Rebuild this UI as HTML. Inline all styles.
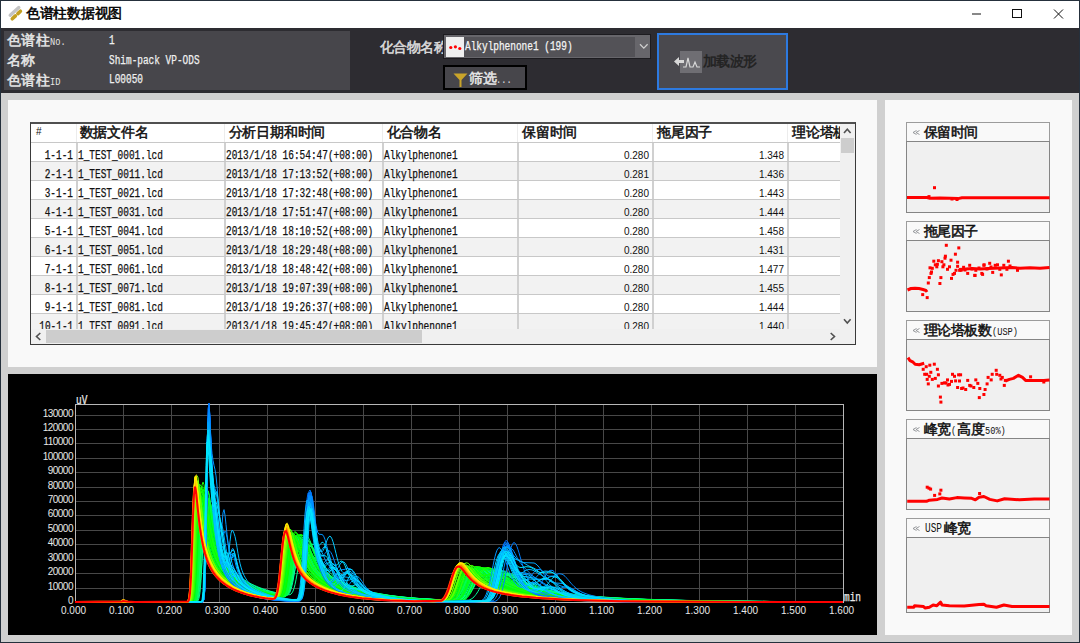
<!DOCTYPE html><html><head><meta charset="utf-8"><style>
*{margin:0;padding:0;box-sizing:border-box}
html,body{width:1080px;height:643px;overflow:hidden;background:#25303c;font-family:"Liberation Sans",sans-serif}
.a{position:absolute}
.t{position:absolute;white-space:pre;line-height:1}
.m{font-family:"Liberation Mono",monospace;font-size:12px;transform:scaleX(.786);transform-origin:0 0;-webkit-text-stroke:0.25px currentColor}
.mr{font-family:"Liberation Mono",monospace;font-size:12px;transform:scaleX(.786);transform-origin:100% 0;-webkit-text-stroke:0.25px currentColor}
.d{font-size:10px;letter-spacing:-0.5px}
.c{font-size:14.3px}
.lm{font-family:"Liberation Mono",monospace;display:inline-block;transform:scaleX(.786);transform-origin:0 100%}
.n{font-size:10px}
svg{position:absolute;left:0;top:0}
</style></head><body><div class="a" style="left:1px;top:1px;width:1078px;height:27px;background:#ffffff"></div><div class="a" style="left:1px;top:28px;width:1078px;height:65px;background:#2d2c31"></div><div class="a" style="left:4px;top:31px;width:346px;height:59px;background:#47464b"></div><div class="a" style="left:1px;top:93px;width:1078px;height:549px;background:#d0d0d0"></div><div class="a" style="left:8px;top:100px;width:869px;height:267px;background:#f9f9f9"></div><div class="a" style="left:8px;top:374px;width:869px;height:261px;background:#000000"></div><div class="a" style="left:885px;top:100px;width:187px;height:535px;background:#f9f9f9"></div><svg width="1080" height="30" style="left:0;top:0">
<line x1="10.2" y1="15.2" x2="18.8" y2="7.6" stroke="#c4c4c4" stroke-width="3.4" stroke-linecap="round"/>
<line x1="12.3" y1="18.8" x2="15.4" y2="15.9" stroke="#c4a021" stroke-width="3.6" stroke-linecap="round"/>
<line x1="17.9" y1="13.6" x2="20.4" y2="11.2" stroke="#c4a021" stroke-width="3.6" stroke-linecap="round"/>
<line x1="972" y1="14" x2="981" y2="14" stroke="#555" stroke-width="1.4"/>
<rect x="1012.5" y="9.5" width="9" height="8" fill="none" stroke="#111" stroke-width="1"/>
<path d="M1054 9.5L1063 18.5M1063 9.5L1054 18.5" stroke="#111" stroke-width="1"/>
</svg><div class="t" style="left:26.1px;top:6.2px;font-size:14.27px;letter-spacing:-0.30px;color:#000"><span style="-webkit-text-stroke:0.5px #000">色谱柱数据视图</span></div><div class="t" style="left:7.1px;top:34.1px;font-size:13.87px;letter-spacing:0.40px;color:#e6e6e6"><span style="-webkit-text-stroke:0.5px #e6e6e6">色谱柱</span><span class="lm" style="font-size:11px;letter-spacing:0">No.</span></div><div class="t" style="left:7.1px;top:54.0px;font-size:13.87px;letter-spacing:0.40px;color:#e6e6e6"><span style="-webkit-text-stroke:0.5px #e6e6e6">名称</span></div><div class="t" style="left:7.1px;top:73.6px;font-size:13.87px;letter-spacing:0.40px;color:#e6e6e6"><span style="-webkit-text-stroke:0.5px #e6e6e6">色谱柱</span><span class="lm" style="font-size:11px;letter-spacing:0">ID</span></div><div class="t m" style="left:109px;top:35px;color:#f0f0f0">1</div><div class="t m" style="left:109px;top:54.5px;color:#f0f0f0">Shim-pack VP-ODS</div><div class="t m" style="left:109px;top:74px;color:#f0f0f0">L00050</div><div class="t" style="left:379.6px;top:39.8px;font-size:14.13px;letter-spacing:-0.40px;color:#dcdcdc"><span style="-webkit-text-stroke:0.5px #dcdcdc">化合物名称</span></div><div class="a" style="left:443px;top:34px;width:208px;height:25px;background:#67666b;border:1px solid #1d1c20"></div><div class="a" style="left:464px;top:37px;width:171px;height:20px;background:#535257"></div><div class="a" style="left:446px;top:37px;width:18px;height:20px;background:#efefef"></div><svg width="1080" height="100" style="left:0;top:0">
<circle cx="450.8" cy="47.5" r="1.6" fill="#f00"/><circle cx="455.4" cy="46.8" r="1.6" fill="#f00"/><circle cx="459.8" cy="48.5" r="1.6" fill="#f00"/>
<path d="M640 44.3L643.8 48.1L647.6 44.3" fill="none" stroke="#d0d0d0" stroke-width="1.3"/>
</svg><div class="t m" style="left:465px;top:41px;color:#f4f4f4">Alkylphenone1 (199)</div><div class="a" style="left:443px;top:65px;width:84px;height:25px;background:#47464b;border:2px solid #000"></div><svg width="1080" height="100" style="left:0;top:0">
<path d="M453.5 73.5H467.5L461.5 80V87H459.5V80Z" fill="#c9a42a"/>
</svg><div class="t" style="left:469.1px;top:70.8px;font-size:14.13px;letter-spacing:-0.40px;color:#e8e8e8"><span style="-webkit-text-stroke:0.5px #e8e8e8">筛选</span><span class="lm" style="font-size:11px;letter-spacing:0">...</span></div><div class="a" style="left:657px;top:33px;width:131px;height:57px;background:#4a494e;border:2px solid #2d7ae0"></div><div class="a" style="left:680px;top:51px;width:22px;height:22px;background:#6f6e73"></div><svg width="1080" height="100" style="left:0;top:0">
<path d="M674 61.5L679 57V60H684V63H679V66Z" fill="#d8d8d8"/>
<path d="M683 67H686L688 58L690 67H693L695 62L697 67H700" fill="none" stroke="#d8d8d8" stroke-width="1.2"/>
</svg><div class="t" style="left:702.6px;top:53.8px;font-size:14.13px;letter-spacing:-0.40px;color:#222"><span style="-webkit-text-stroke:0.5px #222">加载波形</span></div><div class="a" style="left:30px;top:122px;width:826px;height:223px;background:#ffffff;border:1px solid #3a3a3a;border-top:2px solid #505050"></div><div class="a" style="left:31px;top:124px;width:809px;height:205px;overflow:hidden"><div class="a" style="left:0px;top:18px;width:809px;height:1px;background:#c8c8c8"></div><div class="a" style="left:45px;top:0px;width:1px;height:18px;background:#ececec"></div><div class="a" style="left:193px;top:0px;width:1px;height:18px;background:#ececec"></div><div class="a" style="left:351px;top:0px;width:1px;height:18px;background:#ececec"></div><div class="a" style="left:486px;top:0px;width:1px;height:18px;background:#ececec"></div><div class="a" style="left:621px;top:0px;width:1px;height:18px;background:#ececec"></div><div class="a" style="left:756px;top:0px;width:1px;height:18px;background:#ececec"></div><div class="a" style="left:0px;top:37px;width:809px;height:1px;background:#c8c8c8"></div><div class="a" style="left:45px;top:19px;width:2px;height:18px;background:#d0d0d0"></div><div class="a" style="left:193px;top:19px;width:2px;height:18px;background:#d0d0d0"></div><div class="a" style="left:351px;top:19px;width:2px;height:18px;background:#d0d0d0"></div><div class="a" style="left:486px;top:19px;width:2px;height:18px;background:#d0d0d0"></div><div class="a" style="left:621px;top:19px;width:2px;height:18px;background:#d0d0d0"></div><div class="a" style="left:756px;top:19px;width:2px;height:18px;background:#d0d0d0"></div><div class="t mr" style="right:767px;top:26px;color:#111">1-1-1</div><div class="t m" style="left:47px;top:26px;color:#111">1_TEST_0001.lcd</div><div class="t m" style="left:195px;top:26px;color:#111">2013/1/18 16:54:47(+08:00)</div><div class="t m" style="left:353px;top:26px;color:#111">Alkylphenone1</div><div class="t n" style="right:191px;top:27px;color:#111">0.280</div><div class="t n" style="right:56px;top:27px;color:#111">1.348</div><div class="a" style="left:0px;top:38px;width:809px;height:18px;background:#f2f2f2"></div><div class="a" style="left:0px;top:56px;width:809px;height:1px;background:#c8c8c8"></div><div class="a" style="left:45px;top:38px;width:2px;height:18px;background:#d0d0d0"></div><div class="a" style="left:193px;top:38px;width:2px;height:18px;background:#d0d0d0"></div><div class="a" style="left:351px;top:38px;width:2px;height:18px;background:#d0d0d0"></div><div class="a" style="left:486px;top:38px;width:2px;height:18px;background:#d0d0d0"></div><div class="a" style="left:621px;top:38px;width:2px;height:18px;background:#d0d0d0"></div><div class="a" style="left:756px;top:38px;width:2px;height:18px;background:#d0d0d0"></div><div class="t mr" style="right:767px;top:45px;color:#111">2-1-1</div><div class="t m" style="left:47px;top:45px;color:#111">1_TEST_0011.lcd</div><div class="t m" style="left:195px;top:45px;color:#111">2013/1/18 17:13:52(+08:00)</div><div class="t m" style="left:353px;top:45px;color:#111">Alkylphenone1</div><div class="t n" style="right:191px;top:46px;color:#111">0.281</div><div class="t n" style="right:56px;top:46px;color:#111">1.436</div><div class="a" style="left:0px;top:75px;width:809px;height:1px;background:#c8c8c8"></div><div class="a" style="left:45px;top:57px;width:2px;height:18px;background:#d0d0d0"></div><div class="a" style="left:193px;top:57px;width:2px;height:18px;background:#d0d0d0"></div><div class="a" style="left:351px;top:57px;width:2px;height:18px;background:#d0d0d0"></div><div class="a" style="left:486px;top:57px;width:2px;height:18px;background:#d0d0d0"></div><div class="a" style="left:621px;top:57px;width:2px;height:18px;background:#d0d0d0"></div><div class="a" style="left:756px;top:57px;width:2px;height:18px;background:#d0d0d0"></div><div class="t mr" style="right:767px;top:64px;color:#111">3-1-1</div><div class="t m" style="left:47px;top:64px;color:#111">1_TEST_0021.lcd</div><div class="t m" style="left:195px;top:64px;color:#111">2013/1/18 17:32:48(+08:00)</div><div class="t m" style="left:353px;top:64px;color:#111">Alkylphenone1</div><div class="t n" style="right:191px;top:65px;color:#111">0.280</div><div class="t n" style="right:56px;top:65px;color:#111">1.443</div><div class="a" style="left:0px;top:76px;width:809px;height:18px;background:#f2f2f2"></div><div class="a" style="left:0px;top:94px;width:809px;height:1px;background:#c8c8c8"></div><div class="a" style="left:45px;top:76px;width:2px;height:18px;background:#d0d0d0"></div><div class="a" style="left:193px;top:76px;width:2px;height:18px;background:#d0d0d0"></div><div class="a" style="left:351px;top:76px;width:2px;height:18px;background:#d0d0d0"></div><div class="a" style="left:486px;top:76px;width:2px;height:18px;background:#d0d0d0"></div><div class="a" style="left:621px;top:76px;width:2px;height:18px;background:#d0d0d0"></div><div class="a" style="left:756px;top:76px;width:2px;height:18px;background:#d0d0d0"></div><div class="t mr" style="right:767px;top:83px;color:#111">4-1-1</div><div class="t m" style="left:47px;top:83px;color:#111">1_TEST_0031.lcd</div><div class="t m" style="left:195px;top:83px;color:#111">2013/1/18 17:51:47(+08:00)</div><div class="t m" style="left:353px;top:83px;color:#111">Alkylphenone1</div><div class="t n" style="right:191px;top:84px;color:#111">0.280</div><div class="t n" style="right:56px;top:84px;color:#111">1.444</div><div class="a" style="left:0px;top:113px;width:809px;height:1px;background:#c8c8c8"></div><div class="a" style="left:45px;top:95px;width:2px;height:18px;background:#d0d0d0"></div><div class="a" style="left:193px;top:95px;width:2px;height:18px;background:#d0d0d0"></div><div class="a" style="left:351px;top:95px;width:2px;height:18px;background:#d0d0d0"></div><div class="a" style="left:486px;top:95px;width:2px;height:18px;background:#d0d0d0"></div><div class="a" style="left:621px;top:95px;width:2px;height:18px;background:#d0d0d0"></div><div class="a" style="left:756px;top:95px;width:2px;height:18px;background:#d0d0d0"></div><div class="t mr" style="right:767px;top:102px;color:#111">5-1-1</div><div class="t m" style="left:47px;top:102px;color:#111">1_TEST_0041.lcd</div><div class="t m" style="left:195px;top:102px;color:#111">2013/1/18 18:10:52(+08:00)</div><div class="t m" style="left:353px;top:102px;color:#111">Alkylphenone1</div><div class="t n" style="right:191px;top:103px;color:#111">0.280</div><div class="t n" style="right:56px;top:103px;color:#111">1.458</div><div class="a" style="left:0px;top:114px;width:809px;height:18px;background:#f2f2f2"></div><div class="a" style="left:0px;top:132px;width:809px;height:1px;background:#c8c8c8"></div><div class="a" style="left:45px;top:114px;width:2px;height:18px;background:#d0d0d0"></div><div class="a" style="left:193px;top:114px;width:2px;height:18px;background:#d0d0d0"></div><div class="a" style="left:351px;top:114px;width:2px;height:18px;background:#d0d0d0"></div><div class="a" style="left:486px;top:114px;width:2px;height:18px;background:#d0d0d0"></div><div class="a" style="left:621px;top:114px;width:2px;height:18px;background:#d0d0d0"></div><div class="a" style="left:756px;top:114px;width:2px;height:18px;background:#d0d0d0"></div><div class="t mr" style="right:767px;top:121px;color:#111">6-1-1</div><div class="t m" style="left:47px;top:121px;color:#111">1_TEST_0051.lcd</div><div class="t m" style="left:195px;top:121px;color:#111">2013/1/18 18:29:48(+08:00)</div><div class="t m" style="left:353px;top:121px;color:#111">Alkylphenone1</div><div class="t n" style="right:191px;top:122px;color:#111">0.280</div><div class="t n" style="right:56px;top:122px;color:#111">1.431</div><div class="a" style="left:0px;top:151px;width:809px;height:1px;background:#c8c8c8"></div><div class="a" style="left:45px;top:133px;width:2px;height:18px;background:#d0d0d0"></div><div class="a" style="left:193px;top:133px;width:2px;height:18px;background:#d0d0d0"></div><div class="a" style="left:351px;top:133px;width:2px;height:18px;background:#d0d0d0"></div><div class="a" style="left:486px;top:133px;width:2px;height:18px;background:#d0d0d0"></div><div class="a" style="left:621px;top:133px;width:2px;height:18px;background:#d0d0d0"></div><div class="a" style="left:756px;top:133px;width:2px;height:18px;background:#d0d0d0"></div><div class="t mr" style="right:767px;top:140px;color:#111">7-1-1</div><div class="t m" style="left:47px;top:140px;color:#111">1_TEST_0061.lcd</div><div class="t m" style="left:195px;top:140px;color:#111">2013/1/18 18:48:42(+08:00)</div><div class="t m" style="left:353px;top:140px;color:#111">Alkylphenone1</div><div class="t n" style="right:191px;top:141px;color:#111">0.280</div><div class="t n" style="right:56px;top:141px;color:#111">1.477</div><div class="a" style="left:0px;top:152px;width:809px;height:18px;background:#f2f2f2"></div><div class="a" style="left:0px;top:170px;width:809px;height:1px;background:#c8c8c8"></div><div class="a" style="left:45px;top:152px;width:2px;height:18px;background:#d0d0d0"></div><div class="a" style="left:193px;top:152px;width:2px;height:18px;background:#d0d0d0"></div><div class="a" style="left:351px;top:152px;width:2px;height:18px;background:#d0d0d0"></div><div class="a" style="left:486px;top:152px;width:2px;height:18px;background:#d0d0d0"></div><div class="a" style="left:621px;top:152px;width:2px;height:18px;background:#d0d0d0"></div><div class="a" style="left:756px;top:152px;width:2px;height:18px;background:#d0d0d0"></div><div class="t mr" style="right:767px;top:159px;color:#111">8-1-1</div><div class="t m" style="left:47px;top:159px;color:#111">1_TEST_0071.lcd</div><div class="t m" style="left:195px;top:159px;color:#111">2013/1/18 19:07:39(+08:00)</div><div class="t m" style="left:353px;top:159px;color:#111">Alkylphenone1</div><div class="t n" style="right:191px;top:160px;color:#111">0.280</div><div class="t n" style="right:56px;top:160px;color:#111">1.455</div><div class="a" style="left:0px;top:189px;width:809px;height:1px;background:#c8c8c8"></div><div class="a" style="left:45px;top:171px;width:2px;height:18px;background:#d0d0d0"></div><div class="a" style="left:193px;top:171px;width:2px;height:18px;background:#d0d0d0"></div><div class="a" style="left:351px;top:171px;width:2px;height:18px;background:#d0d0d0"></div><div class="a" style="left:486px;top:171px;width:2px;height:18px;background:#d0d0d0"></div><div class="a" style="left:621px;top:171px;width:2px;height:18px;background:#d0d0d0"></div><div class="a" style="left:756px;top:171px;width:2px;height:18px;background:#d0d0d0"></div><div class="t mr" style="right:767px;top:178px;color:#111">9-1-1</div><div class="t m" style="left:47px;top:178px;color:#111">1_TEST_0081.lcd</div><div class="t m" style="left:195px;top:178px;color:#111">2013/1/18 19:26:37(+08:00)</div><div class="t m" style="left:353px;top:178px;color:#111">Alkylphenone1</div><div class="t n" style="right:191px;top:179px;color:#111">0.280</div><div class="t n" style="right:56px;top:179px;color:#111">1.444</div><div class="a" style="left:0px;top:190px;width:809px;height:18px;background:#f2f2f2"></div><div class="a" style="left:0px;top:208px;width:809px;height:1px;background:#c8c8c8"></div><div class="a" style="left:45px;top:190px;width:2px;height:18px;background:#d0d0d0"></div><div class="a" style="left:193px;top:190px;width:2px;height:18px;background:#d0d0d0"></div><div class="a" style="left:351px;top:190px;width:2px;height:18px;background:#d0d0d0"></div><div class="a" style="left:486px;top:190px;width:2px;height:18px;background:#d0d0d0"></div><div class="a" style="left:621px;top:190px;width:2px;height:18px;background:#d0d0d0"></div><div class="a" style="left:756px;top:190px;width:2px;height:18px;background:#d0d0d0"></div><div class="t mr" style="right:767px;top:197px;color:#111">10-1-1</div><div class="t m" style="left:47px;top:197px;color:#111">1_TEST_0091.lcd</div><div class="t m" style="left:195px;top:197px;color:#111">2013/1/18 19:45:42(+08:00)</div><div class="t m" style="left:353px;top:197px;color:#111">Alkylphenone1</div><div class="t n" style="right:191px;top:198px;color:#111">0.280</div><div class="t n" style="right:56px;top:198px;color:#111">1.440</div></div><div class="a" style="left:31px;top:124px;width:809px;height:18px;overflow:hidden"><div class="t" style="left:48.6px;top:1.2px;font-size:14.40px;letter-spacing:-0.20px;color:#111"><span style="-webkit-text-stroke:0.5px #111">数据文件名</span></div><div class="t" style="left:197.6px;top:1.2px;font-size:14.40px;letter-spacing:-0.20px;color:#111"><span style="-webkit-text-stroke:0.5px #111">分析日期和时间</span></div><div class="t" style="left:355.6px;top:1.2px;font-size:14.40px;letter-spacing:-0.20px;color:#111"><span style="-webkit-text-stroke:0.5px #111">化合物名</span></div><div class="t" style="left:491.1px;top:1.2px;font-size:14.40px;letter-spacing:-0.20px;color:#111"><span style="-webkit-text-stroke:0.5px #111">保留时间</span></div><div class="t" style="left:626.1px;top:1.2px;font-size:14.40px;letter-spacing:-0.20px;color:#111"><span style="-webkit-text-stroke:0.5px #111">拖尾因子</span></div><div class="t" style="left:761.1px;top:1.2px;font-size:14.40px;letter-spacing:-0.20px;color:#111"><span style="-webkit-text-stroke:0.5px #111">理论塔板数</span></div><div class="t" style="left:5px;top:3px;font-size:10px;color:#111">#</div></div><div class="a" style="left:840px;top:124px;width:15px;height:205px;background:#f0f0f0"></div><div class="a" style="left:841px;top:138px;width:13px;height:15px;background:#cdcdcd"></div><div class="a" style="left:31px;top:329px;width:824px;height:15px;background:#f0f0f0"></div><div class="a" style="left:46px;top:330px;width:376px;height:13px;background:#cdcdcd"></div><svg width="1080" height="400" style="left:0;top:0">
<path d="M844 133L847.3 129.2L850.6 133" fill="none" stroke="#505050" stroke-width="1.6"/>
<path d="M844 319.2L847.3 323L850.6 319.2" fill="none" stroke="#505050" stroke-width="1.6"/>
<path d="M40.3 333L36.5 336.5L40.3 340" fill="none" stroke="#505050" stroke-width="1.6"/>
<path d="M830.7 333L834.5 336.5L830.7 340" fill="none" stroke="#505050" stroke-width="1.6"/>
</svg><svg width="1080" height="643" style="left:0;top:0"><rect x="75.5" y="404.5" width="768" height="198" fill="none" stroke="#b8b8b8" stroke-width="1"/><line x1="123.5" y1="405" x2="123.5" y2="602" stroke="#484848"/><line x1="171.5" y1="405" x2="171.5" y2="602" stroke="#484848"/><line x1="219.5" y1="405" x2="219.5" y2="602" stroke="#484848"/><line x1="267.5" y1="405" x2="267.5" y2="602" stroke="#484848"/><line x1="315.5" y1="405" x2="315.5" y2="602" stroke="#484848"/><line x1="363.5" y1="405" x2="363.5" y2="602" stroke="#484848"/><line x1="411.5" y1="405" x2="411.5" y2="602" stroke="#484848"/><line x1="459.5" y1="405" x2="459.5" y2="602" stroke="#484848"/><line x1="507.5" y1="405" x2="507.5" y2="602" stroke="#484848"/><line x1="555.5" y1="405" x2="555.5" y2="602" stroke="#484848"/><line x1="603.5" y1="405" x2="603.5" y2="602" stroke="#484848"/><line x1="651.5" y1="405" x2="651.5" y2="602" stroke="#484848"/><line x1="699.5" y1="405" x2="699.5" y2="602" stroke="#484848"/><line x1="747.5" y1="405" x2="747.5" y2="602" stroke="#484848"/><line x1="795.5" y1="405" x2="795.5" y2="602" stroke="#484848"/><line x1="76" y1="588.5" x2="843" y2="588.5" stroke="#484848"/><line x1="76" y1="573.5" x2="843" y2="573.5" stroke="#484848"/><line x1="76" y1="559.5" x2="843" y2="559.5" stroke="#484848"/><line x1="76" y1="544.5" x2="843" y2="544.5" stroke="#484848"/><line x1="76" y1="530.5" x2="843" y2="530.5" stroke="#484848"/><line x1="76" y1="515.5" x2="843" y2="515.5" stroke="#484848"/><line x1="76" y1="501.5" x2="843" y2="501.5" stroke="#484848"/><line x1="76" y1="487.5" x2="843" y2="487.5" stroke="#484848"/><line x1="76" y1="472.5" x2="843" y2="472.5" stroke="#484848"/><line x1="76" y1="458.5" x2="843" y2="458.5" stroke="#484848"/><line x1="76" y1="443.5" x2="843" y2="443.5" stroke="#484848"/><line x1="76" y1="429.5" x2="843" y2="429.5" stroke="#484848"/><line x1="76" y1="415.5" x2="843" y2="415.5" stroke="#484848"/></svg><svg width="1080" height="643" style="left:0;top:0"><defs><clipPath id="pc"><rect x="75" y="403" width="769" height="201"/></clipPath></defs><g clip-path="url(#pc)" fill="none" stroke-width="1"><path d="M75 602.0L195 601.7L196 601.0L197 598.6L198 593.1L199 582.5L200 566.2L201 546.5L202 527.8L203 514.3L204 507.1L205 504.1L206 502.3L207 500.2L208 498.7L209 499.4L210 502.9L211 508.4L212 514.6L213 520.8L214 526.5L215 531.5L216 536.0L217 540.1L218 543.7L219 546.9L220 549.8L221 552.5L222 554.9L223 557.1L224 559.1L225 561.0L226 562.7L227 564.3L228 565.8L229 567.2L230 568.5L231 569.7L232 570.8L233 571.9L234 572.9L235 573.8L236 574.7L237 575.6L238 576.4L239 577.2L240 578.0L241 578.7L242 579.4L243 580.0L244 580.7L245 581.3L246 581.9L247 582.4L248 583.0L249 583.5L250 584.0L251 584.5L252 585.0L253 585.5L254 585.9L255 586.3L256 586.8L257 587.2L259 587.9L261 588.7L263 589.4L265 590.0L267 590.6L269 591.2L271 591.8L273 592.3L275 592.8L277 593.2L279 593.7L282 594.2L285 594.2L286 593.8L287 592.9L288 591.3L289 588.9L290 585.4L291 580.9L292 575.3L293 569.0L294 562.4L295 556.1L296 550.5L297 546.1L298 543.2L299 541.7L300 541.6L301 542.5L302 544.1L303 546.1L304 548.3L305 550.3L306 552.1L307 553.6L308 554.6L309 555.3L311 555.9L312 556.1L313 556.6L314 557.3L315 558.2L316 559.5L317 561.0L318 562.6L319 564.2L320 565.8L321 567.3L322 568.7L323 570.1L324 571.3L325 572.5L326 573.6L327 574.6L328 575.5L329 576.4L330 577.2L331 578.0L332 578.7L333 579.4L334 580.0L335 580.7L336 581.2L337 581.8L338 582.3L339 582.9L340 583.3L341 583.8L342 584.3L343 584.7L344 585.1L345 585.5L347 586.3L349 587.0L351 587.7L353 588.3L355 588.9L357 589.5L359 590.0L361 590.5L363 591.0L365 591.5L367 591.9L369 592.3L372 592.9L375 593.5L378 594.0L381 594.5L384 594.9L387 595.3L391 595.8L395 596.3L399 596.8L403 597.2L408 597.6L413 598.0L419 598.5L426 598.9L434 599.4L443 599.8L455 600.2L462 599.6L463 599.3L464 598.9L465 598.3L466 597.5L467 596.6L468 595.5L469 594.2L470 592.7L471 591.1L472 589.2L473 587.3L474 585.3L475 583.3L476 581.4L477 579.6L478 577.9L479 576.4L480 575.1L481 574.0L482 573.1L483 572.5L484 572.1L492 572.7L494 573.4L495 573.9L496 574.3L497 574.9L498 575.5L499 576.1L500 576.7L501 577.4L502 578.1L503 578.7L504 579.4L505 580.0L506 580.7L507 581.3L508 581.9L509 582.5L510 583.0L511 583.6L512 584.1L513 584.5L514 585.0L515 585.4L516 585.9L517 586.3L519 587.0L521 587.7L523 588.4L525 588.9L527 589.5L529 590.0L531 590.5L533 590.9L535 591.3L538 591.9L541 592.4L544 592.9L547 593.4L550 593.8L554 594.3L558 594.8L562 595.2L567 595.7L572 596.1L578 596.6L584 597.0L591 597.4L598 597.9L606 598.3L615 598.7L625 599.1L637 599.5L651 599.9L668 600.3L690 600.7L721 601.1L771 601.5L843 601.8" stroke="#00ffa1"/><path d="M75 602.0L122 601.6L123 601.0L127 601.6L195 601.8L196 601.1L197 599.1L198 594.3L199 585.2L200 571.5L201 555.0L202 539.7L203 529.0L204 523.8L205 522.4L206 521.6L207 519.4L208 515.5L209 511.4L210 509.4L211 510.3L212 514.0L213 519.4L214 525.2L215 530.7L216 535.7L217 540.2L218 544.2L219 547.7L220 550.9L221 553.7L222 556.3L223 558.6L224 560.7L225 562.6L226 564.3L227 566.0L228 567.4L229 568.8L230 570.1L231 571.3L232 572.5L233 573.5L234 574.5L235 575.5L236 576.3L237 577.2L238 578.0L239 578.8L240 579.5L241 580.2L242 580.9L243 581.5L244 582.1L245 582.7L246 583.3L247 583.8L248 584.4L249 584.9L250 585.4L251 585.9L252 586.3L253 586.8L254 587.2L255 587.6L256 588.0L258 588.8L260 589.5L262 590.2L264 590.8L266 591.4L268 592.0L270 592.5L272 593.0L274 593.5L276 593.9L278 594.3L281 594.9L284 595.4L287 595.2L288 594.7L289 593.7L290 592.0L291 589.4L292 585.7L293 581.0L294 575.2L295 568.8L296 562.1L297 555.8L298 550.4L299 546.3L300 543.6L301 542.4L302 542.5L303 543.6L304 545.3L305 547.5L306 549.9L307 552.3L308 554.7L309 556.9L310 559.1L311 561.0L312 562.9L313 564.6L314 566.2L315 567.6L316 569.0L317 570.3L318 571.5L319 572.7L320 573.7L321 574.7L322 575.7L323 576.5L324 577.4L325 578.1L326 578.9L327 579.6L328 580.3L329 580.9L330 581.5L331 582.1L332 582.6L333 583.1L334 583.6L335 584.1L336 584.6L337 585.0L338 585.4L339 585.8L341 586.6L343 587.3L345 587.9L347 588.6L349 589.1L351 589.7L353 590.2L355 590.7L357 591.1L359 591.6L361 592.0L364 592.6L367 593.1L370 593.6L373 594.1L376 594.6L379 595.0L383 595.5L387 596.0L391 596.4L395 596.9L400 597.3L405 597.8L411 598.2L417 598.6L424 599.0L432 599.5L442 599.9L462 599.3L463 598.9L464 598.2L465 597.5L466 596.5L467 595.3L468 594.0L469 592.4L470 590.6L471 588.7L472 586.6L473 584.5L474 582.4L475 580.3L476 578.4L477 576.6L478 575.0L479 573.7L480 572.7L481 572.0L482 571.5L486 571.8L487 572.3L488 572.8L489 573.4L490 573.9L491 574.5L492 575.0L493 575.4L495 575.9L500 575.4L502 574.7L504 574.0L506 573.4L513 574.1L514 574.6L515 575.1L516 575.7L517 576.3L518 577.0L519 577.7L520 578.3L521 579.0L522 579.7L523 580.3L524 581.0L525 581.6L526 582.2L527 582.7L528 583.3L529 583.8L530 584.2L531 584.7L532 585.1L533 585.6L535 586.3L537 587.1L539 587.7L541 588.3L543 588.9L545 589.4L547 589.9L549 590.3L551 590.8L553 591.2L556 591.7L559 592.2L562 592.7L565 593.2L568 593.6L572 594.1L576 594.6L580 595.0L584 595.4L589 595.9L594 596.3L600 596.8L606 597.2L613 597.7L620 598.1L628 598.5L637 598.9L648 599.3L660 599.7L675 600.1L694 600.6L719 601.0L757 601.4L835 601.8L843 601.8" stroke="#00ff9e"/><path d="M75 602.0L194 601.6L195 600.6L196 597.5L197 590.4L198 577.4L199 558.5L200 536.9L201 517.8L202 505.6L203 501.3L204 503.1L205 508.0L206 514.0L207 519.9L208 525.4L209 530.5L210 535.0L211 539.1L212 542.8L213 546.2L214 549.3L215 552.1L216 554.7L217 557.0L218 559.2L219 561.2L220 563.0L221 564.7L222 566.2L223 567.7L224 569.0L225 570.3L226 571.4L227 572.5L228 573.6L229 574.5L230 575.4L231 576.3L232 577.1L233 577.9L234 578.6L235 579.3L236 580.0L237 580.6L238 581.2L239 581.8L240 582.3L241 582.9L242 583.4L243 583.9L244 584.4L245 584.8L246 585.3L247 585.7L248 586.1L249 586.5L251 587.3L253 588.0L255 588.7L257 589.3L259 589.9L261 590.5L263 591.1L265 591.6L267 592.1L269 592.5L271 593.0L273 593.4L275 593.8L278 594.4L281 594.9L286 594.8L287 594.2L288 593.1L289 591.5L290 589.2L291 586.2L292 582.6L293 578.4L294 573.9L295 569.4L296 565.1L297 561.1L298 557.5L299 554.4L300 551.8L301 549.6L302 548.0L303 546.9L305 546.9L306 547.9L307 549.5L308 551.5L309 553.7L310 556.1L311 558.5L312 560.7L313 562.9L314 564.9L315 566.7L316 568.4L317 569.9L318 571.3L319 572.6L320 573.8L321 575.0L322 576.0L323 577.0L324 577.9L325 578.7L326 579.5L327 580.2L328 580.9L329 581.6L330 582.2L331 582.8L332 583.4L333 583.9L334 584.4L335 584.9L336 585.4L337 585.9L338 586.3L339 586.7L340 587.1L342 587.9L344 588.6L346 589.2L348 589.9L350 590.4L352 591.0L354 591.5L356 592.0L358 592.4L360 592.9L362 593.3L365 593.9L368 594.4L371 594.9L374 595.4L377 595.8L380 596.2L384 596.7L388 597.2L392 597.6L397 598.0L402 598.4L408 598.9L415 599.3L423 599.7L433 600.2L445 600.6L469 600.1L470 599.7L471 599.2L472 598.6L473 597.8L474 596.9L475 595.7L476 594.4L477 593.0L478 591.4L479 589.6L480 587.8L481 585.9L482 584.1L483 582.2L484 580.4L485 578.7L486 577.2L487 575.8L488 574.6L489 573.5L490 572.7L491 572.1L492 571.7L496 571.8L497 572.3L498 572.8L499 573.4L500 574.0L501 574.7L502 575.4L503 576.0L504 576.6L505 577.1L506 577.6L508 578.1L514 577.5L517 577.0L521 577.6L522 577.9L523 578.4L524 578.9L525 579.5L526 580.1L527 580.7L528 581.3L529 581.9L530 582.5L531 583.1L532 583.6L533 584.2L534 584.7L535 585.2L536 585.6L537 586.1L538 586.5L539 586.9L541 587.6L543 588.3L545 588.9L547 589.5L549 590.1L551 590.5L553 591.0L555 591.4L557 591.8L560 592.4L563 592.9L566 593.4L569 593.8L572 594.2L576 594.7L580 595.2L584 595.6L589 596.1L594 596.5L599 596.9L605 597.4L612 597.8L619 598.2L627 598.6L636 599.0L647 599.5L660 599.9L676 600.3L696 600.7L724 601.1L771 601.5L843 601.8" stroke="#00ff9c"/><path d="M75 602.0L193 601.8L194 601.1L195 598.8L196 593.3L197 582.4L198 565.2L199 544.0L200 523.6L201 508.9L202 502.4L203 502.6L204 506.9L205 512.7L206 518.7L207 524.4L208 529.5L209 534.2L210 538.4L211 542.2L212 545.7L213 548.8L214 551.7L215 554.3L216 556.7L217 558.9L218 560.9L219 562.8L220 564.5L221 566.1L222 567.6L223 568.9L224 570.2L225 571.4L226 572.5L227 573.5L228 574.5L229 575.4L230 576.3L231 577.1L232 577.9L233 578.6L234 579.3L235 580.0L236 580.6L237 581.2L238 581.8L239 582.4L240 582.9L241 583.4L242 583.9L243 584.4L244 584.9L245 585.3L246 585.7L247 586.2L248 586.6L250 587.3L252 588.1L254 588.7L256 589.4L258 590.0L260 590.6L262 591.1L264 591.6L266 592.1L268 592.6L270 593.0L272 593.5L274 593.9L277 594.4L280 594.9L284 594.8L285 594.2L286 593.1L287 591.3L288 588.7L289 585.0L290 580.3L291 574.7L292 568.5L293 562.2L294 556.2L295 550.9L296 546.6L297 543.5L298 541.6L299 540.7L300 540.8L301 541.5L302 542.5L303 543.8L304 545.0L305 546.0L306 546.9L307 547.7L308 548.6L309 549.5L310 550.7L311 552.1L312 553.8L313 555.7L314 557.7L315 559.7L316 561.6L317 563.4L318 565.1L319 566.7L320 568.2L321 569.5L322 570.8L323 571.9L324 573.0L325 574.0L326 575.0L327 575.9L328 576.7L329 577.5L330 578.3L331 579.0L332 579.6L333 580.3L334 580.9L335 581.5L336 582.0L337 582.6L338 583.1L339 583.6L340 584.0L341 584.5L342 584.9L343 585.3L344 585.7L346 586.5L348 587.2L350 587.9L352 588.6L354 589.2L356 589.8L358 590.3L360 590.8L362 591.3L364 591.8L366 592.2L368 592.6L370 593.0L373 593.6L376 594.1L379 594.6L382 595.1L385 595.5L388 595.9L392 596.4L396 596.9L400 597.3L405 597.7L410 598.2L416 598.6L423 599.1L431 599.5L440 599.9L452 600.3L459 599.9L461 599.2L462 598.7L463 598.1L464 597.3L465 596.4L466 595.4L467 594.2L468 592.9L469 591.5L470 590.0L471 588.5L472 587.0L473 585.5L474 584.1L475 582.7L476 581.5L477 580.4L478 579.4L479 578.5L480 577.7L481 576.9L482 576.1L483 575.4L484 574.6L485 573.9L486 573.2L487 572.4L488 571.8L489 571.2L490 570.8L492 570.3L495 570.7L496 571.1L497 571.7L498 572.3L499 573.1L500 573.9L501 574.7L502 575.6L503 576.5L504 577.3L505 578.1L506 578.9L507 579.7L508 580.4L509 581.1L510 581.8L511 582.4L512 583.0L513 583.6L514 584.1L515 584.6L516 585.1L517 585.6L518 586.0L519 586.4L520 586.8L522 587.6L524 588.3L526 588.9L528 589.5L530 590.0L532 590.5L534 591.0L536 591.4L538 591.8L541 592.4L544 592.9L547 593.4L550 593.8L553 594.2L557 594.8L561 595.2L565 595.6L570 596.1L575 596.6L580 597.0L586 597.4L593 597.9L600 598.3L608 598.7L617 599.1L628 599.5L641 599.9L657 600.3L678 600.8L707 601.2L756 601.6L843 601.9" stroke="#00ff99"/><path d="M75 602.0L195 601.9L196 601.5L197 600.0L198 596.0L199 587.5L200 572.7L201 552.7L202 531.3L203 514.1L204 504.5L205 502.4L206 505.5L207 511.0L208 517.0L209 522.8L210 528.1L211 532.9L212 537.3L213 541.3L214 544.8L215 548.1L216 551.0L217 553.7L218 556.2L219 558.5L220 560.5L221 562.4L222 564.2L223 565.8L224 567.3L225 568.7L226 570.0L227 571.2L228 572.3L229 573.4L230 574.4L231 575.3L232 576.2L233 577.0L234 577.8L235 578.6L236 579.3L237 580.0L238 580.6L239 581.2L240 581.8L241 582.4L242 582.9L243 583.4L244 583.9L245 584.4L246 584.9L247 585.3L248 585.7L249 586.2L250 586.6L252 587.3L254 588.1L256 588.8L258 589.4L260 590.0L262 590.6L264 591.1L266 591.7L268 592.2L270 592.6L272 593.1L274 593.5L276 593.9L279 594.4L283 594.5L284 594.0L285 593.1L286 591.5L287 588.9L288 585.3L289 580.6L290 574.7L291 568.2L292 561.3L293 554.7L294 549.0L295 544.5L296 541.6L297 540.2L298 540.2L299 541.2L300 542.8L301 544.7L302 546.4L303 547.9L304 548.8L306 548.7L307 547.9L308 547.0L309 546.2L311 546.1L312 546.9L313 548.3L314 550.1L315 552.2L316 554.5L317 556.7L318 558.8L319 560.8L320 562.7L321 564.4L322 566.0L323 567.5L324 568.8L325 570.0L326 571.2L327 572.3L328 573.3L329 574.2L330 575.1L331 576.0L332 576.8L333 577.5L334 578.2L335 578.9L336 579.5L337 580.1L338 580.7L339 581.3L340 581.8L341 582.3L342 582.8L343 583.3L344 583.8L345 584.2L346 584.7L347 585.1L348 585.5L350 586.2L352 587.0L354 587.7L356 588.3L358 588.9L360 589.5L362 590.0L364 590.6L366 591.1L368 591.5L370 592.0L372 592.4L374 592.8L377 593.4L380 593.9L383 594.4L386 594.9L389 595.4L392 595.8L396 596.3L400 596.7L404 597.2L409 597.6L414 598.1L420 598.5L426 598.9L433 599.4L441 599.8L452 600.2L459 599.7L461 599.1L462 598.5L463 597.9L464 597.0L465 596.0L466 594.8L467 593.4L468 591.8L469 590.1L470 588.3L471 586.4L472 584.5L473 582.6L474 580.8L475 579.2L476 577.7L477 576.5L478 575.6L479 574.9L480 574.4L491 574.2L492 573.8L493 573.3L494 572.7L495 572.1L496 571.6L497 571.1L499 570.4L503 571.0L504 571.5L505 572.1L506 572.8L507 573.6L508 574.4L509 575.3L510 576.1L511 576.9L512 577.7L513 578.5L514 579.2L515 580.0L516 580.6L517 581.3L518 581.9L519 582.5L520 583.0L521 583.6L522 584.1L523 584.5L524 585.0L525 585.4L526 585.8L528 586.6L530 587.3L532 588.0L534 588.6L536 589.1L538 589.6L540 590.1L542 590.6L544 591.0L546 591.4L549 592.0L552 592.5L555 593.0L558 593.4L561 593.8L565 594.3L569 594.8L573 595.2L577 595.6L582 596.1L587 596.5L593 597.0L599 597.4L606 597.8L614 598.3L623 598.7L633 599.2L644 599.6L658 600.0L675 600.4L697 600.8L728 601.2L782 601.6L843 601.8" stroke="#00ff97"/><path d="M75 602.0L196 601.8L197 601.1L198 599.2L199 594.8L200 586.6L201 574.4L202 559.5L203 544.6L204 531.6L205 521.1L206 512.9L207 507.2L208 504.5L209 505.2L210 509.0L211 514.8L212 521.3L213 527.5L214 533.2L215 538.2L216 542.6L217 546.5L218 550.0L219 553.1L220 555.9L221 558.4L222 560.7L223 562.8L224 564.7L225 566.4L226 568.0L227 569.4L228 570.8L229 572.0L230 573.2L231 574.3L232 575.4L233 576.3L234 577.2L235 578.1L236 578.9L237 579.7L238 580.5L239 581.2L240 581.8L241 582.5L242 583.1L243 583.7L244 584.3L245 584.8L246 585.4L247 585.9L248 586.3L249 586.8L250 587.3L251 587.7L252 588.1L253 588.5L255 589.3L257 590.0L259 590.7L261 591.4L263 592.0L265 592.5L267 593.1L269 593.5L271 594.0L273 594.5L275 594.9L278 595.4L281 595.9L284 595.6L285 595.0L286 593.8L287 591.9L288 589.1L289 585.3L290 580.5L291 574.9L292 568.9L293 562.9L294 557.4L295 552.8L296 549.4L297 547.2L298 545.9L299 545.3L301 544.5L302 544.1L303 543.6L305 543.2L306 543.6L307 544.5L308 546.1L309 548.0L310 550.3L311 552.7L312 555.2L313 557.5L314 559.7L315 561.7L316 563.6L317 565.4L318 567.0L319 568.5L320 569.8L321 571.1L322 572.2L323 573.3L324 574.4L325 575.3L326 576.2L327 577.0L328 577.8L329 578.6L330 579.3L331 580.0L332 580.6L333 581.2L334 581.8L335 582.3L336 582.9L337 583.4L338 583.9L339 584.3L340 584.8L341 585.2L342 585.6L343 586.0L345 586.8L347 587.5L349 588.2L351 588.8L353 589.4L355 590.0L357 590.5L359 591.0L361 591.5L363 592.0L365 592.4L367 592.8L370 593.4L373 594.0L376 594.5L379 595.0L382 595.4L385 595.8L389 596.3L393 596.8L397 597.2L402 597.7L407 598.1L413 598.6L419 599.0L426 599.4L435 599.8L445 600.2L462 599.8L463 599.4L464 599.0L465 598.4L466 597.6L467 596.7L468 595.6L469 594.3L470 592.9L471 591.4L472 589.8L473 588.1L474 586.4L475 584.7L476 583.1L477 581.6L478 580.3L479 579.1L480 578.0L481 577.2L482 576.4L483 575.8L484 575.3L485 574.9L486 574.4L488 573.7L490 573.1L492 572.7L502 573.2L504 573.8L505 574.2L506 574.6L507 575.1L508 575.7L509 576.3L510 576.9L511 577.6L512 578.3L513 578.9L514 579.6L515 580.3L516 581.0L517 581.6L518 582.2L519 582.8L520 583.4L521 583.9L522 584.4L523 584.9L524 585.4L525 585.8L526 586.2L527 586.6L529 587.4L531 588.1L533 588.7L535 589.3L537 589.8L539 590.3L541 590.8L543 591.2L545 591.6L548 592.2L551 592.7L554 593.2L557 593.7L560 594.1L564 594.6L568 595.0L572 595.5L577 596.0L582 596.4L587 596.8L593 597.3L599 597.7L606 598.1L614 598.5L623 598.9L633 599.4L645 599.8L660 600.2L679 600.6L704 601.0L743 601.4L831 601.8L843 601.8" stroke="#00ff94"/><path d="M75 602.0L197 601.7L198 600.9L199 598.4L200 592.4L201 580.7L202 562.8L203 541.5L204 521.8L205 508.6L206 503.2L207 503.7L208 506.6L209 508.9L210 509.5L212 509.4L213 511.7L214 515.8L215 521.1L216 526.5L217 531.6L218 536.2L219 540.3L220 543.9L221 547.2L222 550.2L223 552.9L224 555.3L225 557.6L226 559.6L227 561.4L228 563.2L229 564.7L230 566.2L231 567.6L232 568.9L233 570.1L234 571.2L235 572.2L236 573.2L237 574.2L238 575.1L239 575.9L240 576.8L241 577.5L242 578.3L243 579.0L244 579.7L245 580.3L246 580.9L247 581.5L248 582.1L249 582.7L250 583.2L251 583.8L252 584.3L253 584.7L254 585.2L255 585.7L256 586.1L257 586.5L258 587.0L259 587.4L261 588.1L263 588.9L265 589.5L267 590.2L269 590.8L271 591.4L273 591.9L275 592.4L277 592.9L279 593.4L281 593.8L283 594.2L286 594.8L290 594.7L291 594.1L292 592.9L293 591.1L294 588.3L295 584.5L296 579.8L297 574.2L298 568.3L299 562.3L300 556.9L301 552.4L302 549.1L303 546.8L304 545.5L305 544.9L309 545.1L310 545.6L311 546.6L312 547.9L313 549.5L314 551.5L315 553.7L316 555.9L317 558.1L318 560.3L319 562.3L320 564.1L321 565.8L322 567.4L323 568.9L324 570.2L325 571.5L326 572.7L327 573.7L328 574.8L329 575.7L330 576.6L331 577.4L332 578.2L333 579.0L334 579.7L335 580.3L336 581.0L337 581.6L338 582.1L339 582.7L340 583.2L341 583.7L342 584.2L343 584.6L344 585.1L345 585.5L346 585.9L348 586.7L350 587.4L352 588.1L354 588.7L356 589.3L358 589.9L360 590.4L362 591.0L364 591.4L366 591.9L368 592.3L370 592.7L373 593.3L376 593.9L379 594.4L382 594.9L385 595.3L388 595.7L392 596.2L396 596.7L400 597.1L405 597.6L410 598.0L416 598.5L422 598.9L429 599.3L437 599.7L447 600.2L461 599.4L462 599.0L463 598.4L464 597.6L465 596.6L466 595.5L467 594.1L468 592.4L469 590.6L470 588.6L471 586.5L472 584.3L473 582.1L474 580.0L475 578.0L476 576.1L477 574.5L478 573.2L479 572.2L480 571.4L481 570.9L484 571.0L485 571.5L486 572.0L487 572.7L488 573.3L489 574.1L490 574.8L491 575.5L492 576.1L493 576.7L494 577.2L496 577.8L501 577.3L502 576.9L503 576.4L504 576.0L505 575.5L507 574.9L512 575.4L513 575.9L514 576.4L515 577.0L516 577.7L517 578.3L518 579.0L519 579.7L520 580.4L521 581.0L522 581.6L523 582.2L524 582.8L525 583.4L526 583.9L527 584.4L528 584.9L529 585.3L530 585.7L531 586.1L533 586.9L535 587.6L537 588.2L539 588.8L541 589.4L543 589.9L545 590.3L547 590.8L549 591.2L552 591.8L555 592.3L558 592.8L561 593.2L564 593.6L568 594.2L572 594.6L576 595.1L580 595.5L585 595.9L590 596.4L596 596.8L602 597.3L609 597.7L616 598.1L624 598.5L633 598.9L644 599.4L657 599.8L672 600.2L691 600.6L717 601.0L757 601.4L843 601.8" stroke="#00ff91"/><path d="M75 602.0L194 601.8L195 601.3L196 599.5L197 595.0L198 586.1L199 572.1L200 554.6L201 537.3L202 523.7L203 514.9L204 509.7L205 507.3L206 507.5L207 510.3L208 515.2L209 521.0L210 526.9L211 532.3L212 537.2L213 541.6L214 545.5L215 549.0L216 552.1L217 554.9L218 557.4L219 559.7L220 561.8L221 563.7L222 565.5L223 567.1L224 568.6L225 569.9L226 571.2L227 572.4L228 573.5L229 574.6L230 575.5L231 576.5L232 577.3L233 578.2L234 578.9L235 579.7L236 580.4L237 581.1L238 581.7L239 582.3L240 582.9L241 583.5L242 584.0L243 584.6L244 585.1L245 585.6L246 586.0L247 586.5L248 586.9L249 587.3L250 587.7L252 588.5L254 589.2L256 589.9L258 590.6L260 591.2L262 591.7L264 592.3L266 592.8L268 593.3L270 593.7L272 594.1L274 594.5L277 595.1L280 595.6L284 595.7L285 595.3L286 594.5L287 593.0L288 590.6L289 587.1L290 582.4L291 576.5L292 569.8L293 562.6L294 555.7L295 549.5L296 544.6L297 541.3L298 539.6L299 539.4L300 540.4L301 542.2L302 544.6L303 547.1L304 549.7L305 552.3L306 554.7L307 557.0L308 559.1L309 561.1L310 562.9L311 564.6L312 566.2L313 567.7L314 569.1L315 570.3L316 571.5L317 572.7L318 573.7L319 574.7L320 575.6L321 576.5L322 577.3L323 578.1L324 578.9L325 579.6L326 580.2L327 580.8L328 581.4L329 582.0L330 582.6L331 583.1L332 583.6L333 584.0L334 584.5L335 584.9L336 585.4L337 585.8L339 586.5L341 587.2L343 587.9L345 588.5L347 589.1L349 589.6L351 590.2L353 590.7L355 591.1L357 591.6L359 592.0L361 592.4L364 593.0L367 593.5L370 594.0L373 594.5L376 594.9L379 595.3L383 595.8L387 596.3L391 596.7L396 597.2L401 597.7L406 598.1L412 598.5L419 599.0L427 599.4L436 599.8L447 600.2L461 599.6L462 599.2L463 598.6L464 597.9L465 597.0L466 595.9L467 594.6L468 593.1L469 591.4L470 589.5L471 587.5L472 585.4L473 583.3L474 581.2L475 579.3L476 577.5L477 575.9L478 574.5L479 573.4L480 572.6L481 572.0L483 571.4L488 572.0L490 572.4L492 572.9L495 573.4L498 573.9L505 574.3L508 574.8L510 575.5L511 576.0L512 576.5L513 577.1L514 577.7L515 578.3L516 579.0L517 579.6L518 580.3L519 580.9L520 581.5L521 582.1L522 582.7L523 583.2L524 583.7L525 584.2L526 584.7L527 585.2L528 585.6L529 586.0L531 586.8L533 587.5L535 588.1L537 588.7L539 589.2L541 589.8L543 590.2L545 590.7L547 591.1L550 591.7L553 592.2L556 592.7L559 593.2L562 593.6L566 594.1L570 594.6L574 595.0L578 595.5L583 595.9L588 596.4L594 596.8L600 597.3L607 597.7L614 598.1L622 598.5L631 599.0L642 599.4L655 599.8L670 600.2L689 600.6L715 601.0L756 601.4L843 601.8" stroke="#00ff8f"/><path d="M75 602.0L195 601.8L196 601.2L197 599.1L198 593.8L199 583.3L200 566.6L201 545.8L202 526.0L203 512.1L204 506.1L205 506.7L206 511.2L207 517.0L208 522.8L209 528.3L210 533.3L211 537.7L212 541.8L213 545.5L214 548.8L215 551.8L216 554.5L217 557.0L218 559.3L219 561.4L220 563.3L221 565.1L222 566.7L223 568.2L224 569.6L225 570.9L226 572.1L227 573.2L228 574.3L229 575.2L230 576.2L231 577.0L232 577.9L233 578.6L234 579.4L235 580.1L236 580.7L237 581.4L238 582.0L239 582.5L240 583.1L241 583.6L242 584.1L243 584.6L244 585.1L245 585.5L246 586.0L247 586.4L248 586.8L250 587.6L252 588.3L254 589.0L256 589.7L258 590.3L260 590.8L262 591.4L264 591.9L266 592.4L268 592.9L270 593.3L272 593.7L275 594.3L278 594.9L281 595.4L286 595.3L287 594.6L288 593.4L289 591.4L290 588.4L291 584.4L292 579.2L293 573.1L294 566.6L295 560.1L296 554.2L297 549.4L298 546.1L299 544.2L300 543.8L301 544.4L302 545.7L303 547.4L304 548.9L305 550.1L306 550.8L307 550.6L308 549.8L309 548.5L310 546.9L311 545.4L312 544.4L313 544.1L314 544.5L315 545.7L316 547.5L317 549.7L318 552.1L319 554.5L320 556.9L321 559.1L322 561.2L323 563.1L324 564.8L325 566.4L326 567.9L327 569.2L328 570.5L329 571.7L330 572.7L331 573.7L332 574.7L333 575.6L334 576.4L335 577.2L336 578.0L337 578.7L338 579.3L339 580.0L340 580.6L341 581.2L342 581.7L343 582.3L344 582.8L345 583.3L346 583.8L347 584.2L348 584.7L349 585.1L350 585.5L351 585.9L353 586.7L355 587.4L357 588.1L359 588.7L361 589.3L363 589.9L365 590.5L367 591.0L369 591.5L371 591.9L373 592.4L375 592.8L377 593.2L380 593.8L383 594.3L386 594.8L389 595.3L392 595.7L395 596.1L399 596.6L403 597.1L407 597.5L412 597.9L417 598.4L423 598.8L430 599.2L438 599.7L447 600.1L460 599.6L461 599.2L462 598.8L463 598.2L464 597.4L465 596.5L466 595.5L467 594.2L468 592.8L469 591.3L470 589.7L471 588.0L472 586.2L473 584.4L474 582.7L475 581.0L476 579.4L477 577.8L478 576.4L479 575.1L480 573.9L481 572.9L482 572.0L483 571.3L484 570.7L485 570.3L490 570.7L491 571.2L492 571.8L493 572.6L494 573.3L495 574.2L496 575.0L497 575.9L498 576.8L499 577.6L500 578.4L501 579.2L502 580.0L503 580.7L504 581.4L505 582.0L506 582.7L507 583.2L508 583.8L509 584.3L510 584.8L511 585.3L512 585.8L513 586.2L514 586.6L516 587.4L518 588.1L520 588.8L522 589.4L524 590.0L526 590.5L528 591.0L530 591.4L532 591.8L535 592.4L538 592.9L541 593.4L544 593.9L547 594.3L551 594.8L555 595.3L559 595.7L564 596.2L569 596.6L575 597.1L581 597.5L588 597.9L596 598.4L605 598.8L615 599.3L627 599.7L641 600.1L659 600.5L682 600.9L717 601.3L785 601.7L843 601.9" stroke="#00ff8c"/><path d="M75 602.0L122 601.6L136 602.0L193 601.7L194 600.7L195 598.2L196 592.5L197 582.6L198 568.8L199 553.5L200 539.5L201 528.7L202 521.1L203 515.8L204 511.7L205 508.6L206 506.7L207 507.1L208 510.2L209 515.4L210 521.4L211 527.5L212 533.1L213 538.1L214 542.5L215 546.4L216 549.8L217 552.9L218 555.7L219 558.2L220 560.4L221 562.5L222 564.3L223 566.0L224 567.6L225 569.1L226 570.4L227 571.7L228 572.9L229 574.0L230 575.0L231 576.0L232 576.9L233 577.8L234 578.6L235 579.4L236 580.1L237 580.9L238 581.6L239 582.2L240 582.8L241 583.4L242 584.0L243 584.6L244 585.1L245 585.6L246 586.1L247 586.6L248 587.1L249 587.5L250 588.0L251 588.4L252 588.8L254 589.6L256 590.3L258 590.9L260 591.6L262 592.2L264 592.7L266 593.3L268 593.7L270 594.2L272 594.6L274 595.1L277 595.6L280 596.1L285 596.2L286 595.6L287 594.6L288 593.0L289 590.5L290 587.2L291 583.0L292 578.1L293 572.8L294 567.4L295 562.3L296 557.7L297 553.9L298 550.8L299 548.5L300 546.8L301 545.7L303 545.7L304 546.6L305 548.1L306 550.1L307 552.4L308 554.8L309 557.2L310 559.6L311 561.8L312 563.8L313 565.7L314 567.5L315 569.1L316 570.6L317 571.9L318 573.2L319 574.3L320 575.4L321 576.4L322 577.3L323 578.2L324 579.0L325 579.8L326 580.5L327 581.2L328 581.9L329 582.5L330 583.1L331 583.6L332 584.1L333 584.7L334 585.1L335 585.6L336 586.0L337 586.5L338 586.9L340 587.6L342 588.4L344 589.0L346 589.6L348 590.2L350 590.8L352 591.3L354 591.8L356 592.3L358 592.7L360 593.1L363 593.7L366 594.2L369 594.7L372 595.2L375 595.6L378 596.1L382 596.6L386 597.0L390 597.4L395 597.9L400 598.3L406 598.8L413 599.2L421 599.6L430 600.1L441 600.5L459 599.9L460 599.5L461 598.9L462 598.2L463 597.2L464 596.1L465 594.8L466 593.2L467 591.4L468 589.4L469 587.3L470 585.1L471 582.8L472 580.6L473 578.5L474 576.6L475 574.9L476 573.5L477 572.4L478 571.6L479 571.0L482 571.0L483 571.4L484 572.0L485 572.6L486 573.4L487 574.1L488 574.9L489 575.7L490 576.4L491 577.1L492 577.8L493 578.3L494 578.8L496 579.5L501 578.9L502 578.4L503 577.8L504 577.1L505 576.5L506 575.9L507 575.4L508 575.0L510 574.5L513 575.0L514 575.4L515 576.0L516 576.6L517 577.2L518 577.9L519 578.6L520 579.3L521 580.0L522 580.7L523 581.3L524 582.0L525 582.5L526 583.1L527 583.7L528 584.2L529 584.7L530 585.1L531 585.6L532 586.0L533 586.4L535 587.1L537 587.8L539 588.4L541 589.0L543 589.6L545 590.1L547 590.5L549 591.0L551 591.4L554 591.9L557 592.4L560 592.9L563 593.4L566 593.8L570 594.3L574 594.8L578 595.2L582 595.6L587 596.1L592 596.5L598 597.0L604 597.4L611 597.8L619 598.3L627 598.7L637 599.1L648 599.5L661 599.9L677 600.3L698 600.8L727 601.2L776 601.6L843 601.8" stroke="#00ff89"/><path d="M75 602.0L195 601.5L196 600.1L197 596.4L198 588.1L199 573.8L200 554.4L201 533.7L202 516.2L203 504.4L204 497.7L205 494.4L206 494.0L207 496.5L208 501.5L209 507.9L210 514.7L211 521.0L212 526.8L213 532.0L214 536.5L215 540.6L216 544.3L217 547.6L218 550.6L219 553.3L220 555.7L221 557.9L222 560.0L223 561.9L224 563.6L225 565.2L226 566.7L227 568.0L228 569.3L229 570.5L230 571.7L231 572.7L232 573.8L233 574.7L234 575.6L235 576.5L236 577.3L237 578.1L238 578.8L239 579.5L240 580.2L241 580.8L242 581.5L243 582.1L244 582.7L245 583.2L246 583.8L247 584.3L248 584.8L249 585.3L250 585.7L251 586.2L252 586.6L253 587.0L254 587.5L256 588.2L258 589.0L260 589.7L262 590.3L264 590.9L266 591.5L268 592.1L270 592.6L272 593.1L274 593.6L276 594.0L278 594.4L281 595.0L285 594.8L286 594.1L287 592.9L288 590.8L289 587.6L290 583.1L291 577.4L292 570.7L293 563.3L294 556.0L295 549.3L296 543.8L297 539.9L298 537.7L299 537.2L300 538.0L301 539.7L302 542.0L303 544.7L304 547.4L305 550.1L306 552.6L307 555.0L308 557.3L309 559.4L310 561.3L311 563.1L312 564.8L313 566.3L314 567.8L315 569.1L316 570.4L317 571.6L318 572.7L319 573.7L320 574.7L321 575.6L322 576.5L323 577.3L324 578.1L325 578.8L326 579.5L327 580.1L328 580.8L329 581.4L330 581.9L331 582.5L332 583.0L333 583.5L334 583.9L335 584.4L336 584.8L337 585.3L338 585.7L340 586.4L342 587.1L344 587.8L346 588.4L348 589.0L350 589.6L352 590.1L354 590.6L356 591.1L358 591.5L360 592.0L362 592.4L365 593.0L368 593.5L371 594.0L374 594.5L377 594.9L380 595.3L384 595.8L388 596.3L392 596.8L396 597.2L401 597.6L406 598.0L412 598.5L419 598.9L427 599.4L436 599.8L447 600.2L458 599.8L459 599.5L460 599.0L461 598.5L462 597.7L463 596.8L464 595.8L465 594.5L466 593.1L467 591.5L468 589.8L469 588.0L470 586.2L471 584.4L472 582.7L473 581.1L474 579.7L475 578.5L476 577.6L477 576.8L478 576.4L490 575.8L491 575.4L492 574.9L493 574.3L494 573.7L495 573.1L496 572.6L497 572.0L498 571.6L500 570.9L505 571.1L506 571.5L507 572.0L508 572.6L509 573.3L510 574.0L511 574.8L512 575.6L513 576.4L514 577.2L515 578.0L516 578.8L517 579.5L518 580.2L519 580.9L520 581.5L521 582.1L522 582.7L523 583.3L524 583.8L525 584.3L526 584.8L527 585.2L528 585.7L529 586.1L531 586.8L533 587.5L535 588.2L537 588.8L539 589.4L541 589.9L543 590.4L545 590.8L547 591.2L550 591.8L553 592.4L556 592.9L559 593.3L562 593.8L565 594.2L569 594.7L573 595.1L577 595.6L582 596.0L587 596.5L592 596.9L598 597.4L604 597.8L611 598.2L619 598.6L628 599.0L638 599.4L650 599.9L665 600.3L684 600.7L710 601.1L752 601.5L843 601.9" stroke="#00ff86"/><path d="M75 602.0L191 601.5L192 600.2L193 596.4L194 588.0L195 573.2L196 552.8L197 531.2L198 514.0L199 504.8L200 503.3L201 506.8L202 512.2L203 517.4L204 521.2L205 523.3L206 524.3L207 525.3L208 527.3L209 530.5L210 534.6L211 538.8L212 542.7L213 546.4L214 549.6L215 552.6L216 555.2L217 557.6L218 559.8L219 561.7L220 563.6L221 565.2L222 566.7L223 568.2L224 569.5L225 570.7L226 571.9L227 572.9L228 573.9L229 574.9L230 575.8L231 576.6L232 577.5L233 578.2L234 579.0L235 579.7L236 580.3L237 581.0L238 581.6L239 582.2L240 582.7L241 583.3L242 583.8L243 584.3L244 584.8L245 585.3L246 585.8L247 586.2L248 586.6L249 587.0L250 587.5L252 588.2L254 588.9L256 589.6L258 590.3L260 590.9L262 591.5L264 592.0L266 592.5L268 593.0L270 593.5L272 593.9L274 594.3L277 594.9L280 595.4L283 595.9L286 595.6L287 595.0L288 593.9L289 592.0L290 589.1L291 585.1L292 580.0L293 573.8L294 567.0L295 560.2L296 554.0L297 548.8L298 545.1L299 543.0L300 542.4L301 542.8L302 544.0L303 545.5L304 546.9L305 547.9L306 548.4L307 548.4L308 547.9L309 547.2L310 546.6L312 546.6L313 547.4L314 548.9L315 550.7L316 552.9L317 555.1L318 557.4L319 559.5L320 561.6L321 563.4L322 565.2L323 566.8L324 568.2L325 569.6L326 570.9L327 572.0L328 573.1L329 574.1L330 575.1L331 575.9L332 576.8L333 577.6L334 578.3L335 579.0L336 579.7L337 580.3L338 580.9L339 581.5L340 582.1L341 582.6L342 583.1L343 583.6L344 584.1L345 584.5L346 585.0L347 585.4L348 585.8L350 586.6L352 587.3L354 588.0L356 588.6L358 589.2L360 589.8L362 590.4L364 590.9L366 591.4L368 591.9L370 592.3L372 592.7L374 593.1L377 593.7L380 594.2L383 594.7L386 595.2L389 595.6L392 596.0L396 596.5L400 597.0L404 597.4L409 597.9L414 598.3L420 598.8L427 599.2L435 599.6L444 600.0L458 599.5L459 599.1L460 598.5L461 597.8L462 596.9L463 595.7L464 594.4L465 592.8L466 591.0L467 589.0L468 586.9L469 584.7L470 582.5L471 580.3L472 578.2L473 576.4L474 574.7L475 573.3L476 572.2L477 571.4L478 570.8L484 571.3L486 572.1L488 572.8L490 573.5L492 574.2L493 574.7L494 575.1L495 575.6L496 576.2L497 576.7L498 577.4L499 578.0L500 578.6L501 579.3L502 579.9L503 580.6L504 581.2L505 581.8L506 582.4L507 582.9L508 583.5L509 584.0L510 584.5L511 584.9L512 585.4L513 585.8L514 586.2L516 587.0L518 587.7L520 588.3L522 588.9L524 589.5L526 590.0L528 590.5L530 590.9L532 591.3L535 591.9L538 592.4L541 592.9L544 593.4L547 593.8L551 594.3L555 594.8L559 595.2L564 595.7L569 596.1L574 596.5L580 597.0L586 597.4L593 597.8L601 598.3L610 598.7L620 599.1L632 599.5L646 599.9L663 600.4L685 600.8L716 601.2L768 601.6L843 601.8" stroke="#00ff83"/><path d="M75 602.0L194 601.8L195 601.2L196 599.1L197 593.7L198 582.6L199 564.8L200 542.5L201 521.1L202 506.2L203 500.0L204 500.9L205 505.8L206 512.1L207 518.4L208 524.3L209 529.6L210 534.4L211 538.7L212 542.6L213 546.1L214 549.3L215 552.2L216 554.9L217 557.3L218 559.5L219 561.5L220 563.4L221 565.1L222 566.7L223 568.1L224 569.5L225 570.7L226 571.9L227 573.0L228 574.0L229 575.0L230 575.9L231 576.8L232 577.6L233 578.4L234 579.1L235 579.8L236 580.5L237 581.1L238 581.7L239 582.3L240 582.9L241 583.4L242 583.9L243 584.4L244 584.9L245 585.3L246 585.8L247 586.2L248 586.6L249 587.0L251 587.8L253 588.5L255 589.2L257 589.9L259 590.5L261 591.0L263 591.6L265 592.1L267 592.6L269 593.1L271 593.5L273 593.9L276 594.5L279 595.0L282 595.5L285 595.0L286 594.1L287 592.7L288 590.3L289 586.8L290 582.0L291 576.1L292 569.3L293 562.1L294 555.1L295 549.0L296 544.2L297 541.0L298 539.6L299 539.6L300 540.8L301 542.7L302 545.1L303 547.8L304 550.4L305 553.0L306 555.4L307 557.7L308 559.8L309 561.7L310 563.5L311 565.2L312 566.8L313 568.3L314 569.6L315 570.9L316 572.1L317 573.2L318 574.2L319 575.2L320 576.1L321 577.0L322 577.8L323 578.5L324 579.3L325 579.9L326 580.6L327 581.2L328 581.8L329 582.4L330 582.9L331 583.4L332 583.9L333 584.4L334 584.8L335 585.3L336 585.7L338 586.4L340 587.2L342 587.9L344 588.5L346 589.1L348 589.6L350 590.2L352 590.7L354 591.2L356 591.6L358 592.0L360 592.5L363 593.0L366 593.6L369 594.1L372 594.6L375 595.0L378 595.4L382 595.9L386 596.4L390 596.8L394 597.2L399 597.7L404 598.1L410 598.6L417 599.0L425 599.5L434 599.9L445 600.3L456 599.9L457 599.5L458 599.1L459 598.5L460 597.7L461 596.7L462 595.5L463 594.0L464 592.3L465 590.4L466 588.3L467 586.0L468 583.7L469 581.3L470 579.0L471 576.8L472 574.9L473 573.2L474 571.8L475 570.7L476 569.9L477 569.4L480 569.7L481 570.1L482 570.8L483 571.5L484 572.3L485 573.1L486 574.0L487 574.8L488 575.6L489 576.5L490 577.3L491 578.0L492 578.7L493 579.4L494 580.1L495 580.8L496 581.4L497 582.0L498 582.5L499 583.1L500 583.6L501 584.1L502 584.5L503 585.0L504 585.4L505 585.8L507 586.6L509 587.4L511 588.0L513 588.6L515 589.2L517 589.8L519 590.2L521 590.7L523 591.1L525 591.6L528 592.1L531 592.6L534 593.1L537 593.6L540 594.0L544 594.4L548 594.9L552 595.3L557 595.8L562 596.2L568 596.7L574 597.1L581 597.5L589 598.0L598 598.4L608 598.9L619 599.3L632 599.7L647 600.1L666 600.5L691 600.9L728 601.3L798 601.7L843 601.8" stroke="#00ff81"/><path d="M75 602.0L193 601.8L194 601.2L195 599.1L196 594.0L197 583.9L198 568.1L199 548.4L200 528.9L201 513.2L202 503.2L203 498.7L204 499.2L205 503.2L206 509.3L207 516.0L208 522.5L209 528.4L210 533.7L211 538.4L212 542.5L213 546.3L214 549.6L215 552.6L216 555.3L217 557.8L218 560.0L219 562.1L220 563.9L221 565.6L222 567.2L223 568.7L224 570.0L225 571.3L226 572.5L227 573.6L228 574.6L229 575.6L230 576.5L231 577.4L232 578.2L233 579.0L234 579.7L235 580.4L236 581.1L237 581.8L238 582.4L239 583.0L240 583.5L241 584.1L242 584.6L243 585.1L244 585.6L245 586.1L246 586.5L247 587.0L248 587.4L249 587.8L251 588.6L253 589.3L255 590.0L257 590.7L259 591.3L261 591.9L263 592.4L265 592.9L267 593.4L269 593.9L271 594.3L273 594.7L276 595.3L279 595.8L284 595.6L285 594.7L286 593.3L287 590.9L288 587.4L289 582.7L290 576.8L291 569.9L292 562.7L293 555.6L294 549.4L295 544.6L296 541.4L297 539.9L298 539.9L299 541.1L300 543.0L301 545.5L302 548.1L303 550.7L304 553.3L305 555.8L306 558.0L307 560.1L308 562.1L309 563.9L310 565.6L311 567.2L312 568.6L313 570.0L314 571.2L315 572.4L316 573.5L317 574.6L318 575.5L319 576.4L320 577.3L321 578.1L322 578.9L323 579.6L324 580.3L325 580.9L326 581.5L327 582.1L328 582.7L329 583.2L330 583.7L331 584.2L332 584.7L333 585.1L334 585.5L335 585.9L337 586.7L339 587.4L341 588.1L343 588.7L345 589.3L347 589.9L349 590.4L351 590.9L353 591.4L355 591.8L357 592.2L359 592.6L362 593.2L365 593.7L368 594.2L371 594.7L374 595.1L377 595.5L381 596.0L385 596.5L389 596.9L394 597.4L399 597.9L405 598.3L411 598.8L418 599.2L426 599.6L436 600.0L449 599.5L450 599.1L451 598.6L452 598.0L453 597.1L454 596.1L455 594.9L456 593.5L457 591.8L458 590.1L459 588.2L460 586.3L461 584.3L462 582.4L463 580.6L464 579.0L465 577.5L466 576.3L467 575.3L468 574.5L469 573.8L470 573.4L472 572.8L475 572.2L477 571.8L480 571.3L485 572.0L486 572.5L487 573.1L488 573.7L489 574.4L490 575.2L491 576.0L492 576.8L493 577.6L494 578.4L495 579.1L496 579.8L497 580.5L498 581.2L499 581.8L500 582.5L501 583.0L502 583.6L503 584.1L504 584.6L505 585.1L506 585.5L507 586.0L508 586.4L510 587.1L512 587.8L514 588.5L516 589.1L518 589.6L520 590.1L522 590.6L524 591.1L526 591.5L529 592.1L532 592.6L535 593.1L538 593.5L541 594.0L545 594.5L549 594.9L553 595.4L557 595.8L562 596.2L567 596.7L573 597.1L579 597.5L586 598.0L594 598.4L603 598.8L613 599.3L625 599.7L639 600.1L657 600.5L680 600.9L715 601.3L782 601.7L843 601.9" stroke="#00ff7e"/><path d="M75 602.0L192 601.7L193 600.8L194 598.0L195 591.1L196 577.7L197 557.7L198 534.3L199 513.7L200 500.9L201 497.0L202 499.6L203 505.3L204 512.0L205 518.4L206 524.3L207 529.6L208 534.3L209 538.6L210 542.5L211 546.0L212 549.2L213 552.1L214 554.7L215 557.1L216 559.3L217 561.4L218 563.2L219 564.9L220 566.5L221 567.9L222 569.3L223 570.6L224 571.7L225 572.8L226 573.9L227 574.8L228 575.8L229 576.6L230 577.4L231 578.2L232 578.9L233 579.7L234 580.3L235 581.0L236 581.6L237 582.2L238 582.7L239 583.3L240 583.8L241 584.3L242 584.8L243 585.2L244 585.7L245 586.1L246 586.5L247 586.9L249 587.7L251 588.5L253 589.2L255 589.8L257 590.4L259 591.0L261 591.6L263 592.1L265 592.6L267 593.0L269 593.5L271 593.9L273 594.3L276 594.9L279 595.4L282 595.9L286 595.7L287 595.1L288 594.0L289 592.0L290 589.0L291 584.8L292 579.3L293 572.8L294 565.6L295 558.3L296 551.7L297 546.1L298 542.1L299 539.7L300 538.7L301 538.6L302 539.2L303 539.9L304 540.4L308 540.8L309 541.3L310 542.4L311 543.9L312 545.9L313 548.2L314 550.7L315 553.1L316 555.5L317 557.8L318 559.9L319 561.8L320 563.6L321 565.3L322 566.8L323 568.2L324 569.5L325 570.7L326 571.8L327 572.9L328 573.9L329 574.8L330 575.7L331 576.5L332 577.3L333 578.0L334 578.7L335 579.4L336 580.0L337 580.6L338 581.2L339 581.8L340 582.3L341 582.8L342 583.3L343 583.8L344 584.2L345 584.7L346 585.1L347 585.5L349 586.3L351 587.1L353 587.7L355 588.4L357 589.0L359 589.6L361 590.2L363 590.7L365 591.2L367 591.7L369 592.1L371 592.6L373 593.0L376 593.6L379 594.1L382 594.6L385 595.1L388 595.5L391 595.9L395 596.4L399 596.9L403 597.3L408 597.8L413 598.2L419 598.7L426 599.2L434 599.6L443 600.0L456 599.4L457 599.0L458 598.4L459 597.6L460 596.7L461 595.5L462 594.1L463 592.6L464 590.8L465 588.8L466 586.7L467 584.5L468 582.4L469 580.2L470 578.2L471 576.3L472 574.5L473 573.1L474 571.8L475 570.8L476 570.0L477 569.5L479 569.0L482 569.5L483 569.9L484 570.5L485 571.1L486 571.8L487 572.5L488 573.3L489 574.1L490 575.0L491 575.8L492 576.6L493 577.4L494 578.2L495 578.9L496 579.7L497 580.4L498 581.0L499 581.6L500 582.3L501 582.8L502 583.4L503 583.9L504 584.4L505 584.9L506 585.3L507 585.8L508 586.2L510 587.0L512 587.7L514 588.3L516 588.9L518 589.5L520 590.0L522 590.5L524 591.0L526 591.4L529 592.0L532 592.5L535 593.0L538 593.5L541 593.9L545 594.4L549 594.9L553 595.3L558 595.8L563 596.3L568 596.7L574 597.1L580 597.5L587 597.9L595 598.4L604 598.8L614 599.2L626 599.6L640 600.0L657 600.4L680 600.8L713 601.3L772 601.7L843 601.9" stroke="#00ff7b"/><path d="M75 602.0L124 601.5L129 601.9L192 601.6L193 600.5L194 597.4L195 590.5L196 578.3L197 561.7L198 543.4L199 527.2L200 515.4L201 508.2L202 504.5L203 503.6L204 505.2L205 508.9L206 514.1L207 520.2L208 526.2L209 531.8L210 536.9L211 541.4L212 545.3L213 548.9L214 552.1L215 554.9L216 557.5L217 559.8L218 561.9L219 563.8L220 565.6L221 567.2L222 568.7L223 570.1L224 571.3L225 572.5L226 573.7L227 574.7L228 575.7L229 576.6L230 577.5L231 578.4L232 579.2L233 579.9L234 580.6L235 581.3L236 582.0L237 582.6L238 583.2L239 583.8L240 584.4L241 584.9L242 585.4L243 585.9L244 586.4L245 586.8L246 587.3L247 587.7L248 588.1L249 588.5L251 589.3L253 590.0L255 590.7L257 591.3L259 591.9L261 592.5L263 593.0L265 593.5L267 594.0L269 594.4L271 594.8L274 595.4L277 596.0L280 596.4L285 596.3L286 595.6L287 594.4L288 592.4L289 589.4L290 585.4L291 580.3L292 574.4L293 568.0L294 561.7L295 555.8L296 550.9L297 547.1L298 544.5L299 543.1L300 542.7L301 543.2L302 544.4L303 546.1L304 548.3L305 550.6L306 553.1L307 555.6L308 558.0L309 560.2L310 562.4L311 564.3L312 566.1L313 567.8L314 569.3L315 570.7L316 572.0L317 573.3L318 574.4L319 575.4L320 576.4L321 577.3L322 578.2L323 579.0L324 579.8L325 580.5L326 581.2L327 581.8L328 582.4L329 583.0L330 583.5L331 584.0L332 584.5L333 585.0L334 585.5L335 585.9L336 586.3L337 586.7L339 587.5L341 588.2L343 588.9L345 589.5L347 590.1L349 590.6L351 591.2L353 591.6L355 592.1L357 592.5L359 593.0L362 593.6L365 594.1L368 594.6L371 595.1L374 595.5L377 595.9L381 596.4L385 596.9L389 597.3L394 597.8L399 598.2L405 598.7L412 599.1L420 599.6L429 600.0L440 600.4L453 599.7L454 599.3L455 598.8L456 598.0L457 597.1L458 596.0L459 594.7L460 593.3L461 591.6L462 589.8L463 587.9L464 585.9L465 583.9L466 582.0L467 580.2L468 578.6L469 577.2L470 575.9L471 574.9L472 574.0L473 573.4L474 572.8L475 572.4L477 571.9L480 571.3L487 571.9L488 572.4L489 572.9L490 573.4L491 574.1L492 574.8L493 575.5L494 576.3L495 577.0L496 577.8L497 578.5L498 579.3L499 580.0L500 580.7L501 581.3L502 582.0L503 582.6L504 583.2L505 583.7L506 584.2L507 584.7L508 585.2L509 585.7L510 586.1L511 586.5L513 587.3L515 588.0L517 588.6L519 589.2L521 589.8L523 590.3L525 590.7L527 591.2L529 591.6L532 592.2L535 592.7L538 593.2L541 593.6L544 594.1L548 594.6L552 595.0L556 595.5L561 596.0L566 596.4L571 596.8L577 597.3L583 597.7L590 598.1L598 598.5L607 598.9L617 599.3L629 599.8L644 600.2L662 600.6L687 601.0L725 601.4L809 601.8L843 601.9" stroke="#00ff78"/><path d="M75 602.0L194 601.8L195 601.2L196 599.2L197 593.9L198 583.0L199 565.3L200 543.2L201 522.1L202 507.8L203 502.0L204 503.2L205 507.7L206 512.5L207 515.6L208 516.6L210 516.3L211 518.0L212 521.6L213 526.3L214 531.3L215 536.0L216 540.3L217 544.2L218 547.6L219 550.7L220 553.4L221 555.9L222 558.2L223 560.3L224 562.1L225 563.9L226 565.5L227 567.0L228 568.3L229 569.6L230 570.8L231 571.9L232 573.0L233 574.0L234 574.9L235 575.8L236 576.7L237 577.5L238 578.3L239 579.0L240 579.7L241 580.4L242 581.0L243 581.6L244 582.2L245 582.8L246 583.4L247 583.9L248 584.4L249 584.9L250 585.4L251 585.9L252 586.3L253 586.8L254 587.2L255 587.6L257 588.4L259 589.1L261 589.8L263 590.5L265 591.1L267 591.7L269 592.2L271 592.8L273 593.3L275 593.7L277 594.2L280 594.7L283 594.6L284 594.0L285 592.9L286 590.9L287 588.0L288 583.9L289 578.6L290 572.5L291 565.7L292 559.1L293 553.2L294 548.4L295 545.2L296 543.6L297 543.4L298 544.4L299 546.2L300 548.5L301 551.0L302 553.5L303 555.9L304 558.2L305 560.4L306 562.4L307 564.3L308 566.0L309 567.6L310 569.1L311 570.5L312 571.8L313 572.9L314 574.1L315 575.1L316 576.1L317 577.0L318 577.9L319 578.7L320 579.5L321 580.2L322 580.9L323 581.5L324 582.1L325 582.7L326 583.3L327 583.8L328 584.3L329 584.8L330 585.2L331 585.7L332 586.1L333 586.5L335 587.3L337 588.0L339 588.6L341 589.2L343 589.8L345 590.4L347 590.9L349 591.4L351 591.8L353 592.3L355 592.7L358 593.3L361 593.8L364 594.3L367 594.8L370 595.2L373 595.6L377 596.1L381 596.6L385 597.0L390 597.5L395 598.0L401 598.4L407 598.9L414 599.3L422 599.7L432 600.1L444 600.5L463 600.1L464 599.7L465 599.2L466 598.5L467 597.7L468 596.6L469 595.4L470 594.0L471 592.5L472 590.7L473 588.9L474 587.0L475 585.1L476 583.3L477 581.5L478 579.9L479 578.5L480 577.2L481 576.2L482 575.3L483 574.6L484 574.0L485 573.5L486 573.1L488 572.4L490 571.8L492 571.2L494 570.8L502 571.4L503 571.9L504 572.5L505 573.1L506 573.8L507 574.5L508 575.3L509 576.1L510 576.9L511 577.7L512 578.4L513 579.2L514 579.9L515 580.6L516 581.3L517 581.9L518 582.5L519 583.1L520 583.6L521 584.2L522 584.6L523 585.1L524 585.6L525 586.0L526 586.4L528 587.2L530 587.9L532 588.5L534 589.1L536 589.7L538 590.2L540 590.6L542 591.1L544 591.5L547 592.1L550 592.6L553 593.1L556 593.6L559 594.0L563 594.5L567 595.0L571 595.4L575 595.8L580 596.3L585 596.7L591 597.2L597 597.6L604 598.1L612 598.5L621 598.9L631 599.4L643 599.8L657 600.2L675 600.6L699 601.0L736 601.4L819 601.8L843 601.9" stroke="#00ff75"/><path d="M75 602.0L195 601.6L196 600.6L197 597.6L198 591.4L199 580.8L200 566.9L201 552.3L202 539.6L203 529.4L204 520.5L205 512.6L206 507.1L207 505.5L208 508.3L209 513.8L210 520.4L211 526.9L212 532.9L213 538.1L214 542.7L215 546.8L216 550.4L217 553.6L218 556.5L219 559.0L220 561.3L221 563.4L222 565.3L223 567.1L224 568.7L225 570.1L226 571.5L227 572.8L228 573.9L229 575.0L230 576.1L231 577.0L232 577.9L233 578.8L234 579.6L235 580.4L236 581.1L237 581.8L238 582.5L239 583.1L240 583.7L241 584.3L242 584.9L243 585.4L244 586.0L245 586.5L246 586.9L247 587.4L248 587.9L249 588.3L250 588.7L251 589.1L253 589.9L255 590.6L257 591.3L259 591.9L261 592.5L263 593.0L265 593.6L267 594.0L269 594.5L271 594.9L273 595.3L276 595.9L279 596.4L282 596.8L285 596.5L286 595.9L287 594.7L288 592.7L289 589.7L290 585.5L291 580.1L292 573.6L293 566.6L294 559.6L295 553.4L296 548.3L297 544.9L298 543.1L299 542.8L300 543.8L301 545.6L302 547.9L303 550.5L304 553.1L305 555.6L306 557.9L307 560.2L308 562.2L309 564.1L310 565.9L311 567.5L312 569.1L313 570.5L314 571.8L315 573.0L316 574.1L317 575.2L318 576.2L319 577.1L320 578.0L321 578.8L322 579.6L323 580.3L324 581.0L325 581.6L326 582.3L327 582.8L328 583.4L329 583.9L330 584.4L331 584.9L332 585.4L333 585.8L334 586.2L335 586.6L337 587.4L339 588.1L341 588.8L343 589.4L345 589.9L347 590.5L349 591.0L351 591.5L353 591.9L355 592.4L357 592.8L360 593.3L363 593.9L366 594.4L369 594.8L372 595.3L375 595.7L379 596.2L383 596.7L387 597.1L392 597.6L397 598.0L403 598.5L409 598.9L416 599.3L424 599.7L434 600.1L447 600.5L455 600.0L456 599.6L457 599.2L458 598.6L459 597.8L460 596.9L461 595.8L462 594.5L463 593.1L464 591.5L465 589.7L466 587.9L467 586.0L468 584.1L469 582.2L470 580.4L471 578.8L472 577.3L473 576.0L474 574.8L475 573.8L476 573.0L477 572.4L478 571.9L480 571.3L491 571.8L493 572.2L495 572.9L496 573.4L497 573.9L498 574.5L499 575.2L500 575.9L501 576.6L502 577.4L503 578.2L504 578.9L505 579.6L506 580.3L507 581.0L508 581.7L509 582.3L510 582.9L511 583.5L512 584.0L513 584.5L514 585.0L515 585.5L516 585.9L517 586.3L518 586.7L520 587.5L522 588.2L524 588.8L526 589.4L528 589.9L530 590.4L532 590.9L534 591.4L536 591.8L539 592.3L542 592.9L545 593.4L548 593.8L551 594.2L555 594.7L559 595.2L563 595.6L567 596.0L572 596.5L577 596.9L583 597.4L589 597.8L596 598.2L604 598.7L613 599.1L623 599.5L635 599.9L650 600.3L669 600.7L696 601.1L740 601.5L843 601.9" stroke="#00ff72"/><path d="M75 602.0L195 601.7L196 600.8L197 597.9L198 591.0L199 578.0L200 558.9L201 537.5L202 519.4L203 508.7L204 505.2L205 505.5L206 506.3L208 506.7L209 508.6L210 512.5L211 517.8L212 523.6L213 529.2L214 534.2L215 538.8L216 542.8L217 546.4L218 549.6L219 552.5L220 555.2L221 557.5L222 559.7L223 561.7L224 563.5L225 565.1L226 566.7L227 568.1L228 569.4L229 570.7L230 571.8L231 572.9L232 573.9L233 574.9L234 575.8L235 576.7L236 577.5L237 578.3L238 579.1L239 579.8L240 580.5L241 581.1L242 581.8L243 582.4L244 583.0L245 583.5L246 584.1L247 584.6L248 585.1L249 585.6L250 586.0L251 586.5L252 586.9L253 587.4L254 587.8L255 588.2L257 588.9L259 589.7L261 590.3L263 591.0L265 591.6L267 592.1L269 592.7L271 593.2L273 593.6L275 594.1L277 594.5L280 595.1L285 594.9L286 594.1L287 592.6L288 590.4L289 587.3L290 583.2L291 578.3L292 573.0L293 567.5L294 562.4L295 557.9L296 554.2L297 551.4L298 549.2L299 547.5L300 546.1L301 544.8L302 543.8L303 543.0L304 542.5L305 542.5L306 543.1L307 544.2L308 545.9L309 547.9L310 550.3L311 552.7L312 555.2L313 557.7L314 560.0L315 562.1L316 564.1L317 565.9L318 567.5L319 569.1L320 570.5L321 571.7L322 572.9L323 574.1L324 575.1L325 576.1L326 577.0L327 577.8L328 578.6L329 579.4L330 580.1L331 580.8L332 581.4L333 582.0L334 582.6L335 583.2L336 583.7L337 584.2L338 584.7L339 585.2L340 585.6L341 586.1L342 586.5L343 586.9L345 587.7L347 588.4L349 589.1L351 589.7L353 590.3L355 590.9L357 591.4L359 591.9L361 592.4L363 592.8L365 593.3L367 593.7L370 594.2L373 594.8L376 595.3L379 595.7L382 596.2L386 596.7L390 597.2L394 597.6L399 598.1L404 598.5L410 599.0L417 599.4L425 599.8L435 600.3L447 600.7L461 600.2L462 599.9L463 599.4L464 598.7L465 597.8L466 596.8L467 595.5L468 593.9L469 592.1L470 590.1L471 587.9L472 585.6L473 583.2L474 580.9L475 578.6L476 576.5L477 574.7L478 573.1L479 571.8L480 570.9L481 570.3L484 570.2L485 570.7L486 571.2L487 571.9L488 572.7L489 573.6L490 574.4L491 575.3L492 576.1L493 576.9L494 577.7L495 578.5L496 579.3L497 580.0L498 580.6L499 581.3L500 581.9L501 582.5L502 583.1L503 583.6L504 584.1L505 584.6L506 585.1L507 585.5L508 586.0L509 586.4L511 587.1L513 587.9L515 588.5L517 589.1L519 589.7L521 590.2L523 590.7L525 591.2L527 591.6L530 592.2L533 592.7L536 593.2L539 593.6L542 594.1L546 594.6L550 595.0L554 595.4L559 595.9L564 596.3L570 596.8L576 597.2L583 597.7L591 598.1L600 598.6L610 599.0L621 599.4L634 599.8L650 600.2L670 600.6L697 601.0L738 601.4L832 601.8L843 601.9" stroke="#00ff6f"/><path d="M75 602.0L192 601.9L193 601.5L194 600.0L195 595.8L196 586.3L197 569.8L198 547.8L199 525.4L200 508.7L201 500.8L202 500.9L203 505.6L204 512.0L205 518.6L206 524.6L207 530.1L208 535.0L209 539.4L210 543.4L211 546.9L212 550.2L213 553.1L214 555.8L215 558.2L216 560.4L217 562.4L218 564.3L219 566.0L220 567.5L221 569.0L222 570.3L223 571.6L224 572.7L225 573.8L226 574.8L227 575.8L228 576.7L229 577.5L230 578.3L231 579.1L232 579.8L233 580.5L234 581.2L235 581.8L236 582.4L237 583.0L238 583.5L239 584.0L240 584.6L241 585.0L242 585.5L243 586.0L244 586.4L245 586.8L246 587.2L248 588.0L250 588.8L252 589.5L254 590.1L256 590.7L258 591.3L260 591.9L262 592.4L264 592.9L266 593.3L268 593.8L270 594.2L273 594.8L276 595.3L279 595.7L281 595.6L282 595.1L283 594.2L284 592.6L285 590.0L286 586.1L287 581.1L288 574.8L289 567.8L290 560.6L291 553.8L292 548.1L293 543.9L294 541.5L295 540.7L296 541.3L297 542.9L298 545.2L299 547.8L300 550.4L301 553.1L302 555.6L303 557.9L304 560.1L305 562.1L306 564.0L307 565.7L308 567.4L309 568.8L310 570.2L311 571.5L312 572.7L313 573.8L314 574.9L315 575.9L316 576.8L317 577.6L318 578.4L319 579.2L320 579.9L321 580.6L322 581.3L323 581.9L324 582.5L325 583.0L326 583.6L327 584.1L328 584.5L329 585.0L330 585.5L331 585.9L332 586.3L334 587.1L336 587.8L338 588.4L340 589.1L342 589.7L344 590.2L346 590.7L348 591.2L350 591.7L352 592.1L354 592.6L356 593.0L359 593.5L362 594.0L365 594.5L368 595.0L371 595.4L374 595.8L378 596.3L382 596.8L386 597.2L391 597.7L396 598.1L402 598.6L408 599.0L415 599.4L423 599.8L433 600.2L447 600.6L453 600.0L454 599.7L455 599.3L456 598.7L457 597.9L458 597.0L459 595.8L460 594.4L461 592.9L462 591.1L463 589.2L464 587.1L465 585.0L466 582.9L467 580.8L468 578.7L469 576.9L470 575.1L471 573.6L472 572.2L473 571.0L474 570.1L475 569.3L476 568.6L477 568.2L479 567.7L482 568.2L483 568.7L484 569.3L485 570.0L486 570.7L487 571.6L488 572.5L489 573.4L490 574.3L491 575.2L492 576.1L493 576.9L494 577.8L495 578.6L496 579.4L497 580.1L498 580.8L499 581.4L500 582.1L501 582.7L502 583.2L503 583.8L504 584.3L505 584.8L506 585.2L507 585.7L508 586.1L509 586.5L511 587.3L513 588.0L515 588.6L517 589.2L519 589.7L521 590.3L523 590.7L525 591.2L527 591.6L530 592.2L533 592.7L536 593.2L539 593.7L542 594.1L546 594.6L550 595.1L554 595.5L559 596.0L564 596.4L569 596.8L575 597.3L581 597.7L588 598.1L596 598.5L605 599.0L615 599.4L627 599.8L642 600.2L660 600.6L685 601.0L724 601.4L813 601.8L843 601.9" stroke="#00ff6c"/><path d="M75 602.0L193 601.8L194 601.2L195 599.2L196 594.2L197 584.3L198 569.4L199 552.1L200 537.1L201 527.7L202 524.1L203 523.2L204 521.0L205 515.7L206 508.1L207 501.4L208 498.7L209 500.8L210 506.2L211 513.1L212 520.1L213 526.4L214 532.0L215 537.0L216 541.3L217 545.2L218 548.6L219 551.7L220 554.4L221 556.9L222 559.2L223 561.2L224 563.1L225 564.8L226 566.4L227 567.9L228 569.2L229 570.5L230 571.7L231 572.9L232 573.9L233 574.9L234 575.9L235 576.8L236 577.6L237 578.5L238 579.2L239 580.0L240 580.7L241 581.4L242 582.1L243 582.7L244 583.3L245 583.9L246 584.5L247 585.0L248 585.5L249 586.0L250 586.5L251 587.0L252 587.5L253 587.9L254 588.3L255 588.7L257 589.5L259 590.3L261 590.9L263 591.6L265 592.2L267 592.8L269 593.3L271 593.8L273 594.3L275 594.7L277 595.1L280 595.7L284 595.4L285 594.6L286 593.2L287 590.9L288 587.5L289 582.9L290 577.3L291 570.9L292 564.3L293 557.9L294 552.5L295 548.3L296 545.3L297 543.4L298 542.3L299 541.5L300 540.7L301 539.7L302 538.6L303 537.4L304 536.4L305 535.7L306 535.5L307 536.0L308 537.0L309 538.7L310 540.8L311 543.2L312 545.8L313 548.5L314 551.2L315 553.8L316 556.2L317 558.5L318 560.6L319 562.5L320 564.2L321 565.9L322 567.3L323 568.7L324 570.0L325 571.2L326 572.3L327 573.3L328 574.3L329 575.2L330 576.1L331 576.9L332 577.7L333 578.4L334 579.1L335 579.8L336 580.4L337 581.0L338 581.6L339 582.2L340 582.7L341 583.2L342 583.7L343 584.2L344 584.7L345 585.1L346 585.6L347 586.0L348 586.4L350 587.2L352 587.9L354 588.6L356 589.2L358 589.9L360 590.4L362 591.0L364 591.5L366 592.0L368 592.5L370 592.9L372 593.3L374 593.8L377 594.3L380 594.8L383 595.3L386 595.8L389 596.2L393 596.7L397 597.2L401 597.6L406 598.1L411 598.5L417 599.0L424 599.4L432 599.9L442 600.3L457 599.8L458 599.4L459 598.8L460 598.0L461 597.1L462 595.9L463 594.4L464 592.7L465 590.8L466 588.7L467 586.4L468 584.1L469 581.7L470 579.4L471 577.2L472 575.2L473 573.4L474 572.0L475 570.9L476 570.0L477 569.5L479 569.1L483 569.5L495 570.0L496 570.5L497 571.0L498 571.6L499 572.2L500 573.0L501 573.8L502 574.6L503 575.4L504 576.2L505 577.0L506 577.8L507 578.5L508 579.3L509 580.0L510 580.6L511 581.2L512 581.9L513 582.4L514 583.0L515 583.5L516 584.0L517 584.5L518 584.9L519 585.3L520 585.7L522 586.5L524 587.2L526 587.9L528 588.5L530 589.0L532 589.6L534 590.1L536 590.5L538 590.9L540 591.3L543 591.9L546 592.4L549 592.9L552 593.4L555 593.8L559 594.3L563 594.8L567 595.2L571 595.6L576 596.1L581 596.5L587 597.0L593 597.4L600 597.9L607 598.3L615 598.7L624 599.1L635 599.5L648 599.9L664 600.4L684 600.8L712 601.2L759 601.6L843 601.9" stroke="#00ff69"/><path d="M75 602.0L192 601.9L193 601.4L194 599.6L195 594.7L196 584.0L197 566.0L198 542.9L199 520.4L200 504.7L201 498.3L202 499.6L203 505.0L204 511.7L205 518.3L206 524.4L207 529.9L208 534.8L209 539.3L210 543.2L211 546.8L212 550.0L213 553.0L214 555.6L215 558.1L216 560.3L217 562.3L218 564.1L219 565.8L220 567.4L221 568.9L222 570.2L223 571.4L224 572.6L225 573.7L226 574.7L227 575.7L228 576.6L229 577.4L230 578.2L231 579.0L232 579.7L233 580.4L234 581.1L235 581.7L236 582.3L237 582.9L238 583.5L239 584.0L240 584.5L241 585.0L242 585.5L243 585.9L244 586.4L245 586.8L246 587.2L247 587.6L249 588.4L251 589.1L253 589.8L255 590.4L257 591.0L259 591.6L261 592.1L263 592.6L265 593.1L267 593.6L269 594.0L271 594.4L274 595.0L277 595.4L279 595.3L280 594.9L281 594.0L282 592.5L283 590.1L284 586.7L285 582.2L286 576.7L287 570.3L288 563.7L289 557.1L290 551.0L291 545.7L292 541.4L293 538.3L294 536.5L295 535.7L296 536.1L297 537.3L298 539.4L299 541.9L300 544.7L301 547.7L302 550.6L303 553.4L304 556.1L305 558.5L306 560.7L307 562.8L308 564.7L309 566.4L310 568.0L311 569.4L312 570.8L313 572.0L314 573.2L315 574.3L316 575.3L317 576.2L318 577.1L319 578.0L320 578.7L321 579.5L322 580.2L323 580.9L324 581.5L325 582.1L326 582.7L327 583.2L328 583.8L329 584.3L330 584.8L331 585.2L332 585.7L333 586.1L334 586.5L335 586.9L337 587.7L339 588.4L341 589.1L343 589.7L345 590.3L347 590.8L349 591.4L351 591.9L353 592.4L355 592.8L357 593.2L359 593.6L362 594.2L365 594.7L368 595.2L371 595.7L374 596.1L378 596.6L382 597.1L386 597.5L391 598.0L396 598.5L402 598.9L409 599.4L417 599.8L426 600.2L438 600.6L454 600.0L455 599.5L456 598.9L457 598.1L458 597.1L459 595.9L460 594.4L461 592.6L462 590.7L463 588.5L464 586.2L465 583.9L466 581.5L467 579.2L468 577.1L469 575.1L470 573.5L471 572.2L472 571.2L473 570.5L475 570.0L477 570.4L478 570.8L479 571.3L480 571.8L481 572.2L483 572.9L495 573.6L496 574.0L497 574.5L498 575.1L499 575.7L500 576.4L501 577.1L502 577.8L503 578.6L504 579.3L505 580.0L506 580.7L507 581.3L508 581.9L509 582.5L510 583.1L511 583.6L512 584.1L513 584.6L514 585.1L515 585.5L516 585.9L517 586.4L519 587.1L521 587.8L523 588.4L525 589.0L527 589.6L529 590.1L531 590.5L533 591.0L535 591.4L538 592.0L541 592.5L544 593.0L547 593.4L550 593.9L554 594.4L558 594.8L562 595.3L566 595.7L571 596.2L576 596.6L582 597.0L588 597.5L595 597.9L603 598.4L612 598.8L622 599.2L633 599.6L647 600.1L664 600.5L686 600.9L718 601.3L778 601.7L843 601.9" stroke="#00ff66"/><path d="M75 602.0L194 601.8L195 601.2L196 599.1L197 593.7L198 583.2L199 567.1L200 548.5L201 532.3L202 522.6L203 519.7L204 520.8L205 522.1L206 520.8L207 516.2L208 509.8L209 504.5L210 502.6L211 504.6L212 509.6L213 516.0L214 522.4L215 528.4L216 533.8L217 538.5L218 542.6L219 546.3L220 549.6L221 552.5L222 555.2L223 557.6L224 559.7L225 561.7L226 563.5L227 565.2L228 566.7L229 568.2L230 569.5L231 570.8L232 571.9L233 573.0L234 574.1L235 575.1L236 576.0L237 576.9L238 577.7L239 578.5L240 579.3L241 580.1L242 580.8L243 581.4L244 582.1L245 582.7L246 583.3L247 583.9L248 584.5L249 585.0L250 585.5L251 586.1L252 586.5L253 587.0L254 587.5L255 587.9L256 588.3L257 588.7L259 589.5L261 590.3L263 590.9L265 591.6L267 592.2L269 592.8L271 593.3L273 593.8L275 594.3L277 594.7L279 595.1L282 595.6L284 595.5L285 595.0L286 594.0L287 592.2L288 589.4L289 585.2L290 579.7L291 572.9L292 565.3L293 557.6L294 550.4L295 544.5L296 540.3L297 537.9L298 537.3L299 538.2L300 540.1L301 542.6L302 545.4L303 548.3L304 551.1L305 553.8L306 556.2L307 558.5L308 560.7L309 562.6L310 564.4L311 566.1L312 567.7L313 569.1L314 570.5L315 571.7L316 572.9L317 574.0L318 575.0L319 576.0L320 576.9L321 577.7L322 578.5L323 579.3L324 580.0L325 580.7L326 581.3L327 581.9L328 582.5L329 583.0L330 583.6L331 584.1L332 584.5L333 585.0L334 585.4L335 585.9L336 586.3L338 587.1L340 587.8L342 588.4L344 589.1L346 589.7L348 590.2L350 590.7L352 591.2L354 591.7L356 592.2L358 592.6L360 593.0L363 593.6L366 594.1L369 594.6L372 595.0L375 595.5L378 595.9L382 596.4L386 596.8L390 597.3L395 597.7L400 598.2L406 598.6L412 599.0L419 599.4L428 599.9L438 600.3L450 599.7L451 599.2L452 598.6L453 597.9L454 596.9L455 595.6L456 594.1L457 592.4L458 590.4L459 588.2L460 585.8L461 583.3L462 580.8L463 578.4L464 576.1L465 574.1L466 572.3L467 570.9L468 569.8L469 569.0L471 568.6L472 568.7L473 569.2L474 569.7L475 570.5L476 571.3L477 572.1L478 573.0L479 574.0L480 574.9L481 575.7L482 576.6L483 577.4L484 578.2L485 578.9L486 579.7L487 580.4L488 581.0L489 581.6L490 582.2L491 582.8L492 583.4L493 583.9L494 584.4L495 584.8L496 585.3L497 585.7L498 586.2L499 586.6L501 587.3L503 588.0L505 588.6L507 589.2L509 589.8L511 590.3L513 590.8L515 591.2L517 591.6L520 592.2L523 592.7L526 593.2L529 593.7L532 594.1L536 594.6L540 595.0L544 595.5L549 595.9L554 596.4L560 596.8L566 597.3L573 597.7L581 598.1L590 598.6L600 599.0L611 599.4L624 599.8L640 600.3L660 600.7L687 601.1L730 601.5L838 601.9L843 601.9" stroke="#00ff62"/><path d="M75 602.0L195 601.9L196 601.4L197 599.9L198 595.7L199 587.2L200 573.5L201 556.6L202 540.5L203 528.6L204 520.8L205 514.9L206 509.3L207 504.6L208 502.5L209 504.1L210 508.9L211 515.2L212 521.9L213 528.1L214 533.7L215 538.6L216 543.0L217 546.8L218 550.3L219 553.3L220 556.1L221 558.5L222 560.8L223 562.8L224 564.7L225 566.4L226 567.9L227 569.4L228 570.7L229 572.0L230 573.2L231 574.2L232 575.3L233 576.3L234 577.2L235 578.0L236 578.9L237 579.7L238 580.4L239 581.1L240 581.8L241 582.5L242 583.1L243 583.7L244 584.3L245 584.8L246 585.4L247 585.9L248 586.4L249 586.9L250 587.3L251 587.8L252 588.2L253 588.6L254 589.0L256 589.8L258 590.5L260 591.2L262 591.8L264 592.4L266 593.0L268 593.5L270 594.0L272 594.5L274 594.9L276 595.3L279 595.8L282 595.8L283 595.4L284 594.5L285 592.9L286 590.3L287 586.5L288 581.4L289 575.2L290 568.3L291 561.0L292 554.0L293 547.9L294 543.0L295 539.5L296 537.5L297 536.7L298 537.1L299 538.4L300 540.3L301 542.7L302 545.3L303 548.1L304 550.9L305 553.6L306 556.2L307 558.6L308 560.8L309 562.8L310 564.7L311 566.4L312 568.0L313 569.4L314 570.8L315 572.0L316 573.2L317 574.3L318 575.3L319 576.2L320 577.1L321 578.0L322 578.8L323 579.5L324 580.2L325 580.9L326 581.5L327 582.1L328 582.7L329 583.3L330 583.8L331 584.3L332 584.8L333 585.2L334 585.7L335 586.1L336 586.5L338 587.3L340 588.0L342 588.7L344 589.3L346 589.9L348 590.5L350 591.0L352 591.5L354 592.0L356 592.5L358 592.9L360 593.3L363 593.9L366 594.4L369 594.9L372 595.4L375 595.8L378 596.2L382 596.7L386 597.2L390 597.6L395 598.0L400 598.5L406 598.9L413 599.3L421 599.8L431 600.2L443 600.6L453 600.1L454 599.8L455 599.3L456 598.6L457 597.8L458 596.7L459 595.3L460 593.7L461 591.9L462 589.8L463 587.6L464 585.2L465 582.7L466 580.3L467 578.0L468 575.8L469 573.9L470 572.3L471 571.0L472 570.1L473 569.6L476 569.7L477 570.1L478 570.8L479 571.5L480 572.3L481 573.2L482 574.0L483 574.9L484 575.7L485 576.4L486 577.1L487 577.6L488 578.1L489 578.6L491 579.1L500 579.5L502 580.0L504 580.6L505 581.1L506 581.5L507 582.0L508 582.6L509 583.1L510 583.6L511 584.1L512 584.6L513 585.1L514 585.6L515 586.0L516 586.4L517 586.8L519 587.6L521 588.3L523 589.0L525 589.5L527 590.1L529 590.6L531 591.0L533 591.5L535 591.9L538 592.4L541 592.9L544 593.4L547 593.8L550 594.3L554 594.7L558 595.2L562 595.6L567 596.1L572 596.5L578 597.0L584 597.4L591 597.9L598 598.3L606 598.7L615 599.1L626 599.5L639 599.9L655 600.3L675 600.7L703 601.2L750 601.6L843 601.9" stroke="#00ff5f"/><path d="M75 602.0L192 601.9L193 601.5L194 600.0L195 595.6L196 585.6L197 568.4L198 545.5L199 522.6L200 506.1L201 499.0L202 499.9L203 505.2L204 511.9L205 518.7L206 524.8L207 530.4L208 535.3L209 539.8L210 543.8L211 547.3L212 550.6L213 553.5L214 556.2L215 558.6L216 560.8L217 562.8L218 564.6L219 566.3L220 567.9L221 569.3L222 570.7L223 571.9L224 573.1L225 574.1L226 575.2L227 576.1L228 577.0L229 577.8L230 578.6L231 579.4L232 580.1L233 580.8L234 581.5L235 582.1L236 582.7L237 583.3L238 583.8L239 584.3L240 584.8L241 585.3L242 585.8L243 586.3L244 586.7L245 587.1L246 587.5L248 588.3L250 589.1L252 589.7L254 590.4L256 591.0L258 591.6L260 592.1L262 592.7L264 593.1L266 593.6L268 594.1L270 594.5L273 595.0L276 595.6L279 596.1L284 596.0L285 595.3L286 594.1L287 592.1L288 589.3L289 585.4L290 580.7L291 575.4L292 569.9L293 564.8L294 560.6L295 557.6L296 555.7L297 554.8L300 554.4L301 553.6L302 552.2L303 550.0L304 547.4L305 544.7L306 542.4L307 540.8L308 540.1L309 540.5L310 541.8L311 543.8L312 546.3L313 549.1L314 551.9L315 554.6L316 557.2L317 559.6L318 561.8L319 563.8L320 565.6L321 567.3L322 568.8L323 570.2L324 571.5L325 572.7L326 573.8L327 574.9L328 575.8L329 576.8L330 577.6L331 578.4L332 579.2L333 579.9L334 580.6L335 581.2L336 581.8L337 582.4L338 583.0L339 583.5L340 584.1L341 584.6L342 585.0L343 585.5L344 585.9L345 586.4L346 586.8L347 587.2L349 588.0L351 588.7L353 589.3L355 590.0L357 590.6L359 591.2L361 591.7L363 592.2L365 592.7L367 593.1L369 593.6L371 594.0L374 594.5L377 595.1L380 595.6L383 596.0L386 596.5L390 597.0L394 597.4L398 597.9L403 598.3L408 598.7L414 599.2L421 599.6L429 600.0L439 600.4L452 599.7L453 599.2L454 598.6L455 597.7L456 596.6L457 595.3L458 593.7L459 591.9L460 589.8L461 587.6L462 585.2L463 582.7L464 580.3L465 578.0L466 575.8L467 573.9L468 572.4L469 571.1L470 570.2L471 569.7L474 569.8L475 570.3L476 571.0L477 571.7L478 572.6L479 573.4L480 574.3L481 575.2L482 576.1L483 576.9L484 577.8L485 578.6L486 579.3L487 580.0L488 580.7L489 581.4L490 582.0L491 582.6L492 583.2L493 583.7L494 584.2L495 584.7L496 585.2L497 585.7L498 586.1L499 586.5L501 587.3L503 588.0L505 588.7L507 589.3L509 589.8L511 590.4L513 590.9L515 591.3L517 591.7L520 592.3L523 592.8L526 593.3L529 593.8L532 594.2L536 594.7L540 595.1L544 595.6L549 596.0L554 596.5L560 596.9L566 597.3L573 597.8L581 598.2L590 598.7L600 599.1L611 599.5L624 599.9L640 600.3L661 600.7L690 601.1L737 601.5L843 601.9" stroke="#00ff5c"/><path d="M75 602.0L191 601.8L192 601.3L193 599.3L194 593.8L195 582.4L196 563.8L197 540.9L198 519.9L199 506.5L200 502.2L201 504.7L202 510.5L203 517.1L204 523.5L205 529.3L206 534.5L207 539.1L208 543.3L209 547.0L210 550.4L211 553.4L212 556.2L213 558.6L214 560.9L215 563.0L216 564.9L217 566.6L218 568.2L219 569.6L220 571.0L221 572.3L222 573.4L223 574.5L224 575.5L225 576.5L226 577.4L227 578.2L228 579.0L229 579.8L230 580.5L231 581.2L232 581.8L233 582.5L234 583.1L235 583.6L236 584.2L237 584.7L238 585.2L239 585.7L240 586.1L241 586.6L242 587.0L243 587.4L244 587.9L246 588.6L248 589.4L250 590.0L252 590.7L254 591.3L256 591.8L258 592.4L260 592.9L262 593.4L264 593.8L266 594.3L268 594.7L271 595.2L274 595.8L277 596.2L280 596.7L285 596.8L286 596.4L287 595.4L288 593.7L289 591.1L290 587.1L291 581.9L292 575.4L293 568.2L294 560.8L295 553.9L296 548.2L297 544.1L298 541.9L299 541.4L300 542.2L301 544.1L302 546.5L303 549.2L304 551.9L305 554.6L306 557.1L307 559.4L308 561.6L309 563.6L310 565.4L311 567.1L312 568.7L313 570.2L314 571.5L315 572.8L316 573.9L317 575.0L318 576.0L319 577.0L320 577.9L321 578.7L322 579.5L323 580.2L324 580.9L325 581.6L326 582.2L327 582.8L328 583.4L329 583.9L330 584.4L331 584.9L332 585.4L333 585.8L334 586.3L335 586.7L337 587.4L339 588.1L341 588.8L343 589.4L345 590.0L347 590.6L349 591.1L351 591.6L353 592.0L355 592.5L357 592.9L360 593.5L363 594.0L366 594.5L369 595.0L372 595.4L375 595.9L379 596.4L383 596.8L387 597.3L392 597.7L397 598.2L403 598.6L409 599.0L416 599.5L424 599.9L434 600.3L454 599.7L455 599.2L456 598.5L457 597.7L458 596.5L459 595.2L460 593.5L461 591.6L462 589.4L463 587.1L464 584.6L465 582.0L466 579.4L467 577.0L468 574.7L469 572.7L470 571.0L471 569.7L472 568.8L473 568.2L476 568.3L477 568.8L478 569.5L479 570.3L480 571.2L481 572.1L482 573.1L483 574.0L484 574.9L485 575.8L486 576.7L487 577.5L488 578.3L489 579.0L490 579.8L491 580.4L492 581.1L493 581.7L494 582.3L495 582.9L496 583.4L497 584.0L498 584.5L499 584.9L500 585.4L501 585.8L502 586.2L504 587.0L506 587.7L508 588.4L510 589.0L512 589.6L514 590.1L516 590.6L518 591.1L520 591.5L522 591.9L525 592.4L528 593.0L531 593.4L534 593.8L538 594.4L542 594.9L546 595.3L550 595.7L555 596.1L560 596.6L566 597.0L572 597.4L579 597.8L587 598.3L596 598.7L606 599.1L618 599.6L632 600.0L649 600.4L671 600.8L702 601.2L756 601.6L843 601.9" stroke="#00ff59"/><path d="M75 602.0L194 601.9L195 601.3L196 599.3L197 593.7L198 581.9L199 562.6L200 538.5L201 516.2L202 501.7L203 497.0L204 499.5L205 505.5L206 512.6L207 519.3L208 525.4L209 530.9L210 535.8L211 540.2L212 544.2L213 547.7L214 550.9L215 553.8L216 556.4L217 558.8L218 561.0L219 563.0L220 564.8L221 566.5L222 568.0L223 569.5L224 570.8L225 572.0L226 573.2L227 574.2L228 575.2L229 576.2L230 577.1L231 577.9L232 578.7L233 579.5L234 580.2L235 580.9L236 581.5L237 582.1L238 582.7L239 583.3L240 583.9L241 584.4L242 584.9L243 585.4L244 585.9L245 586.3L246 586.8L247 587.2L248 587.6L250 588.4L252 589.1L254 589.8L256 590.5L258 591.1L260 591.7L262 592.2L264 592.7L266 593.2L268 593.7L270 594.1L272 594.5L275 595.1L278 595.6L282 595.5L283 594.9L284 593.8L285 591.8L286 588.8L287 584.7L288 579.4L289 573.3L290 566.8L291 560.3L292 554.4L293 549.5L294 545.7L295 543.0L296 541.1L297 539.8L298 538.8L299 538.0L300 537.4L302 537.1L303 537.7L304 538.9L305 540.7L306 542.9L307 545.5L308 548.3L309 551.1L310 553.7L311 556.3L312 558.6L313 560.8L314 562.8L315 564.6L316 566.3L317 567.8L318 569.2L319 570.5L320 571.8L321 572.9L322 574.0L323 574.9L324 575.9L325 576.8L326 577.6L327 578.4L328 579.1L329 579.8L330 580.5L331 581.1L332 581.7L333 582.3L334 582.8L335 583.4L336 583.9L337 584.4L338 584.9L339 585.3L340 585.8L341 586.2L342 586.6L344 587.4L346 588.1L348 588.8L350 589.5L352 590.1L354 590.7L356 591.2L358 591.7L360 592.2L362 592.7L364 593.1L366 593.6L368 594.0L371 594.5L374 595.1L377 595.5L380 596.0L383 596.4L387 596.9L391 597.4L395 597.8L400 598.3L405 598.7L411 599.1L418 599.6L426 600.0L436 600.4L448 600.0L449 599.6L450 599.1L451 598.4L452 597.5L453 596.4L454 595.0L455 593.4L456 591.5L457 589.4L458 587.2L459 584.8L460 582.4L461 580.1L462 577.8L463 575.8L464 574.0L465 572.6L466 571.5L467 570.7L468 570.3L471 570.7L472 571.3L473 572.0L474 572.7L475 573.6L476 574.4L477 575.3L478 576.1L479 576.9L480 577.6L481 578.2L482 578.7L483 579.1L485 579.6L488 579.2L489 578.8L490 578.3L491 577.7L492 577.1L493 576.4L494 575.9L495 575.3L496 574.9L501 575.1L502 575.6L503 576.1L504 576.7L505 577.4L506 578.1L507 578.8L508 579.6L509 580.3L510 580.9L511 581.6L512 582.2L513 582.8L514 583.4L515 583.9L516 584.5L517 585.0L518 585.4L519 585.9L520 586.3L521 586.7L523 587.4L525 588.1L527 588.8L529 589.3L531 589.9L533 590.4L535 590.8L537 591.3L539 591.7L542 592.3L545 592.8L548 593.3L551 593.7L554 594.1L558 594.6L562 595.1L566 595.5L570 595.9L575 596.4L580 596.8L586 597.3L592 597.7L599 598.1L607 598.6L616 599.0L626 599.4L638 599.9L652 600.3L670 600.7L695 601.1L735 601.5L842 601.9L843 601.9" stroke="#00ff55"/><path d="M75 602.0L193 601.6L194 600.5L195 597.0L196 588.7L197 573.6L198 552.4L199 529.7L200 511.2L201 500.2L202 496.5L203 497.7L204 502.0L205 508.0L206 514.7L207 521.2L208 527.3L209 532.7L210 537.5L211 541.8L212 545.7L213 549.1L214 552.2L215 555.0L216 557.5L217 559.8L218 561.9L219 563.8L220 565.5L221 567.1L222 568.6L223 570.0L224 571.3L225 572.5L226 573.6L227 574.6L228 575.6L229 576.6L230 577.4L231 578.3L232 579.0L233 579.8L234 580.5L235 581.2L236 581.9L237 582.5L238 583.1L239 583.7L240 584.2L241 584.7L242 585.3L243 585.8L244 586.2L245 586.7L246 587.1L247 587.6L248 588.0L249 588.4L251 589.2L253 589.9L255 590.6L257 591.2L259 591.8L261 592.4L263 592.9L265 593.4L267 593.9L269 594.3L271 594.7L274 595.3L277 595.9L281 596.0L282 595.5L283 594.5L284 592.9L285 590.2L286 586.3L287 581.2L288 575.1L289 568.4L290 561.6L291 555.5L292 550.4L293 546.8L294 544.6L295 543.4L296 542.9L298 542.4L300 541.7L302 541.7L303 542.5L304 543.9L305 545.8L306 548.1L307 550.6L308 553.2L309 555.7L310 558.1L311 560.3L312 562.4L313 564.3L314 566.1L315 567.7L316 569.1L317 570.5L318 571.8L319 572.9L320 574.0L321 575.0L322 576.0L323 576.9L324 577.7L325 578.5L326 579.2L327 579.9L328 580.6L329 581.3L330 581.9L331 582.4L332 583.0L333 583.5L334 584.0L335 584.5L336 585.0L337 585.4L338 585.9L339 586.3L340 586.7L342 587.5L344 588.2L346 588.9L348 589.5L350 590.1L352 590.7L354 591.2L356 591.8L358 592.2L360 592.7L362 593.1L364 593.6L367 594.1L370 594.7L373 595.2L376 595.7L379 596.1L382 596.5L386 597.0L390 597.4L394 597.8L399 598.3L404 598.7L410 599.1L417 599.6L425 600.0L435 600.4L449 600.8L455 600.3L456 600.1L457 599.6L458 599.1L459 598.4L460 597.4L461 596.2L462 594.8L463 593.1L464 591.2L465 589.1L466 586.8L467 584.4L468 582.0L469 579.6L470 577.3L471 575.2L472 573.3L473 571.6L474 570.1L475 569.0L476 568.1L477 567.5L479 567.0L482 567.7L483 568.2L484 568.9L485 569.6L486 570.4L487 571.3L488 572.2L489 573.1L490 574.0L491 575.0L492 575.9L493 576.7L494 577.6L495 578.4L496 579.2L497 579.9L498 580.6L499 581.3L500 581.9L501 582.5L502 583.1L503 583.7L504 584.2L505 584.7L506 585.2L507 585.6L508 586.1L509 586.5L511 587.2L513 587.9L515 588.6L517 589.2L519 589.8L521 590.3L523 590.8L525 591.2L527 591.6L530 592.2L533 592.8L536 593.2L539 593.7L542 594.1L546 594.6L550 595.1L554 595.5L559 596.0L564 596.5L569 596.9L575 597.3L581 597.7L588 598.2L596 598.6L605 599.0L615 599.4L627 599.8L642 600.2L661 600.7L686 601.1L726 601.5L826 601.9L843 601.9" stroke="#00ff52"/><path d="M75 602.0L191 601.8L192 601.0L193 598.4L194 591.9L195 579.7L196 561.6L197 541.2L198 523.4L199 511.3L200 505.2L201 504.0L202 506.3L203 511.2L204 517.3L205 523.7L206 529.8L207 535.2L208 540.1L209 544.4L210 548.2L211 551.6L212 554.6L213 557.3L214 559.8L215 562.0L216 564.0L217 565.9L218 567.6L219 569.1L220 570.6L221 571.9L222 573.1L223 574.3L224 575.3L225 576.3L226 577.3L227 578.2L228 579.0L229 579.8L230 580.5L231 581.3L232 581.9L233 582.6L234 583.2L235 583.8L236 584.4L237 584.9L238 585.5L239 586.0L240 586.5L241 586.9L242 587.4L243 587.8L244 588.2L245 588.6L247 589.4L249 590.2L251 590.8L253 591.5L255 592.1L257 592.6L259 593.2L261 593.7L263 594.1L265 594.6L267 595.0L270 595.6L273 596.1L276 596.6L279 597.0L284 596.7L285 595.9L286 594.5L287 592.2L288 588.9L289 584.5L290 579.1L291 572.9L292 566.5L293 560.3L294 554.8L295 550.2L296 546.7L297 544.3L298 543.0L299 542.5L300 542.9L301 544.1L302 545.8L303 547.9L304 550.4L305 553.0L306 555.6L307 558.1L308 560.5L309 562.7L310 564.7L311 566.6L312 568.3L313 569.9L314 571.4L315 572.7L316 574.0L317 575.1L318 576.2L319 577.1L320 578.1L321 578.9L322 579.7L323 580.5L324 581.2L325 581.9L326 582.5L327 583.1L328 583.7L329 584.2L330 584.8L331 585.3L332 585.7L333 586.2L334 586.6L335 587.0L336 587.4L338 588.2L340 588.9L342 589.6L344 590.2L346 590.8L348 591.3L350 591.8L352 592.3L354 592.8L356 593.2L358 593.7L361 594.2L364 594.8L367 595.3L370 595.7L373 596.2L377 596.7L381 597.2L385 597.6L390 598.1L395 598.5L401 599.0L408 599.4L416 599.9L425 600.3L437 600.7L456 599.9L457 599.4L458 598.7L459 597.8L460 596.7L461 595.3L462 593.7L463 591.8L464 589.7L465 587.5L466 585.1L467 582.8L468 580.4L469 578.3L470 576.3L471 574.6L472 573.3L473 572.2L474 571.6L476 571.2L477 571.4L478 571.8L479 572.4L480 573.1L481 573.9L482 574.7L483 575.5L484 576.4L485 577.3L486 578.1L487 578.9L488 579.7L489 580.4L490 581.1L491 581.8L492 582.4L493 583.0L494 583.6L495 584.1L496 584.7L497 585.2L498 585.7L499 586.1L500 586.5L501 587.0L502 587.4L504 588.1L506 588.8L508 589.4L510 590.0L512 590.6L514 591.1L516 591.5L518 592.0L520 592.4L523 592.9L526 593.4L529 593.9L532 594.3L536 594.8L540 595.3L544 595.7L549 596.2L554 596.6L560 597.1L566 597.5L573 597.9L581 598.4L590 598.8L600 599.2L612 599.6L626 600.1L643 600.5L665 600.9L697 601.3L755 601.7L843 601.9" stroke="#00ff4e"/><path d="M75 602.0L123 601.3L127 601.8L193 601.7L194 600.5L195 597.2L196 589.5L197 575.9L198 557.6L199 539.3L200 526.1L201 520.5L202 520.6L203 522.7L204 523.2L205 520.0L206 513.7L207 506.4L208 501.5L209 500.9L210 504.4L211 510.3L212 517.1L213 523.7L214 529.6L215 534.9L216 539.5L217 543.5L218 547.1L219 550.4L220 553.2L221 555.8L222 558.2L223 560.3L224 562.3L225 564.0L226 565.7L227 567.2L228 568.6L229 569.9L230 571.2L231 572.3L232 573.4L233 574.5L234 575.5L235 576.4L236 577.3L237 578.1L238 578.9L239 579.7L240 580.4L241 581.2L242 581.8L243 582.5L244 583.1L245 583.7L246 584.3L247 584.9L248 585.4L249 585.9L250 586.4L251 586.9L252 587.4L253 587.9L254 588.3L255 588.7L256 589.1L258 589.9L260 590.6L262 591.3L264 592.0L266 592.6L268 593.1L270 593.7L272 594.2L274 594.6L276 595.1L280 595.0L281 594.2L282 592.8L283 590.4L284 586.8L285 581.8L286 575.6L287 568.4L288 560.9L289 553.8L290 547.9L291 543.5L292 541.0L293 540.2L294 540.7L295 542.0L296 543.5L297 544.8L298 545.6L299 545.5L300 544.7L301 543.4L302 541.7L303 540.2L304 539.3L305 539.1L306 539.8L307 541.3L308 543.4L309 546.0L310 548.7L311 551.4L312 554.0L313 556.5L314 558.8L315 560.9L316 562.8L317 564.6L318 566.2L319 567.7L320 569.1L321 570.4L322 571.5L323 572.7L324 573.7L325 574.7L326 575.6L327 576.4L328 577.2L329 578.0L330 578.7L331 579.4L332 580.1L333 580.7L334 581.3L335 581.9L336 582.5L337 583.0L338 583.5L339 584.0L340 584.5L341 585.0L342 585.4L343 585.8L344 586.3L345 586.7L347 587.4L349 588.2L351 588.9L353 589.5L355 590.1L357 590.7L359 591.2L361 591.8L363 592.3L365 592.7L367 593.2L369 593.6L371 594.0L374 594.6L377 595.1L380 595.6L383 596.0L386 596.4L390 596.9L394 597.4L398 597.8L403 598.3L408 598.7L414 599.1L421 599.6L429 600.0L439 600.4L458 600.1L459 599.7L460 599.1L461 598.4L462 597.4L463 596.2L464 594.8L465 593.0L466 591.1L467 588.9L468 586.6L469 584.2L470 581.7L471 579.4L472 577.2L473 575.2L474 573.5L475 572.2L476 571.2L477 570.5L480 570.5L481 571.0L482 571.6L483 572.3L484 573.2L485 574.1L486 574.9L487 575.8L488 576.7L489 577.6L490 578.4L491 579.2L492 579.9L493 580.6L494 581.3L495 582.0L496 582.6L497 583.2L498 583.8L499 584.3L500 584.8L501 585.3L502 585.8L503 586.2L504 586.6L505 587.0L507 587.8L509 588.5L511 589.2L513 589.8L515 590.3L517 590.8L519 591.3L521 591.7L523 592.1L526 592.7L529 593.2L532 593.7L535 594.1L539 594.7L543 595.1L547 595.6L552 596.1L557 596.5L563 597.0L569 597.4L576 597.8L584 598.3L593 598.7L603 599.2L614 599.6L627 600.0L643 600.4L664 600.8L693 601.2L742 601.6L843 601.9" stroke="#00ff4b"/><path d="M75 602.0L192 601.8L193 601.0L194 598.5L195 592.0L196 579.2L197 560.0L198 538.4L199 520.6L200 510.7L201 508.2L202 509.4L203 510.1L204 508.3L205 503.7L206 497.6L207 492.5L208 490.8L209 493.4L210 499.2L211 506.4L212 513.7L213 520.4L214 526.3L215 531.6L216 536.2L217 540.3L218 543.9L219 547.2L220 550.1L221 552.8L222 555.2L223 557.4L224 559.4L225 561.3L226 563.0L227 564.6L228 566.1L229 567.5L230 568.8L231 570.0L232 571.2L233 572.3L234 573.3L235 574.3L236 575.3L237 576.2L238 577.0L239 577.9L240 578.7L241 579.4L242 580.2L243 580.9L244 581.5L245 582.2L246 582.8L247 583.4L248 584.0L249 584.6L250 585.1L251 585.7L252 586.2L253 586.7L254 587.1L255 587.6L256 588.0L257 588.5L258 588.9L259 589.3L261 590.1L263 590.8L265 591.5L267 592.1L269 592.7L271 593.2L273 593.8L275 594.3L277 594.7L281 594.6L282 593.7L283 592.2L284 589.6L285 585.6L286 580.3L287 573.5L288 565.9L289 557.9L290 550.5L291 544.2L292 539.7L293 537.1L294 536.1L295 536.5L296 537.7L297 539.3L298 541.0L299 542.7L300 544.3L301 545.9L302 547.6L303 549.5L304 551.5L305 553.7L306 555.8L307 558.0L308 560.1L309 562.1L310 564.0L311 565.7L312 567.3L313 568.8L314 570.2L315 571.5L316 572.7L317 573.8L318 574.8L319 575.7L320 576.7L321 577.5L322 578.3L323 579.1L324 579.8L325 580.4L326 581.1L327 581.7L328 582.3L329 582.8L330 583.4L331 583.9L332 584.4L333 584.9L334 585.3L335 585.7L336 586.2L337 586.6L339 587.3L341 588.1L343 588.7L345 589.4L347 590.0L349 590.5L351 591.1L353 591.6L355 592.1L357 592.5L359 593.0L361 593.4L364 594.0L367 594.5L370 595.0L373 595.5L376 595.9L379 596.3L383 596.8L387 597.3L391 597.7L396 598.2L401 598.6L407 599.0L414 599.4L422 599.9L432 600.3L445 600.7L453 600.1L454 599.7L455 599.2L456 598.4L457 597.5L458 596.3L459 594.8L460 593.0L461 591.0L462 588.8L463 586.3L464 583.7L465 581.1L466 578.6L467 576.2L468 574.0L469 572.1L470 570.6L471 569.4L472 568.6L473 568.2L475 568.4L476 568.8L477 569.5L478 570.3L479 571.1L480 572.0L481 573.0L482 574.0L483 574.9L484 575.8L485 576.7L486 577.5L487 578.4L488 579.1L489 579.9L490 580.6L491 581.2L492 581.9L493 582.5L494 583.1L495 583.6L496 584.1L497 584.7L498 585.1L499 585.6L500 586.0L501 586.5L502 586.9L504 587.6L506 588.3L508 588.9L510 589.5L512 590.1L514 590.6L516 591.1L518 591.5L520 591.9L523 592.5L526 593.0L529 593.5L532 593.9L535 594.3L539 594.8L543 595.3L547 595.7L552 596.2L557 596.6L563 597.0L569 597.5L576 597.9L584 598.3L593 598.8L603 599.2L615 599.6L629 600.1L646 600.5L668 600.9L700 601.3L758 601.7L843 601.9" stroke="#00ff47"/><path d="M75 602.0L191 601.7L192 600.8L193 597.7L194 590.3L195 576.6L196 557.1L197 535.8L198 517.9L199 505.7L200 498.0L201 493.4L202 491.4L203 492.1L204 494.5L205 497.6L206 501.0L207 505.2L208 510.4L209 516.3L210 522.4L211 528.1L212 533.2L213 537.8L214 541.8L215 545.4L216 548.7L217 551.6L218 554.2L219 556.6L220 558.8L221 560.7L222 562.6L223 564.3L224 565.8L225 567.3L226 568.7L227 569.9L228 571.1L229 572.3L230 573.4L231 574.4L232 575.3L233 576.3L234 577.1L235 578.0L236 578.8L237 579.5L238 580.3L239 581.0L240 581.7L241 582.3L242 583.0L243 583.6L244 584.1L245 584.7L246 585.3L247 585.8L248 586.3L249 586.8L250 587.3L251 587.7L252 588.2L253 588.6L254 589.0L255 589.4L257 590.2L259 590.9L261 591.5L263 592.2L265 592.8L267 593.3L269 593.8L271 594.3L273 594.8L275 595.2L279 595.2L280 594.6L281 593.4L282 591.4L283 588.3L284 584.1L285 578.8L286 572.6L287 565.9L288 559.2L289 553.1L290 548.0L291 544.1L292 541.6L293 540.4L294 540.4L295 541.4L296 543.2L297 545.6L298 548.3L299 551.1L300 553.9L301 556.6L302 559.1L303 561.5L304 563.6L305 565.6L306 567.4L307 569.0L308 570.5L309 571.9L310 573.2L311 574.4L312 575.5L313 576.5L314 577.5L315 578.4L316 579.2L317 580.0L318 580.8L319 581.5L320 582.1L321 582.8L322 583.4L323 583.9L324 584.5L325 585.0L326 585.5L327 585.9L328 586.4L329 586.8L330 587.2L331 587.6L333 588.4L335 589.1L337 589.8L339 590.4L341 591.0L343 591.5L345 592.0L347 592.5L349 593.0L351 593.4L353 593.8L356 594.4L359 594.9L362 595.4L365 595.9L368 596.3L372 596.8L376 597.3L380 597.7L385 598.2L390 598.6L396 599.1L403 599.5L411 600.0L421 600.4L434 600.8L450 600.3L451 599.9L452 599.4L453 598.6L454 597.6L455 596.4L456 594.9L457 593.1L458 591.0L459 588.7L460 586.1L461 583.5L462 580.8L463 578.2L464 575.7L465 573.5L466 571.6L467 570.0L468 568.8L469 568.1L470 567.7L472 567.8L473 568.3L474 569.0L475 569.8L476 570.7L477 571.6L478 572.6L479 573.6L480 574.5L481 575.5L482 576.4L483 577.2L484 578.1L485 578.8L486 579.6L487 580.3L488 581.0L489 581.6L490 582.3L491 582.8L492 583.4L493 583.9L494 584.5L495 584.9L496 585.4L497 585.9L498 586.3L499 586.7L501 587.5L503 588.2L505 588.8L507 589.4L509 590.0L511 590.5L513 590.9L515 591.4L517 591.8L520 592.4L523 592.9L526 593.4L529 593.8L532 594.2L536 594.7L540 595.2L544 595.6L549 596.1L554 596.5L560 597.0L566 597.4L573 597.9L581 598.3L590 598.7L600 599.2L611 599.6L624 600.0L640 600.4L661 600.8L690 601.2L740 601.6L843 601.9" stroke="#00ff44"/><path d="M75 602.0L124 601.4L129 601.9L192 601.9L193 601.4L194 599.5L195 594.5L196 583.7L197 566.3L198 545.2L199 526.4L200 514.8L201 510.7L202 510.7L203 510.1L204 506.3L205 499.9L206 493.4L207 489.9L208 490.8L209 495.4L210 502.3L211 509.7L212 516.9L213 523.3L214 529.0L215 534.0L216 538.4L217 542.3L218 545.8L219 548.9L220 551.7L221 554.3L222 556.6L223 558.7L224 560.7L225 562.5L226 564.2L227 565.7L228 567.1L229 568.5L230 569.8L231 571.0L232 572.1L233 573.2L234 574.2L235 575.2L236 576.1L237 577.0L238 577.8L239 578.6L240 579.4L241 580.1L242 580.8L243 581.5L244 582.2L245 582.8L246 583.4L247 584.0L248 584.6L249 585.2L250 585.7L251 586.2L252 586.7L253 587.2L254 587.6L255 588.1L256 588.5L257 588.9L258 589.3L260 590.1L262 590.8L264 591.5L266 592.2L268 592.7L270 593.3L272 593.8L274 594.3L276 594.8L280 594.7L281 593.9L282 592.5L283 590.1L284 586.6L285 581.8L286 575.8L287 568.9L288 561.8L289 555.0L290 549.1L291 544.4L292 541.1L293 539.0L294 537.8L295 537.1L296 536.6L297 536.1L298 535.7L300 535.3L301 535.7L302 536.8L303 538.5L304 540.7L305 543.3L306 546.1L307 549.0L308 551.8L309 554.4L310 556.9L311 559.2L312 561.3L313 563.2L314 564.9L315 566.6L316 568.0L317 569.4L318 570.7L319 571.9L320 573.0L321 574.0L322 575.0L323 575.9L324 576.8L325 577.6L326 578.4L327 579.1L328 579.8L329 580.5L330 581.1L331 581.7L332 582.3L333 582.8L334 583.4L335 583.9L336 584.4L337 584.9L338 585.3L339 585.8L340 586.2L341 586.6L342 587.0L344 587.8L346 588.5L348 589.2L350 589.8L352 590.5L354 591.0L356 591.6L358 592.1L360 592.6L362 593.0L364 593.5L366 593.9L369 594.5L372 595.0L375 595.5L378 596.0L381 596.4L385 596.9L389 597.4L393 597.8L398 598.3L403 598.7L409 599.2L416 599.6L424 600.0L434 600.5L447 600.9L456 600.2L457 599.8L458 599.2L459 598.5L460 597.6L461 596.4L462 595.0L463 593.3L464 591.5L465 589.4L466 587.2L467 584.9L468 582.5L469 580.2L470 578.1L471 576.1L472 574.3L473 572.7L474 571.4L475 570.4L476 569.5L477 568.8L478 568.4L480 567.8L489 568.3L490 568.6L491 569.1L492 569.6L493 570.2L494 570.8L495 571.5L496 572.3L497 573.1L498 574.0L499 574.8L500 575.7L501 576.5L502 577.4L503 578.2L504 578.9L505 579.7L506 580.4L507 581.1L508 581.7L509 582.3L510 582.9L511 583.4L512 584.0L513 584.5L514 584.9L515 585.4L516 585.8L517 586.2L519 587.0L521 587.7L523 588.4L525 589.0L527 589.5L529 590.0L531 590.5L533 591.0L535 591.4L537 591.8L540 592.4L543 592.9L546 593.4L549 593.8L552 594.2L556 594.7L560 595.2L564 595.7L568 596.1L573 596.5L578 596.9L584 597.4L590 597.8L597 598.3L605 598.7L614 599.1L624 599.5L636 600.0L651 600.4L670 600.8L697 601.2L743 601.6L843 601.9" stroke="#00ff40"/><path d="M75 602.0L193 601.6L194 600.2L195 596.3L196 587.5L197 572.6L198 553.6L199 535.5L200 523.2L201 517.7L202 515.6L203 512.7L204 507.0L205 499.9L206 494.6L207 493.6L208 497.1L209 503.5L210 510.9L211 518.2L212 524.7L213 530.5L214 535.5L215 540.0L216 543.9L217 547.5L218 550.6L219 553.4L220 556.0L221 558.3L222 560.4L223 562.3L224 564.1L225 565.7L226 567.2L227 568.7L228 570.0L229 571.2L230 572.4L231 573.5L232 574.5L233 575.5L234 576.4L235 577.3L236 578.2L237 579.0L238 579.8L239 580.5L240 581.2L241 581.9L242 582.6L243 583.2L244 583.8L245 584.4L246 585.0L247 585.5L248 586.0L249 586.5L250 587.0L251 587.5L252 588.0L253 588.4L254 588.8L255 589.2L257 590.0L259 590.8L261 591.4L263 592.1L265 592.7L267 593.3L269 593.8L271 594.3L273 594.8L275 595.2L277 595.6L280 596.0L282 595.6L283 594.8L284 593.3L285 590.8L286 586.9L287 581.6L288 575.0L289 567.4L290 559.5L291 552.1L292 546.0L293 541.6L294 539.3L295 538.8L296 539.8L297 541.8L298 544.5L299 547.4L300 550.4L301 553.2L302 555.9L303 558.4L304 560.7L305 562.8L306 564.7L307 566.5L308 568.1L309 569.7L310 571.1L311 572.4L312 573.6L313 574.7L314 575.8L315 576.7L316 577.7L317 578.5L318 579.3L319 580.1L320 580.8L321 581.5L322 582.1L323 582.7L324 583.3L325 583.9L326 584.4L327 584.9L328 585.4L329 585.8L330 586.3L331 586.7L332 587.1L334 587.8L336 588.6L338 589.2L340 589.8L342 590.4L344 591.0L346 591.5L348 592.0L350 592.4L352 592.9L354 593.3L357 593.9L360 594.4L363 594.9L366 595.4L369 595.8L372 596.2L376 596.7L380 597.2L384 597.6L389 598.1L394 598.5L400 598.9L407 599.4L415 599.8L424 600.2L436 600.6L455 600.2L456 599.8L457 599.2L458 598.4L459 597.4L460 596.2L461 594.7L462 592.9L463 590.8L464 588.5L465 586.1L466 583.5L467 581.0L468 578.5L469 576.2L470 574.2L471 572.5L472 571.1L473 570.1L474 569.4L476 568.9L479 569.6L481 570.2L494 570.5L495 571.0L496 571.6L497 572.2L498 573.0L499 573.8L500 574.6L501 575.5L502 576.3L503 577.1L504 577.9L505 578.7L506 579.4L507 580.2L508 580.8L509 581.5L510 582.1L511 582.7L512 583.2L513 583.8L514 584.3L515 584.7L516 585.2L517 585.6L518 586.0L520 586.8L522 587.5L524 588.2L526 588.8L528 589.3L530 589.9L532 590.3L534 590.8L536 591.2L538 591.6L541 592.2L544 592.7L547 593.2L550 593.6L553 594.1L557 594.6L561 595.1L565 595.5L569 595.9L574 596.4L579 596.8L585 597.3L591 597.7L598 598.1L606 598.6L615 599.0L625 599.4L637 599.9L651 600.3L669 600.7L694 601.1L734 601.5L843 601.9" stroke="#00ff3c"/><path d="M75 602.0L192 601.7L193 600.8L194 598.0L195 591.5L196 579.5L197 563.2L198 545.9L199 531.6L200 521.7L201 515.1L202 510.5L203 507.0L204 504.1L205 502.4L206 502.7L207 505.6L208 511.0L209 517.4L210 524.0L211 530.0L212 535.4L213 540.2L214 544.4L215 548.1L216 551.3L217 554.3L218 556.9L219 559.3L220 561.5L221 563.4L222 565.2L223 566.9L224 568.4L225 569.8L226 571.1L227 572.4L228 573.5L229 574.6L230 575.6L231 576.6L232 577.5L233 578.4L234 579.2L235 580.0L236 580.8L237 581.5L238 582.2L239 582.9L240 583.5L241 584.1L242 584.7L243 585.3L244 585.8L245 586.4L246 586.9L247 587.4L248 587.8L249 588.3L250 588.7L251 589.2L252 589.6L254 590.4L256 591.1L258 591.8L260 592.4L262 593.0L264 593.6L266 594.1L268 594.6L270 595.0L272 595.5L274 595.9L277 596.4L281 596.2L282 595.4L283 593.8L284 591.3L285 587.4L286 582.0L287 575.2L288 567.4L289 559.3L290 551.6L291 545.2L292 540.6L293 537.8L294 536.7L295 536.9L296 537.7L297 538.8L298 539.8L299 540.5L301 540.9L303 541.2L304 541.7L305 542.6L306 543.9L307 545.7L308 547.8L309 550.2L310 552.6L311 555.0L312 557.4L313 559.6L314 561.6L315 563.5L316 565.3L317 566.9L318 568.3L319 569.7L320 571.0L321 572.1L322 573.2L323 574.3L324 575.2L325 576.1L326 577.0L327 577.8L328 578.5L329 579.3L330 579.9L331 580.6L332 581.2L333 581.8L334 582.4L335 582.9L336 583.5L337 584.0L338 584.4L339 584.9L340 585.4L341 585.8L342 586.2L343 586.6L345 587.4L347 588.2L349 588.8L351 589.5L353 590.1L355 590.7L357 591.2L359 591.8L361 592.3L363 592.7L365 593.2L367 593.6L369 594.0L372 594.6L375 595.1L378 595.6L381 596.0L384 596.4L388 597.0L392 597.4L396 597.8L401 598.3L406 598.7L412 599.2L419 599.6L427 600.0L437 600.4L450 599.9L451 599.5L452 599.0L453 598.2L454 597.3L455 596.1L456 594.8L457 593.2L458 591.3L459 589.4L460 587.3L461 585.2L462 583.1L463 581.2L464 579.4L465 577.9L466 576.6L467 575.7L468 575.1L472 575.3L473 575.8L474 576.4L475 577.0L476 577.6L477 578.2L478 578.8L479 579.2L481 579.7L484 579.1L485 578.6L486 577.8L487 577.0L488 576.0L489 574.9L490 573.9L491 572.9L492 572.0L493 571.2L494 570.6L496 570.1L498 570.4L499 570.8L500 571.4L501 572.1L502 572.9L503 573.7L504 574.6L505 575.5L506 576.4L507 577.3L508 578.1L509 578.9L510 579.7L511 580.4L512 581.1L513 581.8L514 582.4L515 583.0L516 583.6L517 584.1L518 584.6L519 585.1L520 585.6L521 586.0L522 586.4L524 587.2L526 587.9L528 588.6L530 589.2L532 589.7L534 590.3L536 590.7L538 591.2L540 591.6L542 592.0L545 592.6L548 593.1L551 593.6L554 594.0L557 594.4L561 594.9L565 595.4L569 595.8L573 596.2L578 596.7L583 597.1L589 597.6L595 598.0L602 598.4L610 598.9L619 599.3L629 599.7L641 600.1L656 600.5L676 600.9L706 601.3L764 601.7L843 601.9" stroke="#00ff39"/><path d="M75 602.0L194 601.8L195 601.2L196 599.0L197 593.0L198 580.9L199 562.3L200 540.8L201 522.3L202 511.0L203 505.9L204 504.1L205 503.5L206 504.4L207 507.4L208 512.5L209 518.7L210 525.0L211 530.9L212 536.1L213 540.8L214 544.9L215 548.6L216 551.8L217 554.7L218 557.4L219 559.7L220 561.9L221 563.8L222 565.6L223 567.3L224 568.8L225 570.2L226 571.5L227 572.7L228 573.8L229 574.9L230 575.9L231 576.9L232 577.7L233 578.6L234 579.4L235 580.2L236 580.9L237 581.6L238 582.3L239 582.9L240 583.5L241 584.1L242 584.7L243 585.2L244 585.7L245 586.2L246 586.7L247 587.2L248 587.7L249 588.1L250 588.5L251 588.9L253 589.7L255 590.4L257 591.1L259 591.8L261 592.4L263 592.9L265 593.5L267 594.0L269 594.4L271 594.9L273 595.3L276 595.9L279 596.4L283 596.1L284 595.3L285 593.9L286 591.5L287 588.2L288 583.7L289 578.3L290 572.2L291 566.1L292 560.3L293 555.2L294 551.0L295 547.7L296 545.2L297 543.2L298 541.8L299 541.0L300 540.8L301 541.3L302 542.6L303 544.5L304 546.9L305 549.6L306 552.3L307 555.1L308 557.7L309 560.1L310 562.4L311 564.4L312 566.3L313 568.1L314 569.6L315 571.1L316 572.4L317 573.6L318 574.8L319 575.8L320 576.8L321 577.8L322 578.6L323 579.4L324 580.2L325 580.9L326 581.6L327 582.2L328 582.9L329 583.4L330 584.0L331 584.5L332 585.0L333 585.5L334 586.0L335 586.4L336 586.9L337 587.3L338 587.7L340 588.4L342 589.2L344 589.8L346 590.4L348 591.0L350 591.6L352 592.1L354 592.6L356 593.1L358 593.5L360 593.9L363 594.5L366 595.1L369 595.6L372 596.0L375 596.5L379 597.0L383 597.5L387 597.9L392 598.4L397 598.8L403 599.2L410 599.7L418 600.1L428 600.5L441 600.9L455 600.4L456 600.1L457 599.5L458 598.8L459 597.9L460 596.8L461 595.3L462 593.6L463 591.7L464 589.4L465 587.0L466 584.5L467 581.9L468 579.3L469 576.9L470 574.6L471 572.6L472 570.9L473 569.6L474 568.6L475 567.9L478 567.8L479 568.2L480 568.7L481 569.4L482 570.2L483 571.1L484 572.0L485 573.0L486 573.9L487 574.9L488 575.8L489 576.7L490 577.5L491 578.4L492 579.2L493 579.9L494 580.7L495 581.4L496 582.0L497 582.6L498 583.2L499 583.8L500 584.3L501 584.8L502 585.3L503 585.8L504 586.2L505 586.7L506 587.1L508 587.8L510 588.5L512 589.1L514 589.7L516 590.3L518 590.8L520 591.3L522 591.7L524 592.1L527 592.7L530 593.2L533 593.7L536 594.1L539 594.5L543 595.0L547 595.4L551 595.9L556 596.3L561 596.8L567 597.2L573 597.6L580 598.1L588 598.5L597 599.0L607 599.4L619 599.8L633 600.2L651 600.6L675 601.0L712 601.4L798 601.8L843 601.9" stroke="#00ff35"/><path d="M75 602.0L189 601.9L190 601.4L191 599.4L192 593.6L193 580.8L194 559.5L195 532.9L196 508.6L197 493.7L198 489.7L199 493.3L200 499.7L201 505.6L202 509.3L203 510.3L204 510.2L205 510.6L206 512.9L207 517.2L208 522.5L209 528.0L210 533.1L211 537.7L212 541.8L213 545.5L214 548.7L215 551.7L216 554.3L217 556.7L218 558.9L219 560.9L220 562.7L221 564.4L222 565.9L223 567.4L224 568.7L225 570.0L226 571.2L227 572.3L228 573.4L229 574.4L230 575.3L231 576.2L232 577.1L233 577.9L234 578.7L235 579.4L236 580.2L237 580.9L238 581.5L239 582.2L240 582.8L241 583.4L242 584.0L243 584.5L244 585.0L245 585.6L246 586.1L247 586.5L248 587.0L249 587.5L250 587.9L251 588.3L252 588.7L254 589.5L256 590.3L258 590.9L260 591.6L262 592.2L264 592.8L266 593.3L268 593.8L270 594.3L272 594.7L274 595.2L277 595.7L280 596.3L283 596.2L284 595.8L285 594.8L286 593.0L287 590.0L288 585.7L289 579.9L290 572.9L291 565.1L292 557.1L293 549.8L294 543.6L295 539.0L296 536.1L297 534.7L298 534.6L299 535.4L300 536.9L301 538.9L302 541.0L303 543.2L304 545.1L305 546.8L306 548.2L307 549.3L308 550.3L309 551.2L310 552.3L311 553.7L312 555.2L313 557.0L314 558.8L315 560.8L316 562.6L317 564.5L318 566.2L319 567.8L320 569.2L321 570.6L322 571.9L323 573.0L324 574.1L325 575.1L326 576.1L327 577.0L328 577.8L329 578.6L330 579.4L331 580.1L332 580.7L333 581.4L334 582.0L335 582.6L336 583.1L337 583.7L338 584.2L339 584.7L340 585.1L341 585.6L342 586.0L343 586.5L344 586.9L346 587.6L348 588.4L350 589.1L352 589.7L354 590.3L356 590.9L358 591.5L360 592.0L362 592.5L364 592.9L366 593.4L368 593.8L371 594.4L374 594.9L377 595.4L380 595.9L383 596.3L386 596.7L390 597.2L394 597.7L398 598.1L403 598.5L409 599.0L415 599.4L422 599.8L431 600.2L442 600.6L458 600.2L459 599.8L460 599.2L461 598.5L462 597.5L463 596.2L464 594.7L465 592.9L466 590.9L467 588.6L468 586.2L469 583.7L470 581.1L471 578.7L472 576.4L473 574.3L474 572.5L475 571.0L476 569.9L477 569.1L478 568.6L482 568.8L483 569.3L484 569.8L485 570.5L486 571.1L487 571.8L488 572.6L489 573.3L490 574.0L491 574.7L492 575.3L493 575.8L494 576.3L496 576.9L504 577.4L507 578.0L508 578.3L509 578.7L510 579.2L511 579.7L512 580.3L513 580.9L514 581.5L515 582.1L516 582.6L517 583.2L518 583.8L519 584.3L520 584.8L521 585.3L522 585.7L523 586.2L524 586.6L525 587.0L527 587.8L529 588.4L531 589.1L533 589.6L535 590.2L537 590.7L539 591.1L541 591.6L543 592.0L546 592.5L549 593.1L552 593.5L555 594.0L558 594.4L562 594.9L566 595.4L570 595.8L575 596.3L580 596.7L585 597.1L591 597.6L597 598.0L604 598.4L612 598.8L621 599.2L632 599.7L645 600.1L661 600.5L682 600.9L713 601.3L774 601.7L843 601.9" stroke="#00ff31"/><path d="M75 602.0L192 601.8L193 601.0L194 598.3L195 591.1L196 576.6L197 554.6L198 530.0L199 510.2L200 500.2L201 499.6L202 504.7L203 511.8L204 519.0L205 525.5L206 531.4L207 536.5L208 541.2L209 545.3L210 549.0L211 552.3L212 555.2L213 557.9L214 560.3L215 562.5L216 564.5L217 566.3L218 568.0L219 569.5L220 570.9L221 572.2L222 573.4L223 574.6L224 575.6L225 576.6L226 577.5L227 578.4L228 579.2L229 580.0L230 580.8L231 581.5L232 582.1L233 582.8L234 583.4L235 584.0L236 584.5L237 585.1L238 585.6L239 586.1L240 586.6L241 587.0L242 587.5L243 587.9L244 588.3L245 588.7L247 589.5L249 590.2L251 590.9L253 591.5L255 592.1L257 592.6L259 593.2L261 593.7L263 594.1L265 594.6L267 595.0L270 595.6L273 596.1L276 596.6L279 597.0L284 597.1L285 596.7L286 595.6L287 593.8L288 591.0L289 586.9L290 581.5L291 575.0L292 567.9L293 560.5L294 553.7L295 547.7L296 542.9L297 539.3L298 536.8L299 535.3L300 534.6L302 535.0L303 535.6L304 536.4L305 537.2L306 538.1L307 539.1L308 540.4L309 542.0L310 544.0L311 546.3L312 548.7L313 551.3L314 553.9L315 556.3L316 558.6L317 560.8L318 562.8L319 564.6L320 566.3L321 567.8L322 569.2L323 570.5L324 571.8L325 572.9L326 574.0L327 575.0L328 575.9L329 576.8L330 577.6L331 578.4L332 579.1L333 579.9L334 580.5L335 581.2L336 581.8L337 582.4L338 582.9L339 583.5L340 584.0L341 584.5L342 585.0L343 585.5L344 585.9L345 586.3L346 586.8L347 587.2L349 587.9L351 588.7L353 589.4L355 590.0L357 590.6L359 591.2L361 591.8L363 592.3L365 592.8L367 593.2L369 593.7L371 594.1L374 594.7L377 595.2L380 595.7L383 596.2L386 596.6L390 597.1L394 597.6L398 598.0L403 598.5L408 598.9L414 599.3L421 599.8L429 600.2L439 600.6L453 600.1L454 599.6L455 599.0L456 598.2L457 597.2L458 595.8L459 594.2L460 592.3L461 590.2L462 587.8L463 585.2L464 582.6L465 580.0L466 577.5L467 575.1L468 573.1L469 571.4L470 570.1L471 569.2L472 568.7L475 569.0L476 569.5L477 570.2L478 571.0L479 571.7L480 572.5L481 573.2L482 573.8L483 574.3L484 574.8L486 575.4L489 575.9L492 576.5L494 577.1L495 577.5L496 578.0L497 578.5L498 579.0L499 579.6L500 580.2L501 580.8L502 581.4L503 582.1L504 582.6L505 583.2L506 583.8L507 584.3L508 584.8L509 585.3L510 585.8L511 586.2L512 586.6L513 587.0L515 587.8L517 588.5L519 589.1L521 589.7L523 590.2L525 590.7L527 591.2L529 591.6L531 592.0L534 592.6L537 593.1L540 593.6L543 594.0L546 594.4L550 594.9L554 595.4L558 595.8L563 596.3L568 596.7L573 597.1L579 597.6L586 598.0L593 598.4L601 598.8L610 599.2L621 599.7L634 600.1L650 600.5L671 600.9L702 601.3L761 601.7L843 601.9" stroke="#00ff2d"/><path d="M75 602.0L193 601.8L194 600.9L195 598.2L196 591.3L197 578.4L198 560.0L199 539.6L200 521.5L201 507.5L202 497.5L203 491.3L204 489.4L205 492.1L206 498.3L207 506.0L208 513.9L209 521.1L210 527.5L211 533.1L212 538.1L213 542.4L214 546.3L215 549.7L216 552.8L217 555.5L218 558.0L219 560.3L220 562.3L221 564.2L222 565.9L223 567.5L224 569.0L225 570.4L226 571.6L227 572.8L228 574.0L229 575.0L230 576.0L231 577.0L232 577.9L233 578.7L234 579.5L235 580.3L236 581.1L237 581.8L238 582.4L239 583.1L240 583.7L241 584.3L242 584.9L243 585.5L244 586.0L245 586.5L246 587.0L247 587.5L248 588.0L249 588.4L250 588.9L251 589.3L252 589.7L254 590.4L256 591.2L258 591.8L260 592.5L262 593.1L264 593.6L266 594.1L268 594.6L270 595.1L272 595.5L275 596.1L278 596.5L281 596.1L282 595.3L283 593.6L284 591.0L285 587.0L286 581.5L287 574.8L288 567.4L289 559.8L290 552.9L291 547.3L292 543.5L293 541.4L294 540.8L295 541.0L296 541.7L297 542.3L300 542.3L301 541.6L302 541.0L303 540.4L305 540.4L306 541.2L307 542.5L308 544.3L309 546.5L310 548.9L311 551.5L312 554.0L313 556.5L314 558.8L315 560.9L316 562.9L317 564.7L318 566.4L319 567.9L320 569.3L321 570.6L322 571.8L323 573.0L324 574.0L325 575.0L326 575.9L327 576.8L328 577.6L329 578.4L330 579.2L331 579.9L332 580.5L333 581.2L334 581.8L335 582.4L336 582.9L337 583.5L338 584.0L339 584.5L340 585.0L341 585.4L342 585.9L343 586.3L344 586.7L345 587.1L347 587.9L349 588.6L351 589.3L353 589.9L355 590.6L357 591.1L359 591.7L361 592.2L363 592.7L365 593.2L367 593.6L369 594.0L372 594.6L375 595.1L378 595.6L381 596.1L384 596.5L388 597.1L392 597.5L396 597.9L401 598.4L406 598.8L412 599.3L419 599.7L427 600.1L437 600.5L451 600.1L452 599.7L453 599.1L454 598.4L455 597.4L456 596.1L457 594.5L458 592.7L459 590.5L460 588.2L461 585.6L462 582.9L463 580.2L464 577.6L465 575.2L466 573.1L467 571.3L468 569.9L469 568.9L470 568.3L473 568.5L474 569.1L475 569.9L476 570.8L477 571.7L478 572.7L479 573.7L480 574.7L481 575.7L482 576.6L483 577.5L484 578.3L485 579.1L486 579.9L487 580.6L488 581.3L489 582.0L490 582.6L491 583.2L492 583.8L493 584.3L494 584.8L495 585.3L496 585.8L497 586.3L498 586.7L499 587.1L501 587.9L503 588.6L505 589.2L507 589.8L509 590.3L511 590.9L513 591.3L515 591.8L517 592.2L520 592.7L523 593.3L526 593.7L529 594.2L532 594.6L536 595.1L540 595.5L544 595.9L549 596.4L554 596.8L560 597.3L566 597.7L573 598.1L581 598.5L590 599.0L600 599.4L612 599.8L626 600.2L644 600.6L668 601.0L705 601.4L789 601.8L843 601.9" stroke="#00ff29"/><path d="M75 602.0L122 601.9L123 601.5L124 600.9L127 601.5L131 601.9L191 601.7L192 600.6L193 597.0L194 588.4L195 572.6L196 551.0L197 528.9L198 512.1L199 501.9L200 496.2L201 492.5L202 490.9L203 492.5L204 497.3L205 504.2L206 511.8L207 518.9L208 525.4L209 531.1L210 536.1L211 540.6L212 544.5L213 548.0L214 551.1L215 554.0L216 556.5L217 558.8L218 560.9L219 562.9L220 564.6L221 566.3L222 567.8L223 569.2L224 570.5L225 571.7L226 572.9L227 573.9L228 575.0L229 575.9L230 576.9L231 577.7L232 578.6L233 579.4L234 580.1L235 580.9L236 581.6L237 582.2L238 582.9L239 583.5L240 584.1L241 584.7L242 585.2L243 585.8L244 586.3L245 586.8L246 587.3L247 587.7L248 588.2L249 588.6L250 589.0L251 589.4L253 590.2L255 590.9L257 591.6L259 592.2L261 592.8L263 593.4L265 593.9L267 594.4L269 594.8L271 595.3L273 595.7L276 596.2L281 596.4L282 595.8L283 594.6L284 592.5L285 589.2L286 584.6L287 578.6L288 571.5L289 563.9L290 556.3L291 549.6L292 544.1L293 540.2L294 537.8L295 536.9L296 537.3L297 538.6L298 540.6L299 543.2L300 546.0L301 549.0L302 551.9L303 554.7L304 557.3L305 559.8L306 562.0L307 564.1L308 566.0L309 567.7L310 569.3L311 570.8L312 572.1L313 573.4L314 574.5L315 575.6L316 576.6L317 577.6L318 578.4L319 579.3L320 580.0L321 580.8L322 581.4L323 582.1L324 582.7L325 583.3L326 583.9L327 584.4L328 584.9L329 585.4L330 585.9L331 586.3L332 586.8L333 587.2L334 587.6L336 588.3L338 589.0L340 589.7L342 590.3L344 590.9L346 591.5L348 592.0L350 592.5L352 593.0L354 593.4L356 593.8L359 594.4L362 594.9L365 595.4L368 595.9L371 596.3L374 596.7L378 597.2L382 597.7L386 598.1L391 598.5L397 599.0L403 599.4L410 599.8L419 600.2L430 600.6L448 600.1L449 599.7L450 599.1L451 598.3L452 597.3L453 596.0L454 594.5L455 592.7L456 590.7L457 588.5L458 586.1L459 583.7L460 581.3L461 579.0L462 576.8L463 574.9L464 573.2L465 571.7L466 570.5L467 569.6L468 568.9L469 568.4L471 568.0L474 568.5L475 568.9L476 569.4L477 570.1L478 570.8L479 571.5L480 572.4L481 573.2L482 574.1L483 575.0L484 575.9L485 576.8L486 577.7L487 578.5L488 579.3L489 580.1L490 580.8L491 581.5L492 582.2L493 582.8L494 583.4L495 584.0L496 584.5L497 585.0L498 585.5L499 585.9L500 586.4L501 586.8L502 587.2L504 588.0L506 588.6L508 589.3L510 589.8L512 590.4L514 590.9L516 591.3L518 591.8L520 592.2L523 592.8L526 593.3L529 593.7L532 594.2L535 594.6L539 595.1L543 595.5L547 596.0L552 596.4L557 596.9L563 597.4L569 597.8L576 598.2L584 598.7L593 599.1L603 599.5L615 599.9L630 600.4L649 600.8L676 601.2L722 601.6L843 601.9" stroke="#00ff25"/><path d="M75 602.0L192 601.5L193 600.0L194 595.2L195 583.9L196 564.0L197 537.9L198 513.1L199 497.0L200 491.8L201 494.2L202 499.0L203 502.5L204 503.4L205 502.8L206 503.0L207 505.4L208 510.1L209 516.1L210 522.3L211 528.1L212 533.3L213 537.9L214 542.0L215 545.6L216 548.9L217 551.8L218 554.4L219 556.8L220 559.0L221 561.0L222 562.8L223 564.5L224 566.0L225 567.5L226 568.9L227 570.1L228 571.3L229 572.4L230 573.5L231 574.5L232 575.5L233 576.4L234 577.3L235 578.1L236 578.9L237 579.6L238 580.4L239 581.1L240 581.7L241 582.4L242 583.0L243 583.6L244 584.2L245 584.8L246 585.3L247 585.8L248 586.3L249 586.8L250 587.3L251 587.7L252 588.2L253 588.6L254 589.0L256 589.8L258 590.5L260 591.2L262 591.9L264 592.5L266 593.0L268 593.6L270 594.1L272 594.6L274 595.0L276 595.4L280 595.7L281 595.3L282 594.4L283 592.6L284 589.7L285 585.3L286 579.5L287 572.3L288 564.2L289 556.2L290 549.0L291 543.5L292 539.9L293 538.4L294 538.7L295 540.4L296 542.9L297 545.9L298 549.0L299 552.0L300 554.8L301 557.5L302 559.9L303 562.1L304 564.2L305 566.0L306 567.8L307 569.4L308 570.8L309 572.2L310 573.4L311 574.6L312 575.7L313 576.7L314 577.6L315 578.5L316 579.4L317 580.1L318 580.9L319 581.6L320 582.2L321 582.8L322 583.4L323 584.0L324 584.5L325 585.0L326 585.5L327 586.0L328 586.4L329 586.8L330 587.3L332 588.0L334 588.7L336 589.4L338 590.0L340 590.6L342 591.2L344 591.7L346 592.2L348 592.7L350 593.1L352 593.5L355 594.1L358 594.7L361 595.2L364 595.6L367 596.1L370 596.5L374 597.0L378 597.4L382 597.8L387 598.3L392 598.7L398 599.1L405 599.6L413 600.0L423 600.4L436 600.8L448 600.3L449 599.9L450 599.4L451 598.7L452 597.8L453 596.6L454 595.2L455 593.5L456 591.5L457 589.4L458 587.0L459 584.6L460 582.2L461 579.9L462 577.8L463 575.9L464 574.3L465 573.0L466 572.0L467 571.4L469 570.8L478 570.2L480 569.4L482 568.8L487 569.3L488 569.8L489 570.4L490 571.1L491 571.9L492 572.8L493 573.7L494 574.6L495 575.4L496 576.3L497 577.2L498 578.0L499 578.8L500 579.6L501 580.3L502 581.0L503 581.6L504 582.2L505 582.8L506 583.4L507 583.9L508 584.4L509 584.9L510 585.4L511 585.8L512 586.2L514 587.0L516 587.7L518 588.4L520 589.0L522 589.5L524 590.1L526 590.5L528 591.0L530 591.4L532 591.8L535 592.4L538 592.9L541 593.4L544 593.9L547 594.3L551 594.8L555 595.3L559 595.7L563 596.1L568 596.6L573 597.0L579 597.5L585 597.9L592 598.4L600 598.8L609 599.2L619 599.6L631 600.1L646 600.5L666 600.9L695 601.3L749 601.7L843 601.9" stroke="#00ff21"/><path d="M75 602.0L189 601.9L190 601.4L191 599.3L192 593.4L193 580.3L194 558.7L195 532.4L196 509.4L197 496.2L198 493.8L199 498.5L200 505.9L201 513.6L202 520.8L203 527.1L204 532.8L205 537.8L206 542.2L207 546.2L208 549.7L209 552.9L210 555.8L211 558.3L212 560.7L213 562.8L214 564.7L215 566.5L216 568.1L217 569.6L218 571.0L219 572.3L220 573.5L221 574.6L222 575.6L223 576.6L224 577.5L225 578.4L226 579.2L227 580.0L228 580.7L229 581.4L230 582.1L231 582.7L232 583.4L233 583.9L234 584.5L235 585.0L236 585.6L237 586.1L238 586.6L239 587.0L240 587.5L241 587.9L242 588.3L243 588.7L245 589.5L247 590.2L249 590.9L251 591.6L253 592.2L255 592.7L257 593.3L259 593.8L261 594.2L263 594.7L265 595.1L268 595.7L271 596.2L274 596.7L277 597.1L281 596.8L282 596.0L283 594.4L284 591.9L285 588.1L286 582.9L287 576.5L288 569.4L289 562.1L290 555.4L291 549.9L292 545.8L293 543.1L294 541.4L295 540.5L296 539.8L297 539.1L298 538.3L299 537.3L300 536.4L301 535.6L303 535.5L304 536.4L305 538.1L306 540.3L307 542.9L308 545.7L309 548.7L310 551.5L311 554.2L312 556.8L313 559.1L314 561.2L315 563.2L316 565.0L317 566.6L318 568.1L319 569.5L320 570.8L321 572.0L322 573.1L323 574.2L324 575.1L325 576.1L326 576.9L327 577.8L328 578.5L329 579.3L330 580.0L331 580.6L332 581.3L333 581.9L334 582.5L335 583.0L336 583.6L337 584.1L338 584.6L339 585.1L340 585.5L341 586.0L342 586.4L343 586.9L344 587.3L346 588.0L348 588.8L350 589.5L352 590.1L354 590.7L356 591.3L358 591.8L360 592.4L362 592.8L364 593.3L366 593.7L368 594.2L371 594.8L374 595.3L377 595.8L380 596.3L383 596.7L387 597.2L391 597.7L395 598.1L400 598.6L405 599.0L411 599.4L418 599.8L427 600.3L438 600.7L452 600.3L453 599.9L454 599.3L455 598.6L456 597.7L457 596.4L458 594.9L459 593.2L460 591.1L461 588.8L462 586.4L463 583.8L464 581.2L465 578.7L466 576.3L467 574.2L468 572.4L469 570.8L470 569.7L471 568.8L472 568.2L477 568.6L478 569.1L479 569.6L480 570.2L481 570.9L482 571.7L483 572.4L484 573.2L485 574.1L486 574.9L487 575.8L488 576.6L489 577.5L490 578.3L491 579.1L492 579.9L493 580.6L494 581.3L495 582.0L496 582.6L497 583.2L498 583.8L499 584.3L500 584.8L501 585.3L502 585.8L503 586.2L504 586.7L505 587.1L507 587.8L509 588.5L511 589.2L513 589.8L515 590.3L517 590.8L519 591.3L521 591.7L523 592.1L526 592.7L529 593.2L532 593.7L535 594.1L538 594.5L542 595.0L546 595.5L550 595.9L555 596.4L560 596.8L566 597.3L572 597.7L579 598.2L587 598.6L596 599.1L606 599.5L618 599.9L632 600.3L650 600.7L675 601.1L716 601.5L843 601.9" stroke="#00ff1d"/><path d="M75 602.0L192 601.7L193 600.6L194 597.3L195 589.5L196 575.6L197 557.2L198 538.6L199 523.7L200 513.3L201 506.2L202 502.0L203 501.4L204 504.6L205 510.5L206 517.6L207 524.5L208 530.8L209 536.4L210 541.3L211 545.6L212 549.4L213 552.7L214 555.7L215 558.4L216 560.8L217 563.0L218 565.0L219 566.8L220 568.4L221 570.0L222 571.4L223 572.7L224 573.9L225 575.0L226 576.1L227 577.1L228 578.0L229 578.9L230 579.7L231 580.5L232 581.3L233 582.0L234 582.7L235 583.4L236 584.0L237 584.6L238 585.2L239 585.7L240 586.3L241 586.8L242 587.3L243 587.8L244 588.2L245 588.7L246 589.1L247 589.5L248 589.9L250 590.7L252 591.4L254 592.1L256 592.7L258 593.3L260 593.8L262 594.3L264 594.8L266 595.2L268 595.7L271 596.2L274 596.8L279 596.9L280 596.2L281 594.9L282 592.5L283 588.7L284 583.2L285 576.1L286 567.6L287 558.4L288 549.6L289 542.1L290 536.6L291 533.4L292 532.5L293 533.5L294 535.8L295 538.8L296 542.2L297 545.6L298 548.9L299 552.0L300 554.8L301 557.4L302 559.8L303 561.9L304 563.9L305 565.8L306 567.5L307 569.0L308 570.4L309 571.8L310 573.0L311 574.2L312 575.2L313 576.2L314 577.2L315 578.0L316 578.9L317 579.6L318 580.4L319 581.1L320 581.7L321 582.3L322 582.9L323 583.5L324 584.0L325 584.5L326 585.0L327 585.5L328 586.0L329 586.4L330 586.8L331 587.2L333 588.0L335 588.7L337 589.3L339 590.0L341 590.6L343 591.1L345 591.6L347 592.1L349 592.6L351 593.0L353 593.5L355 593.9L358 594.4L361 594.9L364 595.4L367 595.9L370 596.3L374 596.8L378 597.3L382 597.7L387 598.2L392 598.6L398 599.1L405 599.5L413 599.9L423 600.4L435 600.8L458 600.1L459 599.6L460 598.8L461 597.9L462 596.6L463 595.2L464 593.4L465 591.3L466 589.0L467 586.6L468 584.0L469 581.4L470 578.9L471 576.6L472 574.5L473 572.6L474 571.1L475 569.9L476 569.0L477 568.4L479 567.8L486 568.2L489 568.6L492 569.3L494 570.0L495 570.5L496 571.0L497 571.6L498 572.3L499 573.0L500 573.8L501 574.6L502 575.4L503 576.2L504 577.0L505 577.8L506 578.6L507 579.3L508 580.0L509 580.7L510 581.4L511 582.0L512 582.6L513 583.2L514 583.7L515 584.2L516 584.7L517 585.2L518 585.6L519 586.1L520 586.5L522 587.2L524 587.9L526 588.6L528 589.1L530 589.7L532 590.2L534 590.7L536 591.1L538 591.6L541 592.2L544 592.7L547 593.2L550 593.7L553 594.1L556 594.5L560 595.0L564 595.5L568 595.9L573 596.4L578 596.8L583 597.2L589 597.7L595 598.1L602 598.5L610 598.9L619 599.3L630 599.8L643 600.2L659 600.6L681 601.0L714 601.4L787 601.8L843 601.9" stroke="#00ff18"/><path d="M75 602.0L122 601.8L123 601.2L124 600.6L125 600.7L126 601.1L128 601.6L191 601.8L192 601.2L193 598.8L194 592.3L195 578.9L196 558.2L197 534.1L198 513.0L199 498.8L200 491.0L201 487.3L202 486.3L203 488.0L204 492.7L205 499.6L206 507.4L207 514.9L208 521.8L209 528.0L210 533.3L211 538.1L212 542.3L213 546.0L214 549.3L215 552.3L216 555.0L217 557.4L218 559.7L219 561.7L220 563.5L221 565.2L222 566.8L223 568.3L224 569.7L225 571.0L226 572.2L227 573.3L228 574.4L229 575.4L230 576.4L231 577.3L232 578.1L233 579.0L234 579.8L235 580.5L236 581.3L237 582.0L238 582.6L239 583.3L240 583.9L241 584.5L242 585.1L243 585.6L244 586.1L245 586.7L246 587.2L247 587.6L248 588.1L249 588.6L250 589.0L251 589.4L252 589.8L254 590.6L256 591.3L258 592.0L260 592.6L262 593.2L264 593.7L266 594.2L268 594.7L270 595.2L272 595.6L275 596.2L280 596.2L281 595.5L282 593.9L283 591.3L284 587.2L285 581.5L286 574.3L287 565.9L288 557.2L289 549.2L290 542.7L291 538.2L292 536.0L293 535.9L294 537.3L295 539.8L296 542.9L297 546.2L298 549.4L299 552.4L300 555.3L301 557.9L302 560.3L303 562.5L304 564.5L305 566.3L306 568.0L307 569.6L308 571.0L309 572.4L310 573.6L311 574.8L312 575.8L313 576.8L314 577.8L315 578.6L316 579.4L317 580.2L318 580.9L319 581.6L320 582.3L321 582.9L322 583.5L323 584.0L324 584.6L325 585.1L326 585.5L327 586.0L328 586.4L329 586.9L330 587.3L332 588.1L334 588.8L336 589.4L338 590.1L340 590.7L342 591.2L344 591.7L346 592.2L348 592.7L350 593.1L352 593.6L355 594.2L358 594.7L361 595.2L364 595.7L367 596.1L370 596.5L374 597.0L378 597.5L382 597.9L387 598.3L392 598.8L398 599.2L405 599.6L413 600.0L423 600.4L436 600.9L446 600.4L447 600.0L448 599.5L449 598.8L450 597.8L451 596.6L452 595.1L453 593.3L454 591.1L455 588.8L456 586.2L457 583.5L458 580.8L459 578.1L460 575.6L461 573.4L462 571.6L463 570.1L464 569.1L465 568.5L468 568.8L469 569.4L470 570.2L471 571.1L472 572.1L473 573.1L474 574.1L475 575.1L476 576.1L477 577.0L478 577.9L479 578.7L480 579.6L481 580.3L482 581.1L483 581.8L484 582.4L485 583.0L486 583.6L487 584.2L488 584.7L489 585.2L490 585.7L491 586.2L492 586.6L493 587.1L494 587.5L496 588.2L498 588.9L500 589.5L502 590.1L504 590.7L506 591.2L508 591.6L510 592.1L512 592.5L515 593.0L518 593.5L521 594.0L524 594.4L528 594.9L532 595.4L536 595.8L541 596.3L546 596.8L552 597.2L558 597.7L565 598.1L573 598.6L582 599.0L592 599.4L604 599.8L618 600.3L636 600.7L660 601.1L698 601.5L793 601.9L843 601.9" stroke="#00ff14"/><path d="M75 602.0L188 601.6L189 600.1L190 595.2L191 583.7L192 563.3L193 536.7L194 511.5L195 495.7L196 491.4L197 495.3L198 502.8L199 510.8L200 518.3L201 525.0L202 530.9L203 536.2L204 540.8L205 544.9L206 548.6L207 551.9L208 554.9L209 557.5L210 560.0L211 562.1L212 564.1L213 566.0L214 567.6L215 569.2L216 570.6L217 571.9L218 573.1L219 574.2L220 575.3L221 576.3L222 577.2L223 578.1L224 579.0L225 579.8L226 580.5L227 581.2L228 581.9L229 582.6L230 583.2L231 583.8L232 584.4L233 584.9L234 585.5L235 586.0L236 586.5L237 587.0L238 587.4L239 587.9L240 588.3L241 588.7L242 589.1L244 589.9L246 590.6L248 591.3L250 591.9L252 592.5L254 593.0L256 593.6L258 594.1L260 594.5L262 595.0L264 595.4L267 595.9L270 596.5L273 596.9L277 597.0L278 596.6L279 595.6L280 593.8L281 590.7L282 586.1L283 579.9L284 572.2L285 563.6L286 555.0L287 547.3L288 541.3L289 537.6L290 536.1L291 536.5L292 538.3L293 541.1L294 544.3L295 547.5L296 550.7L297 553.7L298 556.5L299 559.0L300 561.3L301 563.5L302 565.4L303 567.2L304 568.8L305 570.3L306 571.7L307 573.0L308 574.2L309 575.3L310 576.4L311 577.3L312 578.2L313 579.1L314 579.9L315 580.6L316 581.3L317 582.0L318 582.6L319 583.2L320 583.8L321 584.3L322 584.9L323 585.3L324 585.8L325 586.3L326 586.7L327 587.1L328 587.5L330 588.3L332 589.0L334 589.6L336 590.3L338 590.8L340 591.4L342 591.9L344 592.4L346 592.8L348 593.3L350 593.7L353 594.3L356 594.8L359 595.3L362 595.8L365 596.2L368 596.6L372 597.1L376 597.6L380 598.0L385 598.4L390 598.8L396 599.2L403 599.7L411 600.1L421 600.5L434 600.9L457 600.4L458 599.9L459 599.3L460 598.4L461 597.2L462 595.8L463 594.0L464 591.9L465 589.5L466 586.8L467 584.0L468 581.1L469 578.2L470 575.5L471 573.0L472 570.8L473 569.1L474 567.8L475 566.9L476 566.5L478 566.8L479 567.3L480 568.1L481 569.0L482 570.0L483 571.1L484 572.1L485 573.2L486 574.3L487 575.3L488 576.2L489 577.2L490 578.0L491 578.9L492 579.7L493 580.4L494 581.1L495 581.8L496 582.4L497 583.1L498 583.6L499 584.2L500 584.7L501 585.2L502 585.7L503 586.1L504 586.6L505 587.0L507 587.8L509 588.5L511 589.1L513 589.7L515 590.3L517 590.8L519 591.3L521 591.7L523 592.1L526 592.7L529 593.2L532 593.7L535 594.1L538 594.6L542 595.1L546 595.5L550 595.9L555 596.4L560 596.8L566 597.3L572 597.7L579 598.1L587 598.6L596 599.0L606 599.4L618 599.9L632 600.3L650 600.7L675 601.1L714 601.5L819 601.9L843 601.9" stroke="#00ff0f"/><path d="M75 602.0L122 601.7L123 601.0L127 601.5L133 602.0L190 601.9L191 601.3L192 599.2L193 593.0L194 579.5L195 557.5L196 530.7L197 506.6L198 491.1L199 484.8L200 484.4L201 486.4L202 489.0L203 492.3L204 497.0L205 503.0L206 509.9L207 516.9L208 523.3L209 529.1L210 534.2L211 538.7L212 542.7L213 546.2L214 549.4L215 552.3L216 554.9L217 557.3L218 559.4L219 561.4L220 563.2L221 564.9L222 566.5L223 567.9L224 569.3L225 570.5L226 571.7L227 572.9L228 573.9L229 575.0L230 575.9L231 576.8L232 577.7L233 578.5L234 579.3L235 580.1L236 580.8L237 581.5L238 582.2L239 582.9L240 583.5L241 584.1L242 584.7L243 585.2L244 585.8L245 586.3L246 586.8L247 587.3L248 587.8L249 588.2L250 588.7L251 589.1L252 589.5L254 590.3L256 591.0L258 591.7L260 592.3L262 592.9L264 593.5L266 594.0L268 594.5L270 595.0L272 595.4L275 596.0L278 595.7L279 594.8L280 593.2L281 590.3L282 585.9L283 579.9L284 572.3L285 563.6L286 554.8L287 546.8L288 540.5L289 536.3L290 534.5L291 534.7L292 536.5L293 539.2L294 542.5L295 545.8L296 549.1L297 552.2L298 555.1L299 557.7L300 560.1L301 562.3L302 564.3L303 566.2L304 567.9L305 569.4L306 570.9L307 572.2L308 573.4L309 574.6L310 575.7L311 576.7L312 577.6L313 578.5L314 579.3L315 580.1L316 580.8L317 581.5L318 582.1L319 582.8L320 583.3L321 583.9L322 584.4L323 584.9L324 585.4L325 585.9L326 586.3L327 586.8L328 587.2L330 588.0L332 588.7L334 589.4L336 590.0L338 590.6L340 591.2L342 591.7L344 592.2L346 592.7L348 593.1L350 593.6L352 594.0L355 594.5L358 595.1L361 595.5L364 596.0L367 596.4L371 596.9L375 597.4L379 597.8L384 598.3L389 598.7L395 599.2L402 599.6L410 600.0L420 600.4L433 600.9L452 601.3L460 600.7L461 600.3L462 599.8L463 599.1L464 598.2L465 597.0L466 595.5L467 593.6L468 591.5L469 589.1L470 586.5L471 583.8L472 581.0L473 578.3L474 575.7L475 573.5L476 571.5L477 570.0L478 568.8L479 568.0L480 567.5L485 568.0L487 568.5L496 569.1L497 569.4L498 569.8L499 570.4L500 571.0L501 571.7L502 572.5L503 573.3L504 574.1L505 575.0L506 575.8L507 576.7L508 577.5L509 578.3L510 579.0L511 579.8L512 580.5L513 581.2L514 581.8L515 582.4L516 583.0L517 583.5L518 584.0L519 584.5L520 585.0L521 585.4L522 585.9L523 586.3L525 587.1L527 587.8L529 588.4L531 589.0L533 589.6L535 590.1L537 590.6L539 591.0L541 591.4L543 591.9L546 592.4L549 592.9L552 593.4L555 593.9L558 594.3L562 594.8L566 595.3L570 595.7L574 596.1L579 596.6L584 597.0L590 597.5L596 597.9L603 598.4L611 598.8L620 599.2L630 599.6L642 600.1L657 600.5L677 600.9L706 601.3L760 601.7L843 601.9" stroke="#00ff0b"/><path d="M75 602.0L190 601.8L191 600.8L192 597.6L193 589.0L194 572.2L195 547.8L196 522.2L197 503.8L198 496.6L199 498.5L200 505.1L201 512.9L202 520.3L203 527.0L204 532.9L205 538.0L206 542.7L207 546.7L208 550.4L209 553.6L210 556.5L211 559.2L212 561.5L213 563.7L214 565.6L215 567.4L216 569.0L217 570.5L218 571.9L219 573.1L220 574.3L221 575.4L222 576.5L223 577.4L224 578.3L225 579.2L226 580.0L227 580.8L228 581.5L229 582.2L230 582.9L231 583.5L232 584.1L233 584.7L234 585.2L235 585.8L236 586.3L237 586.8L238 587.3L239 587.7L240 588.2L241 588.6L242 589.0L244 589.8L246 590.5L248 591.2L250 591.8L252 592.4L254 593.0L256 593.5L258 594.0L260 594.5L262 594.9L264 595.4L267 595.9L270 596.5L273 596.9L277 597.4L279 597.1L280 596.4L281 595.0L282 592.7L283 589.1L284 583.9L285 577.2L286 569.4L287 561.1L288 553.0L289 545.8L290 540.3L291 536.6L292 534.8L293 534.7L294 535.9L295 538.1L296 541.0L297 544.1L298 547.4L299 550.6L300 553.6L301 556.4L302 559.0L303 561.4L304 563.6L305 565.5L306 567.3L307 569.0L308 570.5L309 571.9L310 573.2L311 574.4L312 575.5L313 576.5L314 577.5L315 578.4L316 579.2L317 580.0L318 580.8L319 581.5L320 582.1L321 582.8L322 583.4L323 583.9L324 584.5L325 585.0L326 585.5L327 586.0L328 586.4L329 586.9L330 587.3L331 587.7L333 588.5L335 589.2L337 589.9L339 590.5L341 591.1L343 591.7L345 592.2L347 592.7L349 593.2L351 593.6L353 594.0L356 594.6L359 595.2L362 595.7L365 596.1L368 596.6L372 597.1L376 597.6L380 598.0L385 598.5L390 598.9L396 599.3L403 599.7L411 600.2L421 600.6L435 601.0L463 600.7L464 600.2L465 599.7L466 598.9L467 597.8L468 596.5L469 594.8L470 592.9L471 590.7L472 588.2L473 585.6L474 582.8L475 580.1L476 577.6L477 575.2L478 573.2L479 571.5L480 570.3L481 569.4L482 569.0L484 569.3L485 569.8L486 570.5L487 571.4L488 572.3L489 573.3L490 574.3L491 575.3L492 576.3L493 577.2L494 578.1L495 579.0L496 579.8L497 580.6L498 581.3L499 582.0L500 582.7L501 583.3L502 583.9L503 584.5L504 585.0L505 585.6L506 586.0L507 586.5L508 587.0L509 587.4L510 587.8L512 588.5L514 589.2L516 589.8L518 590.4L520 591.0L522 591.5L524 591.9L526 592.3L529 592.9L532 593.5L535 593.9L538 594.4L541 594.8L545 595.3L549 595.7L553 596.1L558 596.6L563 597.0L569 597.5L575 597.9L582 598.3L590 598.7L599 599.2L609 599.6L621 600.0L636 600.4L655 600.8L682 601.2L728 601.6L843 601.9" stroke="#00ff06"/><path d="M75 602.0L191 601.6L192 600.0L193 595.1L194 583.3L195 562.5L196 535.6L197 511.0L198 496.2L199 492.7L200 496.6L201 502.7L202 506.7L203 506.7L204 502.8L205 497.6L206 494.5L207 495.6L208 500.4L209 507.2L210 514.3L211 521.0L212 526.9L213 532.1L214 536.8L215 540.9L216 544.5L217 547.8L218 550.7L219 553.3L220 555.8L221 557.9L222 560.0L223 561.8L224 563.5L225 565.1L226 566.6L227 568.0L228 569.3L229 570.6L230 571.7L231 572.8L232 573.9L233 574.9L234 575.8L235 576.7L236 577.6L237 578.5L238 579.3L239 580.0L240 580.8L241 581.5L242 582.1L243 582.8L244 583.4L245 584.0L246 584.6L247 585.2L248 585.8L249 586.3L250 586.8L251 587.3L252 587.8L253 588.2L254 588.7L255 589.1L256 589.5L257 589.9L259 590.7L261 591.4L263 592.1L265 592.7L267 593.3L269 593.8L271 594.3L273 594.8L275 595.3L277 595.7L280 596.2L282 596.0L283 595.5L284 594.3L285 592.1L286 588.6L287 583.5L288 576.8L289 569.0L290 560.7L291 552.7L292 545.9L293 540.9L294 537.6L295 535.9L296 535.2L299 534.8L302 534.9L303 535.8L304 537.4L305 539.6L306 542.2L307 545.1L308 548.0L309 550.9L310 553.7L311 556.3L312 558.7L313 560.9L314 562.8L315 564.7L316 566.4L317 567.9L318 569.3L319 570.6L320 571.9L321 573.0L322 574.1L323 575.1L324 576.0L325 576.9L326 577.7L327 578.5L328 579.3L329 580.0L330 580.7L331 581.3L332 581.9L333 582.5L334 583.1L335 583.6L336 584.1L337 584.6L338 585.1L339 585.6L340 586.1L341 586.5L342 586.9L343 587.3L345 588.1L347 588.8L349 589.5L351 590.2L353 590.8L355 591.4L357 591.9L359 592.4L361 592.9L363 593.4L365 593.8L367 594.2L370 594.8L373 595.3L376 595.8L379 596.3L382 596.7L386 597.2L390 597.7L394 598.1L399 598.6L404 599.0L410 599.4L417 599.9L426 600.3L437 600.7L446 600.2L447 599.7L448 599.2L449 598.4L450 597.4L451 596.1L452 594.4L453 592.5L454 590.3L455 587.9L456 585.2L457 582.5L458 579.9L459 577.3L460 575.0L461 573.0L462 571.3L463 570.1L464 569.3L466 568.9L467 569.2L468 569.8L469 570.5L470 571.4L471 572.3L472 573.3L473 574.4L474 575.4L475 576.3L476 577.3L477 578.2L478 579.1L479 579.9L480 580.7L481 581.4L482 582.1L483 582.8L484 583.4L485 584.0L486 584.5L487 585.1L488 585.6L489 586.1L490 586.5L491 587.0L492 587.4L493 587.8L495 588.6L497 589.2L499 589.9L501 590.5L503 591.0L505 591.5L507 591.9L509 592.4L512 593.0L515 593.5L518 594.0L521 594.4L524 594.8L528 595.3L532 595.8L536 596.2L541 596.6L546 597.1L552 597.5L558 597.9L565 598.4L573 598.8L582 599.2L592 599.6L604 600.0L619 600.4L639 600.8L667 601.2L716 601.6L843 601.9" stroke="#00ff02"/><path d="M75 602.0L192 601.8L193 600.9L194 598.1L195 591.2L196 578.3L197 560.0L198 540.0L199 522.2L200 508.6L201 500.0L202 496.9L203 499.1L204 505.0L205 512.6L206 520.2L207 527.2L208 533.3L209 538.7L210 543.4L211 547.6L212 551.2L213 554.5L214 557.4L215 560.0L216 562.3L217 564.4L218 566.3L219 568.0L220 569.6L221 571.1L222 572.5L223 573.7L224 574.9L225 576.0L226 577.0L227 578.0L228 578.9L229 579.8L230 580.6L231 581.4L232 582.1L233 582.8L234 583.5L235 584.2L236 584.8L237 585.4L238 585.9L239 586.5L240 587.0L241 587.5L242 588.0L243 588.5L244 588.9L245 589.4L246 589.8L247 590.2L249 591.0L251 591.7L253 592.4L255 593.0L257 593.6L259 594.1L261 594.6L263 595.1L265 595.5L267 596.0L270 596.5L273 597.0L277 597.2L278 596.8L279 595.7L280 593.8L281 590.6L282 585.8L283 579.3L284 571.3L285 562.5L286 553.7L287 546.1L288 540.2L289 536.6L290 535.1L291 535.2L292 536.4L293 538.0L294 539.5L295 540.8L296 541.7L297 542.4L298 543.2L299 544.1L300 545.5L301 547.2L302 549.3L303 551.6L304 554.1L305 556.5L306 558.8L307 561.0L308 563.1L309 565.0L310 566.7L311 568.3L312 569.8L313 571.1L314 572.4L315 573.5L316 574.6L317 575.6L318 576.6L319 577.5L320 578.3L321 579.1L322 579.8L323 580.5L324 581.2L325 581.8L326 582.4L327 583.0L328 583.6L329 584.1L330 584.6L331 585.1L332 585.6L333 586.0L334 586.5L335 586.9L336 587.3L338 588.1L340 588.8L342 589.5L344 590.1L346 590.8L348 591.3L350 591.9L352 592.4L354 592.9L356 593.3L358 593.8L360 594.2L363 594.8L366 595.3L369 595.8L372 596.2L375 596.7L379 597.2L383 597.7L387 598.1L392 598.5L397 599.0L403 599.4L410 599.8L418 600.2L429 600.6L451 600.0L452 599.5L453 598.7L454 597.6L455 596.3L456 594.7L457 592.7L458 590.4L459 587.9L460 585.1L461 582.3L462 579.4L463 576.7L464 574.1L465 571.9L466 570.1L467 568.8L468 567.9L469 567.4L471 567.6L472 568.1L473 568.9L474 569.8L475 570.8L476 571.8L477 572.9L478 573.9L479 575.0L480 576.0L481 576.9L482 577.9L483 578.7L484 579.6L485 580.3L486 581.1L487 581.8L488 582.4L489 583.1L490 583.7L491 584.2L492 584.8L493 585.3L494 585.8L495 586.3L496 586.7L497 587.1L498 587.5L500 588.3L502 589.0L504 589.6L506 590.2L508 590.7L510 591.2L512 591.7L514 592.1L516 592.5L519 593.1L522 593.6L525 594.1L528 594.5L532 595.0L536 595.5L540 595.9L545 596.4L550 596.8L555 597.2L561 597.7L568 598.1L575 598.5L583 598.9L593 599.4L604 599.8L617 600.2L634 600.6L657 601.0L692 601.4L771 601.8L843 601.9" stroke="#02ff00"/><path d="M75 602.0L188 601.7L189 600.7L190 596.8L191 586.8L192 567.4L193 540.1L194 512.3L195 493.2L196 486.7L197 489.9L198 497.5L199 506.2L200 514.3L201 521.5L202 527.9L203 533.5L204 538.4L205 542.8L206 546.7L207 550.2L208 553.3L209 556.2L210 558.7L211 561.0L212 563.1L213 565.0L214 566.7L215 568.3L216 569.8L217 571.1L218 572.4L219 573.6L220 574.7L221 575.7L222 576.7L223 577.6L224 578.5L225 579.3L226 580.1L227 580.9L228 581.6L229 582.3L230 582.9L231 583.5L232 584.1L233 584.7L234 585.3L235 585.8L236 586.3L237 586.8L238 587.3L239 587.7L240 588.2L241 588.6L242 589.0L243 589.4L245 590.2L247 590.9L249 591.6L251 592.2L253 592.8L255 593.3L257 593.9L259 594.4L261 594.8L263 595.2L265 595.6L268 596.2L271 596.7L274 597.2L277 597.6L281 597.6L282 597.0L283 595.8L284 593.7L285 590.2L286 585.2L287 578.4L288 570.3L289 561.5L290 552.8L291 545.0L292 538.9L293 534.7L294 532.4L295 531.7L296 532.2L297 533.6L298 535.7L299 538.2L300 541.1L301 544.2L302 547.3L303 550.3L304 553.2L305 556.0L306 558.5L307 560.8L308 563.0L309 564.9L310 566.7L311 568.3L312 569.8L313 571.2L314 572.5L315 573.7L316 574.8L317 575.8L318 576.8L319 577.7L320 578.5L321 579.3L322 580.1L323 580.8L324 581.4L325 582.1L326 582.7L327 583.3L328 583.8L329 584.4L330 584.9L331 585.4L332 585.8L333 586.3L334 586.7L335 587.1L336 587.5L338 588.3L340 589.0L342 589.7L344 590.3L346 590.9L348 591.5L350 592.0L352 592.5L354 593.0L356 593.5L358 593.9L360 594.3L363 594.9L366 595.4L369 595.9L372 596.3L375 596.8L379 597.3L383 597.7L387 598.1L392 598.6L397 599.0L403 599.4L410 599.8L419 600.3L430 600.7L443 600.2L444 599.8L445 599.3L446 598.4L447 597.4L448 596.0L449 594.3L450 592.3L451 590.0L452 587.4L453 584.6L454 581.7L455 578.8L456 576.0L457 573.5L458 571.3L459 569.5L460 568.2L461 567.4L462 566.9L464 567.2L465 567.8L466 568.6L467 569.5L468 570.5L469 571.6L470 572.7L471 573.8L472 574.8L473 575.8L474 576.8L475 577.7L476 578.6L477 579.4L478 580.2L479 581.0L480 581.7L481 582.3L482 583.0L483 583.6L484 584.2L485 584.7L486 585.2L487 585.7L488 586.2L489 586.6L490 587.1L491 587.5L493 588.2L495 588.9L497 589.6L499 590.1L501 590.7L503 591.2L505 591.7L507 592.1L509 592.5L512 593.1L515 593.6L518 594.0L521 594.5L525 595.0L529 595.5L533 595.9L538 596.4L543 596.8L548 597.2L554 597.7L561 598.1L568 598.5L576 598.9L585 599.3L596 599.8L609 600.2L625 600.6L647 601.0L680 601.4L750 601.8L843 602.0" stroke="#07ff00"/><path d="M75 602.0L190 601.7L191 600.6L192 596.8L193 586.9L194 567.8L195 541.0L196 514.1L197 496.0L198 490.2L199 493.6L200 501.2L201 509.6L202 517.4L203 524.4L204 530.6L205 536.0L206 540.8L207 545.0L208 548.8L209 552.1L210 555.1L211 557.8L212 560.3L213 562.5L214 564.5L215 566.3L216 568.0L217 569.5L218 571.0L219 572.3L220 573.5L221 574.7L222 575.7L223 576.7L224 577.7L225 578.5L226 579.4L227 580.2L228 580.9L229 581.7L230 582.4L231 583.0L232 583.6L233 584.2L234 584.8L235 585.4L236 585.9L237 586.4L238 586.9L239 587.4L240 587.9L241 588.3L242 588.7L243 589.1L244 589.5L246 590.3L248 591.0L250 591.7L252 592.3L254 592.9L256 593.5L258 594.0L260 594.5L262 594.9L264 595.3L266 595.7L269 596.3L272 596.8L275 597.3L279 597.7L281 597.3L282 596.7L283 595.3L284 593.0L285 589.5L286 584.6L287 578.4L288 571.2L289 563.5L290 555.8L291 548.9L292 543.0L293 538.3L294 535.1L295 533.2L296 532.6L297 533.2L298 534.9L299 537.4L300 540.4L301 543.7L302 547.1L303 550.4L304 553.4L305 556.3L306 558.9L307 561.3L308 563.5L309 565.4L310 567.2L311 568.9L312 570.4L313 571.8L314 573.1L315 574.2L316 575.4L317 576.4L318 577.3L319 578.2L320 579.1L321 579.9L322 580.6L323 581.3L324 582.0L325 582.6L326 583.2L327 583.8L328 584.4L329 584.9L330 585.4L331 585.9L332 586.4L333 586.8L334 587.3L335 587.7L336 588.1L338 588.8L340 589.6L342 590.2L344 590.9L346 591.5L348 592.0L350 592.5L352 593.0L354 593.5L356 594.0L358 594.4L361 595.0L364 595.5L367 596.0L370 596.5L373 596.9L377 597.4L381 597.9L385 598.3L390 598.7L395 599.1L401 599.6L408 600.0L417 600.4L428 600.8L446 600.5L447 600.1L448 599.5L449 598.7L450 597.6L451 596.3L452 594.6L453 592.5L454 590.2L455 587.5L456 584.7L457 581.7L458 578.7L459 575.9L460 573.3L461 571.0L462 569.1L463 567.6L464 566.6L465 566.1L468 566.4L469 566.9L470 567.6L471 568.2L472 568.9L473 569.6L474 570.2L475 570.7L476 571.2L477 571.7L478 572.2L479 572.7L480 573.2L481 573.7L482 574.3L483 574.9L484 575.5L485 576.2L486 576.9L487 577.6L488 578.3L489 579.1L490 579.8L491 580.5L492 581.2L493 581.8L494 582.4L495 583.0L496 583.6L497 584.1L498 584.7L499 585.2L500 585.6L501 586.1L502 586.5L503 586.9L505 587.7L507 588.4L509 589.0L511 589.6L513 590.2L515 590.7L517 591.1L519 591.6L521 592.0L524 592.6L527 593.1L530 593.6L533 594.0L536 594.5L540 595.0L544 595.4L548 595.9L552 596.3L557 596.7L562 597.2L568 597.6L574 598.0L581 598.5L589 598.9L598 599.3L608 599.7L620 600.1L635 600.5L655 600.9L684 601.3L740 601.7L843 601.9" stroke="#0cff00"/><path d="M75 602.0L188 601.9L189 601.4L190 599.3L191 593.1L192 579.0L193 555.8L194 527.4L195 502.2L196 486.7L197 481.8L198 484.3L199 490.9L200 499.1L201 507.6L202 515.4L203 522.5L204 528.7L205 534.2L206 539.0L207 543.2L208 547.0L209 550.4L210 553.4L211 556.2L212 558.6L213 560.8L214 562.9L215 564.7L216 566.4L217 568.0L218 569.5L219 570.8L220 572.1L221 573.3L222 574.4L223 575.4L224 576.4L225 577.3L226 578.2L227 579.1L228 579.9L229 580.6L230 581.4L231 582.1L232 582.8L233 583.4L234 584.0L235 584.6L236 585.2L237 585.7L238 586.3L239 586.8L240 587.3L241 587.7L242 588.2L243 588.7L244 589.1L245 589.5L246 589.9L248 590.7L250 591.4L252 592.0L254 592.7L256 593.2L258 593.8L260 594.3L262 594.8L264 595.2L266 595.7L269 596.2L272 596.8L275 597.2L278 597.3L279 596.9L280 595.9L281 594.2L282 591.3L283 587.0L284 581.2L285 574.0L286 566.0L287 557.9L288 550.4L289 544.1L290 539.3L291 536.0L292 534.2L293 533.6L294 534.0L295 535.2L296 537.2L297 539.7L298 542.5L299 545.6L300 548.8L301 551.8L302 554.7L303 557.4L304 559.9L305 562.2L306 564.2L307 566.1L308 567.8L309 569.4L310 570.9L311 572.2L312 573.5L313 574.6L314 575.7L315 576.7L316 577.6L317 578.5L318 579.3L319 580.1L320 580.8L321 581.5L322 582.2L323 582.8L324 583.4L325 583.9L326 584.5L327 585.0L328 585.5L329 586.0L330 586.4L331 586.9L332 587.3L333 587.7L335 588.5L337 589.2L339 589.9L341 590.6L343 591.2L345 591.7L347 592.3L349 592.8L351 593.3L353 593.7L355 594.1L357 594.5L360 595.1L363 595.6L366 596.1L369 596.6L372 597.0L376 597.5L380 597.9L384 598.3L389 598.8L395 599.2L402 599.7L410 600.1L420 600.6L433 601.0L446 600.5L447 600.2L448 599.6L449 598.9L450 598.0L451 596.8L452 595.3L453 593.5L454 591.5L455 589.2L456 586.8L457 584.2L458 581.6L459 579.2L460 576.8L461 574.7L462 572.9L463 571.4L464 570.2L465 569.4L466 568.9L470 569.2L471 569.7L472 570.3L473 571.0L474 571.8L475 572.5L476 573.2L477 573.9L478 574.5L479 574.9L481 575.5L486 575.1L488 574.6L494 575.1L495 575.6L496 576.2L497 576.8L498 577.5L499 578.2L500 578.9L501 579.6L502 580.3L503 581.0L504 581.7L505 582.3L506 583.0L507 583.5L508 584.1L509 584.6L510 585.1L511 585.6L512 586.1L513 586.5L514 586.9L516 587.7L518 588.4L520 589.0L522 589.6L524 590.2L526 590.7L528 591.2L530 591.6L532 592.1L535 592.6L538 593.2L541 593.7L544 594.1L547 594.6L551 595.1L555 595.6L559 596.0L563 596.4L568 596.9L573 597.3L579 597.8L585 598.2L592 598.6L600 599.1L609 599.5L620 599.9L633 600.3L650 600.7L673 601.1L711 601.6L843 601.9" stroke="#12ff00"/><path d="M75 602.0L191 601.6L192 600.2L193 595.5L194 583.8L195 562.6L196 534.7L197 508.8L198 493.3L199 490.1L200 495.0L201 503.2L202 511.6L203 519.3L204 526.2L205 532.2L206 537.4L207 542.1L208 546.2L209 549.9L210 553.2L211 556.1L212 558.7L213 561.1L214 563.3L215 565.2L216 567.0L217 568.6L218 570.1L219 571.5L220 572.8L221 574.0L222 575.1L223 576.2L224 577.2L225 578.1L226 579.0L227 579.8L228 580.6L229 581.3L230 582.0L231 582.7L232 583.4L233 584.0L234 584.6L235 585.2L236 585.7L237 586.2L238 586.7L239 587.2L240 587.7L241 588.2L242 588.6L243 589.0L244 589.4L246 590.2L248 590.9L250 591.6L252 592.3L254 592.9L256 593.4L258 593.9L260 594.4L262 594.9L264 595.3L266 595.7L269 596.3L272 596.8L275 597.2L278 597.0L279 596.4L280 595.0L281 592.6L282 588.7L283 583.2L284 576.1L285 567.9L286 559.4L287 551.6L288 545.4L289 541.3L290 539.5L291 539.7L292 541.5L293 544.1L294 547.3L295 550.5L296 553.7L297 556.6L298 559.3L299 561.8L300 564.0L301 566.1L302 567.9L303 569.6L304 571.2L305 572.7L306 574.0L307 575.2L308 576.3L309 577.4L310 578.4L311 579.3L312 580.1L313 580.9L314 581.7L315 582.4L316 583.0L317 583.7L318 584.2L319 584.8L320 585.3L321 585.8L322 586.3L323 586.8L324 587.2L325 587.7L326 588.1L328 588.8L330 589.5L332 590.2L334 590.8L336 591.4L338 591.9L340 592.5L342 592.9L344 593.4L346 593.8L348 594.2L351 594.8L354 595.3L357 595.8L360 596.3L363 596.7L367 597.2L371 597.7L375 598.1L380 598.5L385 598.9L391 599.4L398 599.8L406 600.2L417 600.6L431 601.0L448 600.5L449 600.1L450 599.5L451 598.7L452 597.6L453 596.2L454 594.5L455 592.4L456 590.1L457 587.5L458 584.7L459 581.8L460 579.0L461 576.3L462 573.9L463 571.9L464 570.2L465 569.0L466 568.3L469 568.4L470 569.1L471 569.9L472 570.9L473 571.9L474 573.0L475 574.0L476 575.1L477 576.1L478 577.1L479 578.0L480 578.9L481 579.8L482 580.6L483 581.3L484 582.0L485 582.7L486 583.3L487 584.0L488 584.5L489 585.1L490 585.6L491 586.1L492 586.6L493 587.0L494 587.4L495 587.8L497 588.6L499 589.3L501 589.9L503 590.5L505 591.0L507 591.5L509 592.0L511 592.4L514 593.0L517 593.5L520 594.0L523 594.5L526 594.9L530 595.4L534 595.8L538 596.2L543 596.7L548 597.1L554 597.6L560 598.0L567 598.4L575 598.9L584 599.3L595 599.7L608 600.1L624 600.6L645 601.0L676 601.4L739 601.8L843 602.0" stroke="#17ff00"/><path d="M75 602.0L124 601.6L131 602.0L188 601.9L189 601.3L190 599.1L191 592.6L192 578.8L193 557.6L194 533.9L195 515.4L196 506.2L197 503.4L198 501.4L199 497.1L200 491.5L201 487.7L202 488.3L203 493.2L204 500.6L205 508.7L206 516.3L207 523.0L208 529.0L209 534.2L210 538.8L211 542.9L212 546.5L213 549.7L214 552.6L215 555.3L216 557.6L217 559.8L218 561.8L219 563.6L220 565.3L221 566.9L222 568.3L223 569.7L224 571.0L225 572.2L226 573.3L227 574.4L228 575.4L229 576.4L230 577.3L231 578.2L232 579.1L233 579.9L234 580.6L235 581.4L236 582.1L237 582.8L238 583.4L239 584.1L240 584.7L241 585.3L242 585.8L243 586.4L244 586.9L245 587.4L246 587.9L247 588.4L248 588.8L249 589.3L250 589.7L251 590.1L253 590.9L255 591.6L257 592.3L259 592.9L261 593.5L263 594.1L265 594.6L267 595.1L269 595.5L271 596.0L274 596.5L278 596.7L279 596.2L280 595.0L281 592.9L282 589.3L283 583.9L284 576.7L285 568.0L286 558.6L287 549.5L288 541.9L289 536.4L290 533.5L291 533.0L292 534.4L293 537.1L294 540.5L295 544.0L296 547.6L297 550.9L298 554.0L299 556.8L300 559.4L301 561.8L302 563.9L303 565.8L304 567.6L305 569.3L306 570.8L307 572.2L308 573.4L309 574.6L310 575.7L311 576.8L312 577.7L313 578.6L314 579.5L315 580.3L316 581.0L317 581.7L318 582.4L319 583.0L320 583.6L321 584.2L322 584.7L323 585.2L324 585.7L325 586.2L326 586.6L327 587.1L328 587.5L329 587.9L331 588.7L333 589.4L335 590.0L337 590.7L339 591.2L341 591.8L343 592.3L345 592.8L347 593.3L349 593.7L351 594.1L354 594.7L357 595.2L360 595.7L363 596.2L366 596.6L370 597.1L374 597.6L378 598.0L383 598.5L388 598.9L394 599.3L401 599.8L409 600.2L419 600.6L433 601.0L447 600.5L448 600.2L449 599.6L450 598.9L451 598.0L452 596.8L453 595.4L454 593.6L455 591.7L456 589.5L457 587.2L458 584.7L459 582.3L460 579.9L461 577.7L462 575.6L463 573.8L464 572.2L465 570.8L466 569.7L467 568.8L468 568.1L469 567.5L470 567.1L472 566.6L480 566.9L481 567.3L482 567.9L483 568.5L484 569.2L485 570.0L486 570.8L487 571.8L488 572.7L489 573.7L490 574.6L491 575.5L492 576.5L493 577.3L494 578.2L495 579.0L496 579.8L497 580.5L498 581.2L499 581.9L500 582.5L501 583.1L502 583.6L503 584.2L504 584.7L505 585.2L506 585.6L507 586.1L508 586.5L509 586.9L511 587.6L513 588.3L515 589.0L517 589.6L519 590.1L521 590.6L523 591.1L525 591.5L527 592.0L530 592.6L533 593.1L536 593.6L539 594.1L542 594.5L545 594.9L549 595.4L553 595.9L557 596.3L562 596.8L567 597.2L572 597.6L578 598.1L585 598.5L592 598.9L600 599.3L610 599.7L622 600.2L637 600.6L657 601.0L687 601.4L751 601.8L843 602.0" stroke="#1cff00"/><path d="M75 602.0L189 601.9L190 601.3L191 598.9L192 592.4L193 578.9L194 558.8L195 537.1L196 521.2L197 513.7L198 511.4L199 508.7L200 502.3L201 493.1L202 485.2L203 482.1L204 484.7L205 491.4L206 499.8L207 508.3L208 516.0L209 522.7L210 528.7L211 533.9L212 538.4L213 542.5L214 546.1L215 549.3L216 552.2L217 554.8L218 557.2L219 559.4L220 561.4L221 563.2L222 564.9L223 566.5L224 567.9L225 569.3L226 570.6L227 571.9L228 573.0L229 574.1L230 575.1L231 576.1L232 577.1L233 578.0L234 578.8L235 579.7L236 580.5L237 581.2L238 582.0L239 582.7L240 583.3L241 584.0L242 584.6L243 585.2L244 585.8L245 586.3L246 586.9L247 587.4L248 587.9L249 588.4L250 588.8L251 589.3L252 589.7L253 590.1L254 590.5L256 591.3L258 592.0L260 592.7L262 593.3L264 593.9L266 594.4L268 594.9L270 595.4L272 595.8L275 596.4L278 596.2L279 595.5L280 593.9L281 591.0L282 586.5L283 580.0L284 571.7L285 562.1L286 552.2L287 543.1L288 535.9L289 531.3L290 529.4L291 529.7L292 531.7L293 534.7L294 538.0L295 541.1L296 543.7L297 545.6L298 546.8L299 547.4L302 547.6L303 548.0L304 548.9L305 550.2L306 552.0L307 554.0L308 556.2L309 558.4L310 560.6L311 562.6L312 564.5L313 566.3L314 567.9L315 569.4L316 570.8L317 572.0L318 573.2L319 574.3L320 575.3L321 576.3L322 577.2L323 578.0L324 578.8L325 579.6L326 580.3L327 581.0L328 581.6L329 582.2L330 582.8L331 583.4L332 583.9L333 584.5L334 585.0L335 585.5L336 585.9L337 586.4L338 586.8L339 587.2L340 587.6L342 588.4L344 589.1L346 589.8L348 590.5L350 591.1L352 591.6L354 592.2L356 592.7L358 593.2L360 593.6L362 594.1L364 594.5L367 595.0L370 595.6L373 596.1L376 596.5L379 596.9L383 597.4L387 597.9L391 598.3L396 598.8L402 599.2L408 599.6L416 600.1L425 600.5L441 600.2L442 599.8L443 599.2L444 598.4L445 597.3L446 595.9L447 594.1L448 592.0L449 589.6L450 586.8L451 583.9L452 580.8L453 577.8L454 574.9L455 572.3L456 570.1L457 568.2L458 566.9L459 566.1L462 566.2L463 566.8L464 567.7L465 568.7L466 569.9L467 571.0L468 572.2L469 573.3L470 574.4L471 575.4L472 576.5L473 577.4L474 578.3L475 579.2L476 580.0L477 580.7L478 581.5L479 582.2L480 582.8L481 583.4L482 584.0L483 584.6L484 585.1L485 585.6L486 586.1L487 586.5L488 587.0L489 587.4L491 588.1L493 588.9L495 589.5L497 590.1L499 590.6L501 591.2L503 591.6L505 592.1L507 592.5L510 593.0L513 593.6L516 594.0L519 594.5L522 594.9L526 595.4L530 595.8L534 596.2L539 596.7L544 597.1L550 597.6L556 598.0L563 598.4L571 598.9L580 599.3L590 599.7L602 600.1L617 600.5L637 600.9L666 601.3L722 601.7L843 602.0" stroke="#22ff00"/><path d="M75 602.0L190 601.9L191 601.4L192 599.3L193 592.8L194 577.9L195 553.1L196 523.3L197 498.9L198 486.9L199 487.0L200 493.8L201 502.7L202 511.4L203 519.2L204 526.0L205 532.0L206 537.3L207 542.0L208 546.1L209 549.7L210 553.0L211 555.9L212 558.5L213 560.9L214 563.1L215 565.0L216 566.8L217 568.4L218 569.9L219 571.3L220 572.6L221 573.8L222 574.9L223 576.0L224 577.0L225 577.9L226 578.8L227 579.6L228 580.4L229 581.2L230 581.9L231 582.6L232 583.3L233 583.9L234 584.5L235 585.1L236 585.6L237 586.2L238 586.7L239 587.2L240 587.7L241 588.1L242 588.6L243 589.0L244 589.4L245 589.8L247 590.6L249 591.3L251 592.0L253 592.6L255 593.2L257 593.7L259 594.3L261 594.7L263 595.2L265 595.6L268 596.2L271 596.7L274 597.2L278 597.1L279 596.5L280 595.1L281 592.6L282 588.8L283 583.3L284 576.2L285 568.1L286 559.6L287 551.8L288 545.2L289 540.4L290 537.3L291 535.6L292 535.0L293 535.0L294 535.6L295 536.7L296 538.2L297 540.1L298 542.5L299 545.3L300 548.2L301 551.1L302 553.9L303 556.6L304 559.1L305 561.5L306 563.6L307 565.5L308 567.3L309 568.9L310 570.4L311 571.7L312 573.0L313 574.2L314 575.3L315 576.3L316 577.2L317 578.1L318 579.0L319 579.7L320 580.5L321 581.2L322 581.9L323 582.5L324 583.1L325 583.7L326 584.2L327 584.8L328 585.3L329 585.8L330 586.2L331 586.7L332 587.1L333 587.5L334 587.9L336 588.7L338 589.4L340 590.1L342 590.7L344 591.3L346 591.9L348 592.4L350 592.9L352 593.4L354 593.9L356 594.3L358 594.7L361 595.3L364 595.8L367 596.2L370 596.7L373 597.1L377 597.6L381 598.0L386 598.5L391 599.0L397 599.4L404 599.8L412 600.2L422 600.7L436 601.1L449 600.3L450 599.9L451 599.2L452 598.3L453 597.1L454 595.7L455 594.0L456 592.1L457 589.9L458 587.6L459 585.2L460 582.8L461 580.6L462 578.6L463 576.9L464 575.5L465 574.5L466 573.9L471 574.5L473 575.1L477 574.8L478 574.3L479 573.6L480 572.7L481 571.8L482 570.9L483 570.0L484 569.1L485 568.4L486 567.9L488 567.4L490 567.9L491 568.3L492 569.0L493 569.8L494 570.7L495 571.6L496 572.6L497 573.6L498 574.6L499 575.5L500 576.5L501 577.4L502 578.2L503 579.0L504 579.8L505 580.5L506 581.2L507 581.9L508 582.5L509 583.1L510 583.7L511 584.2L512 584.7L513 585.2L514 585.6L515 586.1L516 586.5L518 587.3L520 588.0L522 588.7L524 589.3L526 589.8L528 590.4L530 590.8L532 591.3L534 591.7L536 592.1L539 592.7L542 593.2L545 593.7L548 594.2L551 594.6L555 595.1L559 595.6L563 596.1L567 596.5L572 596.9L577 597.4L583 597.8L589 598.2L596 598.7L604 599.1L613 599.5L624 600.0L637 600.4L654 600.8L678 601.2L719 601.6L843 602.0" stroke="#28ff00"/><path d="M75 602.0L190 601.6L191 600.2L192 595.3L193 583.3L194 561.8L195 534.0L196 509.1L197 495.2L198 493.2L199 498.8L200 507.1L201 515.4L202 522.9L203 529.5L204 535.3L205 540.4L206 544.9L207 548.9L208 552.4L209 555.5L210 558.3L211 560.9L212 563.1L213 565.2L214 567.0L215 568.7L216 570.3L217 571.7L218 573.1L219 574.3L220 575.4L221 576.5L222 577.5L223 578.4L224 579.3L225 580.2L226 581.0L227 581.7L228 582.4L229 583.1L230 583.8L231 584.4L232 585.0L233 585.6L234 586.1L235 586.6L236 587.1L237 587.6L238 588.1L239 588.6L240 589.0L241 589.4L242 589.8L244 590.6L246 591.3L248 592.0L250 592.6L252 593.2L254 593.8L256 594.3L258 594.8L260 595.2L262 595.6L265 596.2L268 596.8L271 597.2L274 597.7L277 597.5L278 597.0L279 595.7L280 593.5L281 589.7L282 584.2L283 576.9L284 568.2L285 558.9L286 550.1L287 542.9L288 538.0L289 535.6L290 535.6L291 537.3L292 540.1L293 543.5L294 547.0L295 550.4L296 553.7L297 556.6L298 559.3L299 561.7L300 564.0L301 566.0L302 567.8L303 569.5L304 571.1L305 572.5L306 573.8L307 575.0L308 576.2L309 577.2L310 578.2L311 579.1L312 579.9L313 580.7L314 581.5L315 582.2L316 582.8L317 583.5L318 584.0L319 584.6L320 585.2L321 585.7L322 586.2L323 586.6L324 587.1L325 587.5L326 587.9L328 588.7L330 589.4L332 590.1L334 590.7L336 591.3L338 591.9L340 592.4L342 592.9L344 593.4L346 593.8L348 594.2L351 594.8L354 595.3L357 595.8L360 596.3L363 596.7L367 597.2L371 597.7L375 598.1L380 598.6L385 599.0L391 599.4L398 599.8L407 600.3L418 600.7L433 601.1L447 600.5L448 600.0L449 599.4L450 598.4L451 597.2L452 595.7L453 593.9L454 591.6L455 589.1L456 586.3L457 583.4L458 580.3L459 577.4L460 574.7L461 572.3L462 570.2L463 568.7L464 567.6L465 567.0L467 567.1L468 567.6L469 568.4L470 569.4L471 570.4L472 571.5L473 572.7L474 573.8L475 574.9L476 575.9L477 576.9L478 577.9L479 578.8L480 579.6L481 580.4L482 581.2L483 581.9L484 582.6L485 583.3L486 583.9L487 584.5L488 585.0L489 585.5L490 586.0L491 586.5L492 587.0L493 587.4L494 587.8L496 588.6L498 589.2L500 589.9L502 590.5L504 591.0L506 591.5L508 592.0L510 592.4L512 592.8L515 593.3L518 593.9L521 594.3L524 594.7L528 595.3L532 595.7L536 596.2L541 596.6L546 597.1L552 597.6L558 598.0L565 598.4L573 598.9L582 599.3L592 599.7L604 600.1L619 600.5L639 600.9L668 601.3L724 601.7L843 602.0" stroke="#2eff00"/><path d="M75 602.0L191 601.9L192 601.4L193 599.2L194 592.6L195 577.5L196 552.7L197 523.8L198 500.8L199 490.4L200 491.3L201 498.4L202 507.2L203 515.6L204 523.0L205 529.6L206 535.3L207 540.4L208 544.8L209 548.7L210 552.2L211 555.3L212 558.1L213 560.6L214 562.9L215 564.9L216 566.8L217 568.5L218 570.0L219 571.5L220 572.8L221 574.0L222 575.2L223 576.2L224 577.3L225 578.2L226 579.1L227 579.9L228 580.7L229 581.5L230 582.2L231 582.9L232 583.6L233 584.2L234 584.8L235 585.4L236 586.0L237 586.5L238 587.0L239 587.5L240 588.0L241 588.4L242 588.9L243 589.3L244 589.7L246 590.5L248 591.2L250 591.9L252 592.5L254 593.1L256 593.7L258 594.2L260 594.7L262 595.2L264 595.6L266 596.0L269 596.6L272 597.1L275 597.5L278 597.3L279 596.5L280 595.0L281 592.3L282 587.9L283 581.7L284 573.6L285 564.2L286 554.5L287 545.6L288 538.6L289 534.1L290 532.3L291 532.8L292 535.0L293 538.2L294 541.8L295 545.5L296 549.1L297 552.4L298 555.4L299 558.2L300 560.7L301 562.9L302 565.0L303 566.9L304 568.6L305 570.2L306 571.7L307 573.0L308 574.2L309 575.4L310 576.5L311 577.4L312 578.4L313 579.2L314 580.1L315 580.8L316 581.5L317 582.2L318 582.9L319 583.5L320 584.1L321 584.6L322 585.1L323 585.6L324 586.1L325 586.6L326 587.0L327 587.5L328 587.9L330 588.7L332 589.4L334 590.1L336 590.7L338 591.3L340 591.8L342 592.4L344 592.9L346 593.3L348 593.8L350 594.2L353 594.8L356 595.3L359 595.8L362 596.3L365 596.7L369 597.2L373 597.7L377 598.1L382 598.6L387 599.0L393 599.4L400 599.9L409 600.3L420 600.7L435 601.1L448 600.5L449 600.0L450 599.4L451 598.5L452 597.3L453 595.7L454 593.8L455 591.6L456 588.9L457 586.1L458 583.0L459 579.9L460 576.8L461 573.9L462 571.4L463 569.2L464 567.5L465 566.4L466 565.7L468 565.7L469 566.3L470 567.0L471 568.0L472 569.1L473 570.3L474 571.5L475 572.6L476 573.8L477 574.9L478 575.9L479 576.9L480 577.9L481 578.8L482 579.6L483 580.4L484 581.2L485 581.9L486 582.6L487 583.2L488 583.8L489 584.4L490 584.9L491 585.4L492 585.9L493 586.4L494 586.9L495 587.3L496 587.7L498 588.4L500 589.1L502 589.8L504 590.3L506 590.9L508 591.4L510 591.8L512 592.3L514 592.7L517 593.2L520 593.7L523 594.2L526 594.6L530 595.2L534 595.6L538 596.1L543 596.6L548 597.0L553 597.4L559 597.9L566 598.3L573 598.7L581 599.1L591 599.6L602 600.0L616 600.4L634 600.8L659 601.2L701 601.6L843 602.0" stroke="#34ff00"/><path d="M75 602.0L190 601.9L191 601.5L192 599.5L193 593.2L194 578.3L195 553.0L196 522.4L197 497.1L198 484.8L199 485.0L200 492.2L201 501.4L202 510.4L203 518.4L204 525.4L205 531.5L206 536.9L207 541.6L208 545.8L209 549.5L210 552.8L211 555.7L212 558.4L213 560.8L214 562.9L215 564.9L216 566.7L217 568.4L218 569.9L219 571.3L220 572.6L221 573.8L222 574.9L223 576.0L224 577.0L225 577.9L226 578.8L227 579.7L228 580.5L229 581.2L230 582.0L231 582.7L232 583.3L233 584.0L234 584.6L235 585.2L236 585.7L237 586.3L238 586.8L239 587.3L240 587.8L241 588.3L242 588.7L243 589.1L244 589.6L245 590.0L247 590.7L249 591.5L251 592.1L253 592.8L255 593.3L257 593.9L259 594.4L261 594.9L263 595.3L265 595.8L268 596.3L271 596.9L274 597.3L276 597.2L277 596.7L278 595.6L279 593.5L280 590.0L281 584.7L282 577.6L283 568.9L284 559.6L285 550.5L286 543.0L287 537.7L288 535.1L289 534.8L290 536.4L291 539.2L292 542.6L293 546.2L294 549.7L295 553.0L296 556.0L297 558.8L298 561.3L299 563.6L300 565.6L301 567.5L302 569.2L303 570.8L304 572.3L305 573.6L306 574.8L307 576.0L308 577.0L309 578.0L310 578.9L311 579.8L312 580.6L313 581.3L314 582.0L315 582.7L316 583.4L317 584.0L318 584.5L319 585.1L320 585.6L321 586.1L322 586.6L323 587.0L324 587.5L325 587.9L326 588.3L328 589.0L330 589.7L332 590.4L334 591.0L336 591.6L338 592.1L340 592.7L342 593.1L344 593.6L346 594.0L348 594.4L351 595.0L354 595.5L357 596.0L360 596.5L363 596.9L367 597.4L371 597.9L375 598.3L380 598.7L386 599.2L392 599.6L400 600.1L409 600.5L421 600.9L438 601.3L452 600.7L453 600.3L454 599.7L455 598.8L456 597.6L457 596.1L458 594.3L459 592.1L460 589.5L461 586.6L462 583.5L463 580.3L464 577.2L465 574.2L466 571.6L467 569.3L468 567.5L469 566.2L470 565.5L472 565.4L473 565.9L474 566.6L475 567.6L476 568.7L477 569.9L478 571.1L479 572.2L480 573.4L481 574.5L482 575.6L483 576.6L484 577.6L485 578.5L486 579.4L487 580.2L488 581.0L489 581.7L490 582.4L491 583.0L492 583.6L493 584.2L494 584.8L495 585.3L496 585.8L497 586.3L498 586.7L499 587.2L500 587.6L502 588.3L504 589.0L506 589.7L508 590.3L510 590.8L512 591.3L514 591.8L516 592.2L518 592.6L521 593.2L524 593.7L527 594.2L530 594.6L533 595.0L537 595.5L541 595.9L545 596.4L550 596.8L555 597.2L561 597.7L567 598.1L574 598.5L582 599.0L591 599.4L602 599.8L615 600.2L631 600.6L653 601.1L687 601.5L769 601.9L843 602.0" stroke="#3aff00"/><path d="M75 602.0L189 601.8L190 600.8L191 597.0L192 586.6L193 566.2L194 537.4L195 508.9L196 490.7L197 486.1L198 490.9L199 499.5L200 508.6L201 516.9L202 524.2L203 530.6L204 536.2L205 541.1L206 545.4L207 549.2L208 552.6L209 555.6L210 558.4L211 560.8L212 563.0L213 565.0L214 566.8L215 568.5L216 570.1L217 571.5L218 572.8L219 574.0L220 575.2L221 576.2L222 577.2L223 578.2L224 579.1L225 579.9L226 580.7L227 581.5L228 582.2L229 582.9L230 583.6L231 584.2L232 584.8L233 585.4L234 585.9L235 586.5L236 587.0L237 587.5L238 588.0L239 588.4L240 588.9L241 589.3L242 589.7L243 590.1L245 590.9L247 591.6L249 592.3L251 592.9L253 593.5L255 594.0L257 594.5L259 595.0L261 595.5L263 595.9L266 596.5L269 597.0L272 597.4L276 597.9L278 597.4L279 596.4L280 594.6L281 591.4L282 586.4L283 579.5L284 571.0L285 561.4L286 552.0L287 543.9L288 538.0L289 534.7L290 533.9L291 535.2L292 537.9L293 541.3L294 544.9L295 548.6L296 552.0L297 555.1L298 557.9L299 560.5L300 562.9L301 565.0L302 567.0L303 568.7L304 570.3L305 571.8L306 573.2L307 574.5L308 575.6L309 576.7L310 577.7L311 578.7L312 579.5L313 580.4L314 581.1L315 581.8L316 582.5L317 583.2L318 583.8L319 584.4L320 584.9L321 585.5L322 586.0L323 586.4L324 586.9L325 587.3L326 587.8L327 588.2L329 588.9L331 589.7L333 590.3L335 590.9L337 591.5L339 592.1L341 592.6L343 593.1L345 593.6L347 594.0L349 594.4L352 595.0L355 595.5L358 596.0L361 596.5L364 596.9L368 597.4L372 597.8L376 598.3L381 598.7L386 599.1L392 599.5L399 599.9L408 600.4L419 600.8L440 600.4L441 599.9L442 599.2L443 598.3L444 597.0L445 595.4L446 593.5L447 591.1L448 588.5L449 585.6L450 582.5L451 579.4L452 576.4L453 573.6L454 571.2L455 569.2L456 567.6L457 566.6L458 566.1L460 566.3L461 567.0L462 567.8L463 568.8L464 570.0L465 571.1L466 572.3L467 573.5L468 574.6L469 575.7L470 576.7L471 577.7L472 578.6L473 579.5L474 580.3L475 581.1L476 581.8L477 582.5L478 583.1L479 583.8L480 584.4L481 584.9L482 585.4L483 585.9L484 586.4L485 586.9L486 587.3L487 587.7L489 588.5L491 589.2L493 589.8L495 590.4L497 591.0L499 591.5L501 591.9L503 592.4L505 592.8L508 593.3L511 593.8L514 594.3L517 594.7L521 595.3L525 595.7L529 596.2L534 596.7L539 597.1L544 597.5L550 597.9L557 598.4L565 598.8L574 599.3L584 599.7L596 600.1L611 600.5L631 600.9L660 601.3L717 601.7L843 602.0" stroke="#41ff00"/><path d="M75 602.0L122 601.8L123 601.2L124 600.6L125 600.5L126 601.0L128 601.6L137 602.0L190 601.7L191 600.2L192 595.2L193 582.3L194 558.5L195 527.2L196 498.7L197 482.6L198 480.4L199 486.9L200 496.4L201 505.9L202 514.4L203 521.9L204 528.4L205 534.1L206 539.1L207 543.6L208 547.5L209 551.0L210 554.1L211 556.9L212 559.4L213 561.6L214 563.7L215 565.6L216 567.3L217 568.9L218 570.4L219 571.7L220 573.0L221 574.2L222 575.3L223 576.3L224 577.3L225 578.2L226 579.1L227 579.9L228 580.7L229 581.5L230 582.2L231 582.9L232 583.5L233 584.2L234 584.8L235 585.4L236 585.9L237 586.5L238 587.0L239 587.5L240 588.0L241 588.4L242 588.9L243 589.3L244 589.7L245 590.1L247 590.9L249 591.6L251 592.3L253 592.9L255 593.5L257 594.0L259 594.6L261 595.0L263 595.5L265 595.9L268 596.5L271 597.0L274 597.5L278 597.5L279 596.9L280 595.6L281 593.1L282 589.1L283 583.1L284 575.1L285 565.5L286 555.4L287 545.9L288 538.1L289 533.0L290 530.6L291 530.8L292 532.9L293 536.1L294 539.8L295 543.7L296 547.5L297 550.9L298 554.1L299 557.0L300 559.6L301 562.0L302 564.1L303 566.1L304 567.9L305 569.5L306 571.0L307 572.4L308 573.7L309 574.9L310 576.0L311 577.0L312 578.0L313 578.9L314 579.7L315 580.5L316 581.2L317 581.9L318 582.6L319 583.2L320 583.8L321 584.4L322 584.9L323 585.5L324 585.9L325 586.4L326 586.9L327 587.3L328 587.7L329 588.1L331 588.9L333 589.6L335 590.3L337 590.9L339 591.5L341 592.1L343 592.6L345 593.1L347 593.5L349 594.0L351 594.4L354 595.0L357 595.5L360 596.0L363 596.5L366 596.9L370 597.4L374 597.9L378 598.3L383 598.7L388 599.1L394 599.5L401 600.0L410 600.4L421 600.8L437 601.2L445 600.5L446 600.1L447 599.5L448 598.6L449 597.4L450 595.9L451 594.0L452 591.8L453 589.3L454 586.4L455 583.4L456 580.4L457 577.4L458 574.6L459 572.1L460 570.1L461 568.5L462 567.4L463 566.9L465 567.0L466 567.6L467 568.4L468 569.4L469 570.5L470 571.6L471 572.8L472 573.9L473 575.0L474 576.1L475 577.1L476 578.1L477 579.0L478 579.9L479 580.7L480 581.5L481 582.2L482 582.9L483 583.5L484 584.1L485 584.7L486 585.3L487 585.8L488 586.3L489 586.7L490 587.2L491 587.6L492 588.0L494 588.8L496 589.5L498 590.1L500 590.7L502 591.2L504 591.7L506 592.2L508 592.6L511 593.2L514 593.7L517 594.2L520 594.6L523 595.0L527 595.5L531 596.0L535 596.4L540 596.9L545 597.3L551 597.8L557 598.2L564 598.6L572 599.0L581 599.4L592 599.9L605 600.3L622 600.7L645 601.1L682 601.5L792 601.9L843 602.0" stroke="#48ff00"/><path d="M75 602.0L189 601.8L190 600.6L191 596.4L192 585.2L193 563.3L194 533.2L195 504.5L196 487.2L197 483.8L198 489.5L199 498.7L200 508.0L201 516.4L202 523.8L203 530.2L204 535.8L205 540.8L206 545.1L207 549.0L208 552.4L209 555.4L210 558.2L211 560.6L212 562.8L213 564.8L214 566.7L215 568.4L216 569.9L217 571.3L218 572.7L219 573.9L220 575.0L221 576.1L222 577.1L223 578.1L224 579.0L225 579.8L226 580.6L227 581.4L228 582.1L229 582.8L230 583.5L231 584.2L232 584.8L233 585.4L234 585.9L235 586.5L236 587.0L237 587.5L238 588.0L239 588.5L240 588.9L241 589.4L242 589.8L243 590.2L245 590.9L247 591.7L249 592.3L251 593.0L253 593.5L255 594.1L257 594.6L259 595.1L261 595.5L263 595.9L266 596.5L269 597.0L274 597.2L275 596.5L276 595.1L277 592.5L278 588.4L279 582.4L280 574.6L281 565.5L282 556.2L283 547.8L284 541.3L285 537.3L286 535.8L287 536.6L288 538.9L289 542.1L290 545.6L291 549.2L292 552.6L293 555.7L294 558.6L295 561.2L296 563.5L297 565.7L298 567.6L299 569.4L300 571.0L301 572.5L302 573.8L303 575.1L304 576.2L305 577.3L306 578.3L307 579.2L308 580.1L309 580.9L310 581.7L311 582.4L312 583.0L313 583.7L314 584.3L315 584.9L316 585.4L317 585.9L318 586.4L319 586.9L320 587.3L321 587.8L322 588.2L323 588.6L325 589.3L327 590.0L329 590.7L331 591.3L333 591.9L335 592.4L337 592.9L339 593.4L341 593.9L343 594.3L345 594.7L348 595.3L351 595.8L354 596.3L357 596.7L360 597.1L364 597.6L368 598.0L373 598.5L378 599.0L384 599.4L391 599.8L399 600.3L409 600.7L423 601.1L448 600.5L449 599.9L450 599.1L451 598.1L452 596.7L453 595.0L454 592.9L455 590.4L456 587.7L457 584.7L458 581.6L459 578.5L460 575.6L461 573.0L462 570.7L463 568.9L464 567.7L465 566.9L467 566.7L468 567.2L469 567.9L470 568.9L471 570.0L472 571.1L473 572.3L474 573.4L475 574.6L476 575.7L477 576.7L478 577.7L479 578.6L480 579.5L481 580.4L482 581.2L483 581.9L484 582.6L485 583.3L486 583.9L487 584.5L488 585.1L489 585.6L490 586.1L491 586.6L492 587.0L493 587.5L494 587.9L496 588.7L498 589.4L500 590.0L502 590.6L504 591.1L506 591.6L508 592.1L510 592.5L512 592.9L515 593.5L518 594.0L521 594.5L524 594.9L528 595.4L532 595.9L536 596.3L541 596.8L546 597.2L552 597.7L558 598.1L565 598.5L573 599.0L582 599.4L592 599.8L605 600.2L621 600.6L643 601.1L677 601.5L762 601.9L843 602.0" stroke="#4fff00"/><path d="M75 602.0L188 601.9L189 601.5L190 599.6L191 593.3L192 578.3L193 552.9L194 522.4L195 497.7L196 486.4L197 487.5L198 495.1L199 504.4L200 513.3L201 521.2L202 528.0L203 534.0L204 539.3L205 543.9L206 547.9L207 551.5L208 554.7L209 557.6L210 560.1L211 562.4L212 564.5L213 566.4L214 568.2L215 569.8L216 571.2L217 572.6L218 573.8L219 575.0L220 576.1L221 577.1L222 578.1L223 579.0L224 579.9L225 580.7L226 581.5L227 582.2L228 582.9L229 583.6L230 584.2L231 584.9L232 585.4L233 586.0L234 586.6L235 587.1L236 587.6L237 588.1L238 588.5L239 589.0L240 589.4L241 589.9L242 590.3L244 591.0L246 591.7L248 592.4L250 593.0L252 593.6L254 594.2L256 594.7L258 595.2L260 595.6L262 596.0L265 596.6L268 597.1L271 597.6L276 597.8L277 597.2L278 596.0L279 593.6L280 589.7L281 583.9L282 576.0L283 566.6L284 556.6L285 547.2L286 539.6L287 534.6L288 532.3L289 532.5L290 534.6L291 537.8L292 541.5L293 545.4L294 549.0L295 552.5L296 555.6L297 558.4L298 560.9L299 563.3L300 565.4L301 567.3L302 569.0L303 570.6L304 572.1L305 573.4L306 574.7L307 575.8L308 576.9L309 577.9L310 578.8L311 579.7L312 580.5L313 581.3L314 582.0L315 582.7L316 583.3L317 583.9L318 584.5L319 585.0L320 585.6L321 586.1L322 586.5L323 587.0L324 587.4L325 587.9L326 588.3L328 589.0L330 589.8L332 590.4L334 591.1L336 591.6L338 592.2L340 592.7L342 593.2L344 593.7L346 594.1L348 594.5L351 595.1L354 595.6L357 596.1L360 596.6L363 597.0L367 597.5L371 598.0L375 598.4L380 598.8L386 599.3L393 599.8L401 600.2L411 600.6L424 601.0L448 600.6L449 600.1L450 599.4L451 598.4L452 597.1L453 595.5L454 593.4L455 591.0L456 588.3L457 585.3L458 582.2L459 579.0L460 575.9L461 573.1L462 570.6L463 568.6L464 567.1L465 566.2L466 565.7L468 566.1L469 566.8L470 567.7L471 568.8L472 570.0L473 571.2L474 572.4L475 573.6L476 574.7L477 575.8L478 576.8L479 577.8L480 578.7L481 579.6L482 580.5L483 581.2L484 582.0L485 582.7L486 583.3L487 583.9L488 584.5L489 585.1L490 585.6L491 586.1L492 586.6L493 587.0L494 587.5L495 587.9L497 588.6L499 589.3L501 590.0L503 590.6L505 591.1L507 591.6L509 592.1L511 592.5L513 592.9L516 593.4L519 593.9L522 594.4L525 594.8L529 595.4L533 595.8L537 596.3L542 596.8L547 597.2L552 597.6L558 598.0L565 598.5L573 598.9L582 599.4L592 599.8L604 600.2L619 600.6L639 601.0L669 601.4L733 601.8L843 602.0" stroke="#56ff00"/><path d="M75 602.0L190 601.9L191 601.4L192 599.3L193 592.4L194 576.4L195 549.8L196 518.8L197 494.7L198 484.4L199 486.3L200 494.4L201 504.0L202 513.0L203 520.9L204 527.7L205 533.7L206 539.0L207 543.6L208 547.7L209 551.3L210 554.5L211 557.4L212 559.9L213 562.3L214 564.4L215 566.3L216 568.0L217 569.6L218 571.1L219 572.4L220 573.7L221 574.9L222 576.0L223 577.0L224 578.0L225 578.9L226 579.8L227 580.6L228 581.4L229 582.1L230 582.8L231 583.5L232 584.2L233 584.8L234 585.4L235 586.0L236 586.5L237 587.0L238 587.5L239 588.0L240 588.5L241 589.0L242 589.4L243 589.8L244 590.2L246 591.0L248 591.7L250 592.4L252 593.0L254 593.6L256 594.2L258 594.7L260 595.2L262 595.6L264 596.0L267 596.6L270 597.1L273 597.6L276 597.4L277 596.8L278 595.4L279 592.8L280 588.6L281 582.5L282 574.6L283 565.5L284 556.0L285 547.5L286 541.0L287 537.0L288 535.6L289 536.5L290 538.9L291 542.1L292 545.8L293 549.4L294 552.8L295 556.0L296 558.8L297 561.4L298 563.8L299 565.9L300 567.8L301 569.6L302 571.2L303 572.7L304 574.1L305 575.3L306 576.5L307 577.5L308 578.5L309 579.4L310 580.3L311 581.1L312 581.9L313 582.6L314 583.2L315 583.9L316 584.5L317 585.0L318 585.6L319 586.1L320 586.6L321 587.1L322 587.5L323 587.9L324 588.3L326 589.1L328 589.9L330 590.5L332 591.2L334 591.8L336 592.3L338 592.8L340 593.3L342 593.8L344 594.2L346 594.6L349 595.2L352 595.7L355 596.2L358 596.7L361 597.1L365 597.6L369 598.0L373 598.4L378 598.9L384 599.4L391 599.8L399 600.2L409 600.6L423 601.1L448 600.6L449 600.1L450 599.3L451 598.3L452 597.0L453 595.2L454 593.1L455 590.5L456 587.6L457 584.4L458 581.0L459 577.5L460 574.2L461 571.1L462 568.4L463 566.2L464 564.5L465 563.4L466 562.9L467 562.9L468 563.3L469 564.0L470 565.0L471 566.2L472 567.4L473 568.8L474 570.1L475 571.3L476 572.6L477 573.8L478 574.9L479 576.0L480 577.0L481 577.9L482 578.8L483 579.6L484 580.4L485 581.2L486 581.9L487 582.6L488 583.2L489 583.8L490 584.4L491 584.9L492 585.4L493 585.9L494 586.4L495 586.8L496 587.2L497 587.6L499 588.4L501 589.1L503 589.7L505 590.3L507 590.8L509 591.3L511 591.8L513 592.2L515 592.6L518 593.2L521 593.7L524 594.2L527 594.6L530 595.0L534 595.5L538 596.0L542 596.4L547 596.9L552 597.3L558 597.8L564 598.2L571 598.6L579 599.0L588 599.5L599 599.9L612 600.3L628 600.7L650 601.1L686 601.5L790 601.9L843 602.0" stroke="#5eff00"/><path d="M75 602.0L189 601.7L190 600.5L191 596.1L192 584.2L193 561.5L194 531.1L195 503.1L196 487.4L197 485.4L198 491.9L199 501.3L200 510.5L201 518.8L202 526.0L203 532.3L204 537.8L205 542.6L206 546.9L207 550.6L208 553.9L209 556.9L210 559.5L211 561.9L212 564.1L213 566.0L214 567.8L215 569.4L216 570.9L217 572.3L218 573.6L219 574.8L220 575.9L221 577.0L222 577.9L223 578.9L224 579.8L225 580.6L226 581.4L227 582.1L228 582.8L229 583.5L230 584.2L231 584.8L232 585.4L233 586.0L234 586.5L235 587.1L236 587.6L237 588.1L238 588.6L239 589.0L240 589.5L241 589.9L242 590.3L244 591.1L246 591.8L248 592.5L250 593.1L252 593.7L254 594.2L256 594.7L258 595.2L260 595.7L262 596.1L265 596.7L268 597.2L271 597.6L275 597.6L276 596.8L277 595.3L278 592.5L279 588.0L280 581.5L281 573.1L282 563.5L283 553.7L284 544.9L285 538.3L286 534.4L287 533.3L288 534.3L289 537.0L290 540.4L291 544.2L292 548.0L293 551.5L294 554.8L295 557.7L296 560.4L297 562.8L298 565.0L299 567.0L300 568.8L301 570.5L302 572.0L303 573.4L304 574.6L305 575.8L306 576.9L307 577.9L308 578.9L309 579.8L310 580.6L311 581.4L312 582.1L313 582.8L314 583.4L315 584.0L316 584.6L317 585.2L318 585.7L319 586.2L320 586.7L321 587.2L322 587.6L323 588.0L324 588.4L326 589.2L328 589.9L330 590.6L332 591.2L334 591.8L336 592.4L338 592.9L340 593.4L342 593.8L344 594.3L346 594.7L349 595.3L352 595.8L355 596.3L358 596.7L361 597.1L365 597.6L369 598.1L373 598.5L378 598.9L384 599.4L391 599.8L399 600.3L409 600.7L423 601.1L447 600.8L448 600.3L449 599.7L450 598.8L451 597.7L452 596.2L453 594.3L454 592.0L455 589.3L456 586.4L457 583.3L458 580.1L459 576.9L460 574.0L461 571.4L462 569.2L463 567.6L464 566.5L465 565.9L467 566.1L468 566.7L469 567.6L470 568.6L471 569.8L472 571.0L473 572.2L474 573.4L475 574.6L476 575.7L477 576.8L478 577.8L479 578.7L480 579.6L481 580.4L482 581.2L483 582.0L484 582.7L485 583.3L486 584.0L487 584.6L488 585.1L489 585.7L490 586.2L491 586.6L492 587.1L493 587.5L494 587.9L496 588.7L498 589.4L500 590.0L502 590.6L504 591.2L506 591.7L508 592.1L510 592.6L512 593.0L515 593.5L518 594.0L521 594.5L524 594.9L528 595.4L532 595.9L536 596.3L541 596.8L546 597.3L552 597.7L558 598.2L565 598.6L573 599.0L582 599.5L593 599.9L606 600.3L622 600.7L644 601.1L680 601.5L787 601.9L843 602.0" stroke="#66ff00"/><path d="M75 602.0L188 601.9L189 601.4L190 598.9L191 591.2L192 573.6L193 545.5L194 514.1L195 490.9L196 482.4L197 485.7L198 494.4L199 504.2L200 513.2L201 521.2L202 528.0L203 534.0L204 539.3L205 543.9L206 547.9L207 551.5L208 554.7L209 557.5L210 560.1L211 562.4L212 564.5L213 566.4L214 568.1L215 569.7L216 571.2L217 572.5L218 573.8L219 575.0L220 576.1L221 577.1L222 578.1L223 579.0L224 579.9L225 580.7L226 581.5L227 582.2L228 582.9L229 583.6L230 584.3L231 584.9L232 585.5L233 586.1L234 586.6L235 587.2L236 587.7L237 588.2L238 588.6L239 589.1L240 589.5L241 590.0L242 590.4L244 591.1L246 591.9L248 592.5L250 593.2L252 593.8L254 594.3L256 594.8L258 595.3L260 595.7L262 596.2L265 596.7L268 597.2L271 597.7L276 597.9L277 597.3L278 596.0L279 593.6L280 589.5L281 583.4L282 575.4L283 565.8L284 555.7L285 546.4L286 539.1L287 534.4L288 532.6L289 533.2L290 535.6L291 539.0L292 542.8L293 546.6L294 550.3L295 553.7L296 556.7L297 559.5L298 562.0L299 564.3L300 566.3L301 568.2L302 569.9L303 571.5L304 572.9L305 574.2L306 575.4L307 576.5L308 577.6L309 578.5L310 579.4L311 580.3L312 581.1L313 581.8L314 582.5L315 583.2L316 583.8L317 584.4L318 585.0L319 585.5L320 586.0L321 586.5L322 587.0L323 587.4L324 587.9L325 588.3L326 588.7L328 589.5L330 590.2L332 590.8L334 591.4L336 592.0L338 592.6L340 593.1L342 593.5L344 594.0L346 594.4L348 594.8L351 595.4L354 595.9L357 596.4L360 596.8L363 597.2L367 597.7L371 598.2L376 598.7L381 599.1L387 599.5L394 600.0L403 600.4L414 600.8L430 601.2L442 600.8L443 600.5L444 599.9L445 599.2L446 598.1L447 596.7L448 595.0L449 592.8L450 590.3L451 587.4L452 584.2L453 581.0L454 577.7L455 574.6L456 571.7L457 569.3L458 567.4L459 566.0L460 565.2L462 565.0L463 565.6L464 566.4L465 567.4L466 568.6L467 569.8L468 571.1L469 572.3L470 573.5L471 574.7L472 575.8L473 576.8L474 577.8L475 578.8L476 579.6L477 580.5L478 581.2L479 582.0L480 582.7L481 583.3L482 584.0L483 584.6L484 585.1L485 585.6L486 586.1L487 586.6L488 587.1L489 587.5L490 587.9L492 588.7L494 589.4L496 590.0L498 590.6L500 591.1L502 591.6L504 592.1L506 592.5L508 592.9L511 593.5L514 594.0L517 594.4L520 594.9L524 595.4L528 595.9L532 596.3L537 596.8L542 597.2L547 597.6L553 598.1L560 598.5L568 599.0L577 599.4L587 599.8L599 600.2L614 600.6L635 601.0L667 601.4L743 601.9L843 602.0" stroke="#6eff00"/><path d="M75 602.0L189 601.9L190 601.5L191 599.5L192 592.6L193 576.0L194 547.7L195 514.0L196 487.2L197 475.7L198 477.6L199 486.5L200 496.9L201 506.7L202 515.3L203 522.8L204 529.3L205 534.9L206 539.9L207 544.3L208 548.2L209 551.6L210 554.7L211 557.4L212 559.9L213 562.1L214 564.1L215 566.0L216 567.7L217 569.3L218 570.7L219 572.1L220 573.3L221 574.5L222 575.6L223 576.6L224 577.6L225 578.6L226 579.4L227 580.3L228 581.1L229 581.8L230 582.6L231 583.3L232 583.9L233 584.6L234 585.2L235 585.8L236 586.3L237 586.9L238 587.4L239 587.9L240 588.4L241 588.8L242 589.3L243 589.7L244 590.2L245 590.6L247 591.3L249 592.0L251 592.7L253 593.3L255 593.9L257 594.4L259 595.0L261 595.4L263 595.9L265 596.3L268 596.8L271 597.3L274 597.3L275 596.8L276 595.7L277 593.4L278 589.5L279 583.7L280 575.9L281 566.5L282 556.5L283 547.2L284 539.8L285 534.9L286 532.9L287 533.4L288 535.7L289 539.1L290 542.9L291 546.7L292 550.4L293 553.8L294 556.8L295 559.6L296 562.1L297 564.4L298 566.4L299 568.3L300 570.0L301 571.6L302 573.0L303 574.3L304 575.5L305 576.6L306 577.7L307 578.6L308 579.6L309 580.4L310 581.2L311 581.9L312 582.6L313 583.3L314 583.9L315 584.5L316 585.1L317 585.6L318 586.1L319 586.6L320 587.1L321 587.5L322 588.0L323 588.4L325 589.2L327 589.9L329 590.6L331 591.2L333 591.8L335 592.4L337 592.9L339 593.4L341 593.9L343 594.3L345 594.7L348 595.3L351 595.8L354 596.3L357 596.8L360 597.2L364 597.7L368 598.1L372 598.5L377 599.0L383 599.4L390 599.9L398 600.3L408 600.7L422 601.1L445 600.8L446 600.3L447 599.7L448 598.8L449 597.6L450 596.0L451 594.0L452 591.6L453 588.7L454 585.6L455 582.2L456 578.8L457 575.4L458 572.2L459 569.4L460 567.1L461 565.3L462 564.1L463 563.4L465 563.6L466 564.3L467 565.3L468 566.4L469 567.7L470 569.0L471 570.3L472 571.6L473 572.9L474 574.1L475 575.2L476 576.3L477 577.3L478 578.2L479 579.1L480 580.0L481 580.8L482 581.5L483 582.2L484 582.9L485 583.5L486 584.1L487 584.7L488 585.2L489 585.8L490 586.2L491 586.7L492 587.1L493 587.6L495 588.3L497 589.0L499 589.7L501 590.3L503 590.8L505 591.3L507 591.8L509 592.3L511 592.7L514 593.2L517 593.8L520 594.2L523 594.7L526 595.1L530 595.6L534 596.1L538 596.5L543 596.9L548 597.4L554 597.8L560 598.3L567 598.7L575 599.1L584 599.5L595 600.0L608 600.4L625 600.8L649 601.2L690 601.6L843 602.0" stroke="#77ff00"/><path d="M75 602.0L188 601.8L189 600.7L190 596.6L191 585.0L192 562.1L193 530.5L194 500.7L195 483.4L196 481.0L197 487.8L198 497.6L199 507.4L200 516.1L201 523.7L202 530.3L203 536.0L204 541.0L205 545.4L206 549.3L207 552.7L208 555.8L209 558.5L210 561.0L211 563.2L212 565.2L213 567.0L214 568.7L215 570.3L216 571.7L217 573.0L218 574.3L219 575.4L220 576.5L221 577.5L222 578.5L223 579.4L224 580.2L225 581.0L226 581.8L227 582.5L228 583.3L229 583.9L230 584.6L231 585.2L232 585.8L233 586.4L234 586.9L235 587.4L236 587.9L237 588.4L238 588.9L239 589.4L240 589.8L241 590.2L242 590.6L244 591.4L246 592.1L248 592.8L250 593.4L252 594.0L254 594.5L256 595.0L258 595.5L260 595.9L262 596.3L265 596.9L268 597.4L271 597.9L275 598.3L277 598.1L278 597.5L279 596.1L280 593.6L281 589.4L282 583.3L283 575.3L284 565.9L285 556.2L286 547.5L287 540.9L288 536.9L289 535.6L290 536.6L291 539.2L292 542.6L293 546.3L294 550.0L295 553.5L296 556.7L297 559.6L298 562.2L299 564.5L300 566.6L301 568.6L302 570.3L303 571.9L304 573.4L305 574.7L306 575.9L307 577.1L308 578.1L309 579.1L310 580.0L311 580.9L312 581.6L313 582.4L314 583.1L315 583.7L316 584.4L317 585.0L318 585.5L319 586.0L320 586.6L321 587.0L322 587.5L323 587.9L324 588.4L325 588.8L327 589.5L329 590.3L331 590.9L333 591.5L335 592.1L337 592.7L339 593.2L341 593.7L343 594.1L345 594.6L347 595.0L350 595.5L353 596.0L356 596.5L359 596.9L362 597.3L366 597.8L370 598.3L375 598.8L380 599.2L386 599.6L393 600.0L402 600.5L413 600.9L429 601.3L443 600.7L444 600.3L445 599.7L446 598.8L447 597.7L448 596.1L449 594.2L450 592.0L451 589.3L452 586.4L453 583.3L454 580.2L455 577.1L456 574.3L457 571.9L458 569.8L459 568.3L460 567.4L461 566.9L463 567.3L464 568.0L465 568.9L466 570.0L467 571.2L468 572.4L469 573.6L470 574.8L471 575.9L472 577.0L473 578.0L474 578.9L475 579.8L476 580.7L477 581.5L478 582.3L479 583.0L480 583.6L481 584.3L482 584.9L483 585.4L484 586.0L485 586.5L486 587.0L487 587.4L488 587.9L489 588.3L491 589.0L493 589.7L495 590.4L497 590.9L499 591.5L501 592.0L503 592.4L505 592.9L508 593.4L511 594.0L514 594.5L517 594.9L520 595.3L524 595.8L528 596.3L532 596.7L537 597.1L542 597.6L548 598.0L554 598.4L561 598.8L569 599.2L578 599.6L589 600.1L603 600.5L621 600.9L647 601.3L695 601.7L843 602.0" stroke="#80ff00"/><path d="M75 602.0L189 601.9L190 601.4L191 598.9L192 591.3L193 574.1L194 546.8L195 516.9L196 495.9L197 489.0L198 493.0L199 501.7L200 511.1L201 519.6L202 527.0L203 533.4L204 539.0L205 543.9L206 548.2L207 552.0L208 555.3L209 558.3L210 560.9L211 563.3L212 565.4L213 567.3L214 569.1L215 570.7L216 572.2L217 573.5L218 574.8L219 576.0L220 577.0L221 578.1L222 579.0L223 579.9L224 580.8L225 581.6L226 582.4L227 583.1L228 583.8L229 584.5L230 585.1L231 585.7L232 586.3L233 586.9L234 587.4L235 587.9L236 588.4L237 588.9L238 589.3L239 589.8L240 590.2L241 590.6L243 591.4L245 592.1L247 592.8L249 593.4L251 594.0L253 594.5L255 595.0L257 595.5L259 596.0L261 596.4L264 596.9L267 597.4L270 597.9L274 598.4L276 598.3L277 597.8L278 596.7L279 594.5L280 590.7L281 584.9L282 576.9L283 567.2L284 556.6L285 546.7L286 538.5L287 533.1L288 530.8L289 531.0L290 533.3L291 536.8L292 540.7L293 544.8L294 548.6L295 552.2L296 555.4L297 558.3L298 561.0L299 563.3L300 565.5L301 567.4L302 569.2L303 570.8L304 572.3L305 573.7L306 574.9L307 576.1L308 577.1L309 578.1L310 579.1L311 579.9L312 580.8L313 581.5L314 582.2L315 582.9L316 583.6L317 584.2L318 584.8L319 585.3L320 585.8L321 586.3L322 586.8L323 587.3L324 587.7L325 588.2L326 588.6L328 589.3L330 590.1L332 590.7L334 591.4L336 592.0L338 592.5L340 593.0L342 593.5L344 594.0L346 594.4L348 594.8L351 595.4L354 595.9L357 596.4L360 596.9L363 597.3L367 597.8L371 598.2L376 598.7L381 599.1L387 599.6L394 600.0L403 600.4L414 600.9L430 601.3L443 600.8L444 600.4L445 599.8L446 598.9L447 597.7L448 596.2L449 594.3L450 592.1L451 589.4L452 586.5L453 583.4L454 580.2L455 577.0L456 574.1L457 571.6L458 569.5L459 567.9L460 566.9L461 566.4L463 566.8L464 567.5L465 568.4L466 569.5L467 570.7L468 571.9L469 573.2L470 574.4L471 575.5L472 576.6L473 577.6L474 578.6L475 579.5L476 580.4L477 581.2L478 582.0L479 582.7L480 583.4L481 584.1L482 584.7L483 585.2L484 585.8L485 586.3L486 586.8L487 587.3L488 587.7L489 588.1L491 588.9L493 589.6L495 590.2L497 590.8L499 591.4L501 591.9L503 592.3L505 592.8L507 593.2L510 593.7L513 594.2L516 594.7L519 595.1L523 595.6L527 596.1L531 596.5L536 597.0L541 597.4L547 597.9L553 598.3L560 598.8L568 599.2L577 599.6L588 600.0L601 600.4L618 600.8L642 601.2L684 601.6L843 602.0" stroke="#8aff00"/><path d="M75 602.0L189 601.6L190 599.9L191 593.7L192 578.7L193 552.4L194 520.8L195 495.5L196 484.7L197 486.8L198 495.2L199 505.1L200 514.3L201 522.3L202 529.3L203 535.3L204 540.6L205 545.2L206 549.2L207 552.8L208 555.9L209 558.8L210 561.3L211 563.6L212 565.6L213 567.5L214 569.2L215 570.7L216 572.2L217 573.5L218 574.7L219 575.9L220 577.0L221 578.0L222 578.9L223 579.9L224 580.7L225 581.5L226 582.3L227 583.0L228 583.7L229 584.4L230 585.0L231 585.6L232 586.2L233 586.8L234 587.3L235 587.9L236 588.4L237 588.8L238 589.3L239 589.7L240 590.2L241 590.6L243 591.4L245 592.1L247 592.8L249 593.4L251 594.0L253 594.5L255 595.0L257 595.5L259 596.0L261 596.4L264 596.9L267 597.4L270 597.9L274 598.4L276 598.3L277 597.7L278 596.6L279 594.2L280 590.2L281 584.2L282 575.9L283 565.9L284 555.3L285 545.3L286 537.3L287 532.2L288 530.1L289 530.7L290 533.2L291 536.8L292 540.9L293 544.9L294 548.8L295 552.4L296 555.6L297 558.5L298 561.1L299 563.5L300 565.6L301 567.5L302 569.3L303 570.9L304 572.4L305 573.7L306 575.0L307 576.1L308 577.2L309 578.2L310 579.1L311 580.0L312 580.8L313 581.6L314 582.3L315 583.0L316 583.6L317 584.2L318 584.8L319 585.4L320 585.9L321 586.4L322 586.9L323 587.3L324 587.8L325 588.2L326 588.6L328 589.4L330 590.1L332 590.8L334 591.4L336 592.0L338 592.6L340 593.1L342 593.6L344 594.0L346 594.5L348 594.9L351 595.5L354 596.0L357 596.5L360 596.9L363 597.3L367 597.8L371 598.3L376 598.8L381 599.2L387 599.6L394 600.0L403 600.5L414 600.9L430 601.3L443 600.7L444 600.2L445 599.5L446 598.6L447 597.3L448 595.6L449 593.6L450 591.1L451 588.2L452 585.0L453 581.7L454 578.2L455 574.9L456 571.9L457 569.3L458 567.1L459 565.6L460 564.6L461 564.2L462 564.3L463 564.7L464 565.6L465 566.6L466 567.8L467 569.1L468 570.4L469 571.7L470 573.0L471 574.2L472 575.3L473 576.4L474 577.5L475 578.4L476 579.3L477 580.2L478 581.0L479 581.8L480 582.5L481 583.2L482 583.8L483 584.4L484 585.0L485 585.5L486 586.0L487 586.5L488 587.0L489 587.4L490 587.8L492 588.6L494 589.3L496 590.0L498 590.6L500 591.1L502 591.6L504 592.1L506 592.5L508 592.9L511 593.5L514 594.0L517 594.5L520 594.9L523 595.3L527 595.8L531 596.3L535 596.7L540 597.1L545 597.6L551 598.0L557 598.4L564 598.8L572 599.3L581 599.7L592 600.1L606 600.5L624 600.9L650 601.3L700 601.7L843 602.0" stroke="#94ff00"/><path d="M75 602.0L189 601.6L190 599.8L191 593.5L192 578.1L193 551.4L194 519.4L195 494.3L196 484.0L197 486.4L198 495.1L199 505.1L200 514.3L201 522.4L202 529.3L203 535.4L204 540.7L205 545.3L206 549.3L207 552.9L208 556.0L209 558.8L210 561.4L211 563.6L212 565.7L213 567.5L214 569.2L215 570.8L216 572.2L217 573.6L218 574.8L219 576.0L220 577.0L221 578.1L222 579.0L223 579.9L224 580.8L225 581.6L226 582.4L227 583.1L228 583.8L229 584.5L230 585.1L231 585.7L232 586.3L233 586.9L234 587.4L235 587.9L236 588.4L237 588.9L238 589.4L239 589.8L240 590.2L241 590.7L243 591.4L245 592.2L247 592.8L249 593.5L251 594.1L253 594.6L255 595.1L257 595.6L259 596.0L261 596.4L264 597.0L267 597.5L270 598.0L275 598.2L276 597.7L277 596.5L278 594.2L279 590.2L280 584.1L281 575.9L282 565.9L283 555.3L284 545.4L285 537.5L286 532.5L287 530.5L288 531.2L289 533.7L290 537.3L291 541.4L292 545.5L293 549.3L294 552.9L295 556.1L296 558.9L297 561.5L298 563.9L299 566.0L300 567.9L301 569.7L302 571.3L303 572.7L304 574.1L305 575.3L306 576.4L307 577.5L308 578.5L309 579.4L310 580.3L311 581.1L312 581.8L313 582.5L314 583.2L315 583.8L316 584.4L317 585.0L318 585.6L319 586.1L320 586.6L321 587.1L322 587.5L323 588.0L324 588.4L325 588.8L327 589.6L329 590.3L331 590.9L333 591.6L335 592.2L337 592.7L339 593.2L341 593.7L343 594.2L345 594.6L347 595.0L350 595.6L353 596.1L356 596.6L359 597.0L362 597.4L366 597.9L370 598.3L375 598.8L380 599.2L386 599.7L393 600.1L402 600.5L414 600.9L431 601.3L442 600.6L443 600.1L444 599.4L445 598.4L446 597.0L447 595.3L448 593.1L449 590.5L450 587.5L451 584.3L452 580.9L453 577.5L454 574.2L455 571.2L456 568.7L457 566.7L458 565.2L459 564.4L461 564.3L462 564.9L463 565.8L464 566.9L465 568.1L466 569.4L467 570.7L468 572.0L469 573.3L470 574.5L471 575.6L472 576.7L473 577.7L474 578.7L475 579.6L476 580.4L477 581.2L478 582.0L479 582.7L480 583.4L481 584.0L482 584.6L483 585.2L484 585.7L485 586.2L486 586.7L487 587.1L488 587.6L489 588.0L491 588.8L493 589.5L495 590.1L497 590.7L499 591.2L501 591.7L503 592.2L505 592.6L507 593.0L510 593.6L513 594.1L516 594.6L519 595.0L523 595.5L527 596.0L531 596.4L536 596.9L541 597.4L546 597.8L552 598.2L559 598.7L567 599.1L576 599.5L586 599.9L599 600.4L615 600.8L638 601.2L676 601.6L843 602.0" stroke="#a0ff00"/><path d="M75 602.0L188 601.9L189 601.4L190 599.0L191 591.0L192 572.7L193 543.1L194 510.4L195 487.2L196 479.7L197 484.2L198 493.9L199 504.2L200 513.5L201 521.6L202 528.6L203 534.7L204 539.9L205 544.6L206 548.6L207 552.2L208 555.4L209 558.2L210 560.8L211 563.0L212 565.1L213 567.0L214 568.7L215 570.3L216 571.7L217 573.1L218 574.3L219 575.5L220 576.6L221 577.6L222 578.6L223 579.5L224 580.4L225 581.2L226 582.0L227 582.8L228 583.5L229 584.2L230 584.8L231 585.4L232 586.0L233 586.6L234 587.2L235 587.7L236 588.2L237 588.7L238 589.2L239 589.6L240 590.1L241 590.5L242 590.9L244 591.7L246 592.4L248 593.1L250 593.7L252 594.2L254 594.8L256 595.3L258 595.7L260 596.2L262 596.6L265 597.1L268 597.6L271 598.1L276 598.2L277 597.5L278 596.1L279 593.4L280 589.0L281 582.5L282 574.1L283 564.3L284 554.3L285 545.5L286 538.9L287 535.2L288 534.3L289 535.7L290 538.6L291 542.3L292 546.2L293 550.0L294 553.6L295 556.8L296 559.7L297 562.3L298 564.7L299 566.8L300 568.8L301 570.5L302 572.1L303 573.6L304 574.9L305 576.1L306 577.3L307 578.3L308 579.3L309 580.2L310 581.0L311 581.8L312 582.6L313 583.3L314 583.9L315 584.5L316 585.1L317 585.7L318 586.2L319 586.7L320 587.2L321 587.7L322 588.1L323 588.5L324 589.0L326 589.7L328 590.4L330 591.1L332 591.7L334 592.3L336 592.9L338 593.4L340 593.9L342 594.3L344 594.7L346 595.2L349 595.7L352 596.2L355 596.7L358 597.1L362 597.7L366 598.1L370 598.5L375 599.0L381 599.5L388 599.9L396 600.3L406 600.7L420 601.2L444 600.5L445 600.0L446 599.1L447 598.0L448 596.5L449 594.6L450 592.2L451 589.5L452 586.4L453 583.0L454 579.6L455 576.2L456 573.0L457 570.1L458 567.8L459 566.0L460 564.8L461 564.1L463 564.4L464 565.1L465 566.1L466 567.3L467 568.6L468 569.9L469 571.2L470 572.5L471 573.8L472 575.0L473 576.1L474 577.2L475 578.2L476 579.1L477 580.0L478 580.8L479 581.6L480 582.3L481 583.0L482 583.7L483 584.3L484 584.9L485 585.4L486 586.0L487 586.5L488 586.9L489 587.4L490 587.8L491 588.2L493 589.0L495 589.6L497 590.3L499 590.8L501 591.4L503 591.9L505 592.3L507 592.7L510 593.3L513 593.9L516 594.4L519 594.8L522 595.2L526 595.7L530 596.2L534 596.6L539 597.1L544 597.5L550 598.0L556 598.4L563 598.8L571 599.3L580 599.7L591 600.1L605 600.5L623 600.9L649 601.3L699 601.7L843 602.0" stroke="#acff00"/><path d="M75 602.0L188 601.7L189 600.5L190 595.8L191 583.0L192 558.7L193 527.0L194 499.6L195 486.1L196 486.7L197 494.7L198 504.7L199 514.1L200 522.3L201 529.4L202 535.6L203 540.9L204 545.6L205 549.7L206 553.3L207 556.5L208 559.3L209 561.8L210 564.1L211 566.1L212 568.0L213 569.7L214 571.3L215 572.7L216 574.0L217 575.2L218 576.4L219 577.5L220 578.5L221 579.4L222 580.3L223 581.2L224 582.0L225 582.7L226 583.5L227 584.2L228 584.8L229 585.5L230 586.1L231 586.6L232 587.2L233 587.7L234 588.3L235 588.8L236 589.2L237 589.7L238 590.1L239 590.6L240 591.0L242 591.7L244 592.4L246 593.1L248 593.7L250 594.3L252 594.8L254 595.3L256 595.8L258 596.2L260 596.6L263 597.2L266 597.7L269 598.1L273 598.6L275 598.4L276 597.9L277 596.6L278 594.2L279 590.0L280 583.5L281 574.8L282 564.2L283 553.1L284 542.7L285 534.6L286 529.5L287 527.7L288 528.6L289 531.4L290 535.3L291 539.6L292 543.9L293 547.9L294 551.6L295 554.9L296 557.8L297 560.5L298 562.9L299 565.1L300 567.1L301 568.9L302 570.5L303 572.0L304 573.4L305 574.7L306 575.9L307 576.9L308 578.0L309 578.9L310 579.8L311 580.6L312 581.4L313 582.1L314 582.8L315 583.4L316 584.1L317 584.7L318 585.2L319 585.8L320 586.3L321 586.8L322 587.2L323 587.7L324 588.1L325 588.5L326 588.9L328 589.7L330 590.4L332 591.1L334 591.7L336 592.3L338 592.8L340 593.3L342 593.8L344 594.3L346 594.7L348 595.1L351 595.7L354 596.2L357 596.7L360 597.1L364 597.6L368 598.1L372 598.5L377 599.0L383 599.5L390 599.9L398 600.3L408 600.8L422 601.2L442 600.6L443 600.0L444 599.2L445 598.1L446 596.6L447 594.7L448 592.4L449 589.6L450 586.5L451 583.1L452 579.5L453 576.0L454 572.6L455 569.6L456 567.1L457 565.1L458 563.8L459 563.0L461 563.2L462 563.9L463 564.9L464 566.1L465 567.4L466 568.8L467 570.1L468 571.5L469 572.8L470 574.0L471 575.2L472 576.3L473 577.4L474 578.3L475 579.3L476 580.1L477 580.9L478 581.7L479 582.4L480 583.1L481 583.7L482 584.3L483 584.9L484 585.5L485 586.0L486 586.5L487 586.9L488 587.4L489 587.8L491 588.6L493 589.3L495 589.9L497 590.5L499 591.1L501 591.6L503 592.0L505 592.5L507 592.9L510 593.5L513 594.0L516 594.5L519 594.9L522 595.3L526 595.8L530 596.3L534 596.7L539 597.2L544 597.6L550 598.0L556 598.5L563 598.9L571 599.3L580 599.7L591 600.1L605 600.5L623 600.9L650 601.3L704 601.8L843 602.0" stroke="#b9ff00"/><path d="M75 602.0L188 601.8L189 600.7L190 596.3L191 583.8L192 559.6L193 527.1L194 497.8L195 482.6L196 482.4L197 490.4L198 500.8L199 510.6L200 519.2L201 526.7L202 533.1L203 538.7L204 543.6L205 547.8L206 551.6L207 554.9L208 557.8L209 560.5L210 562.8L211 565.0L212 566.9L213 568.7L214 570.3L215 571.8L216 573.1L217 574.4L218 575.6L219 576.7L220 577.8L221 578.7L222 579.7L223 580.5L224 581.4L225 582.2L226 582.9L227 583.6L228 584.3L229 585.0L230 585.6L231 586.2L232 586.8L233 587.3L234 587.9L235 588.4L236 588.9L237 589.4L238 589.8L239 590.3L240 590.7L241 591.1L243 591.8L245 592.6L247 593.2L249 593.8L251 594.4L253 594.9L255 595.4L257 595.9L259 596.3L262 596.9L265 597.4L268 597.9L271 598.3L275 598.4L276 597.8L277 596.5L278 593.9L279 589.6L280 583.0L281 574.1L282 563.5L283 552.4L284 542.3L285 534.5L286 529.8L287 528.3L288 529.5L289 532.5L290 536.4L291 540.7L292 545.0L293 548.9L294 552.5L295 555.8L296 558.7L297 561.3L298 563.7L299 565.8L300 567.7L301 569.5L302 571.1L303 572.6L304 573.9L305 575.2L306 576.3L307 577.4L308 578.4L309 579.3L310 580.2L311 581.0L312 581.7L313 582.5L314 583.1L315 583.8L316 584.4L317 585.0L318 585.5L319 586.1L320 586.6L321 587.0L322 587.5L323 588.0L324 588.4L325 588.8L327 589.6L329 590.3L331 591.0L333 591.6L335 592.2L337 592.8L339 593.3L341 593.8L343 594.2L345 594.7L347 595.1L350 595.7L353 596.2L356 596.7L359 597.1L362 597.5L366 598.0L370 598.4L375 598.9L380 599.3L386 599.7L393 600.2L402 600.6L414 601.0L432 601.4L443 600.8L444 600.4L445 599.8L446 598.9L447 597.7L448 596.1L449 594.1L450 591.7L451 588.9L452 585.8L453 582.5L454 579.1L455 575.9L456 572.9L457 570.3L458 568.2L459 566.6L460 565.7L462 565.4L463 565.9L464 566.8L465 567.8L466 569.0L467 570.3L468 571.6L469 572.9L470 574.2L471 575.3L472 576.5L473 577.5L474 578.5L475 579.5L476 580.4L477 581.2L478 582.0L479 582.7L480 583.4L481 584.1L482 584.7L483 585.3L484 585.8L485 586.4L486 586.8L487 587.3L488 587.8L489 588.2L490 588.6L492 589.3L494 590.0L496 590.6L498 591.2L500 591.7L502 592.2L504 592.6L506 593.1L509 593.6L512 594.2L515 594.6L518 595.1L521 595.5L525 596.0L529 596.4L533 596.8L538 597.3L543 597.7L549 598.2L555 598.6L562 599.0L570 599.4L580 599.8L592 600.3L607 600.7L627 601.1L659 601.5L741 601.9L843 602.0" stroke="#c8ff00"/><path d="M75 602.0L124 601.6L132 602.0L188 601.8L189 600.5L190 595.6L191 582.1L192 555.9L193 521.4L194 491.3L195 476.4L196 477.0L197 485.8L198 496.8L199 507.1L200 516.1L201 523.8L202 530.5L203 536.3L204 541.3L205 545.8L206 549.7L207 553.1L208 556.2L209 558.9L210 561.3L211 563.5L212 565.5L213 567.4L214 569.1L215 570.6L216 572.0L217 573.3L218 574.6L219 575.7L220 576.8L221 577.9L222 578.8L223 579.7L224 580.6L225 581.4L226 582.2L227 583.0L228 583.7L229 584.4L230 585.0L231 585.6L232 586.3L233 586.8L234 587.4L235 587.9L236 588.4L237 588.9L238 589.4L239 589.9L240 590.3L241 590.7L242 591.1L244 591.9L246 592.6L248 593.3L250 593.9L252 594.5L254 595.0L256 595.5L258 595.9L260 596.4L263 597.0L266 597.5L269 597.9L273 598.4L275 598.1L276 597.3L277 595.6L278 592.5L279 587.4L280 580.1L281 570.7L282 560.1L283 549.5L284 540.6L285 534.3L286 531.1L287 530.9L288 533.0L289 536.4L290 540.5L291 544.7L292 548.7L293 552.4L294 555.7L295 558.7L296 561.4L297 563.8L298 566.0L299 568.0L300 569.8L301 571.4L302 572.9L303 574.3L304 575.5L305 576.7L306 577.7L307 578.7L308 579.7L309 580.5L310 581.3L311 582.1L312 582.8L313 583.5L314 584.1L315 584.7L316 585.3L317 585.9L318 586.4L319 586.9L320 587.4L321 587.8L322 588.3L323 588.7L324 589.1L326 589.9L328 590.6L330 591.2L332 591.9L334 592.5L336 593.0L338 593.5L340 594.0L342 594.5L344 594.9L346 595.3L349 595.8L352 596.4L355 596.8L358 597.3L362 597.8L366 598.2L370 598.7L375 599.1L381 599.6L388 600.0L396 600.4L407 600.8L422 601.3L442 600.8L443 600.4L444 599.7L445 598.8L446 597.5L447 595.8L448 593.7L449 591.1L450 588.1L451 584.8L452 581.3L453 577.6L454 574.1L455 570.9L456 568.2L457 565.9L458 564.3L459 563.3L461 563.0L462 563.6L463 564.5L464 565.7L465 567.0L466 568.3L467 569.7L468 571.1L469 572.4L470 573.7L471 574.9L472 576.1L473 577.1L474 578.1L475 579.1L476 580.0L477 580.8L478 581.6L479 582.3L480 583.0L481 583.7L482 584.3L483 584.9L484 585.4L485 585.9L486 586.4L487 586.9L488 587.4L489 587.8L490 588.2L492 588.9L494 589.6L496 590.3L498 590.8L500 591.4L502 591.9L504 592.3L506 592.7L508 593.1L511 593.7L514 594.2L517 594.7L520 595.1L524 595.6L528 596.1L532 596.5L537 597.0L542 597.5L547 597.9L553 598.3L560 598.8L568 599.2L577 599.6L588 600.1L601 600.5L618 600.9L643 601.3L689 601.7L843 602.0" stroke="#d8ff00"/><path d="M75 602.0L122 601.8L123 601.1L124 600.3L125 600.2L126 600.8L127 601.2L129 601.7L188 601.6L189 599.9L190 593.8L191 578.1L192 550.8L193 518.4L194 493.5L195 484.1L196 487.6L197 496.9L198 507.1L199 516.4L200 524.4L201 531.4L202 537.3L203 542.5L204 547.1L205 551.0L206 554.5L207 557.6L208 560.3L209 562.8L210 565.0L211 567.0L212 568.8L213 570.4L214 572.0L215 573.4L216 574.7L217 575.9L218 577.0L219 578.0L220 579.0L221 580.0L222 580.8L223 581.7L224 582.5L225 583.2L226 583.9L227 584.6L228 585.3L229 585.9L230 586.5L231 587.1L232 587.6L233 588.2L234 588.7L235 589.2L236 589.6L237 590.1L238 590.5L239 590.9L240 591.3L242 592.1L244 592.8L246 593.5L248 594.1L250 594.6L252 595.2L254 595.6L256 596.1L258 596.5L261 597.1L264 597.6L267 598.1L270 598.5L275 598.4L276 597.7L277 596.0L278 592.9L279 587.9L280 580.6L281 571.2L282 560.5L283 549.9L284 540.8L285 534.4L286 531.2L287 531.0L288 533.0L289 536.5L290 540.6L291 544.8L292 548.8L293 552.5L294 555.9L295 558.9L296 561.6L297 564.0L298 566.2L299 568.1L300 569.9L301 571.6L302 573.1L303 574.4L304 575.7L305 576.8L306 577.9L307 578.9L308 579.8L309 580.7L310 581.5L311 582.2L312 583.0L313 583.6L314 584.3L315 584.9L316 585.4L317 586.0L318 586.5L319 587.0L320 587.5L321 587.9L322 588.4L323 588.8L324 589.2L326 590.0L328 590.7L330 591.4L332 592.0L334 592.6L336 593.1L338 593.6L340 594.1L342 594.5L344 595.0L346 595.4L349 595.9L352 596.4L355 596.9L358 597.3L362 597.8L366 598.3L370 598.7L375 599.2L381 599.6L388 600.0L396 600.5L407 600.9L423 601.3L441 600.6L442 600.0L443 599.2L444 598.1L445 596.6L446 594.7L447 592.3L448 589.5L449 586.4L450 583.1L451 579.6L452 576.2L453 573.1L454 570.3L455 568.0L456 566.3L457 565.2L458 564.7L459 564.8L460 565.2L461 566.0L462 567.1L463 568.3L464 569.6L465 571.0L466 572.3L467 573.6L468 574.8L469 576.0L470 577.1L471 578.1L472 579.1L473 580.0L474 580.9L475 581.7L476 582.4L477 583.1L478 583.8L479 584.4L480 585.0L481 585.6L482 586.1L483 586.6L484 587.1L485 587.6L486 588.0L487 588.4L489 589.2L491 589.9L493 590.5L495 591.1L497 591.6L499 592.1L501 592.6L503 593.0L506 593.6L509 594.1L512 594.6L515 595.0L518 595.4L522 595.9L526 596.4L530 596.8L535 597.3L540 597.7L546 598.2L552 598.6L559 599.0L567 599.4L577 599.8L589 600.3L604 600.7L624 601.1L656 601.5L743 601.9L843 602.0" stroke="#ebff00"/><path d="M75 602.0L188 601.6L189 600.0L190 593.7L191 577.6L192 549.2L193 515.3L194 489.1L195 479.1L196 482.8L197 492.6L198 503.3L199 513.0L200 521.4L201 528.7L202 534.9L203 540.3L204 545.0L205 549.1L206 552.8L207 556.0L208 558.8L209 561.4L210 563.6L211 565.7L212 567.6L213 569.3L214 570.9L215 572.3L216 573.7L217 574.9L218 576.1L219 577.2L220 578.2L221 579.2L222 580.1L223 581.0L224 581.8L225 582.6L226 583.3L227 584.1L228 584.7L229 585.4L230 586.0L231 586.6L232 587.2L233 587.7L234 588.3L235 588.8L236 589.3L237 589.7L238 590.2L239 590.6L240 591.0L241 591.4L243 592.2L245 592.9L247 593.5L249 594.1L251 594.7L253 595.2L255 595.7L257 596.2L259 596.6L262 597.2L265 597.7L268 598.1L272 598.6L275 598.2L276 597.3L277 595.3L278 591.7L279 586.0L280 577.8L281 567.5L282 556.1L283 545.0L284 535.9L285 529.8L286 527.2L287 527.5L288 530.1L289 534.0L290 538.4L291 542.8L292 547.0L293 550.8L294 554.3L295 557.4L296 560.2L297 562.7L298 564.9L299 567.0L300 568.8L301 570.5L302 572.0L303 573.4L304 574.7L305 575.9L306 577.0L307 578.0L308 579.0L309 579.9L310 580.7L311 581.5L312 582.2L313 582.9L314 583.6L315 584.2L316 584.8L317 585.4L318 585.9L319 586.4L320 586.9L321 587.4L322 587.9L323 588.3L324 588.7L325 589.1L327 589.9L329 590.6L331 591.3L333 591.9L335 592.5L337 593.1L339 593.6L341 594.1L343 594.5L345 594.9L347 595.3L350 595.9L353 596.4L356 596.9L359 597.3L363 597.8L367 598.3L371 598.7L376 599.2L382 599.6L389 600.1L397 600.5L408 600.9L424 601.3L442 600.6L443 600.0L444 599.2L445 598.0L446 596.5L447 594.5L448 592.1L449 589.3L450 586.1L451 582.7L452 579.1L453 575.6L454 572.4L455 569.5L456 567.2L457 565.5L458 564.4L459 563.8L460 563.9L461 564.4L462 565.2L463 566.3L464 567.6L465 568.9L466 570.3L467 571.7L468 573.0L469 574.3L470 575.5L471 576.6L472 577.7L473 578.7L474 579.6L475 580.5L476 581.3L477 582.1L478 582.8L479 583.5L480 584.1L481 584.7L482 585.3L483 585.9L484 586.4L485 586.9L486 587.3L487 587.8L488 588.2L490 589.0L492 589.7L494 590.3L496 590.9L498 591.4L500 591.9L502 592.4L504 592.8L506 593.2L509 593.8L512 594.3L515 594.8L518 595.2L522 595.7L526 596.2L530 596.6L535 597.1L540 597.6L546 598.1L552 598.5L559 598.9L567 599.3L576 599.7L587 600.2L601 600.6L619 601.0L647 601.4L706 601.8L843 602.0" stroke="#fffb00"/><path d="M75 602.0L188 601.6L189 599.8L190 593.1L191 576.2L192 546.9L193 512.5L194 486.8L195 477.7L196 482.0L197 492.1L198 503.0L199 512.8L200 521.2L201 528.5L202 534.7L203 540.1L204 544.9L205 549.0L206 552.6L207 555.8L208 558.7L209 561.2L210 563.5L211 565.6L212 567.5L213 569.2L214 570.8L215 572.3L216 573.6L217 574.9L218 576.0L219 577.1L220 578.2L221 579.2L222 580.1L223 581.0L224 581.8L225 582.6L226 583.3L227 584.0L228 584.7L229 585.4L230 586.0L231 586.6L232 587.2L233 587.7L234 588.3L235 588.8L236 589.3L237 589.7L238 590.2L239 590.6L240 591.1L241 591.5L243 592.2L245 592.9L247 593.6L249 594.2L251 594.7L253 595.3L255 595.8L257 596.2L259 596.6L262 597.2L265 597.7L268 598.2L272 598.7L275 598.2L276 597.3L277 595.3L278 591.8L279 586.1L280 578.3L281 568.7L282 558.2L283 548.4L284 540.5L285 535.5L286 533.7L287 534.5L288 537.1L289 540.8L290 544.9L291 549.0L292 552.7L293 556.1L294 559.2L295 562.0L296 564.5L297 566.7L298 568.7L299 570.5L300 572.2L301 573.7L302 575.0L303 576.3L304 577.5L305 578.5L306 579.5L307 580.4L308 581.3L309 582.1L310 582.8L311 583.5L312 584.2L313 584.8L314 585.4L315 586.0L316 586.5L317 587.0L318 587.5L319 588.0L320 588.5L321 588.9L322 589.3L324 590.1L326 590.8L328 591.5L330 592.1L332 592.7L334 593.2L336 593.7L338 594.2L340 594.7L342 595.1L345 595.7L348 596.2L351 596.7L354 597.2L357 597.6L361 598.1L365 598.5L370 599.0L375 599.4L381 599.8L388 600.2L397 600.6L409 601.0L428 601.5L442 600.8L443 600.3L444 599.5L445 598.4L446 597.0L447 595.2L448 592.9L449 590.1L450 587.0L451 583.6L452 580.0L453 576.5L454 573.1L455 570.2L456 567.7L457 565.8L458 564.5L459 563.9L460 563.8L461 564.2L462 565.0L463 566.0L464 567.3L465 568.6L466 570.0L467 571.4L468 572.7L469 574.0L470 575.2L471 576.4L472 577.5L473 578.5L474 579.4L475 580.3L476 581.2L477 582.0L478 582.7L479 583.4L480 584.1L481 584.7L482 585.3L483 585.8L484 586.3L485 586.8L486 587.3L487 587.7L488 588.2L489 588.6L491 589.3L493 590.0L495 590.6L497 591.2L499 591.7L501 592.2L503 592.6L505 593.0L508 593.6L511 594.2L514 594.6L517 595.1L520 595.5L524 596.0L528 596.5L532 596.9L537 597.3L542 597.8L548 598.2L554 598.6L561 599.0L569 599.5L579 599.9L591 600.3L606 600.7L627 601.1L661 601.5L774 601.9L843 602.0" stroke="#ffde00"/><path d="M75 602.0L203 601.7L204 599.1L205 586.1L206 547.3L207 481.0L208 421.0L209 403.0L210 418.2L211 446.1L212 471.8L213 492.7L214 509.2L215 522.4L216 532.9L217 541.5L218 548.4L219 554.2L220 558.9L221 562.9L222 566.2L223 569.1L224 571.6L225 573.7L226 575.7L227 577.4L228 578.9L229 580.3L230 581.6L231 582.7L232 583.8L233 584.8L234 585.7L235 586.6L236 587.4L237 588.2L238 588.9L239 589.6L240 590.2L241 590.9L242 591.4L243 592.0L244 592.5L245 593.0L246 593.4L247 593.9L248 594.3L250 595.0L252 595.7L254 596.4L256 596.9L258 597.4L260 597.9L262 598.3L265 598.8L268 599.3L272 599.8L276 600.2L281 600.6L288 601.0L299 601.2L300 600.6L301 599.3L302 596.4L303 590.9L304 581.7L305 568.2L306 550.9L307 531.8L308 513.8L309 500.0L310 492.5L311 491.8L312 496.7L313 505.2L314 515.3L315 525.4L316 534.7L317 542.9L318 549.9L319 555.7L320 560.7L321 564.8L322 568.4L323 571.4L324 574.0L325 576.2L326 578.1L327 579.8L328 581.3L329 582.6L330 583.8L331 584.8L332 585.8L333 586.7L334 587.4L335 588.2L336 588.9L337 589.5L338 590.1L339 590.6L340 591.1L341 591.6L342 592.1L343 592.5L344 592.9L346 593.7L348 594.3L350 595.0L352 595.5L354 596.1L356 596.5L358 597.0L360 597.4L363 597.9L366 598.4L369 598.8L373 599.3L377 599.7L382 600.2L388 600.6L396 601.0L408 601.4L433 601.8L488 601.0L489 600.4L490 599.5L491 598.3L492 596.6L493 594.3L494 591.4L495 587.8L496 583.5L497 578.5L498 573.1L499 567.3L500 561.5L501 555.9L502 550.9L503 546.6L504 543.4L505 541.4L506 540.6L507 540.9L508 542.3L509 544.6L510 547.6L511 551.0L512 554.7L513 558.5L514 562.1L515 565.7L516 568.9L517 571.9L518 574.6L519 577.1L520 579.2L521 581.1L522 582.8L523 584.3L524 585.6L525 586.8L526 587.8L527 588.8L528 589.6L529 590.3L530 591.0L531 591.6L532 592.2L533 592.7L534 593.1L535 593.6L537 594.3L539 595.0L541 595.5L543 596.1L545 596.5L547 596.9L550 597.5L553 597.9L556 598.3L560 598.8L564 599.2L569 599.7L575 600.1L582 600.5L592 601.0L607 601.4L638 601.8L843 602.0" stroke="#006aff"/><path d="M75 602.0L202 601.9L203 601.2L204 596.3L205 575.4L206 524.9L207 455.7L208 408.5L209 404.6L210 427.3L211 454.9L212 478.7L213 497.8L214 513.0L215 525.3L216 535.1L217 543.2L218 549.7L219 555.2L220 559.7L221 563.5L222 566.7L223 569.5L224 571.9L225 574.0L226 575.9L227 577.6L228 579.1L229 580.4L230 581.7L231 582.8L232 583.9L233 584.9L234 585.8L235 586.7L236 587.5L237 588.2L238 588.9L239 589.6L240 590.2L241 590.8L242 591.4L243 591.9L244 592.4L245 592.9L246 593.4L247 593.8L248 594.2L250 595.0L252 595.7L254 596.3L256 596.9L258 597.4L260 597.8L262 598.2L265 598.8L268 599.2L272 599.7L276 600.2L281 600.6L288 601.0L297 601.0L298 600.4L299 598.8L300 595.5L301 589.4L302 579.5L303 565.4L304 547.8L305 528.9L306 511.6L307 499.1L308 492.9L309 493.3L310 498.9L311 507.6L312 517.6L313 527.5L314 536.5L315 544.3L316 551.0L317 556.6L318 561.4L319 565.4L320 568.8L321 571.8L322 574.3L323 576.5L324 578.4L325 580.0L326 581.5L327 582.8L328 583.9L329 585.0L330 585.9L331 586.8L332 587.5L333 588.3L334 588.9L335 589.6L336 590.1L337 590.7L338 591.2L339 591.7L340 592.1L341 592.5L342 592.9L344 593.7L346 594.4L348 595.0L350 595.5L352 596.1L354 596.5L356 597.0L359 597.6L362 598.1L365 598.5L368 598.9L372 599.4L377 599.9L383 600.3L390 600.8L400 601.2L417 601.6L488 601.0L489 600.4L490 599.6L491 598.3L492 596.7L493 594.4L494 591.6L495 588.1L496 584.0L497 579.2L498 574.0L499 568.6L500 563.1L501 557.9L502 553.3L503 549.4L504 546.5L505 544.7L506 544.0L507 544.4L508 545.9L509 548.1L510 550.9L511 554.2L512 557.6L513 561.1L514 564.6L515 567.8L516 570.9L517 573.7L518 576.2L519 578.5L520 580.5L521 582.2L522 583.8L523 585.2L524 586.5L525 587.6L526 588.6L527 589.4L528 590.2L529 590.9L530 591.6L531 592.1L532 592.7L533 593.1L534 593.6L535 594.0L537 594.7L539 595.3L541 595.9L543 596.3L545 596.8L548 597.3L551 597.8L554 598.3L558 598.7L562 599.2L567 599.6L573 600.1L580 600.5L589 600.9L602 601.3L626 601.7L843 602.0" stroke="#006eff"/><path d="M75 602.0L203 601.7L204 599.5L205 587.5L206 551.2L207 487.4L208 427.3L209 405.7L210 419.6L211 446.0L212 471.0L213 491.4L214 507.8L215 521.0L216 531.6L217 540.3L218 547.4L219 553.2L220 558.1L221 562.2L222 565.6L223 568.6L224 571.1L225 573.4L226 575.3L227 577.1L228 578.6L229 580.0L230 581.3L231 582.5L232 583.6L233 584.6L234 585.5L235 586.4L236 587.2L237 588.0L238 588.7L239 589.4L240 590.0L241 590.6L242 591.2L243 591.7L244 592.2L245 592.7L246 593.2L247 593.6L248 594.0L250 594.8L252 595.5L254 596.1L256 596.7L258 597.2L260 597.7L262 598.1L265 598.6L268 599.1L271 599.5L275 600.0L280 600.4L286 600.8L295 601.3L299 601.0L300 600.3L301 598.7L302 595.3L303 589.0L304 578.9L305 564.5L306 546.7L307 527.6L308 510.4L309 498.0L310 492.0L311 492.5L312 498.2L313 506.9L314 516.9L315 526.8L316 535.7L317 543.5L318 550.2L319 555.9L320 560.7L321 564.8L322 568.2L323 571.2L324 573.8L325 576.0L326 577.9L327 579.6L328 581.1L329 582.4L330 583.6L331 584.7L332 585.6L333 586.5L334 587.3L335 588.0L336 588.7L337 589.3L338 589.9L339 590.5L340 591.0L341 591.5L342 591.9L343 592.3L344 592.8L346 593.5L348 594.2L350 594.8L352 595.4L354 595.9L356 596.4L358 596.8L360 597.2L363 597.8L366 598.3L369 598.7L373 599.2L377 599.6L382 600.0L388 600.5L396 600.9L408 601.3L430 601.7L489 601.0L490 600.5L491 599.7L492 598.5L493 596.9L494 594.7L495 592.0L496 588.6L497 584.6L498 580.0L499 574.9L500 569.6L501 564.2L502 559.0L503 554.4L504 550.5L505 547.5L506 545.7L507 544.9L508 545.2L509 546.5L510 548.6L511 551.3L512 554.5L513 557.8L514 561.3L515 564.6L516 567.9L517 570.9L518 573.6L519 576.1L520 578.4L521 580.4L522 582.2L523 583.7L524 585.2L525 586.4L526 587.5L527 588.5L528 589.4L529 590.2L530 590.9L531 591.5L532 592.1L533 592.6L534 593.1L535 593.6L536 594.0L538 594.7L540 595.3L542 595.9L544 596.3L546 596.8L549 597.3L552 597.8L555 598.2L559 598.7L563 599.2L568 599.6L574 600.0L581 600.5L590 600.9L603 601.3L627 601.7L843 602.0" stroke="#0073ff"/><path d="M75 602.0L203 601.7L204 599.4L205 587.5L206 551.0L207 486.9L208 426.2L209 404.0L210 417.5L211 443.7L212 468.7L213 489.2L214 505.7L215 519.1L216 529.9L217 538.7L218 546.0L219 552.0L220 556.9L221 561.1L222 564.7L223 567.7L224 570.4L225 572.7L226 574.7L227 576.5L228 578.1L229 579.5L230 580.8L231 582.0L232 583.2L233 584.2L234 585.1L235 586.0L236 586.8L237 587.6L238 588.3L239 589.0L240 589.7L241 590.3L242 590.9L243 591.4L244 592.0L245 592.4L246 592.9L247 593.4L248 593.8L249 594.2L251 594.9L253 595.6L255 596.2L257 596.8L259 597.3L261 597.7L263 598.1L266 598.7L269 599.1L273 599.6L277 600.1L282 600.5L289 600.9L300 601.0L301 600.4L302 598.9L303 595.8L304 589.9L305 580.4L306 566.8L307 549.8L308 531.4L309 514.6L310 502.2L311 496.0L312 496.1L313 501.1L314 509.3L315 518.8L316 528.3L317 536.9L318 544.5L319 551.1L320 556.6L321 561.3L322 565.3L323 568.7L324 571.7L325 574.2L326 576.4L327 578.3L328 580.0L329 581.5L330 582.8L331 583.9L332 585.0L333 585.9L334 586.8L335 587.6L336 588.3L337 589.0L338 589.6L339 590.2L340 590.7L341 591.2L342 591.7L343 592.1L344 592.5L346 593.3L348 594.0L350 594.6L352 595.2L354 595.8L356 596.2L358 596.7L360 597.1L363 597.7L366 598.1L369 598.6L373 599.1L377 599.5L382 600.0L388 600.4L396 600.8L407 601.3L427 601.7L487 601.1L488 600.6L489 599.8L490 598.7L491 597.1L492 595.1L493 592.4L494 589.0L495 585.0L496 580.4L497 575.2L498 569.7L499 564.1L500 558.7L501 553.7L502 549.4L503 546.1L504 543.9L505 542.8L506 542.8L507 543.9L508 545.8L509 548.4L510 551.6L511 555.0L512 558.5L513 562.0L514 565.4L515 568.6L516 571.5L517 574.2L518 576.6L519 578.7L520 580.7L521 582.4L522 583.9L523 585.2L524 586.4L525 587.5L526 588.5L527 589.3L528 590.1L529 590.8L530 591.4L531 592.0L532 592.5L533 593.0L534 593.4L535 593.8L537 594.6L539 595.2L541 595.7L543 596.2L545 596.7L548 597.2L551 597.7L554 598.1L558 598.6L562 599.1L567 599.5L573 600.0L580 600.4L589 600.8L602 601.2L625 601.6L843 602.0" stroke="#0078ff"/><path d="M75 602.0L203 601.6L204 598.3L205 583.0L206 540.6L207 473.5L208 417.6L209 403.3L210 420.1L211 446.6L212 470.7L213 490.5L214 506.5L215 519.5L216 530.1L217 538.7L218 545.8L219 551.8L220 556.7L221 560.9L222 564.4L223 567.5L224 570.1L225 572.4L226 574.4L227 576.2L228 577.8L229 579.3L230 580.6L231 581.8L232 582.9L233 584.0L234 584.9L235 585.8L236 586.6L237 587.4L238 588.2L239 588.8L240 589.5L241 590.1L242 590.7L243 591.3L244 591.8L245 592.3L246 592.7L247 593.2L248 593.6L249 594.0L251 594.8L253 595.5L255 596.1L257 596.6L259 597.1L261 597.6L263 598.0L266 598.5L269 599.0L272 599.4L276 599.9L281 600.3L287 600.8L296 601.2L298 600.9L299 600.3L300 598.8L301 595.7L302 589.8L303 580.2L304 566.4L305 549.0L306 530.2L307 512.8L308 499.8L309 493.0L310 492.7L311 497.6L312 505.9L313 515.5L314 525.2L315 534.1L316 541.9L317 548.7L318 554.4L319 559.3L320 563.5L321 567.1L322 570.2L323 572.8L324 575.1L325 577.1L326 578.9L327 580.5L328 581.8L329 583.1L330 584.2L331 585.2L332 586.1L333 586.9L334 587.7L335 588.4L336 589.0L337 589.6L338 590.2L339 590.7L340 591.2L341 591.7L342 592.1L343 592.5L345 593.3L347 594.0L349 594.6L351 595.2L353 595.7L355 596.2L357 596.6L359 597.0L362 597.6L365 598.1L368 598.5L372 599.0L376 599.5L381 599.9L387 600.4L395 600.8L406 601.2L425 601.6L495 601.3L496 600.9L497 600.3L498 599.4L499 598.1L500 596.3L501 594.0L502 591.0L503 587.3L504 583.0L505 578.2L506 572.8L507 567.3L508 561.7L509 556.4L510 551.7L511 547.8L512 545.0L513 543.2L514 542.6L515 543.1L516 544.5L517 546.7L518 549.6L519 552.8L520 556.3L521 559.8L522 563.3L523 566.5L524 569.6L525 572.4L526 575.0L527 577.3L528 579.3L529 581.2L530 582.8L531 584.2L532 585.5L533 586.7L534 587.7L535 588.6L536 589.5L537 590.2L538 590.9L539 591.5L540 592.1L541 592.6L542 593.1L543 593.5L545 594.3L547 594.9L549 595.5L551 596.0L553 596.5L555 596.9L558 597.4L561 597.9L564 598.3L568 598.7L572 599.2L577 599.6L583 600.0L590 600.4L599 600.8L612 601.2L635 601.6L843 602.0" stroke="#007dff"/><path d="M75 602.0L202 602.0L203 601.5L204 598.0L205 581.8L206 539.2L207 474.9L208 424.7L209 413.8L210 431.3L211 456.1L212 478.4L213 496.8L214 511.6L215 523.7L216 533.6L217 541.8L218 548.5L219 554.1L220 558.8L221 562.7L222 566.1L223 569.0L224 571.5L225 573.7L226 575.7L227 577.4L228 578.9L229 580.3L230 581.6L231 582.7L232 583.8L233 584.7L234 585.7L235 586.5L236 587.3L237 588.0L238 588.7L239 589.4L240 590.0L241 590.6L242 591.1L243 591.7L244 592.2L245 592.6L246 593.1L247 593.5L248 593.9L250 594.7L252 595.4L254 596.0L256 596.5L258 597.0L260 597.5L262 597.9L265 598.5L268 598.9L271 599.4L275 599.8L280 600.3L286 600.7L294 601.1L298 601.0L299 600.5L300 599.2L301 596.4L302 591.0L303 582.0L304 568.7L305 551.5L306 532.4L307 514.1L308 499.8L309 491.5L310 490.0L311 494.0L312 501.8L313 511.4L314 521.2L315 530.5L316 538.6L317 545.7L318 551.8L319 557.0L320 561.4L321 565.2L322 568.5L323 571.3L324 573.8L325 575.9L326 577.8L327 579.4L328 580.9L329 582.2L330 583.4L331 584.4L332 585.4L333 586.3L334 587.1L335 587.8L336 588.5L337 589.1L338 589.7L339 590.2L340 590.7L341 591.2L342 591.7L343 592.1L344 592.5L346 593.3L348 593.9L350 594.6L352 595.1L354 595.7L356 596.1L358 596.6L360 597.0L363 597.5L366 598.0L369 598.5L373 599.0L377 599.4L382 599.9L388 600.3L395 600.7L405 601.1L421 601.5L471 601.9L488 601.3L489 600.9L490 600.3L491 599.4L492 598.1L493 596.3L494 594.0L495 591.0L496 587.4L497 583.1L498 578.3L499 573.0L500 567.4L501 561.9L502 556.6L503 551.9L504 548.0L505 545.1L506 543.3L507 542.7L508 543.1L509 544.5L510 546.7L511 549.5L512 552.7L513 556.1L514 559.6L515 563.0L516 566.3L517 569.3L518 572.1L519 574.7L520 577.0L521 579.0L522 580.9L523 582.5L524 584.0L525 585.3L526 586.5L527 587.5L528 588.5L529 589.3L530 590.1L531 590.8L532 591.4L533 592.0L534 592.5L535 593.0L536 593.4L537 593.8L539 594.5L541 595.1L543 595.7L545 596.2L547 596.6L550 597.2L553 597.7L556 598.1L560 598.6L564 599.0L569 599.5L575 599.9L582 600.3L591 600.8L604 601.2L625 601.6L733 602.0L843 602.0" stroke="#0081ff"/><path d="M75 602.0L203 601.7L204 599.2L205 586.5L206 549.6L207 487.7L208 432.5L209 414.5L210 428.3L211 452.4L212 475.0L213 493.7L214 509.0L215 521.4L216 531.7L217 540.1L218 547.0L219 552.8L220 557.7L221 561.8L222 565.3L223 568.3L224 570.9L225 573.2L226 575.1L227 576.5L228 576.8L229 575.1L230 571.4L231 567.2L232 565.1L233 566.0L234 568.9L235 572.2L236 575.2L237 577.8L238 580.0L239 581.8L240 583.4L241 584.7L242 585.9L243 587.0L244 587.9L245 588.7L246 589.5L247 590.2L248 590.8L249 591.4L250 592.0L251 592.5L252 593.0L253 593.4L254 593.8L255 594.2L257 595.0L259 595.6L261 596.2L263 596.8L265 597.3L267 597.7L270 598.3L273 598.8L276 599.2L280 599.7L284 600.1L289 600.5L296 600.9L299 600.7L300 600.0L301 598.4L302 595.1L303 588.9L304 579.0L305 565.0L306 547.8L307 529.5L308 513.0L309 501.0L310 495.2L311 495.5L312 500.7L313 508.7L314 517.9L315 527.0L316 535.2L317 542.1L318 547.7L319 551.8L320 554.6L321 556.0L322 556.3L323 555.8L324 554.7L325 553.4L326 552.2L327 551.2L328 550.7L329 550.7L330 551.3L331 552.6L332 554.6L333 557.0L334 559.9L335 562.9L336 566.0L337 568.9L338 571.5L339 573.9L340 576.0L341 577.9L342 579.6L343 581.0L344 582.3L345 583.5L346 584.5L347 585.5L348 586.3L349 587.1L350 587.8L351 588.5L352 589.1L353 589.7L354 590.2L355 590.7L356 591.2L357 591.7L358 592.1L359 592.5L361 593.3L363 593.9L365 594.6L367 595.2L369 595.7L371 596.2L373 596.6L375 597.0L378 597.6L381 598.1L384 598.5L388 599.0L392 599.5L397 599.9L403 600.4L411 600.8L422 601.2L441 601.6L489 601.1L490 600.6L491 599.9L492 598.8L493 597.3L494 595.3L495 592.8L496 589.6L497 585.9L498 581.5L499 576.7L500 571.6L501 566.4L502 561.4L503 556.8L504 552.9L505 549.8L506 547.7L507 546.7L508 546.8L509 547.7L510 549.5L511 551.9L512 554.7L513 557.8L514 561.1L515 564.3L516 567.3L517 570.3L518 573.0L519 575.4L520 577.6L521 579.6L522 581.4L523 583.0L524 584.5L525 585.7L526 586.8L527 587.8L528 588.6L529 589.3L530 589.9L531 590.3L535 590.2L536 589.7L537 588.9L538 587.9L539 586.7L540 585.2L541 583.6L542 581.8L543 580.0L544 578.1L545 576.3L546 574.6L547 573.1L548 571.9L549 571.0L550 570.4L552 570.3L553 570.7L554 571.5L555 572.5L556 573.7L557 575.0L558 576.5L559 578.0L560 579.5L561 580.9L562 582.3L563 583.7L564 584.9L565 586.0L566 587.1L567 588.0L568 588.9L569 589.7L570 590.4L571 591.1L572 591.7L573 592.2L574 592.7L575 593.2L576 593.6L578 594.3L580 595.0L582 595.5L584 596.0L586 596.5L588 596.9L591 597.4L594 597.9L597 598.3L601 598.8L605 599.2L610 599.6L616 600.1L623 600.5L633 600.9L647 601.3L674 601.7L843 602.0" stroke="#0086ff"/><path d="M75 602.0L203 601.7L204 599.0L205 585.9L206 547.7L207 484.1L208 427.6L209 409.2L210 422.7L211 445.8L212 465.6L213 480.0L214 491.0L215 501.5L216 512.4L217 523.0L218 532.4L219 540.4L220 547.0L221 552.6L222 557.3L223 561.2L224 564.6L225 567.5L226 570.1L227 572.3L228 574.2L229 576.0L230 577.6L231 579.0L232 580.3L233 581.5L234 582.6L235 583.6L236 584.6L237 585.4L238 586.3L239 587.0L240 587.8L241 588.5L242 589.1L243 589.7L244 590.3L245 590.9L246 591.4L247 591.9L248 592.4L249 592.8L250 593.3L251 593.7L253 594.4L255 595.1L257 595.8L259 596.3L261 596.8L263 597.3L265 597.7L268 598.3L271 598.8L274 599.2L278 599.7L283 600.2L289 600.6L298 600.6L299 599.8L300 597.9L301 594.0L302 587.1L303 576.4L304 561.6L305 544.1L306 526.0L307 510.5L308 499.8L309 495.4L310 496.8L311 502.6L312 510.7L313 519.5L314 527.8L315 535.0L316 541.0L317 545.8L318 549.7L319 552.9L320 555.7L321 558.4L322 561.0L323 563.7L324 566.4L325 569.0L326 571.5L327 573.8L328 575.8L329 577.4L330 578.7L331 579.4L332 579.6L333 579.2L334 578.1L335 576.6L336 574.8L337 573.0L338 571.5L339 570.4L340 569.9L345 569.3L346 568.8L347 568.4L350 568.6L351 569.3L352 570.5L353 571.9L354 573.6L355 575.4L356 577.3L357 579.1L358 580.9L359 582.5L360 584.0L361 585.2L362 586.4L363 587.4L364 588.3L365 589.1L366 589.8L367 590.5L368 591.1L369 591.6L370 592.1L371 592.6L372 593.0L373 593.4L375 594.2L377 594.8L379 595.4L381 595.9L383 596.4L385 596.9L387 597.3L390 597.8L393 598.3L396 598.7L400 599.2L404 599.6L409 600.1L415 600.5L423 600.9L435 601.3L457 601.7L489 601.2L490 600.7L491 600.1L492 599.1L493 597.7L494 595.9L495 593.5L496 590.5L497 586.9L498 582.6L499 577.8L500 572.7L501 567.4L502 562.2L503 557.3L504 553.1L505 549.6L506 547.2L507 545.7L508 545.4L509 546.1L510 547.6L511 549.8L512 552.5L513 555.6L514 558.8L515 562.0L516 565.1L517 568.0L518 570.7L519 573.1L520 575.1L521 576.9L522 578.2L523 579.3L524 580.0L527 580.0L528 579.3L529 578.4L530 577.3L531 576.1L532 574.8L533 573.5L534 572.2L535 571.1L536 570.2L537 569.6L540 569.4L541 569.9L542 570.6L543 571.5L544 572.4L545 573.4L546 574.3L547 575.1L548 575.7L549 576.2L553 576.1L554 575.7L555 575.2L556 574.7L557 574.3L559 573.7L562 574.2L563 574.7L564 575.4L565 576.3L566 577.3L567 578.5L568 579.6L569 580.8L570 582.0L571 583.2L572 584.3L573 585.4L574 586.4L575 587.3L576 588.2L577 589.0L578 589.7L579 590.4L580 591.0L581 591.6L582 592.1L583 592.6L584 593.0L585 593.4L587 594.1L589 594.8L591 595.3L593 595.8L595 596.3L597 596.7L600 597.3L603 597.7L606 598.2L610 598.7L614 599.1L619 599.5L625 600.0L632 600.4L641 600.8L654 601.3L677 601.7L843 602.0" stroke="#008bff"/><path d="M75 602.0L202 602.0L203 601.5L204 597.6L205 580.4L206 536.1L207 471.2L208 422.1L209 412.5L210 429.9L211 453.9L212 475.2L213 491.6L214 502.1L215 507.1L216 509.2L217 512.5L218 518.8L219 527.2L220 535.7L221 543.2L222 549.5L223 554.7L224 559.1L225 562.6L226 565.0L227 565.8L228 564.9L229 562.5L230 559.2L231 555.6L232 553.5L233 554.1L234 557.2L235 561.5L236 565.7L237 569.3L238 572.4L239 574.9L240 577.1L241 579.0L242 580.6L243 582.1L244 583.3L245 584.5L246 585.5L247 586.4L248 587.3L249 588.1L250 588.8L251 589.5L252 590.1L253 590.7L254 591.3L255 591.8L256 592.3L257 592.8L258 593.2L259 593.6L260 594.0L262 594.8L264 595.5L266 596.1L268 596.6L270 597.1L272 597.6L274 598.0L277 598.5L280 599.0L283 599.4L287 599.9L292 600.3L298 600.4L299 599.7L300 598.2L301 595.0L302 589.0L303 579.4L304 565.7L305 548.8L306 530.8L307 514.4L308 502.3L309 496.2L310 496.2L311 501.0L312 508.7L313 517.7L314 526.7L315 535.0L316 542.3L317 548.7L318 554.2L319 559.0L320 563.1L321 566.6L322 569.7L323 572.3L324 574.6L325 576.6L326 578.4L327 579.9L328 581.1L329 581.9L330 582.5L332 582.3L333 581.6L334 580.7L335 579.7L336 578.9L337 578.3L342 577.8L343 577.2L344 576.3L345 575.2L346 574.0L347 573.0L348 572.3L349 572.2L350 572.7L351 573.8L352 575.2L353 577.0L354 578.8L355 580.7L356 582.4L357 584.0L358 585.4L359 586.7L360 587.7L361 588.7L362 589.6L363 590.3L364 591.0L365 591.6L366 592.1L367 592.6L368 593.1L369 593.5L371 594.3L373 594.9L375 595.5L377 596.1L379 596.5L381 597.0L384 597.5L387 598.0L390 598.5L394 599.0L398 599.5L403 599.9L409 600.4L417 600.8L428 601.2L447 601.6L492 601.1L493 600.6L494 599.8L495 598.7L496 597.2L497 595.3L498 592.8L499 589.7L500 586.0L501 581.8L502 577.2L503 572.3L504 567.4L505 562.7L506 558.4L507 554.7L508 551.8L509 549.8L510 548.6L511 548.4L512 548.9L513 550.0L514 551.6L515 553.4L516 555.3L517 557.3L518 559.1L519 560.8L520 562.4L521 563.7L522 565.0L523 566.1L524 567.2L525 568.2L526 569.2L527 570.3L528 571.3L529 572.3L530 573.3L531 574.3L532 575.3L533 576.3L534 577.1L535 578.0L536 578.7L537 579.5L538 580.2L539 580.9L540 581.6L541 582.3L542 583.0L543 583.7L544 584.4L545 585.1L546 585.8L547 586.5L548 587.2L549 587.8L550 588.3L551 588.8L553 589.5L559 588.9L561 588.1L563 587.4L565 586.9L570 587.7L571 588.1L572 588.6L573 589.2L574 589.8L575 590.5L576 591.1L577 591.7L578 592.3L579 592.8L580 593.4L581 593.9L582 594.3L583 594.7L585 595.5L587 596.1L589 596.7L591 597.1L594 597.7L597 598.2L600 598.6L604 599.0L609 599.5L615 600.0L622 600.4L631 600.8L644 601.2L667 601.6L843 602.0" stroke="#0090ff"/><path d="M75 602.0L202 601.9L203 601.2L204 596.1L205 575.4L206 526.8L207 462.3L208 419.2L209 414.9L210 434.0L211 457.6L212 478.5L213 495.7L214 510.0L215 521.7L216 531.4L217 539.4L218 545.8L219 549.4L220 547.9L221 539.0L222 524.8L223 512.8L224 509.6L225 515.1L226 524.6L227 534.2L228 542.4L229 549.1L230 554.3L231 557.4L232 558.2L233 556.9L234 555.7L235 556.4L236 559.1L237 562.7L238 566.4L239 569.6L240 572.4L241 574.7L242 576.7L243 578.5L244 580.0L245 581.4L246 582.6L247 583.8L248 584.8L249 585.7L250 586.6L251 587.4L252 588.1L253 588.8L254 589.5L255 590.1L256 590.7L257 591.3L258 591.8L259 592.3L260 592.7L261 593.2L262 593.6L263 594.0L265 594.8L267 595.4L269 596.0L271 596.6L273 597.1L275 597.6L277 598.0L280 598.5L283 599.0L286 599.4L290 599.9L295 600.3L300 600.0L301 598.9L302 596.5L303 591.8L304 583.8L305 571.9L306 556.3L307 538.5L308 521.2L309 507.1L310 498.5L311 495.9L312 498.5L313 504.5L314 512.0L315 519.4L316 525.6L317 530.1L318 532.9L319 534.2L322 534.5L323 535.2L324 536.9L325 539.5L326 543.0L327 547.0L328 551.2L329 555.5L330 559.4L331 563.1L332 566.3L333 569.2L334 571.7L335 573.7L336 575.5L337 576.8L338 577.7L340 577.9L341 577.2L342 576.0L343 574.6L344 573.2L345 572.1L346 571.6L347 571.7L348 572.4L349 573.6L350 574.9L351 576.3L352 577.5L353 578.4L354 579.0L355 579.4L357 580.1L358 580.5L359 581.2L360 582.1L361 583.1L362 584.2L363 585.3L364 586.4L365 587.5L366 588.4L367 589.3L368 590.0L369 590.7L370 591.3L371 591.9L372 592.4L373 592.9L374 593.3L375 593.7L377 594.4L379 595.1L381 595.6L383 596.1L385 596.6L387 597.0L390 597.6L393 598.1L396 598.5L400 599.1L404 599.5L409 599.9L415 600.4L423 600.8L434 601.2L453 601.6L481 600.9L482 600.4L483 599.6L484 598.4L485 596.8L486 594.8L487 592.1L488 588.9L489 585.0L490 580.6L491 575.8L492 570.8L493 565.8L494 560.9L495 556.6L496 553.0L497 550.2L498 548.5L499 547.7L500 547.9L501 549.0L502 550.9L503 553.3L504 556.0L505 559.0L506 562.1L507 565.2L508 568.1L509 570.9L510 573.4L511 575.7L512 577.8L513 579.7L514 581.4L515 582.8L516 584.0L517 585.1L518 586.0L519 586.6L520 587.1L522 587.5L525 586.8L526 586.3L527 585.7L528 585.1L529 584.4L530 583.8L531 583.3L532 582.8L534 582.4L537 583.0L538 583.5L539 584.2L540 584.9L541 585.7L542 586.5L543 587.4L544 588.2L545 589.0L546 589.8L547 590.6L548 591.3L549 591.9L550 592.5L551 593.0L552 593.5L553 594.0L554 594.4L556 595.1L558 595.8L560 596.3L562 596.7L564 597.1L567 597.7L570 598.1L574 598.6L578 599.1L583 599.5L589 600.0L596 600.4L605 600.8L618 601.2L640 601.6L843 602.0" stroke="#0094ff"/><path d="M75 602.0L203 601.6L204 598.8L205 585.3L206 548.0L207 488.4L208 437.6L209 420.7L210 429.1L211 442.8L212 453.2L213 460.4L214 465.4L215 469.6L216 475.9L217 486.1L218 498.7L219 511.4L220 522.2L221 530.5L222 535.2L223 535.7L224 533.2L225 531.1L226 532.6L227 537.4L228 543.6L229 549.5L230 554.7L231 559.0L232 562.7L233 565.8L234 568.5L235 570.9L236 572.9L237 574.8L238 576.4L239 577.9L240 579.2L241 580.5L242 581.6L243 582.7L244 583.7L245 584.6L246 585.5L247 586.3L248 587.1L249 587.8L250 588.5L251 589.1L252 589.7L253 590.3L254 590.9L255 591.4L256 591.9L257 592.4L258 592.8L259 593.3L260 593.7L262 594.4L264 595.1L266 595.8L268 596.3L270 596.9L272 597.3L274 597.8L277 598.3L280 598.8L283 599.2L287 599.7L292 600.2L298 600.3L299 599.6L300 598.0L301 594.8L302 588.8L303 579.2L304 565.6L305 548.9L306 531.3L307 515.3L308 503.7L309 497.9L310 498.0L311 502.7L312 510.1L313 518.8L314 527.4L315 535.4L316 542.6L317 548.8L318 554.1L319 558.7L320 562.6L321 565.8L322 568.3L323 570.0L324 571.0L325 571.2L326 570.7L327 569.8L328 568.7L329 567.7L330 567.2L331 567.4L332 568.2L333 569.7L334 571.5L335 573.6L336 575.7L337 577.7L338 579.6L339 581.2L340 582.7L341 584.0L342 585.1L343 586.0L344 586.6L346 587.0L347 586.7L348 585.9L349 584.8L350 583.4L351 582.1L352 581.0L353 580.3L355 580.5L356 581.4L357 582.5L358 583.9L359 585.2L360 586.5L361 587.7L362 588.8L363 589.7L364 590.6L365 591.3L366 592.0L367 592.6L368 593.1L369 593.6L370 594.0L372 594.7L374 595.4L376 596.0L378 596.5L380 596.9L382 597.3L385 597.8L388 598.3L391 598.7L395 599.2L399 599.6L404 600.0L410 600.4L418 600.9L430 601.3L452 601.7L487 601.1L488 600.6L489 599.9L490 598.9L491 597.5L492 595.6L493 593.2L494 590.3L495 586.7L496 582.6L497 578.1L498 573.3L499 568.4L500 563.7L501 559.3L502 555.6L503 552.7L504 550.6L505 549.6L506 549.4L507 550.2L508 551.6L509 553.5L510 555.8L511 558.3L512 560.8L513 563.2L514 565.4L515 567.3L516 568.9L517 570.2L518 571.1L519 571.8L520 572.3L522 572.7L527 573.3L528 573.6L529 574.0L530 574.5L531 575.1L532 575.7L533 576.3L534 576.9L535 577.6L536 578.3L537 578.9L538 579.6L539 580.2L540 580.9L541 581.5L542 582.2L543 582.8L544 583.4L545 584.0L546 584.6L547 585.0L548 585.5L550 586.2L552 586.7L554 587.1L556 587.6L558 588.1L560 588.9L561 589.3L562 589.7L563 590.2L564 590.7L565 591.2L566 591.8L567 592.3L568 592.7L569 593.2L570 593.7L571 594.1L573 594.8L575 595.5L577 596.1L579 596.6L581 597.0L584 597.6L587 598.0L590 598.4L594 598.9L599 599.4L604 599.8L611 600.3L619 600.7L630 601.1L648 601.5L694 601.9L843 602.0" stroke="#0099ff"/><path d="M75 602.0L202 601.9L203 601.1L204 595.8L205 574.7L206 526.5L207 464.4L208 424.5L209 421.6L210 439.2L211 458.9L212 473.1L213 481.1L214 485.4L215 488.6L216 492.4L217 498.0L218 505.6L219 513.7L220 519.7L221 523.0L222 525.6L223 529.7L224 535.7L225 542.3L226 548.4L227 553.6L228 558.1L229 561.8L230 565.0L231 567.7L232 570.1L233 572.3L234 574.1L235 575.8L236 577.3L237 578.7L238 580.0L239 581.1L240 582.2L241 583.2L242 584.2L243 585.0L244 585.9L245 586.6L246 587.4L247 588.1L248 588.7L249 589.4L250 590.0L251 590.5L252 591.1L253 591.6L254 592.1L255 592.5L256 593.0L257 593.4L259 594.2L261 594.9L263 595.5L265 596.1L267 596.6L269 597.1L271 597.5L273 597.9L276 598.5L279 598.9L282 599.3L286 599.8L291 600.3L298 600.5L299 600.1L300 599.0L301 596.7L302 592.1L303 584.5L304 573.1L305 558.4L306 541.9L307 525.9L308 513.2L309 505.5L310 503.4L311 506.0L312 511.9L313 519.1L314 526.5L315 533.0L316 538.3L317 542.3L318 545.2L319 547.3L320 549.0L321 550.6L322 552.5L323 554.6L324 556.9L325 559.3L326 561.5L327 563.3L328 564.7L329 565.8L330 566.7L331 567.5L332 568.6L333 569.9L334 571.4L335 573.2L336 575.0L337 576.8L338 578.6L339 580.2L340 581.7L341 583.0L342 584.2L343 585.2L344 586.2L345 587.0L346 587.8L347 588.5L348 589.1L349 589.7L350 590.3L351 590.8L352 591.3L353 591.7L354 592.2L355 592.6L357 593.3L359 594.0L361 594.6L363 595.1L365 595.7L367 596.1L369 596.6L371 597.0L374 597.5L377 598.0L380 598.4L384 598.9L388 599.4L393 599.8L399 600.3L406 600.7L416 601.1L432 601.5L475 601.9L485 601.4L486 601.0L487 600.5L488 599.7L489 598.6L490 597.1L491 595.1L492 592.5L493 589.4L494 585.6L495 581.3L496 576.6L497 571.7L498 566.7L499 561.9L500 557.6L501 553.9L502 551.1L503 549.2L504 548.3L505 548.4L506 549.3L507 551.0L508 553.3L509 556.0L510 558.9L511 561.9L512 564.9L513 567.7L514 570.5L515 573.0L516 575.3L517 577.5L518 579.4L519 581.1L520 582.7L521 584.1L522 585.4L523 586.5L524 587.5L525 588.4L526 589.3L527 590.0L528 590.7L529 591.2L530 591.7L531 592.2L533 592.8L536 593.3L542 592.8L551 593.3L553 593.9L555 594.6L557 595.4L559 596.0L561 596.6L563 597.1L565 597.6L568 598.1L571 598.6L575 599.1L580 599.5L586 600.0L593 600.4L603 600.8L617 601.2L642 601.7L843 602.0" stroke="#009eff"/><path d="M75 602.0L202 602.0L203 601.4L204 597.3L205 580.0L206 537.0L207 476.4L208 432.3L209 424.3L210 440.1L211 461.6L212 481.1L213 497.5L214 511.1L215 522.4L216 531.8L217 539.7L218 546.2L219 551.1L220 554.1L221 555.4L222 556.1L223 557.7L224 560.4L225 563.7L226 566.4L227 567.2L228 565.5L229 561.4L230 556.6L231 552.2L232 549.1L233 548.5L234 550.8L235 555.3L236 560.3L237 564.9L238 568.8L239 572.1L240 574.8L241 577.0L242 579.0L243 580.7L244 582.1L245 583.4L246 584.5L247 585.6L248 586.5L249 587.3L250 588.1L251 588.8L252 589.5L253 590.1L254 590.7L255 591.3L256 591.8L257 592.3L258 592.7L259 593.2L260 593.6L262 594.4L264 595.0L266 595.7L268 596.3L270 596.8L272 597.2L274 597.7L277 598.2L280 598.7L283 599.2L287 599.6L291 600.1L297 600.5L299 600.2L300 599.5L301 597.9L302 594.5L303 588.4L304 578.8L305 565.6L306 549.7L307 533.2L308 518.8L309 508.6L310 503.9L311 504.6L312 509.2L313 516.3L314 524.3L315 532.3L316 539.6L317 546.1L318 551.8L319 556.8L320 561.1L321 564.8L322 568.1L323 570.9L324 573.4L325 575.6L326 577.5L327 579.1L328 580.5L329 581.5L330 582.1L332 581.9L333 581.1L334 579.9L335 578.5L336 577.2L337 576.2L338 575.8L339 575.9L340 576.5L341 577.4L342 578.4L343 579.4L344 580.1L345 580.5L349 580.1L351 579.5L352 579.1L353 578.5L354 577.8L355 577.2L356 576.7L358 576.8L359 577.5L360 578.6L361 580.0L362 581.5L363 583.1L364 584.5L365 585.9L366 587.2L367 588.3L368 589.2L369 590.1L370 590.8L371 591.5L372 592.1L373 592.6L374 593.1L375 593.6L376 594.0L378 594.7L380 595.3L382 595.9L384 596.4L386 596.8L388 597.2L391 597.8L394 598.3L397 598.7L401 599.2L405 599.6L410 600.0L416 600.4L424 600.8L435 601.2L455 601.7L489 601.2L490 600.7L491 600.0L492 599.1L493 597.7L494 595.9L495 593.5L496 590.6L497 587.0L498 582.9L499 578.3L500 573.3L501 568.2L502 563.2L503 558.5L504 554.4L505 551.1L506 548.7L507 547.3L508 546.9L509 547.5L510 548.8L511 550.8L512 553.3L513 556.0L514 558.8L515 561.7L516 564.4L517 566.9L518 569.1L519 571.1L520 572.7L521 574.0L522 575.1L523 575.8L524 576.4L526 577.0L531 577.4L534 578.0L536 578.6L538 579.1L549 579.6L550 580.0L551 580.4L552 580.9L553 581.5L554 582.1L555 582.8L556 583.5L557 584.1L558 584.7L559 585.2L560 585.6L562 586.3L564 586.9L566 587.3L568 587.8L570 588.5L571 588.9L572 589.3L573 589.8L574 590.3L575 590.8L576 591.3L577 591.9L578 592.4L579 592.8L580 593.3L581 593.8L582 594.2L584 594.9L586 595.6L588 596.2L590 596.6L592 597.1L595 597.6L598 598.1L601 598.5L605 598.9L610 599.4L616 599.9L623 600.3L632 600.8L644 601.2L664 601.6L744 602.0L843 602.0" stroke="#00a2ff"/><path d="M75 602.0L202 601.8L203 599.9L204 589.7L205 558.0L206 501.4L207 445.6L208 422.3L209 430.3L210 449.8L211 467.8L212 481.0L213 490.8L214 499.9L215 509.8L216 520.0L217 529.6L218 537.8L219 544.7L220 550.6L221 555.5L222 559.5L223 562.6L224 564.3L227 564.8L228 566.3L229 568.8L230 571.5L231 573.9L232 576.1L233 577.9L234 579.5L235 580.9L236 582.2L237 583.4L238 584.4L239 585.3L240 586.2L241 587.0L242 587.7L243 588.4L244 589.1L245 589.7L246 590.3L247 590.8L248 591.3L249 591.8L250 592.3L251 592.7L252 593.1L254 593.9L256 594.6L258 595.2L260 595.8L262 596.4L264 596.9L266 597.3L268 597.7L271 598.2L274 598.7L277 599.1L281 599.6L286 600.1L292 600.5L297 600.5L298 600.0L299 598.7L300 595.9L301 590.8L302 582.3L303 570.2L304 554.9L305 538.2L306 522.7L307 510.9L308 504.3L309 503.2L310 506.7L311 513.1L312 520.9L313 528.9L314 536.5L315 543.2L316 549.1L317 554.0L318 558.1L319 561.2L320 563.4L321 564.5L322 564.7L323 564.0L324 562.9L325 561.5L326 560.5L327 559.9L328 559.9L329 560.4L330 561.3L331 562.3L332 563.3L333 564.1L334 565.0L335 566.0L336 567.3L337 568.8L338 570.6L339 572.5L340 574.5L341 576.5L342 578.4L343 580.1L344 581.6L345 583.0L346 584.2L347 585.3L348 586.2L349 587.1L350 587.9L351 588.6L352 589.2L353 589.8L354 590.4L355 590.9L356 591.4L357 591.8L358 592.3L360 593.0L362 593.7L364 594.4L366 594.9L368 595.5L370 596.0L372 596.4L374 596.8L377 597.4L380 597.9L383 598.3L387 598.8L391 599.3L396 599.7L402 600.2L409 600.6L419 601.0L434 601.5L470 601.9L486 601.4L487 601.1L488 600.6L489 599.8L490 598.8L491 597.3L492 595.4L493 593.0L494 589.9L495 586.3L496 582.2L497 577.6L498 572.7L499 567.8L500 563.0L501 558.6L502 554.7L503 551.6L504 549.3L505 547.8L506 547.1L507 547.2L508 547.9L509 548.9L510 550.3L511 551.7L512 553.2L513 554.6L514 555.9L515 557.0L516 558.0L517 558.9L518 559.7L519 560.4L520 561.0L521 561.5L522 562.0L524 562.6L534 563.0L535 563.4L536 564.1L537 564.9L538 566.0L539 567.1L540 568.4L541 569.9L542 571.3L543 572.8L544 574.3L545 575.7L546 577.0L547 578.3L548 579.4L549 580.3L550 581.1L551 581.8L552 582.3L554 582.9L562 583.4L564 584.1L565 584.5L566 585.1L567 585.7L568 586.3L569 587.0L570 587.7L571 588.4L572 589.1L573 589.8L574 590.4L575 591.0L576 591.6L577 592.1L578 592.6L579 593.1L580 593.5L582 594.2L584 594.9L586 595.5L588 596.0L590 596.4L592 596.8L595 597.4L598 597.8L601 598.2L605 598.7L609 599.1L614 599.6L620 600.0L627 600.4L636 600.8L649 601.2L672 601.6L843 602.0" stroke="#00a7ff"/><path d="M75 602.0L201 602.0L202 601.5L203 597.7L204 581.5L205 540.7L206 482.3L207 438.2L208 429.1L209 443.5L210 463.9L211 482.6L212 498.4L213 511.6L214 522.7L215 531.9L216 539.8L217 546.4L218 552.0L219 556.8L220 560.9L221 564.4L222 567.2L223 568.9L224 568.8L225 566.7L226 564.0L227 562.7L228 563.9L229 566.8L230 570.0L231 573.0L232 575.6L233 577.8L234 579.6L235 581.2L236 582.6L237 583.8L238 584.9L239 585.9L240 586.8L241 587.6L242 588.3L243 589.0L244 589.6L245 590.2L246 590.8L247 591.3L248 591.8L249 592.3L250 592.7L251 593.1L253 593.9L255 594.6L257 595.2L259 595.8L261 596.4L263 596.8L265 597.3L267 597.7L270 598.2L273 598.7L276 599.1L280 599.6L285 600.1L291 600.5L296 600.3L297 599.5L298 597.5L299 593.7L300 586.9L301 576.5L302 562.4L303 545.7L304 528.7L305 514.2L306 504.3L307 500.1L308 501.2L309 506.3L310 513.6L311 521.8L312 529.9L313 537.3L314 543.9L315 549.6L316 554.5L317 558.7L318 562.1L319 564.7L320 566.4L321 567.3L322 567.2L323 566.5L324 565.3L325 564.1L326 563.2L327 562.8L328 563.3L329 564.5L330 566.4L331 568.6L332 571.0L333 573.4L334 575.7L335 577.7L336 579.6L337 581.2L338 582.6L339 583.8L340 584.9L341 585.9L342 586.8L343 587.6L344 588.3L345 589.0L346 589.6L347 590.1L348 590.7L349 591.1L350 591.6L351 592.0L352 592.4L354 593.2L356 593.8L358 594.4L360 595.0L362 595.5L364 596.0L366 596.4L368 596.8L371 597.3L374 597.8L377 598.3L381 598.8L385 599.2L390 599.7L396 600.1L403 600.6L412 601.0L426 601.4L455 601.8L487 601.1L488 600.6L489 599.8L490 598.7L491 597.3L492 595.4L493 592.9L494 589.9L495 586.4L496 582.3L497 577.8L498 573.2L499 568.4L500 563.9L501 559.8L502 556.3L503 553.6L504 551.8L505 551.0L506 551.0L507 551.8L508 553.4L509 555.5L510 557.9L511 560.6L512 563.4L513 566.1L514 568.8L515 571.4L516 573.7L517 575.9L518 577.8L519 579.6L520 581.1L521 582.4L522 583.5L523 584.4L524 585.1L525 585.6L528 585.5L529 585.0L530 584.4L531 583.5L532 582.4L533 581.3L534 580.1L535 578.8L536 577.5L537 576.3L538 575.2L539 574.2L540 573.3L541 572.6L542 572.0L543 571.5L545 571.0L550 571.5L551 571.9L552 572.4L553 573.0L554 573.7L555 574.5L556 575.3L557 576.3L558 577.3L559 578.4L560 579.5L561 580.6L562 581.7L563 582.8L564 583.9L565 585.0L566 585.9L567 586.9L568 587.8L569 588.6L570 589.3L571 590.0L572 590.7L573 591.2L574 591.8L575 592.3L576 592.7L577 593.2L579 593.9L581 594.6L583 595.2L585 595.7L587 596.1L589 596.6L592 597.1L595 597.6L598 598.0L602 598.5L606 599.0L611 599.4L617 599.9L624 600.3L633 600.8L645 601.2L665 601.6L744 602.0L843 602.0" stroke="#00acff"/><path d="M75 602.0L202 601.8L203 600.3L204 591.8L205 564.3L206 512.7L207 458.7L208 433.4L209 438.7L210 457.1L211 476.4L212 493.0L213 507.0L214 518.7L215 528.6L216 536.9L217 544.0L218 549.9L219 555.0L220 559.4L221 563.2L222 566.4L223 569.2L224 571.7L225 573.9L226 575.8L227 577.5L228 579.0L229 580.2L230 581.0L231 580.7L232 579.2L233 577.0L234 575.6L235 575.8L236 577.4L237 579.5L238 581.5L239 583.2L240 584.7L241 585.9L242 587.0L243 588.0L244 588.8L245 589.6L246 590.3L247 590.9L248 591.5L249 592.0L250 592.5L251 592.9L252 593.3L254 594.1L256 594.8L258 595.4L260 596.0L262 596.5L264 597.0L266 597.4L269 598.0L272 598.5L275 598.9L279 599.4L283 599.8L288 600.2L294 600.6L298 600.4L299 599.8L300 598.2L301 594.9L302 589.1L303 579.9L304 567.3L305 552.1L306 536.3L307 522.4L308 512.6L309 508.0L310 508.4L311 512.7L312 519.2L313 526.7L314 534.1L315 541.0L316 547.1L317 552.6L318 557.3L319 561.5L320 565.1L321 568.3L322 571.1L323 573.6L324 575.7L325 577.7L326 579.4L327 580.9L328 582.2L329 583.4L330 584.5L331 585.4L332 586.1L333 586.5L335 586.3L336 585.6L337 584.4L338 582.8L339 581.1L340 579.5L341 578.1L342 577.2L343 576.8L348 577.3L350 577.8L351 578.4L352 579.3L353 580.4L354 581.8L355 583.2L356 584.6L357 585.9L358 587.1L359 588.2L360 589.1L361 590.0L362 590.7L363 591.4L364 592.0L365 592.5L366 593.0L367 593.5L368 593.9L370 594.6L372 595.2L374 595.8L376 596.3L378 596.7L380 597.1L383 597.6L386 598.1L389 598.5L393 599.0L397 599.4L402 599.9L408 600.3L416 600.7L427 601.2L445 601.6L487 601.2L488 600.8L489 600.2L490 599.3L491 598.1L492 596.5L493 594.3L494 591.6L495 588.4L496 584.6L497 580.4L498 575.9L499 571.2L500 566.6L501 562.3L502 558.5L503 555.4L504 553.2L505 551.8L506 551.3L507 551.7L508 552.8L509 554.5L510 556.5L511 558.8L512 561.2L513 563.6L514 565.8L515 567.9L516 569.6L517 571.0L518 572.2L519 573.0L520 573.6L522 574.2L528 574.8L529 575.2L530 575.8L531 576.5L532 577.4L533 578.4L534 579.4L535 580.5L536 581.7L537 582.8L538 583.9L539 585.0L540 586.1L541 587.0L542 587.9L543 588.8L544 589.6L545 590.3L546 590.9L547 591.5L548 592.0L549 592.5L550 593.0L551 593.4L553 594.1L555 594.8L557 595.3L559 595.8L561 596.3L564 596.9L567 597.4L570 597.8L574 598.3L578 598.8L583 599.2L588 599.6L594 600.0L602 600.5L612 600.9L627 601.3L655 601.7L843 602.0" stroke="#00b1ff"/><path d="M75 602.0L202 601.9L203 600.7L204 593.8L205 569.7L206 520.8L207 465.4L208 435.5L209 437.5L210 454.9L211 474.0L212 490.5L213 503.7L214 513.6L215 520.6L216 526.5L217 532.5L218 539.0L219 545.4L220 551.2L221 556.2L222 560.5L223 564.1L224 567.3L225 570.0L226 572.3L227 574.4L228 576.2L229 577.9L230 579.3L231 580.6L232 581.8L233 582.9L234 583.9L235 584.8L236 585.7L237 586.5L238 587.2L239 587.9L240 588.6L241 589.2L242 589.8L243 590.3L244 590.8L245 591.3L246 591.8L247 592.2L248 592.6L249 593.0L251 593.8L253 594.5L255 595.1L257 595.7L259 596.2L261 596.7L263 597.1L265 597.5L268 598.1L271 598.5L274 598.9L278 599.4L282 599.8L287 600.2L294 600.7L298 600.4L299 599.7L300 597.9L301 594.4L302 588.0L303 578.2L304 564.7L305 548.5L306 531.8L307 517.2L308 507.0L309 502.2L310 502.7L311 507.2L312 514.0L313 521.8L314 529.3L315 536.1L316 541.8L317 546.3L318 549.3L319 551.1L320 551.5L321 550.9L322 549.6L323 548.1L324 546.8L325 546.4L326 546.9L327 548.4L328 550.9L329 554.1L330 557.5L331 560.9L332 564.0L333 566.6L334 568.4L335 569.5L336 569.7L337 569.1L338 567.8L339 566.1L340 564.4L341 562.9L342 562.0L344 562.0L345 563.1L346 564.6L347 566.6L348 568.7L349 571.0L350 573.3L351 575.4L352 577.4L353 579.2L354 580.8L355 582.2L356 583.5L357 584.6L358 585.6L359 586.5L360 587.3L361 588.1L362 588.7L363 589.4L364 589.9L365 590.5L366 591.0L367 591.4L368 591.9L369 592.3L371 593.1L373 593.8L375 594.4L377 595.0L379 595.5L381 596.0L383 596.4L385 596.8L388 597.4L391 597.9L394 598.3L398 598.9L402 599.3L407 599.8L413 600.2L420 600.6L430 601.1L445 601.5L485 601.2L486 600.7L487 600.1L488 599.1L489 597.8L490 596.0L491 593.7L492 590.9L493 587.4L494 583.4L495 578.9L496 574.1L497 569.2L498 564.3L499 559.7L500 555.6L501 552.3L502 549.7L503 548.0L504 547.2L505 547.1L506 547.7L507 548.7L508 550.1L509 551.7L510 553.3L511 554.7L512 556.1L513 557.2L514 558.1L515 558.8L516 559.4L517 559.8L519 560.6L520 561.0L521 561.4L522 561.9L523 562.5L524 563.0L525 563.7L526 564.3L527 564.9L528 565.5L529 566.0L530 566.5L531 566.9L532 567.3L533 567.8L534 568.2L535 568.8L536 569.4L537 570.1L538 570.9L539 571.9L540 572.9L541 574.1L542 575.3L543 576.6L544 577.9L545 579.1L546 580.4L547 581.6L548 582.8L549 583.9L550 584.9L551 585.9L552 586.8L553 587.6L554 588.4L555 589.1L556 589.7L557 590.3L558 590.8L559 591.3L560 591.8L561 592.2L562 592.6L564 593.3L566 594.0L568 594.6L570 595.1L572 595.6L574 596.0L577 596.6L580 597.1L583 597.6L586 598.0L590 598.5L594 598.9L599 599.4L605 599.8L612 600.3L621 600.7L633 601.1L652 601.5L707 601.9L843 602.0" stroke="#00b5ff"/><path d="M75 602.0L202 601.9L203 600.7L204 593.7L205 569.2L206 519.6L207 463.3L208 432.8L209 434.6L210 451.9L211 471.2L212 488.2L213 502.5L214 514.6L215 524.6L216 532.5L217 537.5L218 538.7L219 536.0L220 531.9L221 530.2L222 532.6L223 538.2L224 544.9L225 551.2L226 556.5L227 561.0L228 564.7L229 567.8L230 570.4L231 572.1L232 572.6L233 572.0L234 571.1L235 571.1L236 572.3L237 574.4L238 576.6L239 578.6L240 580.3L241 581.8L242 583.2L243 584.3L244 585.4L245 586.3L246 587.1L247 587.9L248 588.6L249 589.3L250 589.9L251 590.5L252 591.0L253 591.5L254 592.0L255 592.5L256 592.9L257 593.3L259 594.1L261 594.7L263 595.4L265 595.9L267 596.4L269 596.9L271 597.4L274 597.9L277 598.4L280 598.9L284 599.4L288 599.8L293 600.2L299 600.1L300 599.3L301 597.3L302 593.5L303 586.8L304 576.6L305 563.1L306 547.2L307 531.4L308 517.9L309 509.0L310 505.4L311 506.7L312 511.5L313 518.3L314 525.8L315 533.2L316 540.1L317 546.2L318 551.6L319 556.3L320 560.4L321 564.1L322 567.3L323 570.1L324 572.6L325 574.8L326 576.8L327 578.5L328 580.1L329 581.5L330 582.7L331 583.9L332 584.9L333 585.8L334 586.7L335 587.5L336 588.2L337 588.8L338 589.4L339 590.0L340 590.5L341 591.0L342 591.5L343 591.9L344 592.3L346 593.0L348 593.6L352 593.8L353 593.4L354 592.8L355 591.9L356 590.8L357 589.7L358 588.8L359 588.1L361 587.9L362 588.3L363 589.0L364 589.8L365 590.7L366 591.6L367 592.4L368 593.1L369 593.8L370 594.4L371 594.9L372 595.3L374 596.0L376 596.6L378 597.1L380 597.5L383 598.1L386 598.5L390 599.0L394 599.4L399 599.8L405 600.3L413 600.7L424 601.1L442 601.5L484 600.9L485 600.3L486 599.5L487 598.4L488 596.8L489 594.7L490 592.1L491 589.0L492 585.2L493 581.0L494 576.5L495 571.7L496 567.0L497 562.5L498 558.5L499 555.2L500 552.6L501 551.0L502 550.3L503 550.5L504 551.4L505 553.0L506 555.0L507 557.4L508 559.9L509 562.5L510 564.9L511 567.2L512 569.3L513 571.0L514 572.4L515 573.5L516 574.2L517 574.6L520 574.2L521 573.7L522 573.0L523 572.3L524 571.6L525 570.9L526 570.3L527 569.9L529 569.5L532 569.9L533 570.3L534 570.8L535 571.4L536 571.9L537 572.5L538 573.2L539 573.8L540 574.4L541 574.9L542 575.5L543 576.0L544 576.6L545 577.1L546 577.6L547 578.1L548 578.7L549 579.3L550 579.9L551 580.6L552 581.3L553 582.1L554 582.9L555 583.8L556 584.6L557 585.5L558 586.3L559 587.1L560 587.9L561 588.7L562 589.4L563 590.0L564 590.7L565 591.2L566 591.8L567 592.3L568 592.7L569 593.1L571 593.9L573 594.6L575 595.1L577 595.6L579 596.1L581 596.5L584 597.1L587 597.6L590 598.0L594 598.5L598 598.9L603 599.4L609 599.8L616 600.3L625 600.7L637 601.1L657 601.5L721 601.9L843 602.0" stroke="#00baff"/><path d="M75 602.0L202 601.8L203 600.0L204 590.4L205 560.5L206 506.9L207 453.6L208 430.4L209 436.9L210 455.2L211 474.1L212 490.4L213 504.2L214 515.9L215 525.8L216 534.2L217 541.3L218 547.5L219 552.7L220 557.2L221 561.1L222 564.4L223 567.1L224 568.6L225 568.4L226 566.5L227 563.4L228 558.7L229 551.2L230 541.4L231 533.3L232 530.2L233 531.0L234 533.3L235 536.5L236 541.3L237 547.3L238 553.4L239 558.9L240 563.4L241 567.2L242 570.4L243 573.0L244 575.3L245 577.2L246 578.9L247 580.4L248 581.7L249 582.9L250 583.9L251 584.9L252 585.8L253 586.7L254 587.4L255 588.1L256 588.8L257 589.5L258 590.0L259 590.6L260 591.1L261 591.6L262 592.1L263 592.6L264 593.0L265 593.4L267 594.2L269 594.9L271 595.5L273 596.1L275 596.6L277 597.1L279 597.5L282 598.1L285 598.6L288 599.0L292 599.5L296 599.9L299 599.8L300 599.1L301 597.5L302 594.2L303 588.3L304 579.1L305 566.5L306 551.5L307 535.9L308 522.4L309 512.8L310 508.4L311 508.8L312 512.9L313 519.2L314 526.4L315 533.6L316 540.3L317 546.3L318 551.6L319 556.3L320 560.5L321 564.1L322 567.3L323 570.1L324 572.6L325 574.8L326 576.8L327 578.5L328 580.0L329 581.4L330 582.5L331 583.4L332 584.0L334 584.0L335 583.5L336 582.5L337 581.3L338 579.9L339 578.7L340 577.7L341 577.1L342 577.1L343 577.6L344 578.6L345 579.8L346 581.3L347 582.7L348 584.2L349 585.5L350 586.7L351 587.8L352 588.7L353 589.6L354 590.3L355 591.0L356 591.6L357 592.1L358 592.6L359 593.0L360 593.4L362 594.2L364 594.8L366 595.3L368 595.8L370 596.3L372 596.7L375 597.3L378 597.8L381 598.2L385 598.7L389 599.1L394 599.6L400 600.1L407 600.5L416 600.9L429 601.3L454 601.7L484 601.1L485 600.7L486 600.0L487 599.0L488 597.6L489 595.8L490 593.5L491 590.7L492 587.2L493 583.3L494 578.9L495 574.2L496 569.5L497 564.9L498 560.6L499 556.9L500 554.0L501 551.9L502 550.7L503 550.4L504 551.0L505 552.2L506 554.1L507 556.3L508 558.9L509 561.5L510 564.2L511 566.8L512 569.2L513 571.4L514 573.4L515 575.1L516 576.6L517 577.9L518 578.8L519 579.6L520 580.1L522 580.5L525 580.1L527 579.5L529 579.0L537 579.4L539 579.9L545 579.3L546 578.8L547 578.3L548 577.8L549 577.3L550 576.9L552 576.3L555 576.7L556 577.2L557 577.8L558 578.6L559 579.5L560 580.4L561 581.5L562 582.5L563 583.6L564 584.7L565 585.7L566 586.7L567 587.6L568 588.5L569 589.3L570 590.0L571 590.7L572 591.3L573 591.9L574 592.4L575 592.9L576 593.3L577 593.7L579 594.4L581 595.0L583 595.6L585 596.1L587 596.5L590 597.1L593 597.5L596 598.0L600 598.5L604 598.9L609 599.4L615 599.9L622 600.3L631 600.7L643 601.1L663 601.5L730 601.9L843 602.0" stroke="#00bfff"/><path d="M75 602.0L202 601.8L203 599.9L204 590.0L205 560.1L206 508.2L207 458.8L208 438.9L209 446.2L210 463.7L211 481.2L212 496.5L213 509.4L214 520.3L215 529.5L216 537.4L217 544.0L218 549.1L219 552.0L220 551.8L221 549.1L222 546.7L223 547.0L224 550.4L225 555.2L226 560.0L227 564.2L228 567.7L229 570.7L230 573.2L231 575.4L232 577.3L233 578.9L234 580.4L235 581.7L236 582.8L237 583.9L238 584.8L239 585.7L240 586.5L241 587.2L242 587.9L243 588.6L244 589.2L245 589.8L246 590.3L247 590.8L248 591.3L249 591.8L250 592.2L251 592.7L253 593.4L255 594.1L257 594.8L259 595.4L261 595.9L263 596.4L265 596.9L267 597.3L270 597.9L273 598.4L276 598.8L280 599.3L284 599.7L289 600.1L296 600.6L298 600.1L299 599.2L300 597.2L301 593.3L302 586.5L303 576.4L304 563.0L305 547.5L306 532.3L307 519.5L308 511.2L309 508.0L310 509.5L311 514.2L312 520.8L313 528.0L314 535.0L315 541.5L316 547.4L317 552.5L318 557.1L319 561.1L320 564.6L321 567.7L322 570.4L323 572.9L324 575.0L325 576.9L326 578.5L327 579.8L328 580.8L329 581.3L330 581.4L331 580.9L332 579.9L333 578.6L334 577.1L335 575.7L336 574.7L337 574.1L338 574.2L339 574.6L340 575.2L341 575.7L343 575.7L344 575.0L345 574.2L346 573.4L347 573.0L348 573.0L349 573.6L350 574.8L351 576.3L352 578.0L353 579.8L354 581.6L355 583.2L356 584.6L357 585.9L358 587.0L359 588.0L360 588.9L361 589.6L362 590.3L363 590.9L364 591.5L365 592.0L366 592.5L367 592.9L368 593.3L370 594.0L372 594.7L374 595.2L376 595.8L378 596.2L380 596.6L383 597.2L386 597.7L389 598.2L392 598.6L396 599.1L400 599.5L405 599.9L411 600.3L419 600.7L430 601.1L448 601.6L484 601.1L485 600.7L486 600.1L487 599.1L488 597.9L489 596.2L490 594.0L491 591.3L492 588.1L493 584.4L494 580.3L495 576.0L496 571.5L497 567.2L498 563.3L499 559.8L500 557.1L501 555.2L502 554.1L503 553.8L504 554.4L505 555.6L506 557.3L507 559.4L508 561.8L509 564.3L510 566.8L511 569.3L512 571.7L513 573.9L514 576.0L515 577.9L516 579.7L517 581.3L518 582.7L519 584.0L520 585.2L521 586.2L522 587.2L523 588.0L524 588.7L525 589.2L526 589.7L528 590.3L534 589.7L536 589.1L538 588.7L544 589.4L545 589.8L546 590.3L547 590.8L548 591.3L549 591.8L550 592.4L551 592.9L552 593.4L553 593.9L554 594.3L555 594.8L557 595.5L559 596.1L561 596.7L563 597.1L566 597.7L569 598.1L573 598.6L577 599.1L582 599.5L588 599.9L596 600.4L606 600.8L620 601.2L644 601.6L843 602.0" stroke="#00c3ff"/><path d="M75 602.0L202 601.9L203 600.9L204 594.9L205 572.5L206 524.7L207 466.5L208 431.3L209 429.5L210 445.6L211 464.8L212 482.0L213 496.7L214 509.1L215 519.7L216 528.8L217 536.5L218 543.1L219 548.8L220 553.6L221 557.2L222 559.2L223 559.2L224 557.9L225 557.2L226 558.4L227 561.4L228 564.9L229 568.3L230 571.2L231 573.5L232 575.2L233 575.7L234 575.0L235 573.7L236 573.0L237 573.7L238 575.5L239 577.7L240 579.7L241 581.4L242 582.9L243 584.2L244 585.4L245 586.4L246 587.3L247 588.1L248 588.8L249 589.4L250 590.1L251 590.6L252 591.2L253 591.7L254 592.1L255 592.6L256 593.0L258 593.7L260 594.4L262 595.1L264 595.6L266 596.2L268 596.6L270 597.1L272 597.5L275 598.0L278 598.5L281 598.9L285 599.4L289 599.8L294 600.2L300 600.3L301 599.7L302 598.3L303 595.5L304 590.2L305 581.7L306 569.8L307 555.2L308 539.5L309 525.2L310 514.6L311 508.8L312 508.1L313 511.3L314 517.1L315 523.9L316 530.9L317 537.2L318 542.6L319 546.9L320 549.9L321 551.6L322 551.8L323 550.8L324 548.8L325 546.1L326 543.1L327 540.3L328 538.0L329 536.6L330 536.2L331 537.0L332 538.9L333 541.8L334 545.3L335 549.3L336 553.4L337 557.5L338 561.2L339 564.5L340 567.4L341 569.7L342 571.5L343 572.6L344 573.1L345 573.1L346 572.6L347 572.0L348 571.4L350 571.1L351 571.7L352 572.8L353 574.3L354 575.9L355 577.6L356 579.3L357 580.9L358 582.3L359 583.5L360 584.7L361 585.7L362 586.6L363 587.4L364 588.2L365 588.8L366 589.5L367 590.0L368 590.6L369 591.1L370 591.5L371 592.0L372 592.4L374 593.1L376 593.8L378 594.4L380 595.0L382 595.5L384 596.0L386 596.4L388 596.8L391 597.4L394 597.9L397 598.3L401 598.8L405 599.3L410 599.7L416 600.2L423 600.6L433 601.0L448 601.4L488 600.9L489 600.4L490 599.7L491 598.6L492 597.1L493 595.2L494 592.8L495 589.9L496 586.5L497 582.6L498 578.4L499 574.1L500 569.7L501 565.6L502 561.9L503 558.8L504 556.4L505 554.8L506 554.1L507 554.2L508 555.0L509 556.4L510 558.2L511 560.2L512 562.5L513 564.7L514 566.9L515 568.9L516 570.7L517 572.3L518 573.6L519 574.6L520 575.3L521 575.9L523 576.4L529 577.0L530 577.3L531 577.8L532 578.5L533 579.2L534 580.1L535 581.0L536 582.0L537 583.1L538 584.1L539 585.1L540 586.1L541 587.1L542 588.0L543 588.8L544 589.6L545 590.3L546 591.0L547 591.6L548 592.1L549 592.6L550 593.1L551 593.5L553 594.2L555 594.9L557 595.4L559 595.9L561 596.4L564 596.9L567 597.4L570 597.8L574 598.3L578 598.8L583 599.2L589 599.7L596 600.1L605 600.6L617 601.0L635 601.4L674 601.8L843 602.0" stroke="#00c8ff"/><path d="M75 602.0L202 601.7L203 599.6L204 589.0L205 557.6L206 504.3L207 454.4L208 434.4L209 440.4L210 454.1L211 465.2L212 473.7L213 482.5L214 493.4L215 505.3L216 516.5L217 526.4L218 534.7L219 541.7L220 547.6L221 552.5L222 556.1L223 558.0L224 558.0L225 557.2L226 557.3L227 559.1L228 562.0L229 564.5L230 564.8L231 562.1L232 557.3L233 553.6L234 553.5L235 556.5L236 560.9L237 565.2L238 568.9L239 572.0L240 574.6L241 576.8L242 578.7L243 580.3L244 581.7L245 583.0L246 584.1L247 585.1L248 586.0L249 586.8L250 587.6L251 588.3L252 588.9L253 589.6L254 590.1L255 590.7L256 591.2L257 591.7L258 592.1L259 592.6L260 593.0L262 593.8L264 594.5L266 595.1L268 595.7L270 596.2L272 596.7L274 597.2L276 597.6L279 598.1L282 598.6L285 599.0L289 599.5L294 600.0L299 599.9L300 599.1L301 597.3L302 593.7L303 587.4L304 577.8L305 564.9L306 549.9L307 534.6L308 521.5L309 512.6L310 508.7L311 509.5L312 513.7L313 519.9L314 526.9L315 533.9L316 540.3L317 546.2L318 551.3L319 555.9L320 559.9L321 563.5L322 566.5L323 569.1L324 571.3L325 572.8L326 573.8L327 574.1L328 573.6L329 572.6L330 571.2L331 569.8L332 568.6L333 567.9L334 568.0L335 568.9L336 570.3L337 572.2L338 574.3L339 576.4L340 578.3L341 580.2L342 581.8L343 583.2L344 584.5L345 585.6L346 586.6L347 587.5L348 588.3L349 589.0L350 589.6L351 590.2L352 590.7L353 591.2L354 591.7L355 592.1L356 592.5L358 593.2L360 593.9L362 594.5L364 595.0L366 595.5L368 596.0L370 596.4L373 596.9L376 597.4L379 597.9L382 598.3L386 598.8L390 599.2L395 599.6L401 600.1L408 600.5L418 600.9L432 601.3L460 601.7L481 601.3L482 601.0L483 600.5L484 599.7L485 598.7L486 597.3L487 595.4L488 593.0L489 590.1L490 586.7L491 582.8L492 578.6L493 574.2L494 569.8L495 565.5L496 561.7L497 558.5L498 555.9L499 554.2L500 553.2L501 553.0L502 553.5L503 554.6L504 556.0L505 557.6L506 559.4L507 561.2L508 562.8L509 564.3L510 565.7L511 566.8L512 567.8L513 568.6L514 569.3L515 570.0L516 570.7L517 571.4L518 572.1L519 572.9L520 573.7L521 574.7L522 575.6L523 576.6L524 577.6L525 578.5L526 579.4L527 580.2L528 580.9L529 581.6L530 582.1L531 582.6L532 583.0L534 583.7L536 584.3L538 585.0L539 585.4L540 585.8L541 586.2L542 586.6L543 587.0L545 587.8L547 588.4L549 588.9L551 589.4L553 589.9L555 590.4L557 591.1L559 591.9L560 592.3L561 592.7L562 593.1L563 593.5L564 593.9L566 594.7L568 595.3L570 595.9L572 596.5L574 596.9L577 597.5L580 597.9L583 598.4L587 598.8L592 599.3L598 599.8L605 600.2L614 600.6L626 601.1L645 601.5L693 601.9L843 602.0" stroke="#00cdff"/><path d="M75 602.0L201 602.0L202 601.5L203 597.8L204 582.2L205 543.9L206 489.5L207 448.2L208 436.8L209 443.3L210 451.8L211 458.6L212 466.6L213 477.4L214 488.5L215 497.4L216 504.5L217 511.4L218 519.4L219 527.8L220 535.8L221 542.6L222 548.5L223 553.4L224 557.6L225 561.2L226 564.3L227 566.7L228 568.3L229 568.8L231 568.7L232 569.7L233 571.6L234 573.8L235 575.8L236 577.6L237 579.2L238 580.7L239 581.9L240 583.0L241 584.1L242 585.0L243 585.8L244 586.6L245 587.4L246 588.0L247 588.7L248 589.3L249 589.9L250 590.4L251 590.9L252 591.4L253 591.8L254 592.3L255 592.7L257 593.5L259 594.2L261 594.8L263 595.4L265 595.9L267 596.4L269 596.9L271 597.3L274 597.9L277 598.4L280 598.8L284 599.3L288 599.7L293 600.1L298 599.8L299 598.8L300 596.6L301 592.3L302 585.3L303 575.1L304 561.9L305 547.2L306 533.1L307 521.8L308 514.9L309 512.8L310 514.8L311 519.5L312 525.8L313 532.4L314 538.9L315 544.8L316 550.1L317 554.8L318 559.0L319 562.7L320 566.0L321 568.9L322 571.5L323 573.8L324 575.8L325 577.7L326 579.3L327 580.8L328 582.1L329 583.3L330 584.4L331 585.4L332 586.3L333 587.1L334 587.9L335 588.6L336 589.2L337 589.8L338 590.2L340 590.8L342 590.4L343 589.5L344 588.2L345 586.3L346 584.0L347 581.5L348 579.1L349 577.0L350 575.7L351 575.1L352 575.3L353 576.2L354 577.6L355 579.3L356 581.1L357 582.9L358 584.5L359 586.0L360 587.3L361 588.4L362 589.4L363 590.3L364 591.0L365 591.7L366 592.3L367 592.8L368 593.3L369 593.7L371 594.5L373 595.1L375 595.7L377 596.2L379 596.6L382 597.2L385 597.7L388 598.2L392 598.7L396 599.1L401 599.6L407 600.1L414 600.5L423 600.9L436 601.3L461 601.7L485 601.1L486 600.7L487 600.1L488 599.2L489 597.9L490 596.2L491 594.0L492 591.3L493 588.0L494 584.2L495 580.0L496 575.5L497 570.9L498 566.4L499 562.2L500 558.6L501 555.6L502 553.5L503 552.2L504 551.7L505 552.1L506 553.2L507 554.9L508 557.0L509 559.3L510 561.9L511 564.5L512 567.0L513 569.5L514 571.8L515 574.0L516 576.0L517 577.8L518 579.5L519 581.1L520 582.5L521 583.8L522 585.0L523 586.0L524 587.0L525 587.9L526 588.6L527 589.3L528 589.9L529 590.4L530 590.8L532 591.3L536 590.9L537 590.5L538 590.0L539 589.4L540 588.8L541 588.2L542 587.6L543 587.0L544 586.5L546 585.9L550 586.5L551 586.9L552 587.4L553 588.1L554 588.7L555 589.4L556 590.1L557 590.8L558 591.4L559 592.1L560 592.7L561 593.2L562 593.7L563 594.2L564 594.6L566 595.4L568 596.0L570 596.5L572 597.0L575 597.5L578 598.0L582 598.5L586 598.9L591 599.4L597 599.8L604 600.2L613 600.7L625 601.1L644 601.5L691 601.9L843 602.0" stroke="#00d2ff"/><path d="M75 602.0L202 601.6L203 599.0L204 586.3L205 551.2L206 495.2L207 446.6L208 430.0L209 439.2L210 456.8L211 473.2L212 485.5L213 493.1L214 498.0L215 503.2L216 510.5L217 519.5L218 528.4L219 536.3L220 543.1L221 548.9L222 553.8L223 557.9L224 561.3L225 563.2L226 562.9L227 560.0L228 556.1L229 553.5L230 552.9L231 552.5L232 551.0L233 549.8L234 550.6L235 553.9L236 558.4L237 562.9L238 566.8L239 570.1L240 572.9L241 575.2L242 577.2L243 578.9L244 580.4L245 581.7L246 582.9L247 583.9L248 584.9L249 585.8L250 586.6L251 587.3L252 588.0L253 588.7L254 589.3L255 589.9L256 590.4L257 590.9L258 591.4L259 591.9L260 592.3L261 592.8L262 593.2L264 593.9L266 594.6L268 595.2L270 595.8L272 596.3L274 596.8L276 597.2L279 597.8L282 598.3L285 598.7L289 599.3L293 599.7L298 599.8L299 599.2L300 597.8L301 594.9L302 589.7L303 581.3L304 569.6L305 555.1L306 539.8L307 525.9L308 515.6L309 510.1L310 509.3L311 512.4L312 518.0L313 524.6L314 531.3L315 537.7L316 543.3L317 548.1L318 552.2L319 555.5L320 558.1L321 560.3L322 562.1L323 563.7L324 565.4L325 567.0L326 568.5L327 569.8L328 570.8L329 571.2L330 571.1L331 570.5L332 569.5L333 568.5L334 567.8L335 567.6L336 568.0L337 569.0L338 570.4L339 571.9L340 573.3L341 574.3L342 574.9L343 574.9L344 574.4L345 573.5L346 572.4L347 571.3L348 570.4L349 569.6L351 569.3L352 569.7L353 570.6L354 572.0L355 573.6L356 575.4L357 577.3L358 579.2L359 580.9L360 582.5L361 583.9L362 585.1L363 586.2L364 587.2L365 588.1L366 588.9L367 589.6L368 590.2L369 590.8L370 591.3L371 591.8L372 592.2L373 592.6L375 593.4L377 594.1L379 594.7L381 595.2L383 595.7L385 596.2L387 596.6L390 597.2L393 597.7L396 598.2L399 598.6L403 599.0L407 599.4L412 599.9L418 600.3L426 600.7L437 601.1L455 601.5L487 601.1L488 600.7L489 600.0L490 599.1L491 597.8L492 596.0L493 593.8L494 591.1L495 587.8L496 583.9L497 579.7L498 575.2L499 570.5L500 566.0L501 561.8L502 558.2L503 555.2L504 553.1L505 551.8L506 551.4L507 551.8L508 552.9L509 554.6L510 556.7L511 559.0L512 561.6L513 564.1L514 566.7L515 569.1L516 571.5L517 573.6L518 575.7L519 577.5L520 579.2L521 580.8L522 582.2L523 583.5L524 584.7L525 585.8L526 586.8L527 587.7L528 588.5L529 589.3L530 590.0L531 590.6L532 591.1L533 591.6L535 592.3L540 592.1L541 591.6L542 591.0L543 590.1L544 589.1L545 587.9L546 586.6L547 585.2L548 583.8L549 582.4L550 581.0L551 579.7L552 578.6L553 577.8L554 577.1L556 576.7L557 576.9L558 577.3L559 578.0L560 578.8L561 579.8L562 580.9L563 582.0L564 583.2L565 584.3L566 585.4L567 586.5L568 587.5L569 588.5L570 589.3L571 590.1L572 590.8L573 591.5L574 592.1L575 592.7L576 593.2L577 593.6L578 594.0L580 594.8L582 595.4L584 595.9L586 596.4L588 596.8L591 597.3L594 597.8L597 598.2L601 598.7L605 599.1L610 599.5L616 599.9L623 600.3L632 600.7L645 601.2L667 601.6L761 602.0L843 602.0" stroke="#00d6ff"/><path d="M75 602.0L202 601.7L203 599.4L204 588.0L205 556.0L206 503.5L207 456.3L208 439.0L209 446.8L210 463.3L211 479.4L212 491.9L213 499.0L214 499.5L215 495.4L216 491.6L217 492.5L218 499.0L219 509.1L220 519.7L221 529.3L222 537.5L223 544.3L224 549.9L225 554.7L226 558.5L227 561.3L228 563.0L229 563.7L230 564.5L231 565.9L232 568.1L233 570.5L234 572.8L235 574.8L236 576.6L237 578.2L238 579.6L239 580.8L240 582.0L241 583.0L242 584.0L243 584.8L244 585.7L245 586.4L246 587.1L247 587.8L248 588.4L249 589.0L250 589.6L251 590.1L252 590.7L253 591.1L254 591.6L255 592.0L256 592.5L257 592.9L259 593.6L261 594.3L263 594.9L265 595.5L267 596.0L269 596.5L271 596.9L273 597.3L276 597.9L279 598.4L282 598.8L286 599.3L290 599.7L297 599.9L298 599.3L299 597.9L300 594.9L301 589.5L302 580.8L303 568.7L304 553.9L305 538.1L306 523.8L307 513.1L308 507.3L309 506.5L310 509.6L311 515.2L312 521.8L313 528.5L314 534.5L315 539.4L316 543.0L317 545.2L318 546.1L319 545.7L320 544.6L321 543.3L322 542.4L323 542.3L324 543.3L325 545.5L326 548.5L327 552.1L328 556.0L329 559.8L330 563.4L331 566.6L332 569.5L333 572.0L334 574.2L335 576.1L336 577.7L337 579.0L338 580.1L339 580.7L341 580.6L342 579.8L343 578.5L344 576.9L345 575.4L346 574.1L347 573.2L349 573.4L350 574.3L351 575.3L352 576.5L353 577.5L354 578.3L355 579.0L356 579.6L357 580.2L358 581.0L359 581.8L360 582.8L361 583.9L362 585.0L363 586.1L364 587.1L365 588.0L366 588.9L367 589.6L368 590.3L369 590.9L370 591.5L371 592.0L372 592.5L373 592.9L375 593.7L377 594.3L379 594.9L381 595.5L383 596.0L385 596.4L387 596.8L390 597.4L393 597.8L396 598.3L400 598.8L404 599.2L409 599.7L415 600.1L422 600.5L432 601.0L447 601.4L487 601.0L488 600.5L489 599.8L490 598.7L491 597.4L492 595.6L493 593.3L494 590.5L495 587.2L496 583.5L497 579.4L498 575.2L499 570.9L500 566.9L501 563.2L502 560.0L503 557.6L504 555.9L505 555.0L506 554.7L507 555.2L508 556.2L509 557.5L510 559.1L511 560.9L512 562.6L513 564.4L514 566.0L515 567.5L516 568.9L517 570.1L518 571.3L519 572.3L520 573.4L521 574.4L522 575.4L523 576.5L524 577.5L525 578.6L526 579.7L527 580.8L528 581.9L529 583.0L530 584.0L531 585.0L532 585.9L533 586.8L534 587.5L535 588.2L536 588.7L537 589.1L539 589.6L543 589.1L545 588.4L547 587.6L549 587.0L555 587.6L556 588.1L557 588.6L558 589.2L559 589.8L560 590.4L561 591.0L562 591.6L563 592.2L564 592.8L565 593.3L566 593.8L567 594.2L568 594.6L570 595.3L572 595.9L574 596.5L576 596.9L579 597.5L582 597.9L585 598.3L589 598.8L594 599.3L600 599.7L607 600.2L616 600.6L628 601.0L646 601.4L688 601.8L843 602.0" stroke="#00dbff"/><path d="M75 602.0L202 601.6L203 598.5L204 584.8L205 548.6L206 494.0L207 449.3L208 434.8L209 440.7L210 450.7L211 459.3L212 468.7L213 480.4L214 493.5L215 506.0L216 517.0L217 526.4L218 534.4L219 541.2L220 546.9L221 551.9L222 556.2L223 559.9L224 563.2L225 566.0L226 568.5L227 570.8L228 572.8L229 574.6L230 576.2L231 577.6L232 579.0L233 580.2L234 581.3L235 582.3L236 583.3L237 584.2L238 585.0L239 585.8L240 586.5L241 587.2L242 587.8L243 588.5L244 589.0L245 589.6L246 590.1L247 590.6L248 591.1L249 591.5L250 591.9L251 592.3L253 593.1L255 593.8L257 594.4L259 595.0L261 595.5L263 596.0L265 596.5L267 596.9L270 597.5L273 598.0L276 598.4L280 598.9L284 599.4L289 599.9L295 600.3L299 600.1L300 599.5L301 598.0L302 594.8L303 589.2L304 580.4L305 568.2L306 553.6L307 538.2L308 524.5L309 514.5L310 509.4L311 509.1L312 512.4L313 517.9L314 524.5L315 531.2L316 537.3L317 542.8L318 547.3L319 550.8L320 553.3L321 554.9L322 555.6L325 555.7L326 556.2L327 557.3L328 559.0L329 561.0L330 563.1L331 565.1L332 566.8L333 568.2L334 569.1L335 569.9L336 570.6L337 571.4L338 572.5L339 573.8L340 575.2L341 576.8L342 578.4L343 580.0L344 581.4L345 582.7L346 583.9L347 584.8L348 585.6L349 586.1L353 585.8L354 585.3L356 584.7L358 585.1L359 585.7L360 586.5L361 587.3L362 588.2L363 589.1L364 589.9L365 590.6L366 591.3L367 591.9L368 592.4L369 592.9L370 593.3L371 593.7L373 594.5L375 595.1L377 595.6L379 596.1L381 596.5L384 597.1L387 597.6L390 598.0L394 598.6L398 599.0L403 599.5L409 600.0L416 600.4L425 600.8L438 601.2L461 601.7L489 601.2L490 600.8L491 600.2L492 599.4L493 598.2L494 596.6L495 594.5L496 592.0L497 588.8L498 585.2L499 581.1L500 576.7L501 572.1L502 567.6L503 563.3L504 559.5L505 556.3L506 554.0L507 552.4L508 551.8L509 551.9L510 552.8L511 554.3L512 556.2L513 558.4L514 560.9L515 563.4L516 565.9L517 568.3L518 570.6L519 572.8L520 574.8L521 576.6L522 578.3L523 579.8L524 581.1L525 582.2L526 583.2L527 584.0L528 584.6L529 585.0L533 584.9L534 584.4L535 583.8L536 583.2L537 582.4L538 581.6L539 580.9L540 580.1L541 579.4L542 578.9L543 578.4L547 578.4L548 578.8L549 579.3L550 580.0L551 580.8L552 581.7L553 582.7L554 583.7L555 584.7L556 585.7L557 586.6L558 587.5L559 588.4L560 589.2L561 590.0L562 590.7L563 591.3L564 591.9L565 592.4L566 592.9L567 593.3L568 593.8L570 594.5L572 595.1L574 595.6L576 596.1L578 596.5L581 597.1L584 597.6L587 598.0L591 598.4L595 598.9L600 599.3L606 599.8L613 600.2L622 600.6L634 601.0L653 601.4L697 601.8L843 602.0" stroke="#00e0ff"/><path d="M75 602.0L202 601.7L203 599.4L204 588.1L205 556.5L206 505.1L207 458.4L208 438.8L209 440.9L210 450.1L211 460.8L212 473.1L213 486.2L214 498.2L215 507.7L216 515.1L217 521.7L218 528.7L219 535.7L220 542.3L221 548.0L222 552.7L223 555.9L224 556.8L225 555.3L226 553.0L227 552.3L228 554.2L229 557.9L230 561.8L231 565.0L232 567.1L233 568.2L234 569.1L235 570.3L236 572.2L237 574.3L238 576.4L239 578.2L240 579.9L241 581.3L242 582.5L243 583.6L244 584.6L245 585.5L246 586.3L247 587.1L248 587.8L249 588.5L250 589.1L251 589.7L252 590.2L253 590.7L254 591.2L255 591.7L256 592.1L257 592.5L259 593.3L261 594.0L263 594.7L265 595.2L267 595.8L269 596.3L271 596.7L273 597.2L276 597.7L279 598.2L282 598.7L286 599.2L290 599.6L297 599.4L298 598.4L299 596.0L300 591.6L301 584.3L302 573.7L303 560.1L304 545.0L305 530.6L306 519.2L307 512.1L308 509.8L309 511.6L310 516.1L311 521.9L312 528.0L313 533.6L314 538.5L315 542.6L316 545.9L317 548.7L318 551.2L319 553.7L320 556.2L321 558.9L322 561.5L323 564.2L324 566.5L325 568.5L326 569.8L327 570.5L328 570.5L329 569.8L330 568.8L331 567.8L332 567.0L333 566.7L334 567.1L335 568.2L336 569.8L337 571.7L338 573.8L339 575.9L340 577.9L341 579.6L342 581.2L343 582.6L344 583.9L345 585.0L346 585.9L347 586.7L348 587.4L349 588.0L351 588.6L359 589.1L360 589.6L361 590.2L362 590.8L363 591.4L364 592.0L365 592.6L366 593.1L367 593.5L368 593.9L370 594.6L372 595.3L374 595.8L376 596.3L378 596.7L381 597.2L384 597.7L387 598.2L391 598.7L395 599.1L400 599.6L406 600.0L413 600.4L422 600.8L435 601.2L459 601.7L486 601.2L487 600.8L488 600.3L489 599.5L490 598.3L491 596.8L492 594.9L493 592.5L494 589.6L495 586.3L496 582.5L497 578.5L498 574.4L499 570.4L500 566.6L501 563.2L502 560.3L503 558.1L504 556.6L505 555.9L507 556.1L508 556.9L509 558.1L510 559.5L511 561.0L512 562.5L513 564.1L514 565.6L515 567.1L516 568.6L517 570.0L518 571.4L519 572.8L520 574.2L521 575.6L522 577.0L523 578.3L524 579.6L525 580.9L526 582.1L527 583.3L528 584.3L529 585.3L530 586.1L531 586.9L532 587.5L533 588.0L535 588.6L541 588.1L543 587.5L550 587.9L551 588.3L552 588.8L553 589.4L554 589.9L555 590.5L556 591.1L557 591.7L558 592.2L559 592.8L560 593.3L561 593.8L562 594.2L563 594.6L565 595.3L567 595.9L569 596.4L571 596.9L574 597.4L577 597.9L581 598.4L585 598.8L590 599.3L596 599.7L603 600.2L612 600.6L624 601.0L643 601.4L686 601.8L843 602.0" stroke="#00e5ff"/><path d="M75 602.0L201 601.8L202 600.2L203 591.7L204 564.7L205 515.5L206 465.6L207 442.0L208 445.8L209 461.0L210 477.1L211 490.8L212 501.0L213 506.2L214 506.1L215 503.5L216 502.2L217 504.6L218 509.5L219 514.6L220 519.1L221 523.9L222 530.0L223 536.9L224 543.6L225 549.5L226 554.5L227 558.7L228 562.3L229 565.4L230 568.1L231 570.4L232 572.4L233 574.2L234 575.9L235 577.3L236 578.7L237 579.9L238 581.0L239 582.0L240 583.0L241 583.9L242 584.7L243 585.5L244 586.2L245 586.9L246 587.6L247 588.2L248 588.8L249 589.3L250 589.9L251 590.4L252 590.9L253 591.3L254 591.8L255 592.2L256 592.6L258 593.4L260 594.0L262 594.7L264 595.3L266 595.8L268 596.3L270 596.7L272 597.1L275 597.7L278 598.2L281 598.6L285 599.1L289 599.5L294 600.0L298 600.0L299 599.6L300 598.5L301 596.1L302 591.6L303 584.1L304 573.4L305 559.7L306 544.6L307 530.3L308 518.9L309 512.0L310 510.0L311 511.9L312 516.6L313 522.8L314 529.3L315 535.7L316 541.6L317 546.9L318 551.6L319 555.8L320 559.3L321 562.2L322 564.5L323 566.0L324 566.6L325 566.5L326 565.7L327 564.5L328 563.2L329 562.2L330 561.8L331 562.0L332 562.8L333 563.8L334 564.7L335 565.3L336 565.3L337 564.8L338 563.8L339 562.6L340 561.6L341 561.1L342 561.2L343 562.1L344 563.7L345 565.7L346 568.1L347 570.6L348 573.0L349 575.2L350 577.3L351 579.1L352 580.7L353 582.2L354 583.4L355 584.5L356 585.5L357 586.4L358 587.2L359 587.9L360 588.6L361 589.2L362 589.8L363 590.3L364 590.8L365 591.2L366 591.7L367 592.1L369 592.8L371 593.5L373 594.1L375 594.7L377 595.2L379 595.7L381 596.1L383 596.5L386 597.1L389 597.6L392 598.0L396 598.5L400 599.0L405 599.5L410 599.9L417 600.3L426 600.8L438 601.2L459 601.6L488 601.1L489 600.7L490 600.1L491 599.2L492 597.9L493 596.3L494 594.1L495 591.5L496 588.3L497 584.6L498 580.6L499 576.2L500 571.8L501 567.4L502 563.3L503 559.7L504 556.8L505 554.6L506 553.2L507 552.6L508 552.8L509 553.6L510 554.8L511 556.4L512 558.1L513 559.9L514 561.6L515 563.2L516 564.6L517 565.7L518 566.5L519 567.1L521 567.5L524 567.1L526 566.7L530 567.1L531 567.5L532 568.0L533 568.6L534 569.3L535 570.0L536 570.6L537 571.2L538 571.7L539 572.1L541 572.6L546 572.1L552 572.3L553 572.7L554 573.3L555 574.1L556 574.9L557 575.9L558 577.0L559 578.1L560 579.2L561 580.4L562 581.5L563 582.6L564 583.7L565 584.8L566 585.7L567 586.6L568 587.5L569 588.3L570 589.0L571 589.7L572 590.3L573 590.9L574 591.4L575 591.9L576 592.3L577 592.7L579 593.5L581 594.1L583 594.7L585 595.2L587 595.7L589 596.1L592 596.7L595 597.2L598 597.6L601 598.0L605 598.5L609 598.9L614 599.4L620 599.8L627 600.2L636 600.7L648 601.1L667 601.5L718 601.9L843 602.0" stroke="#00e9ff"/><path d="M75 602.0L187 601.8L188 600.9L189 597.4L190 587.2L191 566.5L192 536.9L193 508.0L194 490.4L195 487.0L196 493.1L197 502.7L198 512.2L199 520.7L200 528.1L201 534.5L202 540.0L203 544.8L204 549.0L205 552.7L206 556.0L207 558.9L208 561.5L209 563.8L210 565.9L211 567.8L212 569.6L213 571.1L214 572.6L215 573.9L216 575.2L217 576.3L218 577.4L219 578.4L220 579.4L221 580.3L222 581.2L223 582.0L224 582.7L225 583.5L226 584.2L227 584.8L228 585.5L229 586.1L230 586.7L231 587.2L232 587.8L233 588.3L234 588.8L235 589.2L236 589.7L237 590.1L238 590.6L239 591.0L241 591.8L243 592.5L245 593.1L247 593.8L249 594.3L251 594.9L253 595.4L255 595.8L257 596.3L259 596.7L262 597.2L265 597.7L268 598.1L273 598.3L274 597.8L275 596.7L276 594.4L277 590.6L278 584.7L279 576.7L280 567.0L281 556.5L282 546.6L283 538.5L284 533.2L285 530.9L286 531.2L287 533.5L288 537.1L289 541.1L290 545.2L291 549.1L292 552.7L293 555.9L294 558.9L295 561.5L296 563.9L297 566.0L298 568.0L299 569.8L300 571.4L301 572.8L302 574.2L303 575.4L304 576.6L305 577.6L306 578.6L307 579.5L308 580.4L309 581.2L310 582.0L311 582.7L312 583.4L313 584.0L314 584.6L315 585.2L316 585.7L317 586.2L318 586.7L319 587.2L320 587.7L321 588.1L322 588.5L323 589.0L325 589.7L327 590.4L329 591.1L331 591.7L333 592.3L335 592.9L337 593.4L339 593.9L341 594.3L343 594.8L345 595.2L348 595.7L351 596.2L354 596.7L357 597.2L361 597.7L365 598.1L369 598.6L374 599.0L380 599.5L387 599.9L395 600.4L405 600.8L419 601.2L440 600.6L441 600.1L442 599.4L443 598.4L444 597.1L445 595.4L446 593.4L447 590.9L448 588.2L449 585.1L450 582.0L451 578.8L452 575.8L453 573.0L454 570.7L455 568.8L456 567.5L457 566.7L459 566.6L460 567.1L461 567.9L462 569.0L463 570.1L464 571.3L465 572.6L466 573.8L467 575.0L468 576.2L469 577.2L470 578.3L471 579.2L472 580.1L473 581.0L474 581.8L475 582.6L476 583.3L477 583.9L478 584.6L479 585.2L480 585.7L481 586.3L482 586.8L483 587.2L484 587.7L485 588.1L486 588.5L488 589.3L490 590.0L492 590.6L494 591.2L496 591.7L498 592.2L500 592.6L502 593.1L505 593.6L508 594.2L511 594.6L514 595.1L517 595.5L521 596.0L525 596.4L529 596.8L534 597.3L539 597.7L545 598.2L552 598.6L559 599.0L567 599.4L577 599.9L589 600.3L604 600.7L625 601.1L658 601.5L750 601.9L843 602.0" stroke="#ff2100" stroke-width="1.5"/><path d="M75 602.0L187 601.9L188 601.3L189 598.8L190 590.7L191 572.8L192 544.5L193 513.6L194 491.6L195 484.3L196 488.6L197 497.8L198 507.7L199 516.7L200 524.6L201 531.4L202 537.2L203 542.3L204 546.8L205 550.7L206 554.2L207 557.2L208 560.0L209 562.4L210 564.6L211 566.6L212 568.4L213 570.1L214 571.6L215 573.0L216 574.3L217 575.5L218 576.6L219 577.7L220 578.7L221 579.6L222 580.5L223 581.3L224 582.1L225 582.9L226 583.6L227 584.3L228 584.9L229 585.6L230 586.2L231 586.8L232 587.3L233 587.8L234 588.4L235 588.9L236 589.3L237 589.8L238 590.2L239 590.6L240 591.0L242 591.8L244 592.5L246 593.2L248 593.8L250 594.4L252 594.9L254 595.4L256 595.9L258 596.3L261 596.9L264 597.4L267 597.9L270 598.3L274 598.1L275 597.3L276 595.6L277 592.6L278 587.6L279 580.5L280 571.4L281 560.9L282 550.4L283 541.1L284 534.2L285 530.3L286 529.3L287 530.8L288 533.9L289 537.8L290 542.0L291 546.1L292 549.9L293 553.4L294 556.6L295 559.4L296 562.0L297 564.3L298 566.3L299 568.2L300 570.0L301 571.5L302 573.0L303 574.3L304 575.5L305 576.6L306 577.7L307 578.6L308 579.6L309 580.4L310 581.2L311 581.9L312 582.7L313 583.3L314 584.0L315 584.6L316 585.1L317 585.7L318 586.2L319 586.7L320 587.2L321 587.6L322 588.1L323 588.5L324 588.9L326 589.7L328 590.4L330 591.1L332 591.7L334 592.3L336 592.8L338 593.3L340 593.8L342 594.3L344 594.7L346 595.1L349 595.7L352 596.2L355 596.7L358 597.1L361 597.5L365 598.0L369 598.4L374 598.9L379 599.3L385 599.7L392 600.2L401 600.6L413 601.0L431 601.4L440 601.0L441 600.6L442 600.1L443 599.4L444 598.3L445 597.0L446 595.3L447 593.2L448 590.7L449 587.9L450 584.8L451 581.5L452 578.3L453 575.2L454 572.4L455 570.0L456 568.1L457 566.8L458 566.0L460 565.9L461 566.4L462 567.3L463 568.3L464 569.5L465 570.7L466 572.0L467 573.3L468 574.5L469 575.7L470 576.8L471 577.8L472 578.8L473 579.7L474 580.6L475 581.4L476 582.2L477 582.9L478 583.6L479 584.2L480 584.8L481 585.4L482 586.0L483 586.5L484 587.0L485 587.4L486 587.9L487 588.3L489 589.0L491 589.7L493 590.4L495 591.0L497 591.5L499 592.0L501 592.5L503 592.9L506 593.5L509 594.0L512 594.5L515 595.0L518 595.4L522 595.9L526 596.3L530 596.7L535 597.2L540 597.6L546 598.1L552 598.5L559 598.9L567 599.3L576 599.7L587 600.1L601 600.6L620 601.0L648 601.4L707 601.8L843 602.0" stroke="#ff3f00" stroke-width="1.5"/><path d="M75 602.0L187 601.9L188 601.4L189 599.3L190 592.2L191 575.5L192 547.8L193 516.0L194 491.7L195 482.2L196 485.3L197 494.3L198 504.5L199 513.8L200 522.0L201 529.1L202 535.2L203 540.5L204 545.1L205 549.2L206 552.8L207 555.9L208 558.8L209 561.3L210 563.6L211 565.6L212 567.5L213 569.2L214 570.8L215 572.2L216 573.6L217 574.8L218 576.0L219 577.0L220 578.1L221 579.0L222 579.9L223 580.8L224 581.6L225 582.4L226 583.1L227 583.8L228 584.5L229 585.2L230 585.8L231 586.4L232 586.9L233 587.5L234 588.0L235 588.5L236 589.0L237 589.5L238 589.9L239 590.4L240 590.8L241 591.2L243 591.9L245 592.6L247 593.3L249 593.9L251 594.5L253 595.0L255 595.5L257 595.9L259 596.4L262 596.9L265 597.5L268 597.9L272 598.4L274 598.2L275 597.5L276 596.0L277 593.3L278 588.8L279 582.1L280 573.3L281 562.9L282 552.0L283 542.1L284 534.3L285 529.6L286 527.9L287 528.9L288 531.7L289 535.5L290 539.8L291 544.0L292 548.0L293 551.6L294 554.9L295 557.9L296 560.6L297 563.0L298 565.1L299 567.1L300 568.9L301 570.5L302 572.0L303 573.4L304 574.7L305 575.9L306 576.9L307 578.0L308 578.9L309 579.8L310 580.6L311 581.4L312 582.1L313 582.8L314 583.4L315 584.1L316 584.7L317 585.2L318 585.8L319 586.3L320 586.8L321 587.2L322 587.7L323 588.1L324 588.5L325 588.9L327 589.7L329 590.4L331 591.1L333 591.7L335 592.3L337 592.8L339 593.4L341 593.8L343 594.3L345 594.7L347 595.1L350 595.7L353 596.2L356 596.7L359 597.1L363 597.7L367 598.1L371 598.6L376 599.0L382 599.5L389 599.9L397 600.4L407 600.8L421 601.2L441 600.8L442 600.3L443 599.7L444 598.8L445 597.6L446 596.1L447 594.1L448 591.8L449 589.0L450 586.0L451 582.8L452 579.5L453 576.2L454 573.2L455 570.5L456 568.3L457 566.7L458 565.6L459 565.1L461 565.4L462 566.1L463 567.1L464 568.3L465 569.5L466 570.8L467 572.1L468 573.3L469 574.6L470 575.7L471 576.8L472 577.9L473 578.8L474 579.7L475 580.6L476 581.4L477 582.2L478 582.9L479 583.6L480 584.2L481 584.8L482 585.4L483 585.9L484 586.4L485 586.9L486 587.4L487 587.8L488 588.2L490 589.0L492 589.7L494 590.3L496 590.9L498 591.4L500 591.9L502 592.4L504 592.8L506 593.2L509 593.8L512 594.3L515 594.7L518 595.2L522 595.7L526 596.2L530 596.6L535 597.1L540 597.5L546 598.0L552 598.4L559 598.8L567 599.3L576 599.7L587 600.1L601 600.5L619 600.9L645 601.3L696 601.7L843 602.0" stroke="#ff7f00" stroke-width="1.5"/><path d="M75 602.0L188 601.6L189 600.0L190 594.1L191 579.3L192 552.9L193 520.1L194 492.6L195 479.5L196 480.5L197 489.0L198 499.5L199 509.3L200 518.0L201 525.5L202 532.0L203 537.6L204 542.5L205 546.8L206 550.6L207 553.9L208 556.9L209 559.6L210 562.0L211 564.1L212 566.1L213 567.9L214 569.5L215 571.0L216 572.4L217 573.7L218 574.9L219 576.1L220 577.1L221 578.2L222 579.1L223 580.0L224 580.8L225 581.7L226 582.4L227 583.2L228 583.9L229 584.5L230 585.2L231 585.8L232 586.4L233 587.0L234 587.5L235 588.0L236 588.5L237 589.0L238 589.5L239 589.9L240 590.4L241 590.8L242 591.2L244 591.9L246 592.6L248 593.3L250 593.9L252 594.5L254 595.0L256 595.5L258 595.9L260 596.4L263 596.9L266 597.5L269 597.9L274 598.2L275 597.7L276 596.6L277 594.3L278 590.4L279 584.4L280 576.1L281 565.9L282 554.7L283 544.0L284 535.0L285 528.9L286 526.1L287 526.1L288 528.4L289 532.0L290 536.3L291 540.7L292 544.9L293 548.8L294 552.3L295 555.5L296 558.4L297 560.9L298 563.3L299 565.4L300 567.3L301 569.0L302 570.6L303 572.1L304 573.4L305 574.7L306 575.8L307 576.9L308 577.9L309 578.8L310 579.7L311 580.5L312 581.3L313 582.0L314 582.7L315 583.3L316 583.9L317 584.5L318 585.1L319 585.6L320 586.1L321 586.6L322 587.1L323 587.6L324 588.0L325 588.4L326 588.8L328 589.6L330 590.3L332 591.0L334 591.6L336 592.2L338 592.8L340 593.3L342 593.8L344 594.2L346 594.7L348 595.1L351 595.6L354 596.2L357 596.6L360 597.1L363 597.5L367 598.0L371 598.4L376 598.9L381 599.3L387 599.7L394 600.1L403 600.6L415 601.0L433 601.4L441 601.0L442 600.6L443 600.2L444 599.4L445 598.5L446 597.1L447 595.4L448 593.3L449 590.8L450 587.9L451 584.7L452 581.3L453 577.9L454 574.6L455 571.6L456 569.0L457 566.9L458 565.3L459 564.4L460 563.9L461 564.0L462 564.5L463 565.3L464 566.4L465 567.6L466 568.9L467 570.2L468 571.6L469 572.8L470 574.1L471 575.3L472 576.4L473 577.4L474 578.4L475 579.3L476 580.2L477 581.0L478 581.8L479 582.5L480 583.2L481 583.9L482 584.5L483 585.0L484 585.6L485 586.1L486 586.6L487 587.1L488 587.5L489 587.9L491 588.7L493 589.4L495 590.1L497 590.6L499 591.2L501 591.7L503 592.2L505 592.6L507 593.0L510 593.6L513 594.1L516 594.6L519 595.0L522 595.4L526 595.9L530 596.4L534 596.8L539 597.2L544 597.7L550 598.1L556 598.5L563 598.9L571 599.3L581 599.8L593 600.2L608 600.6L628 601.1L659 601.5L734 601.9L843 602.0" stroke="#ffbf00" stroke-width="1.5"/><path d="M75 602.0L188 601.7L189 600.5L190 595.7L191 582.8L192 558.1L193 524.9L194 494.4L195 477.5L196 476.0L197 483.6L198 494.3L199 504.7L200 513.8L201 521.8L202 528.6L203 534.6L204 539.8L205 544.3L206 548.3L207 551.9L208 555.0L209 557.8L210 560.3L211 562.6L212 564.7L213 566.5L214 568.3L215 569.8L216 571.3L217 572.7L218 573.9L219 575.1L220 576.2L221 577.3L222 578.2L223 579.2L224 580.1L225 580.9L226 581.7L227 582.5L228 583.2L229 583.9L230 584.6L231 585.2L232 585.8L233 586.4L234 587.0L235 587.5L236 588.0L237 588.5L238 589.0L239 589.5L240 589.9L241 590.4L242 590.8L243 591.2L245 591.9L247 592.6L249 593.3L251 593.9L253 594.5L255 595.0L257 595.5L259 595.9L261 596.4L264 596.9L267 597.5L270 597.9L275 597.8L276 597.0L277 595.2L278 591.9L279 586.5L280 578.9L281 569.0L282 557.7L283 546.4L284 536.3L285 528.9L286 524.7L287 523.7L288 525.3L289 528.6L290 532.8L291 537.3L292 541.8L293 545.9L294 549.6L295 553.0L296 556.1L297 558.8L298 561.3L299 563.6L300 565.6L301 567.5L302 569.2L303 570.7L304 572.1L305 573.4L306 574.7L307 575.8L308 576.8L309 577.8L310 578.7L311 579.6L312 580.4L313 581.2L314 581.9L315 582.6L316 583.2L317 583.8L318 584.4L319 585.0L320 585.5L321 586.0L322 586.5L323 587.0L324 587.4L325 587.9L326 588.3L327 588.7L329 589.5L331 590.2L333 590.9L335 591.5L337 592.1L339 592.7L341 593.2L343 593.7L345 594.2L347 594.6L349 595.0L352 595.6L355 596.1L358 596.6L361 597.0L364 597.4L368 597.9L372 598.4L377 598.9L382 599.3L388 599.7L395 600.1L404 600.5L416 601.0L434 601.4L442 600.9L443 600.5L444 599.9L445 599.1L446 598.0L447 596.6L448 594.7L449 592.4L450 589.7L451 586.7L452 583.3L453 579.9L454 576.4L455 573.1L456 570.0L457 567.5L458 565.4L459 564.0L460 563.1L462 563.1L463 563.7L464 564.6L465 565.7L466 567.0L467 568.3L468 569.7L469 571.1L470 572.4L471 573.6L472 574.8L473 575.9L474 577.0L475 578.0L476 578.9L477 579.8L478 580.7L479 581.4L480 582.2L481 582.9L482 583.5L483 584.1L484 584.7L485 585.3L486 585.8L487 586.3L488 586.8L489 587.2L490 587.6L491 588.0L493 588.8L495 589.5L497 590.1L499 590.7L501 591.2L503 591.7L505 592.2L507 592.6L509 593.0L512 593.6L515 594.1L518 594.6L521 595.0L524 595.4L528 595.9L532 596.3L536 596.7L541 597.2L546 597.6L552 598.1L558 598.5L565 598.9L573 599.3L582 599.7L593 600.1L607 600.6L625 601.0L652 601.4L707 601.8L843 602.0" stroke="#ffe900" stroke-width="1.5"/><path d="M75 602.0L121 601.6L122 600.8L123 600.0L124 600.2L125 600.8L126 601.2L128 601.7L187 601.9L188 601.4L189 598.9L190 590.6L191 571.5L192 541.8L193 510.9L194 491.1L195 486.9L196 493.2L197 503.2L198 513.1L199 521.8L200 529.4L201 535.8L202 541.4L203 546.2L204 550.4L205 554.1L206 557.3L207 560.2L208 562.8L209 565.1L210 567.1L211 569.0L212 570.7L213 572.2L214 573.6L215 575.0L216 576.2L217 577.3L218 578.4L219 579.4L220 580.3L221 581.2L222 582.1L223 582.9L224 583.6L225 584.3L226 585.0L227 585.7L228 586.3L229 586.9L230 587.5L231 588.0L232 588.5L233 589.1L234 589.5L235 590.0L236 590.5L237 590.9L238 591.3L240 592.1L242 592.8L244 593.5L246 594.1L248 594.7L250 595.2L252 595.7L254 596.1L256 596.6L259 597.1L262 597.7L265 598.1L268 598.5L272 599.0L274 598.7L275 598.1L276 596.7L277 593.9L278 589.2L279 582.2L280 573.0L281 562.4L282 551.5L283 542.1L284 535.2L285 531.6L286 531.2L287 533.1L288 536.5L289 540.7L290 545.0L291 549.1L292 552.8L293 556.2L294 559.2L295 562.0L296 564.4L297 566.6L298 568.6L299 570.4L300 572.0L301 573.5L302 574.9L303 576.1L304 577.3L305 578.3L306 579.3L307 580.2L308 581.1L309 581.9L310 582.6L311 583.3L312 584.0L313 584.6L314 585.2L315 585.8L316 586.3L317 586.9L318 587.4L319 587.8L320 588.3L321 588.7L322 589.1L323 589.5L325 590.3L327 591.0L329 591.7L331 592.3L333 592.8L335 593.4L337 593.9L339 594.4L341 594.8L343 595.2L346 595.8L349 596.3L352 596.8L355 597.3L358 597.7L362 598.2L366 598.6L371 599.1L376 599.5L382 599.9L390 600.3L400 600.8L414 601.2L441 600.8L442 600.3L443 599.6L444 598.6L445 597.3L446 595.5L447 593.4L448 590.8L449 587.9L450 584.7L451 581.3L452 578.0L453 574.9L454 572.2L455 569.9L456 568.2L457 567.1L458 566.5L459 566.5L460 566.9L461 567.7L462 568.7L463 569.9L464 571.1L465 572.4L466 573.7L467 575.0L468 576.2L469 577.3L470 578.4L471 579.4L472 580.3L473 581.2L474 582.0L475 582.8L476 583.5L477 584.2L478 584.9L479 585.5L480 586.0L481 586.6L482 587.1L483 587.6L484 588.0L485 588.4L486 588.8L488 589.6L490 590.3L492 590.9L494 591.5L496 592.0L498 592.5L500 593.0L502 593.4L505 593.9L508 594.5L511 594.9L514 595.4L518 595.9L522 596.4L526 596.8L531 597.3L536 597.7L542 598.2L548 598.6L555 599.0L563 599.4L573 599.9L585 600.3L600 600.7L621 601.1L655 601.5L770 601.9L843 602.0" stroke="#ffb500" stroke-width="2"/><path d="M75 602.0L122 601.6L123 601.0L127 601.6L135 602.0L188 601.6L189 599.9L190 593.5L191 577.3L192 549.6L193 517.6L194 494.3L195 486.6L196 491.3L197 501.0L198 511.1L199 520.2L200 528.0L201 534.7L202 540.4L203 545.4L204 549.7L205 553.5L206 556.9L207 559.8L208 562.4L209 564.8L210 566.9L211 568.8L212 570.5L213 572.1L214 573.5L215 574.9L216 576.1L217 577.2L218 578.3L219 579.3L220 580.3L221 581.2L222 582.0L223 582.8L224 583.6L225 584.3L226 585.0L227 585.7L228 586.3L229 586.9L230 587.5L231 588.0L232 588.6L233 589.1L234 589.6L235 590.0L236 590.5L237 590.9L238 591.3L240 592.1L242 592.8L244 593.5L246 594.1L248 594.7L250 595.2L252 595.7L254 596.2L256 596.6L259 597.2L262 597.7L265 598.2L268 598.6L272 599.0L274 598.8L275 598.2L276 596.7L277 594.0L278 589.3L279 582.3L280 573.1L281 562.4L282 551.5L283 542.0L284 535.2L285 531.6L286 531.2L287 533.2L288 536.7L289 540.9L290 545.2L291 549.3L292 553.0L293 556.4L294 559.5L295 562.2L296 564.6L297 566.8L298 568.8L299 570.6L300 572.2L301 573.7L302 575.0L303 576.3L304 577.4L305 578.5L306 579.5L307 580.4L308 581.2L309 582.0L310 582.8L311 583.5L312 584.1L313 584.8L314 585.4L315 585.9L316 586.5L317 587.0L318 587.5L319 587.9L320 588.4L321 588.8L322 589.2L323 589.6L325 590.4L327 591.1L329 591.8L331 592.4L333 592.9L335 593.5L337 594.0L339 594.5L341 594.9L343 595.3L346 595.9L349 596.4L352 596.9L355 597.3L358 597.7L362 598.2L366 598.6L371 599.1L376 599.5L382 599.9L390 600.4L400 600.8L414 601.2L441 600.8L442 600.4L443 599.7L444 598.7L445 597.3L446 595.6L447 593.4L448 590.8L449 587.9L450 584.7L451 581.3L452 578.0L453 574.9L454 572.2L455 569.9L456 568.2L457 567.1L458 566.5L459 566.5L460 567.0L461 567.7L462 568.8L463 570.0L464 571.2L465 572.5L466 573.8L467 575.1L468 576.3L469 577.4L470 578.5L471 579.5L472 580.4L473 581.3L474 582.1L475 582.9L476 583.6L477 584.3L478 585.0L479 585.6L480 586.1L481 586.7L482 587.2L483 587.6L484 588.1L485 588.5L486 588.9L488 589.7L490 590.4L492 591.0L494 591.6L496 592.1L498 592.6L500 593.0L502 593.4L505 594.0L508 594.5L511 595.0L514 595.4L518 595.9L522 596.4L526 596.8L531 597.3L536 597.8L542 598.2L548 598.6L555 599.1L563 599.5L573 599.9L585 600.3L600 600.8L621 601.2L656 601.6L795 602.0L843 602.0" stroke="#ff0000" stroke-width="2"/></g></svg><div class="t d" style="right:1007px;top:596px;color:#e8e8e8">0</div><div class="t d" style="right:1007px;top:582px;color:#e8e8e8">10000</div><div class="t d" style="right:1007px;top:567px;color:#e8e8e8">20000</div><div class="t d" style="right:1007px;top:553px;color:#e8e8e8">30000</div><div class="t d" style="right:1007px;top:538px;color:#e8e8e8">40000</div><div class="t d" style="right:1007px;top:524px;color:#e8e8e8">50000</div><div class="t d" style="right:1007px;top:509px;color:#e8e8e8">60000</div><div class="t d" style="right:1007px;top:495px;color:#e8e8e8">70000</div><div class="t d" style="right:1007px;top:481px;color:#e8e8e8">80000</div><div class="t d" style="right:1007px;top:466px;color:#e8e8e8">90000</div><div class="t d" style="right:1007px;top:452px;color:#e8e8e8">100000</div><div class="t d" style="right:1007px;top:437px;color:#e8e8e8">110000</div><div class="t d" style="right:1007px;top:423px;color:#e8e8e8">120000</div><div class="t d" style="right:1007px;top:409px;color:#e8e8e8">130000</div><div class="t n" style="left:61px;top:606px;color:#e8e8e8">0.000</div><div class="t n" style="left:109px;top:606px;color:#e8e8e8">0.100</div><div class="t n" style="left:157px;top:606px;color:#e8e8e8">0.200</div><div class="t n" style="left:205px;top:606px;color:#e8e8e8">0.300</div><div class="t n" style="left:253px;top:606px;color:#e8e8e8">0.400</div><div class="t n" style="left:301px;top:606px;color:#e8e8e8">0.500</div><div class="t n" style="left:349px;top:606px;color:#e8e8e8">0.600</div><div class="t n" style="left:397px;top:606px;color:#e8e8e8">0.700</div><div class="t n" style="left:445px;top:606px;color:#e8e8e8">0.800</div><div class="t n" style="left:493px;top:606px;color:#e8e8e8">0.900</div><div class="t n" style="left:541px;top:606px;color:#e8e8e8">1.000</div><div class="t n" style="left:589px;top:606px;color:#e8e8e8">1.100</div><div class="t n" style="left:637px;top:606px;color:#e8e8e8">1.200</div><div class="t n" style="left:685px;top:606px;color:#e8e8e8">1.300</div><div class="t n" style="left:733px;top:606px;color:#e8e8e8">1.400</div><div class="t n" style="left:781px;top:606px;color:#e8e8e8">1.500</div><div class="t n" style="left:829px;top:606px;color:#e8e8e8">1.600</div><div class="t m" style="left:76px;top:395px;color:#e8e8e8">uV</div><div class="t m" style="left:844px;top:592px;color:#e8e8e8">min</div><div class="a" style="left:906px;top:122px;width:144px;height:20px;background:#f9f9f9;border:1px solid #9c9c9c"></div><div class="a" style="left:906px;top:141px;width:144px;height:72px;background:#f0f0f0;border:1px solid #858585"></div><div class="t" style="left:923.6px;top:124.8px;font-size:14.13px;letter-spacing:-0.40px;color:#111"><span style="-webkit-text-stroke:0.5px #111">保留时间</span></div><svg width="1080" height="643" style="left:0;top:0"><path d="M916.5 130.5L913 132.5L916.5 134.5M919.5 130.5L916 132.5L919.5 134.5" fill="none" stroke="#8a8c90" stroke-width="0.9"/></svg><div class="a" style="left:906px;top:221px;width:144px;height:20px;background:#f9f9f9;border:1px solid #9c9c9c"></div><div class="a" style="left:906px;top:240px;width:144px;height:72px;background:#f0f0f0;border:1px solid #858585"></div><div class="t" style="left:923.6px;top:223.8px;font-size:14.13px;letter-spacing:-0.40px;color:#111"><span style="-webkit-text-stroke:0.5px #111">拖尾因子</span></div><svg width="1080" height="643" style="left:0;top:0"><path d="M916.5 229.5L913 231.5L916.5 233.5M919.5 229.5L916 231.5L919.5 233.5" fill="none" stroke="#8a8c90" stroke-width="0.9"/></svg><div class="a" style="left:906px;top:320px;width:144px;height:20px;background:#f9f9f9;border:1px solid #9c9c9c"></div><div class="a" style="left:906px;top:339px;width:144px;height:72px;background:#f0f0f0;border:1px solid #858585"></div><div class="t" style="left:923.6px;top:322.8px;font-size:14.13px;letter-spacing:-0.40px;color:#111"><span style="-webkit-text-stroke:0.5px #111">理论塔板数</span><span class="lm" style="font-size:11px;letter-spacing:0">(USP)</span></div><svg width="1080" height="643" style="left:0;top:0"><path d="M916.5 328.5L913 330.5L916.5 332.5M919.5 328.5L916 330.5L919.5 332.5" fill="none" stroke="#8a8c90" stroke-width="0.9"/></svg><div class="a" style="left:906px;top:419px;width:144px;height:20px;background:#f9f9f9;border:1px solid #9c9c9c"></div><div class="a" style="left:906px;top:438px;width:144px;height:72px;background:#f0f0f0;border:1px solid #858585"></div><div class="t" style="left:923.6px;top:421.8px;font-size:14.13px;letter-spacing:-0.40px;color:#111"><span style="-webkit-text-stroke:0.5px #111">峰宽</span><span class="lm" style="font-size:11px;letter-spacing:0">(</span><span style="-webkit-text-stroke:0.5px #111">高度</span><span class="lm" style="font-size:11px;letter-spacing:0">50%)</span></div><svg width="1080" height="643" style="left:0;top:0"><path d="M916.5 427.5L913 429.5L916.5 431.5M919.5 427.5L916 429.5L919.5 431.5" fill="none" stroke="#8a8c90" stroke-width="0.9"/></svg><div class="a" style="left:906px;top:518px;width:144px;height:20px;background:#f9f9f9;border:1px solid #9c9c9c"></div><div class="a" style="left:906px;top:537px;width:144px;height:76px;background:#f0f0f0;border:1px solid #858585"></div><div class="t" style="left:925px;top:522px;font-size:12px;color:#111"><span class="lm" style="font-size:12px">USP</span></div><div class="t" style="left:943.6px;top:520.8px;font-size:14.13px;letter-spacing:-0.40px;color:#111"><span style="-webkit-text-stroke:0.5px #111">峰宽</span></div><svg width="1080" height="643" style="left:0;top:0"><path d="M916.5 526.5L913 528.5L916.5 530.5M919.5 526.5L916 528.5L919.5 530.5" fill="none" stroke="#8a8c90" stroke-width="0.9"/></svg><svg width="1080" height="643" style="left:0;top:0"><path d="M907.0 197.5L927.0 197.5L930.0 198.3L940.0 198.0L950.0 198.3L958.0 198.6L962.0 197.8L1049.5 197.8" fill="none" stroke="#ff0000" stroke-width="3" stroke-linejoin="round"/><rect x="933.0" y="186.2" width="3" height="3" fill="#ff0000"/><rect x="927.5" y="195.1" width="3" height="3" fill="#ff0000"/><rect x="950.5" y="197.5" width="3" height="3" fill="#ff0000"/><rect x="955.5" y="198.0" width="3" height="3" fill="#ff0000"/><path d="M907.5 290.0L911.0 288.5L915.0 288.3L919.0 288.5L923.0 289.5L926.0 290.5L927.0 292.0" fill="none" stroke="#ff0000" stroke-width="3" stroke-linejoin="round"/><rect x="921.2" y="293.1" width="3" height="3" fill="#ff0000"/><rect x="925.7" y="296.1" width="3" height="3" fill="#ff0000"/><rect x="926.8" y="281.5" width="3" height="3" fill="#ff0000"/><rect x="927.8" y="276.1" width="3" height="3" fill="#ff0000"/><rect x="929.5" y="271.9" width="3" height="3" fill="#ff0000"/><rect x="930.0" y="270.5" width="3" height="3" fill="#ff0000"/><rect x="928.5" y="266.3" width="3" height="3" fill="#ff0000"/><rect x="930.8" y="266.8" width="3" height="3" fill="#ff0000"/><rect x="932.3" y="259.7" width="3" height="3" fill="#ff0000"/><rect x="933.8" y="263.3" width="3" height="3" fill="#ff0000"/><rect x="935.9" y="262.8" width="3" height="3" fill="#ff0000"/><rect x="936.9" y="259.2" width="3" height="3" fill="#ff0000"/><rect x="935.3" y="265.3" width="3" height="3" fill="#ff0000"/><rect x="938.4" y="282.0" width="3" height="3" fill="#ff0000"/><rect x="939.4" y="276.1" width="3" height="3" fill="#ff0000"/><rect x="940.4" y="260.2" width="3" height="3" fill="#ff0000"/><rect x="941.4" y="265.3" width="3" height="3" fill="#ff0000"/><rect x="942.4" y="263.3" width="3" height="3" fill="#ff0000"/><rect x="943.5" y="256.7" width="3" height="3" fill="#ff0000"/><rect x="943.9" y="254.7" width="3" height="3" fill="#ff0000"/><rect x="944.8" y="243.8" width="3" height="3" fill="#ff0000"/><rect x="946.0" y="267.8" width="3" height="3" fill="#ff0000"/><rect x="948.0" y="265.3" width="3" height="3" fill="#ff0000"/><rect x="949.5" y="258.7" width="3" height="3" fill="#ff0000"/><rect x="950.0" y="276.9" width="3" height="3" fill="#ff0000"/><rect x="951.5" y="272.9" width="3" height="3" fill="#ff0000"/><rect x="953.0" y="271.9" width="3" height="3" fill="#ff0000"/><rect x="953.9" y="252.7" width="3" height="3" fill="#ff0000"/><rect x="954.5" y="268.8" width="3" height="3" fill="#ff0000"/><rect x="956.1" y="260.7" width="3" height="3" fill="#ff0000"/><rect x="956.1" y="264.8" width="3" height="3" fill="#ff0000"/><rect x="957.3" y="246.4" width="3" height="3" fill="#ff0000"/><rect x="958.1" y="268.8" width="3" height="3" fill="#ff0000"/><rect x="959.6" y="268.8" width="3" height="3" fill="#ff0000"/><rect x="962.1" y="265.8" width="3" height="3" fill="#ff0000"/><rect x="966.2" y="271.9" width="3" height="3" fill="#ff0000"/><rect x="968.2" y="263.8" width="3" height="3" fill="#ff0000"/><rect x="973.3" y="273.9" width="3" height="3" fill="#ff0000"/><rect x="974.3" y="268.8" width="3" height="3" fill="#ff0000"/><rect x="980.3" y="271.9" width="3" height="3" fill="#ff0000"/><rect x="982.4" y="263.8" width="3" height="3" fill="#ff0000"/><rect x="973.5" y="273.9" width="3" height="3" fill="#ff0000"/><rect x="981.1" y="272.9" width="3" height="3" fill="#ff0000"/><rect x="982.6" y="263.3" width="3" height="3" fill="#ff0000"/><rect x="988.2" y="261.8" width="3" height="3" fill="#ff0000"/><rect x="989.5" y="265.5" width="3" height="3" fill="#ff0000"/><rect x="991.2" y="270.9" width="3" height="3" fill="#ff0000"/><rect x="993.7" y="263.8" width="3" height="3" fill="#ff0000"/><rect x="996.0" y="263.3" width="3" height="3" fill="#ff0000"/><rect x="998.3" y="267.8" width="3" height="3" fill="#ff0000"/><rect x="999.8" y="273.4" width="3" height="3" fill="#ff0000"/><rect x="1002.3" y="263.8" width="3" height="3" fill="#ff0000"/><rect x="1006.9" y="259.7" width="3" height="3" fill="#ff0000"/><rect x="1005.4" y="267.8" width="3" height="3" fill="#ff0000"/><rect x="1008.5" y="264.5" width="3" height="3" fill="#ff0000"/><rect x="1016.0" y="268.8" width="3" height="3" fill="#ff0000"/><rect x="963.5" y="268.5" width="3" height="3" fill="#ff0000"/><rect x="970.5" y="267.5" width="3" height="3" fill="#ff0000"/><rect x="977.5" y="266.5" width="3" height="3" fill="#ff0000"/><rect x="985.5" y="267.5" width="3" height="3" fill="#ff0000"/><path d="M959.0 269.5L966.0 269.0L972.0 268.5L980.0 269.0L988.0 268.5L1000.0 268.0L1012.0 267.5L1020.0 268.3L1030.0 267.8L1040.0 268.3L1049.5 267.5" fill="none" stroke="#ff0000" stroke-width="3" stroke-linejoin="round"/><path d="M908.0 357.6L910.0 360.7L913.1 362.2L915.1 364.2L919.2 364.7L924.2 363.2" fill="none" stroke="#ff0000" stroke-width="3" stroke-linejoin="round"/><rect x="921.7" y="367.8" width="3" height="3" fill="#ff0000"/><rect x="924.7" y="365.2" width="3" height="3" fill="#ff0000"/><rect x="928.3" y="363.7" width="3" height="3" fill="#ff0000"/><rect x="932.8" y="362.7" width="3" height="3" fill="#ff0000"/><rect x="935.9" y="367.8" width="3" height="3" fill="#ff0000"/><rect x="923.2" y="372.8" width="3" height="3" fill="#ff0000"/><rect x="925.2" y="372.8" width="3" height="3" fill="#ff0000"/><rect x="929.3" y="370.8" width="3" height="3" fill="#ff0000"/><rect x="927.8" y="374.8" width="3" height="3" fill="#ff0000"/><rect x="925.7" y="377.9" width="3" height="3" fill="#ff0000"/><rect x="930.8" y="377.9" width="3" height="3" fill="#ff0000"/><rect x="933.8" y="376.9" width="3" height="3" fill="#ff0000"/><rect x="936.9" y="373.3" width="3" height="3" fill="#ff0000"/><rect x="926.8" y="382.4" width="3" height="3" fill="#ff0000"/><rect x="936.9" y="384.5" width="3" height="3" fill="#ff0000"/><rect x="938.9" y="395.6" width="3" height="3" fill="#ff0000"/><rect x="939.4" y="400.6" width="3" height="3" fill="#ff0000"/><rect x="940.4" y="381.9" width="3" height="3" fill="#ff0000"/><rect x="942.9" y="381.4" width="3" height="3" fill="#ff0000"/><rect x="946.0" y="378.4" width="3" height="3" fill="#ff0000"/><rect x="948.0" y="382.9" width="3" height="3" fill="#ff0000"/><rect x="950.0" y="379.9" width="3" height="3" fill="#ff0000"/><rect x="951.0" y="372.8" width="3" height="3" fill="#ff0000"/><rect x="953.0" y="374.8" width="3" height="3" fill="#ff0000"/><rect x="954.1" y="379.4" width="3" height="3" fill="#ff0000"/><rect x="957.1" y="373.3" width="3" height="3" fill="#ff0000"/><rect x="959.1" y="373.3" width="3" height="3" fill="#ff0000"/><rect x="956.1" y="386.0" width="3" height="3" fill="#ff0000"/><rect x="958.0" y="379.5" width="3" height="3" fill="#ff0000"/><rect x="960.1" y="387.0" width="3" height="3" fill="#ff0000"/><rect x="964.2" y="388.0" width="3" height="3" fill="#ff0000"/><rect x="966.2" y="378.9" width="3" height="3" fill="#ff0000"/><rect x="968.2" y="383.9" width="3" height="3" fill="#ff0000"/><rect x="972.3" y="386.0" width="3" height="3" fill="#ff0000"/><rect x="974.3" y="378.4" width="3" height="3" fill="#ff0000"/><rect x="976.3" y="381.9" width="3" height="3" fill="#ff0000"/><rect x="978.3" y="387.0" width="3" height="3" fill="#ff0000"/><rect x="977.8" y="396.1" width="3" height="3" fill="#ff0000"/><rect x="982.4" y="393.0" width="3" height="3" fill="#ff0000"/><rect x="944.5" y="381.5" width="3" height="3" fill="#ff0000"/><rect x="946.5" y="383.5" width="3" height="3" fill="#ff0000"/><rect x="961.5" y="386.5" width="3" height="3" fill="#ff0000"/><rect x="969.5" y="384.5" width="3" height="3" fill="#ff0000"/><rect x="983.6" y="388.0" width="3" height="3" fill="#ff0000"/><rect x="985.6" y="382.4" width="3" height="3" fill="#ff0000"/><rect x="986.6" y="375.9" width="3" height="3" fill="#ff0000"/><rect x="989.7" y="378.4" width="3" height="3" fill="#ff0000"/><rect x="990.7" y="372.8" width="3" height="3" fill="#ff0000"/><rect x="994.7" y="368.8" width="3" height="3" fill="#ff0000"/><rect x="995.2" y="372.8" width="3" height="3" fill="#ff0000"/><rect x="998.3" y="373.8" width="3" height="3" fill="#ff0000"/><rect x="999.5" y="377.5" width="3" height="3" fill="#ff0000"/><rect x="1000.8" y="375.9" width="3" height="3" fill="#ff0000"/><rect x="1002.8" y="383.9" width="3" height="3" fill="#ff0000"/><rect x="1003.8" y="378.9" width="3" height="3" fill="#ff0000"/><path d="M1005.3 381.0L1009.4 379.4L1013.4 378.4L1018.5 375.3L1022.5 377.4L1025.6 380.4L1030.6 380.6L1033.6 380.4L1043.8 380.4L1049.5 380.0" fill="none" stroke="#ff0000" stroke-width="3" stroke-linejoin="round"/><rect x="1029.1" y="375.3" width="3" height="3" fill="#ff0000"/><rect x="1042.3" y="380.5" width="3" height="3" fill="#ff0000"/><path d="M907.2 501.3L926.5 501.3L929.4 500.2L937.6 499.4L942.0 498.0L949.4 499.0L956.9 497.6L964.3 498.0L971.7 498.3L975.4 499.8L979.0 497.2L983.9 496.5L989.8 499.4L997.2 500.9L1004.6 498.7L1019.4 499.8L1034.3 499.1L1049.5 499.1" fill="none" stroke="#ff0000" stroke-width="3" stroke-linejoin="round"/><rect x="925.7" y="485.7" width="3" height="3" fill="#ff0000"/><rect x="927.5" y="486.7" width="3" height="3" fill="#ff0000"/><rect x="929.1" y="487.6" width="3" height="3" fill="#ff0000"/><rect x="933.1" y="493.9" width="3" height="3" fill="#ff0000"/><rect x="939.4" y="488.7" width="3" height="3" fill="#ff0000"/><rect x="938.3" y="492.4" width="3" height="3" fill="#ff0000"/><rect x="978.1" y="492.0" width="3" height="3" fill="#ff0000"/><path d="M907.2 607.2L913.9 607.2L914.6 605.7L923.5 606.5L925.0 608.0L929.4 607.2L933.1 605.0L936.9 605.7L940.6 602.2L942.0 605.0L949.4 605.7L964.3 606.1L979.0 604.6L983.9 604.3L986.1 605.7L996.5 607.2L1003.9 605.0L1012.0 606.5L1049.5 606.5" fill="none" stroke="#ff0000" stroke-width="3" stroke-linejoin="round"/></svg></body></html>
